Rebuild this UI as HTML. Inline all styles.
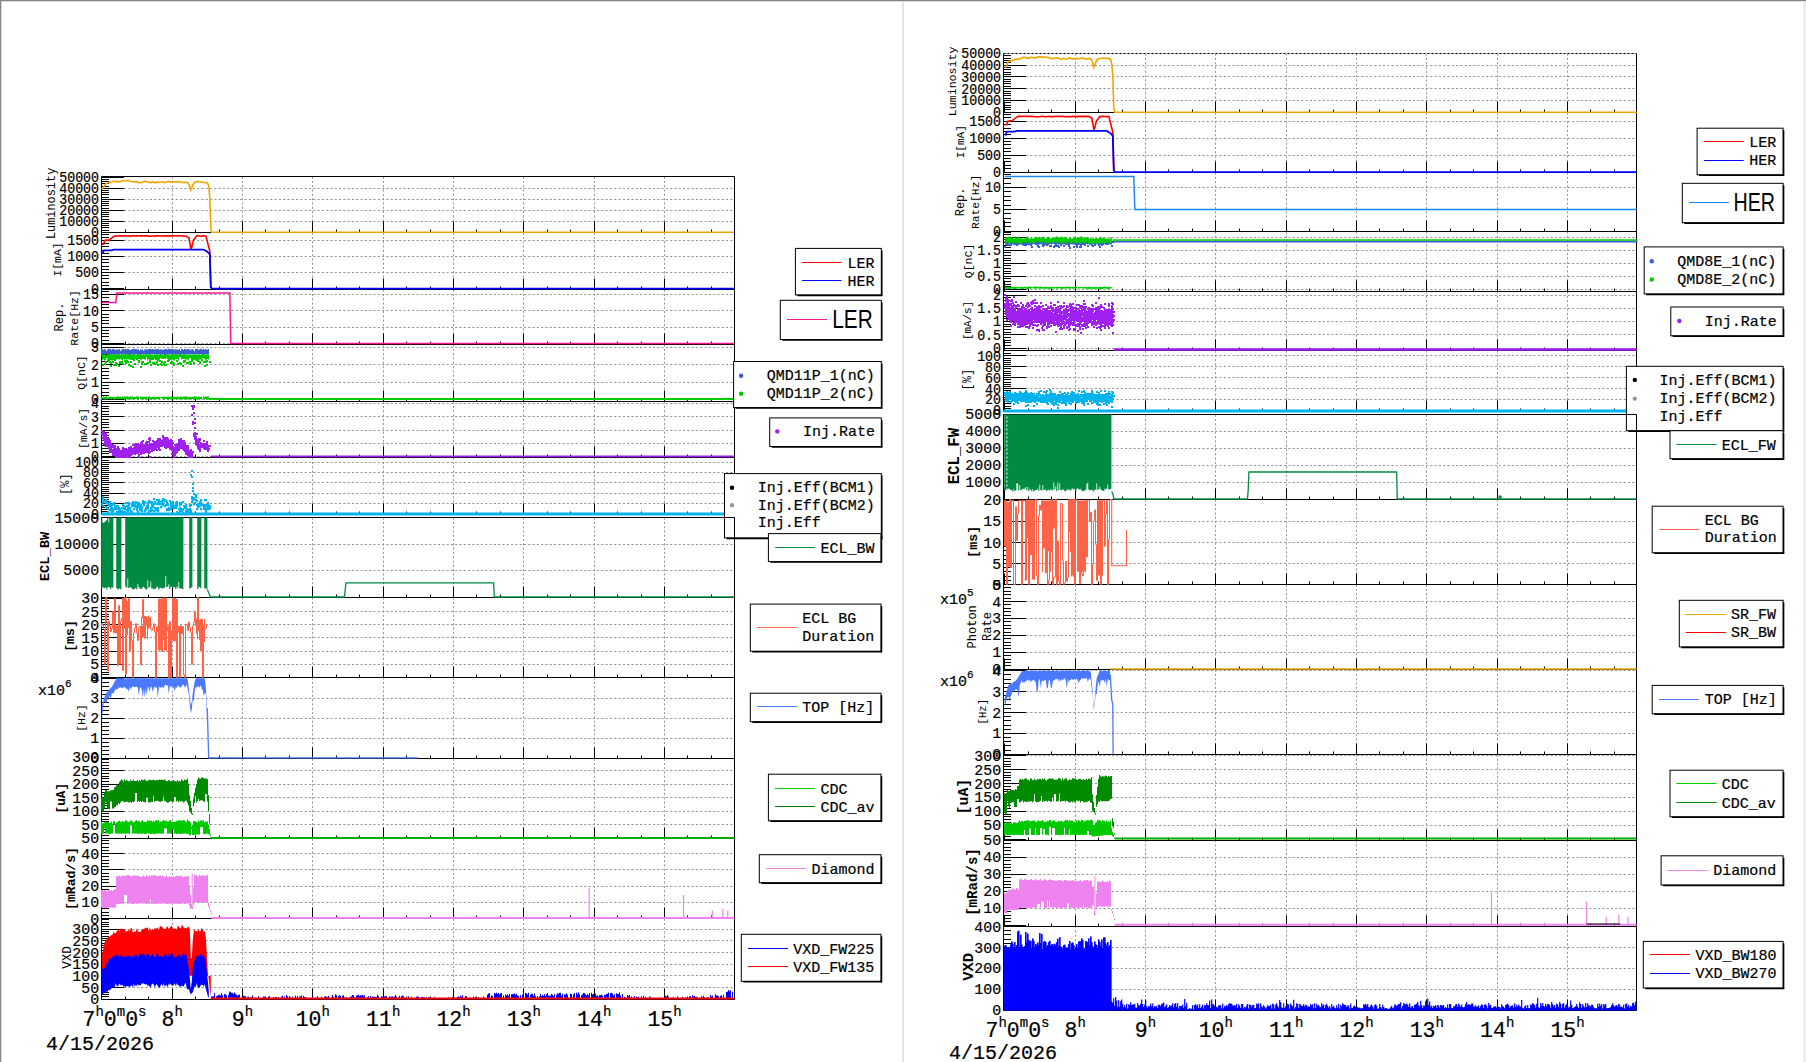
<!DOCTYPE html><html><head><meta charset="utf-8"><style>html,body{margin:0;padding:0;background:#fff;overflow:hidden}svg{display:block}</style></head><body><svg width="1806" height="1062" viewBox="0 0 1806 1062">
<rect x="0" y="0" width="1806" height="1062" fill="#fff" stroke="none" stroke-width="1"/>
<line x1="0" y1="0.5" x2="1806" y2="0.5" stroke="#848484" stroke-width="1.5"/>
<line x1="0.5" y1="0" x2="0.5" y2="1062" stroke="#848484" stroke-width="1.5"/>
<line x1="903" y1="2" x2="903" y2="1062" stroke="#e4e4e4" stroke-width="2"/>
<line x1="1804.5" y1="2" x2="1804.5" y2="1062" stroke="#e8e8e8" stroke-width="2"/>
<path d="M172.5 176.5V232.5M242.5 176.5V232.5M312.5 176.5V232.5M383.5 176.5V232.5M453.5 176.5V232.5M523.5 176.5V232.5M594.5 176.5V232.5M664.5 176.5V232.5M124 221.5H734.5M124 210.5H734.5M124 199.5H734.5M124 188.5H734.5" stroke="#999" stroke-width="1" stroke-dasharray="2.2,2.1" fill="none"/>
<path d="M172.5 232.5V289.5M242.5 232.5V289.5M312.5 232.5V289.5M383.5 232.5V289.5M453.5 232.5V289.5M523.5 232.5V289.5M594.5 232.5V289.5M664.5 232.5V289.5M124 272.5H734.5M124 256.5H734.5M124 240.5H734.5" stroke="#999" stroke-width="1" stroke-dasharray="2.2,2.1" fill="none"/>
<path d="M172.5 289.5V344.5M242.5 289.5V344.5M312.5 289.5V344.5M383.5 289.5V344.5M453.5 289.5V344.5M523.5 289.5V344.5M594.5 289.5V344.5M664.5 289.5V344.5M124 343.5H734.5M124 327.5H734.5M124 310.5H734.5M124 294.5H734.5" stroke="#999" stroke-width="1" stroke-dasharray="2.2,2.1" fill="none"/>
<path d="M172.5 344.5V401.5M242.5 344.5V401.5M312.5 344.5V401.5M383.5 344.5V401.5M453.5 344.5V401.5M523.5 344.5V401.5M594.5 344.5V401.5M664.5 344.5V401.5M124 399.5H734.5M124 382.5H734.5M124 364.5H734.5M124 347.5H734.5" stroke="#999" stroke-width="1" stroke-dasharray="2.2,2.1" fill="none"/>
<path d="M172.5 401.5V457.5M242.5 401.5V457.5M312.5 401.5V457.5M383.5 401.5V457.5M453.5 401.5V457.5M523.5 401.5V457.5M594.5 401.5V457.5M664.5 401.5V457.5M124 456.5H734.5M124 443.5H734.5M124 430.5H734.5M124 416.5H734.5M124 403.5H734.5" stroke="#999" stroke-width="1" stroke-dasharray="2.2,2.1" fill="none"/>
<path d="M172.5 457.5V514M242.5 457.5V514M312.5 457.5V514M383.5 457.5V514M453.5 457.5V514M523.5 457.5V514M594.5 457.5V514M664.5 457.5V514M124 503.5H734.5M124 493.5H734.5M124 482.5H734.5M124 472.5H734.5M124 462.5H734.5" stroke="#999" stroke-width="1" stroke-dasharray="2.2,2.1" fill="none"/>
<path d="M172.5 517.5V597.5M242.5 517.5V597.5M312.5 517.5V597.5M383.5 517.5V597.5M453.5 517.5V597.5M523.5 517.5V597.5M594.5 517.5V597.5M664.5 517.5V597.5M124 570.5H734.5M124 544.5H734.5" stroke="#999" stroke-width="1" stroke-dasharray="2.2,2.1" fill="none"/>
<path d="M172.5 597.5V677.5M242.5 597.5V677.5M312.5 597.5V677.5M383.5 597.5V677.5M453.5 597.5V677.5M523.5 597.5V677.5M594.5 597.5V677.5M664.5 597.5V677.5M124 664.5H734.5M124 651.5H734.5M124 637.5H734.5M124 624.5H734.5M124 611.5H734.5" stroke="#999" stroke-width="1" stroke-dasharray="2.2,2.1" fill="none"/>
<path d="M172.5 677.5V758.5M242.5 677.5V758.5M312.5 677.5V758.5M383.5 677.5V758.5M453.5 677.5V758.5M523.5 677.5V758.5M594.5 677.5V758.5M664.5 677.5V758.5M124 738.5H734.5M124 718.5H734.5M124 698.5H734.5" stroke="#999" stroke-width="1" stroke-dasharray="2.2,2.1" fill="none"/>
<path d="M172.5 758.5V838.5M242.5 758.5V838.5M312.5 758.5V838.5M383.5 758.5V838.5M453.5 758.5V838.5M523.5 758.5V838.5M594.5 758.5V838.5M664.5 758.5V838.5M124 824.5H734.5M124 811.5H734.5M124 797.5H734.5M124 784.5H734.5M124 770.5H734.5" stroke="#999" stroke-width="1" stroke-dasharray="2.2,2.1" fill="none"/>
<path d="M172.5 838.5V918.5M242.5 838.5V918.5M312.5 838.5V918.5M383.5 838.5V918.5M453.5 838.5V918.5M523.5 838.5V918.5M594.5 838.5V918.5M664.5 838.5V918.5M124 902.5H734.5M124 886.5H734.5M124 869.5H734.5M124 853.5H734.5" stroke="#999" stroke-width="1" stroke-dasharray="2.2,2.1" fill="none"/>
<path d="M172.5 918.5V999.5M242.5 918.5V999.5M312.5 918.5V999.5M383.5 918.5V999.5M453.5 918.5V999.5M523.5 918.5V999.5M594.5 918.5V999.5M664.5 918.5V999.5M124 987.5H734.5M124 975.5H734.5M124 964.5H734.5M124 952.5H734.5M124 940.5H734.5M124 929.5H734.5" stroke="#999" stroke-width="1" stroke-dasharray="2.2,2.1" fill="none"/>
<line x1="101.5" y1="176.5" x2="101.5" y2="232.5" stroke="#000" stroke-width="1"/>
<path d="M101.5 232.5h7.5M101.5 230.5h7.5M101.5 227.5h7.5M101.5 225.5h7.5M101.5 223.5h7.5M101.5 221.5h7.5M101.5 219.5h7.5M101.5 216.5h7.5M101.5 214.5h7.5M101.5 212.5h7.5M101.5 210.5h7.5M101.5 208.5h7.5M101.5 205.5h7.5M101.5 203.5h7.5M101.5 201.5h7.5M101.5 199.5h7.5M101.5 197.5h7.5M101.5 194.5h7.5M101.5 192.5h7.5M101.5 190.5h7.5M101.5 188.5h7.5M101.5 186.5h7.5M101.5 183.5h7.5M101.5 181.5h7.5M101.5 179.5h7.5M101.5 177.5h7.5M101.5 232.5h22.5M101.5 221.5h22.5M101.5 210.5h22.5M101.5 199.5h22.5M101.5 188.5h22.5M101.5 177.5h22.5" stroke="#000" stroke-width="1" fill="none"/>
<line x1="734.5" y1="176.5" x2="734.5" y2="232.5" stroke="#000" stroke-width="1"/>
<line x1="101.5" y1="176.5" x2="734.5" y2="176.5" stroke="#000" stroke-width="1"/>
<line x1="101.5" y1="232.5" x2="734.5" y2="232.5" stroke="#ccc" stroke-width="1"/>
<line x1="101.5" y1="232.5" x2="734.5" y2="232.5" stroke="#000" stroke-width="1" stroke-dasharray="2,2"/>
<line x1="125.5" y1="232.5" x2="125.5" y2="229.5" stroke="#000" stroke-width="1"/>
<line x1="148.5" y1="232.5" x2="148.5" y2="229.5" stroke="#000" stroke-width="1"/>
<line x1="172.5" y1="232.5" x2="172.5" y2="221.5" stroke="#000" stroke-width="1"/>
<line x1="195.5" y1="232.5" x2="195.5" y2="229.5" stroke="#000" stroke-width="1"/>
<line x1="219.5" y1="232.5" x2="219.5" y2="229.5" stroke="#000" stroke-width="1"/>
<line x1="242.5" y1="232.5" x2="242.5" y2="221.5" stroke="#000" stroke-width="1"/>
<line x1="265.5" y1="232.5" x2="265.5" y2="229.5" stroke="#000" stroke-width="1"/>
<line x1="289.5" y1="232.5" x2="289.5" y2="229.5" stroke="#000" stroke-width="1"/>
<line x1="312.5" y1="232.5" x2="312.5" y2="221.5" stroke="#000" stroke-width="1"/>
<line x1="336.5" y1="232.5" x2="336.5" y2="229.5" stroke="#000" stroke-width="1"/>
<line x1="359.5" y1="232.5" x2="359.5" y2="229.5" stroke="#000" stroke-width="1"/>
<line x1="383.5" y1="232.5" x2="383.5" y2="221.5" stroke="#000" stroke-width="1"/>
<line x1="406.5" y1="232.5" x2="406.5" y2="229.5" stroke="#000" stroke-width="1"/>
<line x1="430.5" y1="232.5" x2="430.5" y2="229.5" stroke="#000" stroke-width="1"/>
<line x1="453.5" y1="232.5" x2="453.5" y2="221.5" stroke="#000" stroke-width="1"/>
<line x1="476.5" y1="232.5" x2="476.5" y2="229.5" stroke="#000" stroke-width="1"/>
<line x1="500.5" y1="232.5" x2="500.5" y2="229.5" stroke="#000" stroke-width="1"/>
<line x1="523.5" y1="232.5" x2="523.5" y2="221.5" stroke="#000" stroke-width="1"/>
<line x1="547.5" y1="232.5" x2="547.5" y2="229.5" stroke="#000" stroke-width="1"/>
<line x1="570.5" y1="232.5" x2="570.5" y2="229.5" stroke="#000" stroke-width="1"/>
<line x1="594.5" y1="232.5" x2="594.5" y2="221.5" stroke="#000" stroke-width="1"/>
<line x1="617.5" y1="232.5" x2="617.5" y2="229.5" stroke="#000" stroke-width="1"/>
<line x1="641.5" y1="232.5" x2="641.5" y2="229.5" stroke="#000" stroke-width="1"/>
<line x1="664.5" y1="232.5" x2="664.5" y2="221.5" stroke="#000" stroke-width="1"/>
<line x1="687.5" y1="232.5" x2="687.5" y2="229.5" stroke="#000" stroke-width="1"/>
<line x1="711.5" y1="232.5" x2="711.5" y2="229.5" stroke="#000" stroke-width="1"/>
<line x1="734.5" y1="232.5" x2="734.5" y2="221.5" stroke="#000" stroke-width="1"/>
<text x="99.1" y="237.2" font-family="Liberation Mono" font-size="13.3" text-anchor="end" font-weight="normal" fill="#000" stroke="#000" stroke-width="0.2" transform="translate(0 -21.3) scale(1 1.09)">0</text>
<text x="99.1" y="226.2" font-family="Liberation Mono" font-size="13.3" text-anchor="end" font-weight="normal" fill="#000" stroke="#000" stroke-width="0.2" transform="translate(0 -20.4) scale(1 1.09)">10000</text>
<text x="99.1" y="215.2" font-family="Liberation Mono" font-size="13.3" text-anchor="end" font-weight="normal" fill="#000" stroke="#000" stroke-width="0.2" transform="translate(0 -19.4) scale(1 1.09)">20000</text>
<text x="99.1" y="204.2" font-family="Liberation Mono" font-size="13.3" text-anchor="end" font-weight="normal" fill="#000" stroke="#000" stroke-width="0.2" transform="translate(0 -18.4) scale(1 1.09)">30000</text>
<text x="99.1" y="193.2" font-family="Liberation Mono" font-size="13.3" text-anchor="end" font-weight="normal" fill="#000" stroke="#000" stroke-width="0.2" transform="translate(0 -17.4) scale(1 1.09)">40000</text>
<text x="99.1" y="182.2" font-family="Liberation Mono" font-size="13.3" text-anchor="end" font-weight="normal" fill="#000" stroke="#000" stroke-width="0.2" transform="translate(0 -16.4) scale(1 1.09)">50000</text>
<line x1="101.5" y1="232.5" x2="101.5" y2="289.5" stroke="#000" stroke-width="1"/>
<path d="M101.5 288.5h7.5M101.5 285.5h7.5M101.5 282.5h7.5M101.5 278.5h7.5M101.5 275.5h7.5M101.5 272.5h7.5M101.5 269.5h7.5M101.5 266.5h7.5M101.5 262.5h7.5M101.5 259.5h7.5M101.5 256.5h7.5M101.5 253.5h7.5M101.5 250.5h7.5M101.5 246.5h7.5M101.5 243.5h7.5M101.5 240.5h7.5M101.5 237.5h7.5M101.5 234.5h7.5M101.5 288.5h22.5M101.5 272.5h22.5M101.5 256.5h22.5M101.5 240.5h22.5" stroke="#000" stroke-width="1" fill="none"/>
<line x1="734.5" y1="232.5" x2="734.5" y2="289.5" stroke="#000" stroke-width="1"/>
<line x1="101.5" y1="232.5" x2="734.5" y2="232.5" stroke="#000" stroke-width="1"/>
<line x1="101.5" y1="289.5" x2="734.5" y2="289.5" stroke="#ccc" stroke-width="1"/>
<line x1="101.5" y1="289.5" x2="734.5" y2="289.5" stroke="#000" stroke-width="1" stroke-dasharray="2,2"/>
<line x1="125.5" y1="289.5" x2="125.5" y2="286.5" stroke="#000" stroke-width="1"/>
<line x1="148.5" y1="289.5" x2="148.5" y2="286.5" stroke="#000" stroke-width="1"/>
<line x1="172.5" y1="289.5" x2="172.5" y2="278.5" stroke="#000" stroke-width="1"/>
<line x1="195.5" y1="289.5" x2="195.5" y2="286.5" stroke="#000" stroke-width="1"/>
<line x1="219.5" y1="289.5" x2="219.5" y2="286.5" stroke="#000" stroke-width="1"/>
<line x1="242.5" y1="289.5" x2="242.5" y2="278.5" stroke="#000" stroke-width="1"/>
<line x1="265.5" y1="289.5" x2="265.5" y2="286.5" stroke="#000" stroke-width="1"/>
<line x1="289.5" y1="289.5" x2="289.5" y2="286.5" stroke="#000" stroke-width="1"/>
<line x1="312.5" y1="289.5" x2="312.5" y2="278.5" stroke="#000" stroke-width="1"/>
<line x1="336.5" y1="289.5" x2="336.5" y2="286.5" stroke="#000" stroke-width="1"/>
<line x1="359.5" y1="289.5" x2="359.5" y2="286.5" stroke="#000" stroke-width="1"/>
<line x1="383.5" y1="289.5" x2="383.5" y2="278.5" stroke="#000" stroke-width="1"/>
<line x1="406.5" y1="289.5" x2="406.5" y2="286.5" stroke="#000" stroke-width="1"/>
<line x1="430.5" y1="289.5" x2="430.5" y2="286.5" stroke="#000" stroke-width="1"/>
<line x1="453.5" y1="289.5" x2="453.5" y2="278.5" stroke="#000" stroke-width="1"/>
<line x1="476.5" y1="289.5" x2="476.5" y2="286.5" stroke="#000" stroke-width="1"/>
<line x1="500.5" y1="289.5" x2="500.5" y2="286.5" stroke="#000" stroke-width="1"/>
<line x1="523.5" y1="289.5" x2="523.5" y2="278.5" stroke="#000" stroke-width="1"/>
<line x1="547.5" y1="289.5" x2="547.5" y2="286.5" stroke="#000" stroke-width="1"/>
<line x1="570.5" y1="289.5" x2="570.5" y2="286.5" stroke="#000" stroke-width="1"/>
<line x1="594.5" y1="289.5" x2="594.5" y2="278.5" stroke="#000" stroke-width="1"/>
<line x1="617.5" y1="289.5" x2="617.5" y2="286.5" stroke="#000" stroke-width="1"/>
<line x1="641.5" y1="289.5" x2="641.5" y2="286.5" stroke="#000" stroke-width="1"/>
<line x1="664.5" y1="289.5" x2="664.5" y2="278.5" stroke="#000" stroke-width="1"/>
<line x1="687.5" y1="289.5" x2="687.5" y2="286.5" stroke="#000" stroke-width="1"/>
<line x1="711.5" y1="289.5" x2="711.5" y2="286.5" stroke="#000" stroke-width="1"/>
<line x1="734.5" y1="289.5" x2="734.5" y2="278.5" stroke="#000" stroke-width="1"/>
<text x="99.1" y="293.5" font-family="Liberation Mono" font-size="13.3" text-anchor="end" font-weight="normal" fill="#000" stroke="#000" stroke-width="0.2" transform="translate(0 -26.4) scale(1 1.09)">0</text>
<text x="99.1" y="277.4" font-family="Liberation Mono" font-size="13.3" text-anchor="end" font-weight="normal" fill="#000" stroke="#000" stroke-width="0.2" transform="translate(0 -25) scale(1 1.09)">500</text>
<text x="99.1" y="261.4" font-family="Liberation Mono" font-size="13.3" text-anchor="end" font-weight="normal" fill="#000" stroke="#000" stroke-width="0.2" transform="translate(0 -23.5) scale(1 1.09)">1000</text>
<text x="99.1" y="245.3" font-family="Liberation Mono" font-size="13.3" text-anchor="end" font-weight="normal" fill="#000" stroke="#000" stroke-width="0.2" transform="translate(0 -22.1) scale(1 1.09)">1500</text>
<line x1="101.5" y1="289.5" x2="101.5" y2="344.5" stroke="#000" stroke-width="1"/>
<path d="M101.5 343.5h7.5M101.5 340.5h7.5M101.5 336.5h7.5M101.5 333.5h7.5M101.5 330.5h7.5M101.5 327.5h7.5M101.5 323.5h7.5M101.5 320.5h7.5M101.5 317.5h7.5M101.5 314.5h7.5M101.5 310.5h7.5M101.5 307.5h7.5M101.5 304.5h7.5M101.5 301.5h7.5M101.5 297.5h7.5M101.5 294.5h7.5M101.5 291.5h7.5M101.5 343.5h22.5M101.5 327.5h22.5M101.5 310.5h22.5M101.5 294.5h22.5" stroke="#000" stroke-width="1" fill="none"/>
<line x1="734.5" y1="289.5" x2="734.5" y2="344.5" stroke="#000" stroke-width="1"/>
<line x1="101.5" y1="289.5" x2="734.5" y2="289.5" stroke="#000" stroke-width="1"/>
<line x1="101.5" y1="344.5" x2="734.5" y2="344.5" stroke="#ccc" stroke-width="1"/>
<line x1="101.5" y1="344.5" x2="734.5" y2="344.5" stroke="#000" stroke-width="1" stroke-dasharray="2,2"/>
<line x1="125.5" y1="344.5" x2="125.5" y2="341.5" stroke="#000" stroke-width="1"/>
<line x1="148.5" y1="344.5" x2="148.5" y2="341.5" stroke="#000" stroke-width="1"/>
<line x1="172.5" y1="344.5" x2="172.5" y2="333.5" stroke="#000" stroke-width="1"/>
<line x1="195.5" y1="344.5" x2="195.5" y2="341.5" stroke="#000" stroke-width="1"/>
<line x1="219.5" y1="344.5" x2="219.5" y2="341.5" stroke="#000" stroke-width="1"/>
<line x1="242.5" y1="344.5" x2="242.5" y2="333.5" stroke="#000" stroke-width="1"/>
<line x1="265.5" y1="344.5" x2="265.5" y2="341.5" stroke="#000" stroke-width="1"/>
<line x1="289.5" y1="344.5" x2="289.5" y2="341.5" stroke="#000" stroke-width="1"/>
<line x1="312.5" y1="344.5" x2="312.5" y2="333.5" stroke="#000" stroke-width="1"/>
<line x1="336.5" y1="344.5" x2="336.5" y2="341.5" stroke="#000" stroke-width="1"/>
<line x1="359.5" y1="344.5" x2="359.5" y2="341.5" stroke="#000" stroke-width="1"/>
<line x1="383.5" y1="344.5" x2="383.5" y2="333.5" stroke="#000" stroke-width="1"/>
<line x1="406.5" y1="344.5" x2="406.5" y2="341.5" stroke="#000" stroke-width="1"/>
<line x1="430.5" y1="344.5" x2="430.5" y2="341.5" stroke="#000" stroke-width="1"/>
<line x1="453.5" y1="344.5" x2="453.5" y2="333.5" stroke="#000" stroke-width="1"/>
<line x1="476.5" y1="344.5" x2="476.5" y2="341.5" stroke="#000" stroke-width="1"/>
<line x1="500.5" y1="344.5" x2="500.5" y2="341.5" stroke="#000" stroke-width="1"/>
<line x1="523.5" y1="344.5" x2="523.5" y2="333.5" stroke="#000" stroke-width="1"/>
<line x1="547.5" y1="344.5" x2="547.5" y2="341.5" stroke="#000" stroke-width="1"/>
<line x1="570.5" y1="344.5" x2="570.5" y2="341.5" stroke="#000" stroke-width="1"/>
<line x1="594.5" y1="344.5" x2="594.5" y2="333.5" stroke="#000" stroke-width="1"/>
<line x1="617.5" y1="344.5" x2="617.5" y2="341.5" stroke="#000" stroke-width="1"/>
<line x1="641.5" y1="344.5" x2="641.5" y2="341.5" stroke="#000" stroke-width="1"/>
<line x1="664.5" y1="344.5" x2="664.5" y2="333.5" stroke="#000" stroke-width="1"/>
<line x1="687.5" y1="344.5" x2="687.5" y2="341.5" stroke="#000" stroke-width="1"/>
<line x1="711.5" y1="344.5" x2="711.5" y2="341.5" stroke="#000" stroke-width="1"/>
<line x1="734.5" y1="344.5" x2="734.5" y2="333.5" stroke="#000" stroke-width="1"/>
<text x="99.1" y="348.3" font-family="Liberation Mono" font-size="13.3" text-anchor="end" font-weight="normal" fill="#000" stroke="#000" stroke-width="0.2" transform="translate(0 -31.3) scale(1 1.09)">0</text>
<text x="99.1" y="332" font-family="Liberation Mono" font-size="13.3" text-anchor="end" font-weight="normal" fill="#000" stroke="#000" stroke-width="0.2" transform="translate(0 -29.9) scale(1 1.09)">5</text>
<text x="99.1" y="315.7" font-family="Liberation Mono" font-size="13.3" text-anchor="end" font-weight="normal" fill="#000" stroke="#000" stroke-width="0.2" transform="translate(0 -28.4) scale(1 1.09)">10</text>
<text x="99.1" y="299.4" font-family="Liberation Mono" font-size="13.3" text-anchor="end" font-weight="normal" fill="#000" stroke="#000" stroke-width="0.2" transform="translate(0 -26.9) scale(1 1.09)">15</text>
<line x1="101.5" y1="344.5" x2="101.5" y2="401.5" stroke="#000" stroke-width="1"/>
<path d="M101.5 399.5h7.5M101.5 395.5h7.5M101.5 392.5h7.5M101.5 388.5h7.5M101.5 385.5h7.5M101.5 382.5h7.5M101.5 378.5h7.5M101.5 375.5h7.5M101.5 371.5h7.5M101.5 368.5h7.5M101.5 364.5h7.5M101.5 361.5h7.5M101.5 357.5h7.5M101.5 354.5h7.5M101.5 351.5h7.5M101.5 347.5h7.5M101.5 399.5h22.5M101.5 382.5h22.5M101.5 364.5h22.5M101.5 347.5h22.5" stroke="#000" stroke-width="1" fill="none"/>
<line x1="734.5" y1="344.5" x2="734.5" y2="401.5" stroke="#000" stroke-width="1"/>
<line x1="101.5" y1="344.5" x2="734.5" y2="344.5" stroke="#000" stroke-width="1"/>
<line x1="101.5" y1="401.5" x2="734.5" y2="401.5" stroke="#000" stroke-width="1"/>
<line x1="125.5" y1="401.5" x2="125.5" y2="398.5" stroke="#000" stroke-width="1"/>
<line x1="148.5" y1="401.5" x2="148.5" y2="398.5" stroke="#000" stroke-width="1"/>
<line x1="172.5" y1="401.5" x2="172.5" y2="390.5" stroke="#000" stroke-width="1"/>
<line x1="195.5" y1="401.5" x2="195.5" y2="398.5" stroke="#000" stroke-width="1"/>
<line x1="219.5" y1="401.5" x2="219.5" y2="398.5" stroke="#000" stroke-width="1"/>
<line x1="242.5" y1="401.5" x2="242.5" y2="390.5" stroke="#000" stroke-width="1"/>
<line x1="265.5" y1="401.5" x2="265.5" y2="398.5" stroke="#000" stroke-width="1"/>
<line x1="289.5" y1="401.5" x2="289.5" y2="398.5" stroke="#000" stroke-width="1"/>
<line x1="312.5" y1="401.5" x2="312.5" y2="390.5" stroke="#000" stroke-width="1"/>
<line x1="336.5" y1="401.5" x2="336.5" y2="398.5" stroke="#000" stroke-width="1"/>
<line x1="359.5" y1="401.5" x2="359.5" y2="398.5" stroke="#000" stroke-width="1"/>
<line x1="383.5" y1="401.5" x2="383.5" y2="390.5" stroke="#000" stroke-width="1"/>
<line x1="406.5" y1="401.5" x2="406.5" y2="398.5" stroke="#000" stroke-width="1"/>
<line x1="430.5" y1="401.5" x2="430.5" y2="398.5" stroke="#000" stroke-width="1"/>
<line x1="453.5" y1="401.5" x2="453.5" y2="390.5" stroke="#000" stroke-width="1"/>
<line x1="476.5" y1="401.5" x2="476.5" y2="398.5" stroke="#000" stroke-width="1"/>
<line x1="500.5" y1="401.5" x2="500.5" y2="398.5" stroke="#000" stroke-width="1"/>
<line x1="523.5" y1="401.5" x2="523.5" y2="390.5" stroke="#000" stroke-width="1"/>
<line x1="547.5" y1="401.5" x2="547.5" y2="398.5" stroke="#000" stroke-width="1"/>
<line x1="570.5" y1="401.5" x2="570.5" y2="398.5" stroke="#000" stroke-width="1"/>
<line x1="594.5" y1="401.5" x2="594.5" y2="390.5" stroke="#000" stroke-width="1"/>
<line x1="617.5" y1="401.5" x2="617.5" y2="398.5" stroke="#000" stroke-width="1"/>
<line x1="641.5" y1="401.5" x2="641.5" y2="398.5" stroke="#000" stroke-width="1"/>
<line x1="664.5" y1="401.5" x2="664.5" y2="390.5" stroke="#000" stroke-width="1"/>
<line x1="687.5" y1="401.5" x2="687.5" y2="398.5" stroke="#000" stroke-width="1"/>
<line x1="711.5" y1="401.5" x2="711.5" y2="398.5" stroke="#000" stroke-width="1"/>
<line x1="734.5" y1="401.5" x2="734.5" y2="390.5" stroke="#000" stroke-width="1"/>
<text x="99.1" y="404.2" font-family="Liberation Mono" font-size="13.3" text-anchor="end" font-weight="normal" fill="#000" stroke="#000" stroke-width="0.2" transform="translate(0 -36.4) scale(1 1.09)">0</text>
<text x="99.1" y="386.9" font-family="Liberation Mono" font-size="13.3" text-anchor="end" font-weight="normal" fill="#000" stroke="#000" stroke-width="0.2" transform="translate(0 -34.8) scale(1 1.09)">1</text>
<text x="99.1" y="369.7" font-family="Liberation Mono" font-size="13.3" text-anchor="end" font-weight="normal" fill="#000" stroke="#000" stroke-width="0.2" transform="translate(0 -33.3) scale(1 1.09)">2</text>
<text x="99.1" y="352.4" font-family="Liberation Mono" font-size="13.3" text-anchor="end" font-weight="normal" fill="#000" stroke="#000" stroke-width="0.2" transform="translate(0 -31.7) scale(1 1.09)">3</text>
<line x1="101.5" y1="401.5" x2="101.5" y2="457.5" stroke="#000" stroke-width="1"/>
<path d="M101.5 456.5h7.5M101.5 453.5h7.5M101.5 451.5h7.5M101.5 448.5h7.5M101.5 445.5h7.5M101.5 443.5h7.5M101.5 440.5h7.5M101.5 437.5h7.5M101.5 435.5h7.5M101.5 432.5h7.5M101.5 430.5h7.5M101.5 427.5h7.5M101.5 424.5h7.5M101.5 422.5h7.5M101.5 419.5h7.5M101.5 416.5h7.5M101.5 414.5h7.5M101.5 411.5h7.5M101.5 408.5h7.5M101.5 406.5h7.5M101.5 403.5h7.5M101.5 456.5h22.5M101.5 443.5h22.5M101.5 430.5h22.5M101.5 416.5h22.5M101.5 403.5h22.5" stroke="#000" stroke-width="1" fill="none"/>
<line x1="734.5" y1="401.5" x2="734.5" y2="457.5" stroke="#000" stroke-width="1"/>
<line x1="101.5" y1="401.5" x2="734.5" y2="401.5" stroke="#000" stroke-width="1"/>
<line x1="101.5" y1="457.5" x2="734.5" y2="457.5" stroke="#000" stroke-width="1"/>
<line x1="125.5" y1="457.5" x2="125.5" y2="454.5" stroke="#000" stroke-width="1"/>
<line x1="148.5" y1="457.5" x2="148.5" y2="454.5" stroke="#000" stroke-width="1"/>
<line x1="172.5" y1="457.5" x2="172.5" y2="446.5" stroke="#000" stroke-width="1"/>
<line x1="195.5" y1="457.5" x2="195.5" y2="454.5" stroke="#000" stroke-width="1"/>
<line x1="219.5" y1="457.5" x2="219.5" y2="454.5" stroke="#000" stroke-width="1"/>
<line x1="242.5" y1="457.5" x2="242.5" y2="446.5" stroke="#000" stroke-width="1"/>
<line x1="265.5" y1="457.5" x2="265.5" y2="454.5" stroke="#000" stroke-width="1"/>
<line x1="289.5" y1="457.5" x2="289.5" y2="454.5" stroke="#000" stroke-width="1"/>
<line x1="312.5" y1="457.5" x2="312.5" y2="446.5" stroke="#000" stroke-width="1"/>
<line x1="336.5" y1="457.5" x2="336.5" y2="454.5" stroke="#000" stroke-width="1"/>
<line x1="359.5" y1="457.5" x2="359.5" y2="454.5" stroke="#000" stroke-width="1"/>
<line x1="383.5" y1="457.5" x2="383.5" y2="446.5" stroke="#000" stroke-width="1"/>
<line x1="406.5" y1="457.5" x2="406.5" y2="454.5" stroke="#000" stroke-width="1"/>
<line x1="430.5" y1="457.5" x2="430.5" y2="454.5" stroke="#000" stroke-width="1"/>
<line x1="453.5" y1="457.5" x2="453.5" y2="446.5" stroke="#000" stroke-width="1"/>
<line x1="476.5" y1="457.5" x2="476.5" y2="454.5" stroke="#000" stroke-width="1"/>
<line x1="500.5" y1="457.5" x2="500.5" y2="454.5" stroke="#000" stroke-width="1"/>
<line x1="523.5" y1="457.5" x2="523.5" y2="446.5" stroke="#000" stroke-width="1"/>
<line x1="547.5" y1="457.5" x2="547.5" y2="454.5" stroke="#000" stroke-width="1"/>
<line x1="570.5" y1="457.5" x2="570.5" y2="454.5" stroke="#000" stroke-width="1"/>
<line x1="594.5" y1="457.5" x2="594.5" y2="446.5" stroke="#000" stroke-width="1"/>
<line x1="617.5" y1="457.5" x2="617.5" y2="454.5" stroke="#000" stroke-width="1"/>
<line x1="641.5" y1="457.5" x2="641.5" y2="454.5" stroke="#000" stroke-width="1"/>
<line x1="664.5" y1="457.5" x2="664.5" y2="446.5" stroke="#000" stroke-width="1"/>
<line x1="687.5" y1="457.5" x2="687.5" y2="454.5" stroke="#000" stroke-width="1"/>
<line x1="711.5" y1="457.5" x2="711.5" y2="454.5" stroke="#000" stroke-width="1"/>
<line x1="734.5" y1="457.5" x2="734.5" y2="446.5" stroke="#000" stroke-width="1"/>
<text x="99.1" y="461.3" font-family="Liberation Mono" font-size="13.3" text-anchor="end" font-weight="normal" fill="#000" stroke="#000" stroke-width="0.2" transform="translate(0 -41.5) scale(1 1.09)">0</text>
<text x="99.1" y="448.1" font-family="Liberation Mono" font-size="13.3" text-anchor="end" font-weight="normal" fill="#000" stroke="#000" stroke-width="0.2" transform="translate(0 -40.3) scale(1 1.09)">1</text>
<text x="99.1" y="434.9" font-family="Liberation Mono" font-size="13.3" text-anchor="end" font-weight="normal" fill="#000" stroke="#000" stroke-width="0.2" transform="translate(0 -39.1) scale(1 1.09)">2</text>
<text x="99.1" y="421.7" font-family="Liberation Mono" font-size="13.3" text-anchor="end" font-weight="normal" fill="#000" stroke="#000" stroke-width="0.2" transform="translate(0 -37.9) scale(1 1.09)">3</text>
<text x="99.1" y="408.5" font-family="Liberation Mono" font-size="13.3" text-anchor="end" font-weight="normal" fill="#000" stroke="#000" stroke-width="0.2" transform="translate(0 -36.8) scale(1 1.09)">4</text>
<line x1="101.5" y1="457.5" x2="101.5" y2="514" stroke="#000" stroke-width="1"/>
<path d="M101.5 513.5h7.5M101.5 511.5h7.5M101.5 509.5h7.5M101.5 507.5h7.5M101.5 505.5h7.5M101.5 503.5h7.5M101.5 501.5h7.5M101.5 499.5h7.5M101.5 497.5h7.5M101.5 495.5h7.5M101.5 493.5h7.5M101.5 491.5h7.5M101.5 489.5h7.5M101.5 487.5h7.5M101.5 484.5h7.5M101.5 482.5h7.5M101.5 480.5h7.5M101.5 478.5h7.5M101.5 476.5h7.5M101.5 474.5h7.5M101.5 472.5h7.5M101.5 470.5h7.5M101.5 468.5h7.5M101.5 466.5h7.5M101.5 464.5h7.5M101.5 462.5h7.5M101.5 460.5h7.5M101.5 513.5h22.5M101.5 503.5h22.5M101.5 493.5h22.5M101.5 482.5h22.5M101.5 472.5h22.5M101.5 462.5h22.5" stroke="#000" stroke-width="1" fill="none"/>
<line x1="734.5" y1="457.5" x2="734.5" y2="514" stroke="#000" stroke-width="1"/>
<line x1="101.5" y1="457.5" x2="734.5" y2="457.5" stroke="#000" stroke-width="1"/>
<line x1="101.5" y1="514.5" x2="734.5" y2="514.5" stroke="#000" stroke-width="1"/>
<line x1="125.5" y1="514.5" x2="125.5" y2="511.5" stroke="#000" stroke-width="1"/>
<line x1="148.5" y1="514.5" x2="148.5" y2="511.5" stroke="#000" stroke-width="1"/>
<line x1="172.5" y1="514.5" x2="172.5" y2="503.5" stroke="#000" stroke-width="1"/>
<line x1="195.5" y1="514.5" x2="195.5" y2="511.5" stroke="#000" stroke-width="1"/>
<line x1="219.5" y1="514.5" x2="219.5" y2="511.5" stroke="#000" stroke-width="1"/>
<line x1="242.5" y1="514.5" x2="242.5" y2="503.5" stroke="#000" stroke-width="1"/>
<line x1="265.5" y1="514.5" x2="265.5" y2="511.5" stroke="#000" stroke-width="1"/>
<line x1="289.5" y1="514.5" x2="289.5" y2="511.5" stroke="#000" stroke-width="1"/>
<line x1="312.5" y1="514.5" x2="312.5" y2="503.5" stroke="#000" stroke-width="1"/>
<line x1="336.5" y1="514.5" x2="336.5" y2="511.5" stroke="#000" stroke-width="1"/>
<line x1="359.5" y1="514.5" x2="359.5" y2="511.5" stroke="#000" stroke-width="1"/>
<line x1="383.5" y1="514.5" x2="383.5" y2="503.5" stroke="#000" stroke-width="1"/>
<line x1="406.5" y1="514.5" x2="406.5" y2="511.5" stroke="#000" stroke-width="1"/>
<line x1="430.5" y1="514.5" x2="430.5" y2="511.5" stroke="#000" stroke-width="1"/>
<line x1="453.5" y1="514.5" x2="453.5" y2="503.5" stroke="#000" stroke-width="1"/>
<line x1="476.5" y1="514.5" x2="476.5" y2="511.5" stroke="#000" stroke-width="1"/>
<line x1="500.5" y1="514.5" x2="500.5" y2="511.5" stroke="#000" stroke-width="1"/>
<line x1="523.5" y1="514.5" x2="523.5" y2="503.5" stroke="#000" stroke-width="1"/>
<line x1="547.5" y1="514.5" x2="547.5" y2="511.5" stroke="#000" stroke-width="1"/>
<line x1="570.5" y1="514.5" x2="570.5" y2="511.5" stroke="#000" stroke-width="1"/>
<line x1="594.5" y1="514.5" x2="594.5" y2="503.5" stroke="#000" stroke-width="1"/>
<line x1="617.5" y1="514.5" x2="617.5" y2="511.5" stroke="#000" stroke-width="1"/>
<line x1="641.5" y1="514.5" x2="641.5" y2="511.5" stroke="#000" stroke-width="1"/>
<line x1="664.5" y1="514.5" x2="664.5" y2="503.5" stroke="#000" stroke-width="1"/>
<line x1="687.5" y1="514.5" x2="687.5" y2="511.5" stroke="#000" stroke-width="1"/>
<line x1="711.5" y1="514.5" x2="711.5" y2="511.5" stroke="#000" stroke-width="1"/>
<line x1="734.5" y1="514.5" x2="734.5" y2="503.5" stroke="#000" stroke-width="1"/>
<text x="99.1" y="518.7" font-family="Liberation Mono" font-size="13.3" text-anchor="end" font-weight="normal" fill="#000" stroke="#000" stroke-width="0.2" transform="translate(0 -46.7) scale(1 1.09)">0</text>
<text x="99.1" y="508.4" font-family="Liberation Mono" font-size="13.3" text-anchor="end" font-weight="normal" fill="#000" stroke="#000" stroke-width="0.2" transform="translate(0 -45.8) scale(1 1.09)">20</text>
<text x="99.1" y="498.1" font-family="Liberation Mono" font-size="13.3" text-anchor="end" font-weight="normal" fill="#000" stroke="#000" stroke-width="0.2" transform="translate(0 -44.8) scale(1 1.09)">40</text>
<text x="99.1" y="487.8" font-family="Liberation Mono" font-size="13.3" text-anchor="end" font-weight="normal" fill="#000" stroke="#000" stroke-width="0.2" transform="translate(0 -43.9) scale(1 1.09)">60</text>
<text x="99.1" y="477.5" font-family="Liberation Mono" font-size="13.3" text-anchor="end" font-weight="normal" fill="#000" stroke="#000" stroke-width="0.2" transform="translate(0 -43) scale(1 1.09)">80</text>
<text x="99.1" y="467.2" font-family="Liberation Mono" font-size="13.3" text-anchor="end" font-weight="normal" fill="#000" stroke="#000" stroke-width="0.2" transform="translate(0 -42) scale(1 1.09)">100</text>
<line x1="101.5" y1="517.5" x2="101.5" y2="597.5" stroke="#000" stroke-width="1"/>
<path d="M101.5 570.5h22.5M101.5 544.5h22.5M101.5 517.5h22.5" stroke="#000" stroke-width="1" fill="none"/>
<line x1="734.5" y1="517.5" x2="734.5" y2="597.5" stroke="#000" stroke-width="1"/>
<line x1="101.5" y1="517.5" x2="734.5" y2="517.5" stroke="#000" stroke-width="1"/>
<line x1="101.5" y1="597.5" x2="734.5" y2="597.5" stroke="#000" stroke-width="1"/>
<line x1="125.5" y1="597.5" x2="125.5" y2="594.5" stroke="#000" stroke-width="1"/>
<line x1="148.5" y1="597.5" x2="148.5" y2="594.5" stroke="#000" stroke-width="1"/>
<line x1="172.5" y1="597.5" x2="172.5" y2="586.5" stroke="#000" stroke-width="1"/>
<line x1="195.5" y1="597.5" x2="195.5" y2="594.5" stroke="#000" stroke-width="1"/>
<line x1="219.5" y1="597.5" x2="219.5" y2="594.5" stroke="#000" stroke-width="1"/>
<line x1="242.5" y1="597.5" x2="242.5" y2="586.5" stroke="#000" stroke-width="1"/>
<line x1="265.5" y1="597.5" x2="265.5" y2="594.5" stroke="#000" stroke-width="1"/>
<line x1="289.5" y1="597.5" x2="289.5" y2="594.5" stroke="#000" stroke-width="1"/>
<line x1="312.5" y1="597.5" x2="312.5" y2="586.5" stroke="#000" stroke-width="1"/>
<line x1="336.5" y1="597.5" x2="336.5" y2="594.5" stroke="#000" stroke-width="1"/>
<line x1="359.5" y1="597.5" x2="359.5" y2="594.5" stroke="#000" stroke-width="1"/>
<line x1="383.5" y1="597.5" x2="383.5" y2="586.5" stroke="#000" stroke-width="1"/>
<line x1="406.5" y1="597.5" x2="406.5" y2="594.5" stroke="#000" stroke-width="1"/>
<line x1="430.5" y1="597.5" x2="430.5" y2="594.5" stroke="#000" stroke-width="1"/>
<line x1="453.5" y1="597.5" x2="453.5" y2="586.5" stroke="#000" stroke-width="1"/>
<line x1="476.5" y1="597.5" x2="476.5" y2="594.5" stroke="#000" stroke-width="1"/>
<line x1="500.5" y1="597.5" x2="500.5" y2="594.5" stroke="#000" stroke-width="1"/>
<line x1="523.5" y1="597.5" x2="523.5" y2="586.5" stroke="#000" stroke-width="1"/>
<line x1="547.5" y1="597.5" x2="547.5" y2="594.5" stroke="#000" stroke-width="1"/>
<line x1="570.5" y1="597.5" x2="570.5" y2="594.5" stroke="#000" stroke-width="1"/>
<line x1="594.5" y1="597.5" x2="594.5" y2="586.5" stroke="#000" stroke-width="1"/>
<line x1="617.5" y1="597.5" x2="617.5" y2="594.5" stroke="#000" stroke-width="1"/>
<line x1="641.5" y1="597.5" x2="641.5" y2="594.5" stroke="#000" stroke-width="1"/>
<line x1="664.5" y1="597.5" x2="664.5" y2="586.5" stroke="#000" stroke-width="1"/>
<line x1="687.5" y1="597.5" x2="687.5" y2="594.5" stroke="#000" stroke-width="1"/>
<line x1="711.5" y1="597.5" x2="711.5" y2="594.5" stroke="#000" stroke-width="1"/>
<line x1="734.5" y1="597.5" x2="734.5" y2="586.5" stroke="#000" stroke-width="1"/>
<text x="99.1" y="575.3" font-family="Liberation Mono" font-size="14.9" text-anchor="end" font-weight="normal" fill="#000" stroke="#000" stroke-width="0.2">5000</text>
<text x="99.1" y="549.1" font-family="Liberation Mono" font-size="14.9" text-anchor="end" font-weight="normal" fill="#000" stroke="#000" stroke-width="0.2">10000</text>
<text x="99.1" y="522.9" font-family="Liberation Mono" font-size="14.9" text-anchor="end" font-weight="normal" fill="#000" stroke="#000" stroke-width="0.2">15000</text>
<line x1="101.5" y1="597.5" x2="101.5" y2="677.5" stroke="#000" stroke-width="1"/>
<path d="M101.5 677.5h7.5M101.5 674.5h7.5M101.5 672.5h7.5M101.5 669.5h7.5M101.5 666.5h7.5M101.5 664.5h7.5M101.5 661.5h7.5M101.5 659.5h7.5M101.5 656.5h7.5M101.5 653.5h7.5M101.5 651.5h7.5M101.5 648.5h7.5M101.5 645.5h7.5M101.5 643.5h7.5M101.5 640.5h7.5M101.5 637.5h7.5M101.5 635.5h7.5M101.5 632.5h7.5M101.5 629.5h7.5M101.5 627.5h7.5M101.5 624.5h7.5M101.5 622.5h7.5M101.5 619.5h7.5M101.5 616.5h7.5M101.5 614.5h7.5M101.5 611.5h7.5M101.5 608.5h7.5M101.5 606.5h7.5M101.5 603.5h7.5M101.5 600.5h7.5M101.5 598.5h7.5M101.5 677.5h22.5M101.5 664.5h22.5M101.5 651.5h22.5M101.5 637.5h22.5M101.5 624.5h22.5M101.5 611.5h22.5M101.5 598.5h22.5" stroke="#000" stroke-width="1" fill="none"/>
<line x1="734.5" y1="597.5" x2="734.5" y2="677.5" stroke="#000" stroke-width="1"/>
<line x1="101.5" y1="597.5" x2="734.5" y2="597.5" stroke="#000" stroke-width="1"/>
<line x1="101.5" y1="677.5" x2="734.5" y2="677.5" stroke="#000" stroke-width="1"/>
<line x1="125.5" y1="677.5" x2="125.5" y2="674.5" stroke="#000" stroke-width="1"/>
<line x1="148.5" y1="677.5" x2="148.5" y2="674.5" stroke="#000" stroke-width="1"/>
<line x1="172.5" y1="677.5" x2="172.5" y2="666.5" stroke="#000" stroke-width="1"/>
<line x1="195.5" y1="677.5" x2="195.5" y2="674.5" stroke="#000" stroke-width="1"/>
<line x1="219.5" y1="677.5" x2="219.5" y2="674.5" stroke="#000" stroke-width="1"/>
<line x1="242.5" y1="677.5" x2="242.5" y2="666.5" stroke="#000" stroke-width="1"/>
<line x1="265.5" y1="677.5" x2="265.5" y2="674.5" stroke="#000" stroke-width="1"/>
<line x1="289.5" y1="677.5" x2="289.5" y2="674.5" stroke="#000" stroke-width="1"/>
<line x1="312.5" y1="677.5" x2="312.5" y2="666.5" stroke="#000" stroke-width="1"/>
<line x1="336.5" y1="677.5" x2="336.5" y2="674.5" stroke="#000" stroke-width="1"/>
<line x1="359.5" y1="677.5" x2="359.5" y2="674.5" stroke="#000" stroke-width="1"/>
<line x1="383.5" y1="677.5" x2="383.5" y2="666.5" stroke="#000" stroke-width="1"/>
<line x1="406.5" y1="677.5" x2="406.5" y2="674.5" stroke="#000" stroke-width="1"/>
<line x1="430.5" y1="677.5" x2="430.5" y2="674.5" stroke="#000" stroke-width="1"/>
<line x1="453.5" y1="677.5" x2="453.5" y2="666.5" stroke="#000" stroke-width="1"/>
<line x1="476.5" y1="677.5" x2="476.5" y2="674.5" stroke="#000" stroke-width="1"/>
<line x1="500.5" y1="677.5" x2="500.5" y2="674.5" stroke="#000" stroke-width="1"/>
<line x1="523.5" y1="677.5" x2="523.5" y2="666.5" stroke="#000" stroke-width="1"/>
<line x1="547.5" y1="677.5" x2="547.5" y2="674.5" stroke="#000" stroke-width="1"/>
<line x1="570.5" y1="677.5" x2="570.5" y2="674.5" stroke="#000" stroke-width="1"/>
<line x1="594.5" y1="677.5" x2="594.5" y2="666.5" stroke="#000" stroke-width="1"/>
<line x1="617.5" y1="677.5" x2="617.5" y2="674.5" stroke="#000" stroke-width="1"/>
<line x1="641.5" y1="677.5" x2="641.5" y2="674.5" stroke="#000" stroke-width="1"/>
<line x1="664.5" y1="677.5" x2="664.5" y2="666.5" stroke="#000" stroke-width="1"/>
<line x1="687.5" y1="677.5" x2="687.5" y2="674.5" stroke="#000" stroke-width="1"/>
<line x1="711.5" y1="677.5" x2="711.5" y2="674.5" stroke="#000" stroke-width="1"/>
<line x1="734.5" y1="677.5" x2="734.5" y2="666.5" stroke="#000" stroke-width="1"/>
<text x="99.1" y="682.5" font-family="Liberation Mono" font-size="14.9" text-anchor="end" font-weight="normal" fill="#000" stroke="#000" stroke-width="0.2">0</text>
<text x="99.1" y="669.3" font-family="Liberation Mono" font-size="14.9" text-anchor="end" font-weight="normal" fill="#000" stroke="#000" stroke-width="0.2">5</text>
<text x="99.1" y="656.1" font-family="Liberation Mono" font-size="14.9" text-anchor="end" font-weight="normal" fill="#000" stroke="#000" stroke-width="0.2">10</text>
<text x="99.1" y="642.9" font-family="Liberation Mono" font-size="14.9" text-anchor="end" font-weight="normal" fill="#000" stroke="#000" stroke-width="0.2">15</text>
<text x="99.1" y="629.7" font-family="Liberation Mono" font-size="14.9" text-anchor="end" font-weight="normal" fill="#000" stroke="#000" stroke-width="0.2">20</text>
<text x="99.1" y="616.5" font-family="Liberation Mono" font-size="14.9" text-anchor="end" font-weight="normal" fill="#000" stroke="#000" stroke-width="0.2">25</text>
<text x="99.1" y="603.3" font-family="Liberation Mono" font-size="14.9" text-anchor="end" font-weight="normal" fill="#000" stroke="#000" stroke-width="0.2">30</text>
<line x1="101.5" y1="677.5" x2="101.5" y2="758.5" stroke="#000" stroke-width="1"/>
<path d="M101.5 758.5h7.5M101.5 754.5h7.5M101.5 750.5h7.5M101.5 746.5h7.5M101.5 742.5h7.5M101.5 738.5h7.5M101.5 734.5h7.5M101.5 730.5h7.5M101.5 726.5h7.5M101.5 722.5h7.5M101.5 718.5h7.5M101.5 714.5h7.5M101.5 710.5h7.5M101.5 706.5h7.5M101.5 702.5h7.5M101.5 698.5h7.5M101.5 694.5h7.5M101.5 690.5h7.5M101.5 686.5h7.5M101.5 682.5h7.5M101.5 678.5h7.5M101.5 758.5h22.5M101.5 738.5h22.5M101.5 718.5h22.5M101.5 698.5h22.5M101.5 678.5h22.5" stroke="#000" stroke-width="1" fill="none"/>
<line x1="734.5" y1="677.5" x2="734.5" y2="758.5" stroke="#000" stroke-width="1"/>
<line x1="101.5" y1="677.5" x2="734.5" y2="677.5" stroke="#000" stroke-width="1"/>
<line x1="101.5" y1="758.5" x2="734.5" y2="758.5" stroke="#000" stroke-width="1"/>
<line x1="125.5" y1="758.5" x2="125.5" y2="755.5" stroke="#000" stroke-width="1"/>
<line x1="148.5" y1="758.5" x2="148.5" y2="755.5" stroke="#000" stroke-width="1"/>
<line x1="172.5" y1="758.5" x2="172.5" y2="747.5" stroke="#000" stroke-width="1"/>
<line x1="195.5" y1="758.5" x2="195.5" y2="755.5" stroke="#000" stroke-width="1"/>
<line x1="219.5" y1="758.5" x2="219.5" y2="755.5" stroke="#000" stroke-width="1"/>
<line x1="242.5" y1="758.5" x2="242.5" y2="747.5" stroke="#000" stroke-width="1"/>
<line x1="265.5" y1="758.5" x2="265.5" y2="755.5" stroke="#000" stroke-width="1"/>
<line x1="289.5" y1="758.5" x2="289.5" y2="755.5" stroke="#000" stroke-width="1"/>
<line x1="312.5" y1="758.5" x2="312.5" y2="747.5" stroke="#000" stroke-width="1"/>
<line x1="336.5" y1="758.5" x2="336.5" y2="755.5" stroke="#000" stroke-width="1"/>
<line x1="359.5" y1="758.5" x2="359.5" y2="755.5" stroke="#000" stroke-width="1"/>
<line x1="383.5" y1="758.5" x2="383.5" y2="747.5" stroke="#000" stroke-width="1"/>
<line x1="406.5" y1="758.5" x2="406.5" y2="755.5" stroke="#000" stroke-width="1"/>
<line x1="430.5" y1="758.5" x2="430.5" y2="755.5" stroke="#000" stroke-width="1"/>
<line x1="453.5" y1="758.5" x2="453.5" y2="747.5" stroke="#000" stroke-width="1"/>
<line x1="476.5" y1="758.5" x2="476.5" y2="755.5" stroke="#000" stroke-width="1"/>
<line x1="500.5" y1="758.5" x2="500.5" y2="755.5" stroke="#000" stroke-width="1"/>
<line x1="523.5" y1="758.5" x2="523.5" y2="747.5" stroke="#000" stroke-width="1"/>
<line x1="547.5" y1="758.5" x2="547.5" y2="755.5" stroke="#000" stroke-width="1"/>
<line x1="570.5" y1="758.5" x2="570.5" y2="755.5" stroke="#000" stroke-width="1"/>
<line x1="594.5" y1="758.5" x2="594.5" y2="747.5" stroke="#000" stroke-width="1"/>
<line x1="617.5" y1="758.5" x2="617.5" y2="755.5" stroke="#000" stroke-width="1"/>
<line x1="641.5" y1="758.5" x2="641.5" y2="755.5" stroke="#000" stroke-width="1"/>
<line x1="664.5" y1="758.5" x2="664.5" y2="747.5" stroke="#000" stroke-width="1"/>
<line x1="687.5" y1="758.5" x2="687.5" y2="755.5" stroke="#000" stroke-width="1"/>
<line x1="711.5" y1="758.5" x2="711.5" y2="755.5" stroke="#000" stroke-width="1"/>
<line x1="734.5" y1="758.5" x2="734.5" y2="747.5" stroke="#000" stroke-width="1"/>
<text x="99.1" y="763.4" font-family="Liberation Mono" font-size="14.9" text-anchor="end" font-weight="normal" fill="#000" stroke="#000" stroke-width="0.2">0</text>
<text x="99.1" y="743.3" font-family="Liberation Mono" font-size="14.9" text-anchor="end" font-weight="normal" fill="#000" stroke="#000" stroke-width="0.2">1</text>
<text x="99.1" y="723.3" font-family="Liberation Mono" font-size="14.9" text-anchor="end" font-weight="normal" fill="#000" stroke="#000" stroke-width="0.2">2</text>
<text x="99.1" y="703.2" font-family="Liberation Mono" font-size="14.9" text-anchor="end" font-weight="normal" fill="#000" stroke="#000" stroke-width="0.2">3</text>
<text x="99.1" y="683.2" font-family="Liberation Mono" font-size="14.9" text-anchor="end" font-weight="normal" fill="#000" stroke="#000" stroke-width="0.2">4</text>
<line x1="101.5" y1="758.5" x2="101.5" y2="838.5" stroke="#000" stroke-width="1"/>
<path d="M101.5 838.5h7.5M101.5 835.5h7.5M101.5 832.5h7.5M101.5 829.5h7.5M101.5 827.5h7.5M101.5 824.5h7.5M101.5 821.5h7.5M101.5 819.5h7.5M101.5 816.5h7.5M101.5 813.5h7.5M101.5 811.5h7.5M101.5 808.5h7.5M101.5 805.5h7.5M101.5 803.5h7.5M101.5 800.5h7.5M101.5 797.5h7.5M101.5 794.5h7.5M101.5 792.5h7.5M101.5 789.5h7.5M101.5 786.5h7.5M101.5 784.5h7.5M101.5 781.5h7.5M101.5 778.5h7.5M101.5 776.5h7.5M101.5 773.5h7.5M101.5 770.5h7.5M101.5 768.5h7.5M101.5 765.5h7.5M101.5 762.5h7.5M101.5 759.5h7.5M101.5 838.5h22.5M101.5 824.5h22.5M101.5 811.5h22.5M101.5 797.5h22.5M101.5 784.5h22.5M101.5 770.5h22.5" stroke="#000" stroke-width="1" fill="none"/>
<line x1="734.5" y1="758.5" x2="734.5" y2="838.5" stroke="#000" stroke-width="1"/>
<line x1="101.5" y1="758.5" x2="734.5" y2="758.5" stroke="#000" stroke-width="1"/>
<line x1="101.5" y1="838.5" x2="734.5" y2="838.5" stroke="#000" stroke-width="1"/>
<line x1="125.5" y1="838.5" x2="125.5" y2="835.5" stroke="#000" stroke-width="1"/>
<line x1="148.5" y1="838.5" x2="148.5" y2="835.5" stroke="#000" stroke-width="1"/>
<line x1="172.5" y1="838.5" x2="172.5" y2="827.5" stroke="#000" stroke-width="1"/>
<line x1="195.5" y1="838.5" x2="195.5" y2="835.5" stroke="#000" stroke-width="1"/>
<line x1="219.5" y1="838.5" x2="219.5" y2="835.5" stroke="#000" stroke-width="1"/>
<line x1="242.5" y1="838.5" x2="242.5" y2="827.5" stroke="#000" stroke-width="1"/>
<line x1="265.5" y1="838.5" x2="265.5" y2="835.5" stroke="#000" stroke-width="1"/>
<line x1="289.5" y1="838.5" x2="289.5" y2="835.5" stroke="#000" stroke-width="1"/>
<line x1="312.5" y1="838.5" x2="312.5" y2="827.5" stroke="#000" stroke-width="1"/>
<line x1="336.5" y1="838.5" x2="336.5" y2="835.5" stroke="#000" stroke-width="1"/>
<line x1="359.5" y1="838.5" x2="359.5" y2="835.5" stroke="#000" stroke-width="1"/>
<line x1="383.5" y1="838.5" x2="383.5" y2="827.5" stroke="#000" stroke-width="1"/>
<line x1="406.5" y1="838.5" x2="406.5" y2="835.5" stroke="#000" stroke-width="1"/>
<line x1="430.5" y1="838.5" x2="430.5" y2="835.5" stroke="#000" stroke-width="1"/>
<line x1="453.5" y1="838.5" x2="453.5" y2="827.5" stroke="#000" stroke-width="1"/>
<line x1="476.5" y1="838.5" x2="476.5" y2="835.5" stroke="#000" stroke-width="1"/>
<line x1="500.5" y1="838.5" x2="500.5" y2="835.5" stroke="#000" stroke-width="1"/>
<line x1="523.5" y1="838.5" x2="523.5" y2="827.5" stroke="#000" stroke-width="1"/>
<line x1="547.5" y1="838.5" x2="547.5" y2="835.5" stroke="#000" stroke-width="1"/>
<line x1="570.5" y1="838.5" x2="570.5" y2="835.5" stroke="#000" stroke-width="1"/>
<line x1="594.5" y1="838.5" x2="594.5" y2="827.5" stroke="#000" stroke-width="1"/>
<line x1="617.5" y1="838.5" x2="617.5" y2="835.5" stroke="#000" stroke-width="1"/>
<line x1="641.5" y1="838.5" x2="641.5" y2="835.5" stroke="#000" stroke-width="1"/>
<line x1="664.5" y1="838.5" x2="664.5" y2="827.5" stroke="#000" stroke-width="1"/>
<line x1="687.5" y1="838.5" x2="687.5" y2="835.5" stroke="#000" stroke-width="1"/>
<line x1="711.5" y1="838.5" x2="711.5" y2="835.5" stroke="#000" stroke-width="1"/>
<line x1="734.5" y1="838.5" x2="734.5" y2="827.5" stroke="#000" stroke-width="1"/>
<text x="99.1" y="829.5" font-family="Liberation Mono" font-size="14.9" text-anchor="end" font-weight="normal" fill="#000" stroke="#000" stroke-width="0.2">50</text>
<text x="99.1" y="816.1" font-family="Liberation Mono" font-size="14.9" text-anchor="end" font-weight="normal" fill="#000" stroke="#000" stroke-width="0.2">100</text>
<text x="99.1" y="802.6" font-family="Liberation Mono" font-size="14.9" text-anchor="end" font-weight="normal" fill="#000" stroke="#000" stroke-width="0.2">150</text>
<text x="99.1" y="789.2" font-family="Liberation Mono" font-size="14.9" text-anchor="end" font-weight="normal" fill="#000" stroke="#000" stroke-width="0.2">200</text>
<text x="99.1" y="775.7" font-family="Liberation Mono" font-size="14.9" text-anchor="end" font-weight="normal" fill="#000" stroke="#000" stroke-width="0.2">250</text>
<text x="99.1" y="762.3" font-family="Liberation Mono" font-size="14.9" text-anchor="end" font-weight="normal" fill="#000" stroke="#000" stroke-width="0.2">300</text>
<line x1="101.5" y1="838.5" x2="101.5" y2="918.5" stroke="#000" stroke-width="1"/>
<path d="M101.5 918.5h7.5M101.5 915.5h7.5M101.5 912.5h7.5M101.5 908.5h7.5M101.5 905.5h7.5M101.5 902.5h7.5M101.5 899.5h7.5M101.5 895.5h7.5M101.5 892.5h7.5M101.5 889.5h7.5M101.5 886.5h7.5M101.5 882.5h7.5M101.5 879.5h7.5M101.5 876.5h7.5M101.5 873.5h7.5M101.5 869.5h7.5M101.5 866.5h7.5M101.5 863.5h7.5M101.5 860.5h7.5M101.5 856.5h7.5M101.5 853.5h7.5M101.5 850.5h7.5M101.5 847.5h7.5M101.5 843.5h7.5M101.5 840.5h7.5M101.5 918.5h22.5M101.5 902.5h22.5M101.5 886.5h22.5M101.5 869.5h22.5M101.5 853.5h22.5" stroke="#000" stroke-width="1" fill="none"/>
<line x1="734.5" y1="838.5" x2="734.5" y2="918.5" stroke="#000" stroke-width="1"/>
<line x1="101.5" y1="838.5" x2="734.5" y2="838.5" stroke="#000" stroke-width="1"/>
<line x1="101.5" y1="918.5" x2="734.5" y2="918.5" stroke="#000" stroke-width="1"/>
<line x1="125.5" y1="918.5" x2="125.5" y2="915.5" stroke="#000" stroke-width="1"/>
<line x1="148.5" y1="918.5" x2="148.5" y2="915.5" stroke="#000" stroke-width="1"/>
<line x1="172.5" y1="918.5" x2="172.5" y2="907.5" stroke="#000" stroke-width="1"/>
<line x1="195.5" y1="918.5" x2="195.5" y2="915.5" stroke="#000" stroke-width="1"/>
<line x1="219.5" y1="918.5" x2="219.5" y2="915.5" stroke="#000" stroke-width="1"/>
<line x1="242.5" y1="918.5" x2="242.5" y2="907.5" stroke="#000" stroke-width="1"/>
<line x1="265.5" y1="918.5" x2="265.5" y2="915.5" stroke="#000" stroke-width="1"/>
<line x1="289.5" y1="918.5" x2="289.5" y2="915.5" stroke="#000" stroke-width="1"/>
<line x1="312.5" y1="918.5" x2="312.5" y2="907.5" stroke="#000" stroke-width="1"/>
<line x1="336.5" y1="918.5" x2="336.5" y2="915.5" stroke="#000" stroke-width="1"/>
<line x1="359.5" y1="918.5" x2="359.5" y2="915.5" stroke="#000" stroke-width="1"/>
<line x1="383.5" y1="918.5" x2="383.5" y2="907.5" stroke="#000" stroke-width="1"/>
<line x1="406.5" y1="918.5" x2="406.5" y2="915.5" stroke="#000" stroke-width="1"/>
<line x1="430.5" y1="918.5" x2="430.5" y2="915.5" stroke="#000" stroke-width="1"/>
<line x1="453.5" y1="918.5" x2="453.5" y2="907.5" stroke="#000" stroke-width="1"/>
<line x1="476.5" y1="918.5" x2="476.5" y2="915.5" stroke="#000" stroke-width="1"/>
<line x1="500.5" y1="918.5" x2="500.5" y2="915.5" stroke="#000" stroke-width="1"/>
<line x1="523.5" y1="918.5" x2="523.5" y2="907.5" stroke="#000" stroke-width="1"/>
<line x1="547.5" y1="918.5" x2="547.5" y2="915.5" stroke="#000" stroke-width="1"/>
<line x1="570.5" y1="918.5" x2="570.5" y2="915.5" stroke="#000" stroke-width="1"/>
<line x1="594.5" y1="918.5" x2="594.5" y2="907.5" stroke="#000" stroke-width="1"/>
<line x1="617.5" y1="918.5" x2="617.5" y2="915.5" stroke="#000" stroke-width="1"/>
<line x1="641.5" y1="918.5" x2="641.5" y2="915.5" stroke="#000" stroke-width="1"/>
<line x1="664.5" y1="918.5" x2="664.5" y2="907.5" stroke="#000" stroke-width="1"/>
<line x1="687.5" y1="918.5" x2="687.5" y2="915.5" stroke="#000" stroke-width="1"/>
<line x1="711.5" y1="918.5" x2="711.5" y2="915.5" stroke="#000" stroke-width="1"/>
<line x1="734.5" y1="918.5" x2="734.5" y2="907.5" stroke="#000" stroke-width="1"/>
<text x="99.1" y="923.5" font-family="Liberation Mono" font-size="14.9" text-anchor="end" font-weight="normal" fill="#000" stroke="#000" stroke-width="0.2">0</text>
<text x="99.1" y="907.3" font-family="Liberation Mono" font-size="14.9" text-anchor="end" font-weight="normal" fill="#000" stroke="#000" stroke-width="0.2">10</text>
<text x="99.1" y="891.1" font-family="Liberation Mono" font-size="14.9" text-anchor="end" font-weight="normal" fill="#000" stroke="#000" stroke-width="0.2">20</text>
<text x="99.1" y="874.9" font-family="Liberation Mono" font-size="14.9" text-anchor="end" font-weight="normal" fill="#000" stroke="#000" stroke-width="0.2">30</text>
<text x="99.1" y="858.7" font-family="Liberation Mono" font-size="14.9" text-anchor="end" font-weight="normal" fill="#000" stroke="#000" stroke-width="0.2">40</text>
<text x="99.1" y="842.5" font-family="Liberation Mono" font-size="14.9" text-anchor="end" font-weight="normal" fill="#000" stroke="#000" stroke-width="0.2">50</text>
<line x1="101.5" y1="918.5" x2="101.5" y2="999.5" stroke="#000" stroke-width="1"/>
<path d="M101.5 999.5h7.5M101.5 996.5h7.5M101.5 994.5h7.5M101.5 992.5h7.5M101.5 989.5h7.5M101.5 987.5h7.5M101.5 985.5h7.5M101.5 982.5h7.5M101.5 980.5h7.5M101.5 978.5h7.5M101.5 975.5h7.5M101.5 973.5h7.5M101.5 971.5h7.5M101.5 968.5h7.5M101.5 966.5h7.5M101.5 964.5h7.5M101.5 961.5h7.5M101.5 959.5h7.5M101.5 957.5h7.5M101.5 954.5h7.5M101.5 952.5h7.5M101.5 950.5h7.5M101.5 947.5h7.5M101.5 945.5h7.5M101.5 943.5h7.5M101.5 940.5h7.5M101.5 938.5h7.5M101.5 936.5h7.5M101.5 933.5h7.5M101.5 931.5h7.5M101.5 929.5h7.5M101.5 926.5h7.5M101.5 924.5h7.5M101.5 922.5h7.5M101.5 919.5h7.5M101.5 999.5h22.5M101.5 987.5h22.5M101.5 975.5h22.5M101.5 964.5h22.5M101.5 952.5h22.5M101.5 940.5h22.5M101.5 929.5h22.5" stroke="#000" stroke-width="1" fill="none"/>
<line x1="734.5" y1="918.5" x2="734.5" y2="999.5" stroke="#000" stroke-width="1"/>
<line x1="101.5" y1="918.5" x2="734.5" y2="918.5" stroke="#000" stroke-width="1"/>
<line x1="101.5" y1="999.5" x2="734.5" y2="999.5" stroke="#000" stroke-width="1"/>
<line x1="125.5" y1="999.5" x2="125.5" y2="996.5" stroke="#000" stroke-width="1"/>
<line x1="148.5" y1="999.5" x2="148.5" y2="996.5" stroke="#000" stroke-width="1"/>
<line x1="172.5" y1="999.5" x2="172.5" y2="988.5" stroke="#000" stroke-width="1"/>
<line x1="195.5" y1="999.5" x2="195.5" y2="996.5" stroke="#000" stroke-width="1"/>
<line x1="219.5" y1="999.5" x2="219.5" y2="996.5" stroke="#000" stroke-width="1"/>
<line x1="242.5" y1="999.5" x2="242.5" y2="988.5" stroke="#000" stroke-width="1"/>
<line x1="265.5" y1="999.5" x2="265.5" y2="996.5" stroke="#000" stroke-width="1"/>
<line x1="289.5" y1="999.5" x2="289.5" y2="996.5" stroke="#000" stroke-width="1"/>
<line x1="312.5" y1="999.5" x2="312.5" y2="988.5" stroke="#000" stroke-width="1"/>
<line x1="336.5" y1="999.5" x2="336.5" y2="996.5" stroke="#000" stroke-width="1"/>
<line x1="359.5" y1="999.5" x2="359.5" y2="996.5" stroke="#000" stroke-width="1"/>
<line x1="383.5" y1="999.5" x2="383.5" y2="988.5" stroke="#000" stroke-width="1"/>
<line x1="406.5" y1="999.5" x2="406.5" y2="996.5" stroke="#000" stroke-width="1"/>
<line x1="430.5" y1="999.5" x2="430.5" y2="996.5" stroke="#000" stroke-width="1"/>
<line x1="453.5" y1="999.5" x2="453.5" y2="988.5" stroke="#000" stroke-width="1"/>
<line x1="476.5" y1="999.5" x2="476.5" y2="996.5" stroke="#000" stroke-width="1"/>
<line x1="500.5" y1="999.5" x2="500.5" y2="996.5" stroke="#000" stroke-width="1"/>
<line x1="523.5" y1="999.5" x2="523.5" y2="988.5" stroke="#000" stroke-width="1"/>
<line x1="547.5" y1="999.5" x2="547.5" y2="996.5" stroke="#000" stroke-width="1"/>
<line x1="570.5" y1="999.5" x2="570.5" y2="996.5" stroke="#000" stroke-width="1"/>
<line x1="594.5" y1="999.5" x2="594.5" y2="988.5" stroke="#000" stroke-width="1"/>
<line x1="617.5" y1="999.5" x2="617.5" y2="996.5" stroke="#000" stroke-width="1"/>
<line x1="641.5" y1="999.5" x2="641.5" y2="996.5" stroke="#000" stroke-width="1"/>
<line x1="664.5" y1="999.5" x2="664.5" y2="988.5" stroke="#000" stroke-width="1"/>
<line x1="687.5" y1="999.5" x2="687.5" y2="996.5" stroke="#000" stroke-width="1"/>
<line x1="711.5" y1="999.5" x2="711.5" y2="996.5" stroke="#000" stroke-width="1"/>
<line x1="734.5" y1="999.5" x2="734.5" y2="988.5" stroke="#000" stroke-width="1"/>
<text x="99.1" y="1004.3" font-family="Liberation Mono" font-size="14.9" text-anchor="end" font-weight="normal" fill="#000" stroke="#000" stroke-width="0.2">0</text>
<text x="99.1" y="992.6" font-family="Liberation Mono" font-size="14.9" text-anchor="end" font-weight="normal" fill="#000" stroke="#000" stroke-width="0.2">50</text>
<text x="99.1" y="980.9" font-family="Liberation Mono" font-size="14.9" text-anchor="end" font-weight="normal" fill="#000" stroke="#000" stroke-width="0.2">100</text>
<text x="99.1" y="969.2" font-family="Liberation Mono" font-size="14.9" text-anchor="end" font-weight="normal" fill="#000" stroke="#000" stroke-width="0.2">150</text>
<text x="99.1" y="957.5" font-family="Liberation Mono" font-size="14.9" text-anchor="end" font-weight="normal" fill="#000" stroke="#000" stroke-width="0.2">200</text>
<text x="99.1" y="945.8" font-family="Liberation Mono" font-size="14.9" text-anchor="end" font-weight="normal" fill="#000" stroke="#000" stroke-width="0.2">250</text>
<text x="99.1" y="934.1" font-family="Liberation Mono" font-size="14.9" text-anchor="end" font-weight="normal" fill="#000" stroke="#000" stroke-width="0.2">300</text>
<polyline points="101.8,189.3 102.8,187.9 103.8,186.8 104.8,185.2 105.8,183.8 106.8,183.4 107.8,182.6 108.8,182.5 109.8,182.4 110.8,182.6 111.8,181.8 112.8,181.6 113.8,181.1 114.8,181.6 115.8,181.8 116.8,181 117.8,181.7 118.8,182 119.8,181.8 120.8,181.7 121.8,181.1 122.8,180.6 123.8,180.9 124.8,180.6 125.8,180.5 126.8,180.6 127.8,180.4 128.8,180.8 129.8,181 130.8,181.6 131.8,181.6 132.8,181.8 133.8,181.7 134.8,181.9 135.8,181.8 136.8,181.5 137.8,182.2 138.8,182.6 139.8,182.7 140.8,182.6 141.8,182.1 142.8,181.7 143.8,181.5 144.8,181.2 145.8,181.8 146.8,181.8 147.8,182.3 148.8,182.1 149.8,182.6 150.8,182.8 151.8,181.9 152.8,181.7 153.8,182.4 154.8,182.3 155.8,182.8 156.8,182.5 157.8,181.9 158.8,182.2 159.8,182.5 160.8,182.2 161.8,181.7 162.8,181.7 163.8,182.5 164.8,182.7 165.8,182.1 166.8,181.8 167.8,181.5 168.8,181.3 169.8,182 170.8,181.7 171.8,182 172.8,182 173.8,181.8 174.8,182.2 175.8,181.8 176.8,182.1 177.8,181.7 178.8,181.8 179.8,181.7 180.8,181.6 181.8,182.4 182.8,182.7 183.8,182.3 184.8,182.7 185.8,182.2 186.8,182.1 187.8,182.9 188.8,184.5 189.8,186.1 190.8,189.9 191.8,188.3 192.8,184.9 193.8,183.6 194.8,182.5 195.8,181.9 196.8,181.5 197.8,181.3 198.8,181.8 199.8,181.7 200.8,182 202.8,182 203.8,182.7 204.8,182.5 205.8,182.5 206.8,182.8 207.8,183.6 208.8,186.6 209.8,197.4 210.8,229 211.8,232.3 733.8,232.3" fill="none" stroke="#f0a800" stroke-width="1.6" stroke-linejoin="miter"/>
<polyline points="101.8,244.3 102.8,244.1 103.8,243.8 104.8,240.4 105.8,240.1 106.8,240.1 107.8,240 108.8,240.1 109.8,239.4 110.8,238.6 111.8,237.8 112.8,237.2 113.8,236.6 114.8,236.3 115.8,235.8 116.8,236 117.8,235.8 118.8,236 119.8,235.8 120.8,235.9 122.8,235.9 123.8,236 124.8,235.8 125.8,235.7 126.8,236 127.8,236 128.8,235.8 129.8,236.1 130.8,236.2 131.8,235.9 132.8,235.9 133.8,235.8 134.8,235.8 135.8,235.9 136.8,235.8 137.8,235.9 138.8,235.8 139.8,235.7 140.8,235.9 142.8,235.9 143.8,236 144.8,235.9 145.8,235.9 146.8,235.7 147.8,235.9 148.8,236.1 149.8,236.2 150.8,236.2 151.8,236 153.8,236 154.8,236.1 155.8,235.9 156.8,235.8 157.8,235.8 158.8,235.9 159.8,236 160.8,236 161.8,235.8 162.8,236 163.8,235.9 164.8,236 165.8,235.8 166.8,235.9 167.8,235.9 168.8,236 169.8,235.8 170.8,235.9 171.8,235.8 172.8,235.9 173.8,235.8 174.8,235.7 175.8,235.8 176.8,235.9 177.8,235.7 178.8,235.8 179.8,235.8 180.8,235.7 181.8,235.8 182.8,236.1 183.8,236 184.8,236.2 185.8,236 186.8,236.5 187.8,237.1 188.8,237.6 189.8,242.6 190.8,248.7 191.8,247.1 192.8,242.3 193.8,239.7 194.8,238.4 195.8,237 196.8,235.7 197.8,235.6 198.8,235.8 199.8,236.1 200.8,236.2 201.8,236.1 202.8,235.9 203.8,235.8 204.8,236 205.8,236.1 206.8,239.6 207.8,243.3 208.8,247.2 209.8,250.9 210.8,287" fill="none" stroke="#ff0000" stroke-width="1.6" stroke-linejoin="miter"/>
<polyline points="101.8,253.3 102.8,253.1 103.8,250.4 105.8,250.4 106.8,250.3 111.8,250.3 112.8,249.8 113.8,249.6 203.8,249.6 204.8,250.2 205.8,250.8 206.8,251.4 207.8,252.2 208.8,253.2 209.8,254.2 210.8,287.1 211.8,288.6 733.8,288.6" fill="none" stroke="#0000ff" stroke-width="1.8" stroke-linejoin="miter"/>
<polyline points="101.8,302.6 115.8,302.6 116.8,292.9 229.8,292.9 230.8,343.4 733.8,343.4" fill="none" stroke="#ff1493" stroke-width="1.5" stroke-linejoin="miter"/>
<polygon points="101,348.9 102,348.9 102,349.3 103,349.3 103,349.6 104,349.6 104,349 105,349 105,349.4 106,349.4 106,351 107,351 107,349.5 108,349.5 108,348.8 109,348.8 109,348.9 111,348.9 111,349.7 112,349.7 112,349.1 113,349.1 113,348.8 114,348.8 114,349.6 115,349.6 115,349.7 116,349.7 116,349.4 117,349.4 117,349.3 118,349.3 118,349.7 119,349.7 119,349.1 120,349.1 120,350.9 121,350.9 121,349.5 122,349.5 122,349.3 123,349.3 123,349 124,349 124,349.4 125,349.4 125,349.1 126,349.1 126,349.4 127,349.4 127,348.8 128,348.8 128,349.1 129,349.1 129,349.7 130,349.7 130,349.8 131,349.8 131,349.7 132,349.7 132,349 133,349 133,348.8 134,348.8 134,349.3 135,349.3 135,349 136,349 136,348.9 137,348.9 137,349.7 138,349.7 138,349.3 139,349.3 139,350.5 140,350.5 140,349.6 141,349.6 141,349.4 142,349.4 142,349.6 143,349.6 143,350.7 144,350.7 144,349.7 145,349.7 145,349.4 146,349.4 146,349 147,349 147,349.7 148,349.7 148,348.9 151,348.9 151,349.3 152,349.3 152,349 153,349 153,349.3 154,349.3 154,349.6 155,349.6 155,348.8 156,348.8 156,349.5 157,349.5 157,349 158,349 158,348.8 159,348.8 159,349.7 160,349.7 160,349.3 161,349.3 161,349.4 162,349.4 162,349.7 163,349.7 163,349.3 164,349.3 164,349.6 165,349.6 165,349.1 166,349.1 166,348.9 167,348.9 167,349.5 168,349.5 168,348.8 169,348.8 169,349.3 170,349.3 170,349 172,349 172,349.5 173,349.5 173,349.2 174,349.2 174,349.7 175,349.7 175,349.3 176,349.3 176,349.6 177,349.6 177,349.4 178,349.4 178,349.5 179,349.5 179,349.2 180,349.2 180,351.1 181,351.1 181,349.1 182,349.1 182,349.3 183,349.3 183,349.7 184,349.7 184,348.9 185,348.9 185,349 186,349 186,349.5 187,349.5 187,349.1 188,349.1 188,348.9 189,348.9 189,349.4 190,349.4 190,349.7 191,349.7 191,349.4 192,349.4 192,349.2 193,349.2 193,349.7 194,349.7 194,351.2 195,351.2 195,348.8 196,348.8 196,349 197,349 197,348.9 198,348.9 198,349.7 199,349.7 199,349.6 200,349.6 200,348.8 201,348.8 201,349.3 202,349.3 202,349.6 203,349.6 203,348.8 204,348.8 204,349.7 205,349.7 205,349 206,349 206,349.4 207,349.4 207,349.6 208,349.6 208,349.1 209,349.1 209,354.2 208,354.2 208,354.3 207,354.3 207,354.6 206,354.6 206,354 205,354 205,354.7 204,354.7 204,354.5 203,354.5 203,354.9 202,354.9 202,354.2 201,354.2 201,354.1 200,354.1 200,354.8 199,354.8 199,354.3 197,354.3 197,354 196,354 196,354.6 195,354.6 195,354.7 194,354.7 194,354 193,354 193,354.2 191,354.2 191,354.4 190,354.4 190,354.2 189,354.2 189,354.6 188,354.6 188,354.2 186,354.2 186,354.3 185,354.3 185,354.9 184,354.9 184,354.7 183,354.7 183,354 182,354 182,354.3 181,354.3 181,354.9 180,354.9 180,354.6 179,354.6 179,354.2 178,354.2 178,354.8 177,354.8 177,354.6 176,354.6 176,354.7 175,354.7 175,354 174,354 174,354.4 172,354.4 172,354.7 171,354.7 171,354 170,354 170,354.3 169,354.3 169,354.6 168,354.6 168,354.4 167,354.4 167,354 166,354 166,354.9 164,354.9 164,354.5 163,354.5 163,354.3 162,354.3 162,354.5 161,354.5 161,354.9 160,354.9 160,354.2 159,354.2 159,354.3 158,354.3 158,354.6 157,354.6 157,354.1 156,354.1 156,354.4 155,354.4 155,354.7 154,354.7 154,354 153,354 153,354.3 152,354.3 152,354.2 151,354.2 151,354.5 150,354.5 150,354.8 149,354.8 149,354 148,354 148,354.1 147,354.1 147,354.4 146,354.4 146,354.8 145,354.8 145,354 144,354 144,354.7 143,354.7 143,354.3 142,354.3 142,354.4 141,354.4 141,354.7 139,354.7 139,354.2 138,354.2 138,354.9 137,354.9 137,354 136,354 136,354.2 135,354.2 135,354.8 132,354.8 132,354.4 131,354.4 131,354.9 129,354.9 129,354.6 128,354.6 128,354.8 127,354.8 127,354.3 126,354.3 126,354.9 125,354.9 125,354.1 124,354.1 124,354.6 123,354.6 123,354.5 122,354.5 122,354.9 121,354.9 121,354.3 120,354.3 120,354.4 119,354.4 119,354.8 117,354.8 117,354.7 115,354.7 115,354.2 114,354.2 114,354.8 113,354.8 113,354.4 111,354.4 111,354.8 110,354.8 110,354.9 109,354.9 109,354.3 108,354.3 108,354.8 107,354.8 107,354.2 106,354.2 106,354 104,354 104,354.5 103,354.5 103,354.2 102,354.2 102,354.6 101,354.6" fill="#3a5fd0" stroke="none"/>
<polygon points="101,354.7 102,354.7 102,354.6 104,354.6 104,354.2 105,354.2 105,354.5 106,354.5 106,354.7 108,354.7 108,354.3 109,354.3 109,354.7 110,354.7 110,354.5 111,354.5 111,354.3 112,354.3 112,354.6 113,354.6 113,354.2 114,354.2 114,354.3 115,354.3 115,354.2 116,354.2 116,354.5 117,354.5 117,354.7 118,354.7 118,354.5 121,354.5 121,354.4 122,354.4 122,354.7 123,354.7 123,354.4 124,354.4 124,354.3 126,354.3 126,354.2 127,354.2 127,354.5 128,354.5 128,354.2 129,354.2 129,354.7 130,354.7 130,354.4 131,354.4 131,354.7 132,354.7 132,354.6 134,354.6 134,354.7 135,354.7 135,354.5 136,354.5 136,354.6 137,354.6 137,354.2 139,354.2 139,354.7 140,354.7 140,354.2 141,354.2 141,354.4 142,354.4 142,354.7 144,354.7 144,354.4 145,354.4 145,354.6 146,354.6 146,354.3 148,354.3 148,354.2 149,354.2 149,354.7 150,354.7 150,354.6 151,354.6 151,354.4 153,354.4 153,354.7 154,354.7 154,354.5 155,354.5 155,354.7 156,354.7 156,354.3 158,354.3 158,354.6 159,354.6 159,354.2 160,354.2 160,354.4 161,354.4 161,354.6 162,354.6 162,354.4 163,354.4 163,354.7 165,354.7 165,354.6 166,354.6 166,354.2 167,354.2 167,354.3 168,354.3 168,354.7 169,354.7 169,354.5 170,354.5 170,354.6 171,354.6 171,354.5 172,354.5 172,354.2 173,354.2 173,354.3 174,354.3 174,354.2 175,354.2 175,354.7 176,354.7 176,354.4 177,354.4 177,354.3 178,354.3 178,354.7 179,354.7 179,354.3 181,354.3 181,354.5 182,354.5 182,354.3 184,354.3 184,354.6 186,354.6 186,354.5 187,354.5 187,354.7 188,354.7 188,354.6 189,354.6 189,354.7 191,354.7 191,354.5 193,354.5 193,354.6 194,354.6 194,354.4 196,354.4 196,354.6 199,354.6 199,354.3 200,354.3 200,354.6 201,354.6 201,354.5 202,354.5 202,354.2 204,354.2 204,354.5 206,354.5 206,354.2 208,354.2 208,354.4 209,354.4 209,359.6 208,359.6 208,359 207,359 207,359.6 206,359.6 206,360.5 205,360.5 205,358.8 204,358.8 204,357.9 202,357.9 202,359.1 201,359.1 201,359.4 200,359.4 200,359.7 199,359.7 199,359.8 198,359.8 198,359.1 196,359.1 196,360.5 195,360.5 195,359.7 194,359.7 194,360.5 193,360.5 193,359.2 192,359.2 192,358.7 191,358.7 191,358 189,358 189,360.5 188,360.5 188,359.5 187,359.5 187,359.4 186,359.4 186,360.4 185,360.4 185,359 183,359 183,358.9 182,358.9 182,359.5 181,359.5 181,357.1 179,357.1 179,360.4 178,360.4 178,359.1 177,359.1 177,358.9 175,358.9 175,360.4 173,360.4 173,359.1 172,359.1 172,360.5 171,360.5 171,358.7 170,358.7 170,359.3 169,359.3 169,359.8 168,359.8 168,359.2 167,359.2 167,357.7 166,357.7 166,358.9 165,358.9 165,358.6 164,358.6 164,359 163,359 163,358.7 162,358.7 162,358.8 161,358.8 161,358 160,358 160,359.7 159,359.7 159,359.6 158,359.6 158,359.7 157,359.7 157,360.3 156,360.3 156,359.9 155,359.9 155,358.8 154,358.8 154,360 153,360 153,359.3 152,359.3 152,359.9 151,359.9 151,359.1 150,359.1 150,360 149,360 149,358.9 148,358.9 148,360.5 147,360.5 147,356.8 146,356.8 146,359.6 145,359.6 145,359.4 144,359.4 144,358.7 142,358.7 142,360.1 141,360.1 141,359.6 140,359.6 140,359 139,359 139,359.1 138,359.1 138,360.6 137,360.6 137,359.5 136,359.5 136,359.3 135,359.3 135,358.7 134,358.7 134,360.3 133,360.3 133,359.9 132,359.9 132,360.1 131,360.1 131,359.7 130,359.7 130,359.5 129,359.5 129,359.4 128,359.4 128,359 127,359 127,359.7 126,359.7 126,359.3 125,359.3 125,359.7 124,359.7 124,358.8 123,358.8 123,360.5 122,360.5 122,359.5 121,359.5 121,358.8 120,358.8 120,359.5 119,359.5 119,359.2 117,359.2 117,359.4 116,359.4 116,360.5 115,360.5 115,358.7 114,358.7 114,360.3 113,360.3 113,360.5 111,360.5 111,360 110,360 110,360.2 109,360.2 109,360.3 108,360.3 108,358.3 106,358.3 106,360.1 105,360.1 105,360.6 104,360.6 104,358.8 103,358.8 103,360.1 102,360.1 102,355.9 101,355.9" fill="#00cc00" stroke="none"/>
<path d="M103 357h2v2h-2zM102 364h2v2h-2zM104 363h2v2h-2zM105 361h2v2h-2zM107 359h2v2h-2zM108 360h2v2h-2zM109 361h2v2h-2zM110 365h2v2h-2zM110 362h2v2h-2zM112 361h2v2h-2zM113 364h2v2h-2zM114 359h2v2h-2zM115 362h2v2h-2zM115 364h2v2h-2zM116 363h2v2h-2zM118 365h2v2h-2zM119 361h2v2h-2zM119 362h2v2h-2zM120 362h2v2h-2zM121 361h2v2h-2zM122 363h2v2h-2zM124 360h2v2h-2zM125 361h2v2h-2zM125 362h2v2h-2zM126 360h2v2h-2zM127 361h2v2h-2zM128 364h2v2h-2zM130 361h2v2h-2zM130 365h2v2h-2zM132 366h2v2h-2zM134 363h2v2h-2zM133 359h2v2h-2zM135 356h2v2h-2zM136 358h2v2h-2zM138 361h2v2h-2zM138 360h2v2h-2zM140 366h2v2h-2zM141 361h2v2h-2zM141 363h2v2h-2zM142 361h2v2h-2zM143 357h2v2h-2zM144 363h2v2h-2zM146 363h2v2h-2zM147 362h2v2h-2zM149 361h2v2h-2zM149 359h2v2h-2zM150 364h2v2h-2zM152 358h2v2h-2zM152 362h2v2h-2zM153 363h2v2h-2zM153 362h2v2h-2zM155 363h2v2h-2zM156 361h2v2h-2zM157 364h2v2h-2zM157 359h2v2h-2zM159 360h2v2h-2zM161 361h2v2h-2zM160 363h2v2h-2zM161 364h2v2h-2zM163 362h2v2h-2zM164 364h2v2h-2zM164 361h2v2h-2zM165 364h2v2h-2zM168 359h2v2h-2zM167 360h2v2h-2zM169 358h2v2h-2zM170 362h2v2h-2zM171 361h2v2h-2zM172 362h2v2h-2zM173 364h2v2h-2zM173 363h2v2h-2zM176 357h2v2h-2zM176 360h2v2h-2zM177 363h2v2h-2zM179 362h2v2h-2zM180 363h2v2h-2zM181 356h2v2h-2zM182 365h2v2h-2zM183 360h2v2h-2zM183 361h2v2h-2zM184 360h2v2h-2zM186 362h2v2h-2zM186 357h2v2h-2zM188 362h2v2h-2zM189 361h2v2h-2zM191 360h2v2h-2zM190 363h2v2h-2zM191 358h2v2h-2zM193 362h2v2h-2zM196 359h2v2h-2zM196 358h2v2h-2zM197 360h2v2h-2zM199 362h2v2h-2zM199 361h2v2h-2zM201 359h2v2h-2zM200 356h2v2h-2zM203 361h2v2h-2zM204 365h2v2h-2zM205 361h2v2h-2zM206 360h2v2h-2zM206 364h2v2h-2zM209 361h2v2h-2z" fill="#00cc00" stroke="none"/>
<polygon points="101,396.9 102,396.9 102,397.2 103,397.2 103,396.3 104,396.3 104,396.9 105,396.9 105,396.7 106,396.7 106,396.3 107,396.3 107,397 108,397 108,397.2 109,397.2 109,397.1 110,397.1 110,396.5 111,396.5 111,397.1 113,397.1 113,396.9 114,396.9 114,397.2 115,397.2 115,397 116,397 116,396.7 118,396.7 118,396.3 119,396.3 119,397 120,397 120,396.8 121,396.8 121,396.9 122,396.9 122,396.6 123,396.6 123,396.5 124,396.5 124,396.6 126,396.6 126,396.5 127,396.5 127,396.2 128,396.2 128,397 129,397 129,396.6 130,396.6 130,396.5 131,396.5 131,397.1 132,397.1 132,396.2 133,396.2 133,396.9 134,396.9 134,397.1 135,397.1 135,397 136,397 136,396.6 137,396.6 137,396.3 138,396.3 138,396.7 140,396.7 140,396.4 141,396.4 141,396.7 142,396.7 142,396.5 143,396.5 143,397 144,397 144,396.7 145,396.7 145,396.9 146,396.9 146,396.6 147,396.6 147,397 148,397 148,396.7 149,396.7 149,396.6 150,396.6 150,396.9 151,396.9 151,397.2 152,397.2 152,397.1 153,397.1 153,396.4 154,396.4 154,397 155,397 155,396.7 156,396.7 156,397.1 157,397.1 157,397 158,397 158,396.7 159,396.7 159,397.1 160,397.1 160,396.7 162,396.7 162,397.1 163,397.1 163,397 164,397 164,396.5 165,396.5 165,397.1 166,397.1 166,396.8 167,396.8 167,396.7 168,396.7 168,396.5 169,396.5 169,396.8 170,396.8 170,396.9 171,396.9 171,396.4 172,396.4 172,397.1 173,397.1 173,396.9 174,396.9 174,396.7 175,396.7 175,397.1 177,397.1 177,396.2 178,396.2 178,397.2 179,397.2 179,396.9 180,396.9 180,396.3 181,396.3 181,396.8 182,396.8 182,397 183,397 183,396.4 184,396.4 184,396.5 185,396.5 185,396.3 186,396.3 186,396.7 187,396.7 187,396.5 188,396.5 188,397 189,397 189,396.9 190,396.9 190,396.7 191,396.7 191,397 192,397 192,396.8 193,396.8 193,397.1 194,397.1 194,396.3 195,396.3 195,396.6 196,396.6 196,396.4 197,396.4 197,397.2 198,397.2 198,396.4 199,396.4 199,396.7 200,396.7 200,396.9 202,396.9 202,397 203,397 203,396.6 204,396.6 204,397 205,397 205,396.3 206,396.3 206,396.8 207,396.8 207,396.4 209,396.4 209,399.5 208,399.5 208,399.2 207,399.2 207,399.4 206,399.4 206,399.3 205,399.3 205,399.6 204,399.6 204,399.5 203,399.5 203,397.2 202,397.2 202,399.1 201,399.1 201,399.3 200,399.3 200,399.4 199,399.4 199,399.5 197,399.5 197,399.6 196,399.6 196,399.1 194,399.1 194,399.5 193,399.5 193,399.1 192,399.1 192,399.5 191,399.5 191,399.4 190,399.4 190,399.3 189,399.3 189,399 188,399 188,399.4 186,399.4 186,399.3 183,399.3 183,399.6 182,399.6 182,399.1 181,399.1 181,399.4 180,399.4 180,399.5 179,399.5 179,399.3 177,399.3 177,399 176,399 176,399.1 175,399.1 175,399.5 174,399.5 174,399.1 173,399.1 173,399.3 172,399.3 172,399.1 171,399.1 171,399.4 170,399.4 170,399.2 169,399.2 169,399.5 168,399.5 168,399.6 167,399.6 167,399.1 166,399.1 166,399.2 165,399.2 165,399.1 164,399.1 164,399.6 163,399.6 163,399.2 162,399.2 162,397.8 160,397.8 160,399.2 159,399.2 159,399.4 158,399.4 158,399 157,399 157,399.1 156,399.1 156,399.5 155,399.5 155,399.4 154,399.4 154,399.2 153,399.2 153,399.6 152,399.6 152,399.4 151,399.4 151,399.1 150,399.1 150,399.6 149,399.6 149,399.1 147,399.1 147,399.6 145,399.6 145,399.3 144,399.3 144,399.5 142,399.5 142,399.1 141,399.1 141,399 140,399 140,397.3 139,397.3 139,399.5 137,399.5 137,399 136,399 136,399.2 134,399.2 134,399.3 133,399.3 133,399.2 132,399.2 132,399.5 131,399.5 131,399.2 129,399.2 129,399.3 128,399.3 128,399.6 127,399.6 127,399.3 126,399.3 126,399 125,399 125,399.5 124,399.5 124,399.1 123,399.1 123,399.3 122,399.3 122,399.2 120,399.2 120,399.3 118,399.3 118,399.4 117,399.4 117,399.1 116,399.1 116,399.6 115,399.6 115,399.5 113,399.5 113,399 112,399 112,399.6 111,399.6 111,399.3 110,399.3 110,399.1 108,399.1 108,399.3 106,399.3 106,399.5 105,399.5 105,399.4 104,399.4 104,399.5 103,399.5 103,399.1 102,399.1 102,399.5 101,399.5" fill="#00cc00" stroke="none"/>
<line x1="208.7" y1="399" x2="734.5" y2="399" stroke="#00cc00" stroke-width="2"/>
<path d="M102 433h2v2h-2zM102 434h2v2h-2zM101 433h2v2h-2zM102 431h2v2h-2zM101 430h2v2h-2zM102 437h2v2h-2zM103 435h2v2h-2zM103 434h2v2h-2zM103 436h2v2h-2zM104 434h2v2h-2zM103 431h2v2h-2zM102 432h2v2h-2zM103 443h2v2h-2zM104 440h2v2h-2zM104 438h2v2h-2zM103 439h2v2h-2zM104 437h2v2h-2zM105 440h2v2h-2zM105 441h2v2h-2zM103 433h2v2h-2zM104 439h2v2h-2zM104 441h2v2h-2zM105 437h2v2h-2zM105 433h2v2h-2zM106 437h2v2h-2zM105 439h2v2h-2zM106 445h2v2h-2zM105 434h2v2h-2zM105 436h2v2h-2zM107 442h2v2h-2zM105 445h2v2h-2zM106 440h2v2h-2zM105 443h2v2h-2zM106 444h2v2h-2zM107 439h2v2h-2zM108 438h2v2h-2zM107 441h2v2h-2zM108 444h2v2h-2zM106 441h2v2h-2zM108 441h2v2h-2zM107 440h2v2h-2zM108 445h2v2h-2zM109 444h2v2h-2zM108 446h2v2h-2zM108 447h2v2h-2zM107 444h2v2h-2zM109 445h2v2h-2zM109 451h2v2h-2zM108 442h2v2h-2zM109 440h2v2h-2zM108 443h2v2h-2zM109 442h2v2h-2zM109 448h2v2h-2zM109 446h2v2h-2zM110 451h2v2h-2zM110 447h2v2h-2zM110 444h2v2h-2zM110 445h2v2h-2zM109 449h2v2h-2zM110 443h2v2h-2zM111 449h2v2h-2zM112 449h2v2h-2zM111 445h2v2h-2zM110 448h2v2h-2zM110 450h2v2h-2zM112 444h2v2h-2zM112 450h2v2h-2zM112 452h2v2h-2zM111 451h2v2h-2zM112 446h2v2h-2zM112 454h2v2h-2zM113 451h2v2h-2zM113 450h2v2h-2zM114 445h2v2h-2zM114 450h2v2h-2zM113 447h2v2h-2zM114 448h2v2h-2zM114 453h2v2h-2zM113 448h2v2h-2zM114 446h2v2h-2zM115 454h2v2h-2zM114 454h2v2h-2zM115 451h2v2h-2zM116 452h2v2h-2zM115 453h2v2h-2zM116 449h2v2h-2zM115 456h2v2h-2zM117 448h2v2h-2zM116 454h2v2h-2zM116 456h2v2h-2zM117 456h2v2h-2zM115 455h2v2h-2zM116 453h2v2h-2zM117 451h2v2h-2zM117 446h2v2h-2zM116 448h2v2h-2zM117 449h2v2h-2zM117 452h2v2h-2zM118 455h2v2h-2zM118 453h2v2h-2zM118 450h2v2h-2zM117 455h2v2h-2zM119 453h2v2h-2zM119 456h2v2h-2zM118 456h2v2h-2zM119 454h2v2h-2zM118 448h2v2h-2zM120 453h2v2h-2zM120 456h2v2h-2zM120 454h2v2h-2zM119 452h2v2h-2zM120 451h2v2h-2zM121 454h2v2h-2zM120 455h2v2h-2zM121 452h2v2h-2zM119 451h2v2h-2zM121 456h2v2h-2zM120 450h2v2h-2zM122 456h2v2h-2zM121 451h2v2h-2zM122 448h2v2h-2zM121 453h2v2h-2zM123 448h2v2h-2zM122 447h2v2h-2zM123 454h2v2h-2zM123 456h2v2h-2zM122 454h2v2h-2zM124 450h2v2h-2zM123 453h2v2h-2zM123 451h2v2h-2zM122 450h2v2h-2zM123 450h2v2h-2zM123 455h2v2h-2zM124 451h2v2h-2zM125 455h2v2h-2zM125 456h2v2h-2zM124 456h2v2h-2zM124 452h2v2h-2zM125 448h2v2h-2zM125 449h2v2h-2zM125 451h2v2h-2zM125 452h2v2h-2zM126 452h2v2h-2zM126 451h2v2h-2zM124 453h2v2h-2zM126 454h2v2h-2zM126 456h2v2h-2zM125 454h2v2h-2zM127 453h2v2h-2zM125 453h2v2h-2zM127 456h2v2h-2zM127 450h2v2h-2zM127 449h2v2h-2zM127 452h2v2h-2zM128 452h2v2h-2zM128 454h2v2h-2zM126 453h2v2h-2zM127 451h2v2h-2zM128 448h2v2h-2zM129 451h2v2h-2zM127 454h2v2h-2zM128 451h2v2h-2zM129 453h2v2h-2zM128 447h2v2h-2zM128 456h2v2h-2zM129 456h2v2h-2zM130 447h2v2h-2zM129 450h2v2h-2zM130 446h2v2h-2zM131 450h2v2h-2zM130 449h2v2h-2zM130 454h2v2h-2zM130 453h2v2h-2zM130 451h2v2h-2zM131 453h2v2h-2zM131 448h2v2h-2zM131 452h2v2h-2zM131 451h2v2h-2zM130 448h2v2h-2zM132 444h2v2h-2zM133 452h2v2h-2zM132 451h2v2h-2zM132 449h2v2h-2zM133 448h2v2h-2zM132 448h2v2h-2zM134 452h2v2h-2zM133 447h2v2h-2zM134 445h2v2h-2zM133 450h2v2h-2zM133 449h2v2h-2zM133 444h2v2h-2zM135 446h2v2h-2zM134 453h2v2h-2zM134 444h2v2h-2zM134 448h2v2h-2zM134 449h2v2h-2zM134 446h2v2h-2zM135 452h2v2h-2zM134 451h2v2h-2zM135 448h2v2h-2zM136 447h2v2h-2zM134 450h2v2h-2zM136 448h2v2h-2zM136 450h2v2h-2zM135 449h2v2h-2zM135 445h2v2h-2zM135 443h2v2h-2zM135 450h2v2h-2zM136 444h2v2h-2zM137 447h2v2h-2zM137 452h2v2h-2zM138 446h2v2h-2zM136 449h2v2h-2zM137 444h2v2h-2zM137 446h2v2h-2zM137 449h2v2h-2zM138 451h2v2h-2zM137 443h2v2h-2zM138 449h2v2h-2zM138 454h2v2h-2zM139 447h2v2h-2zM138 444h2v2h-2zM140 453h2v2h-2zM138 445h2v2h-2zM139 450h2v2h-2zM138 456h2v2h-2zM138 447h2v2h-2zM140 451h2v2h-2zM141 448h2v2h-2zM140 442h2v2h-2zM139 446h2v2h-2zM140 450h2v2h-2zM139 445h2v2h-2zM140 448h2v2h-2zM139 449h2v2h-2zM141 451h2v2h-2zM140 443h2v2h-2zM140 452h2v2h-2zM141 444h2v2h-2zM140 445h2v2h-2zM141 443h2v2h-2zM141 441h2v2h-2zM141 446h2v2h-2zM142 440h2v2h-2zM141 447h2v2h-2zM142 451h2v2h-2zM142 452h2v2h-2zM143 444h2v2h-2zM143 446h2v2h-2zM143 450h2v2h-2zM144 449h2v2h-2zM143 448h2v2h-2zM143 447h2v2h-2zM144 451h2v2h-2zM143 452h2v2h-2zM142 449h2v2h-2zM142 445h2v2h-2zM144 444h2v2h-2zM145 447h2v2h-2zM144 447h2v2h-2zM144 448h2v2h-2zM145 442h2v2h-2zM144 446h2v2h-2zM146 445h2v2h-2zM145 450h2v2h-2zM145 444h2v2h-2zM146 450h2v2h-2zM145 451h2v2h-2zM146 441h2v2h-2zM145 445h2v2h-2zM146 442h2v2h-2zM145 449h2v2h-2zM146 447h2v2h-2zM146 451h2v2h-2zM147 444h2v2h-2zM147 447h2v2h-2zM146 449h2v2h-2zM148 449h2v2h-2zM147 449h2v2h-2zM146 444h2v2h-2zM149 456h2v2h-2zM147 450h2v2h-2zM148 445h2v2h-2zM148 452h2v2h-2zM148 438h2v2h-2zM149 439h2v2h-2zM148 447h2v2h-2zM148 441h2v2h-2zM149 448h2v2h-2zM149 447h2v2h-2zM149 444h2v2h-2zM149 446h2v2h-2zM149 437h2v2h-2zM149 443h2v2h-2zM150 447h2v2h-2zM150 448h2v2h-2zM151 447h2v2h-2zM151 443h2v2h-2zM149 451h2v2h-2zM149 445h2v2h-2zM151 444h2v2h-2zM150 444h2v2h-2zM152 443h2v2h-2zM151 449h2v2h-2zM152 447h2v2h-2zM150 445h2v2h-2zM151 445h2v2h-2zM152 446h2v2h-2zM153 445h2v2h-2zM152 445h2v2h-2zM151 450h2v2h-2zM153 443h2v2h-2zM152 444h2v2h-2zM153 447h2v2h-2zM153 448h2v2h-2zM152 440h2v2h-2zM153 449h2v2h-2zM154 448h2v2h-2zM153 441h2v2h-2zM154 444h2v2h-2zM155 445h2v2h-2zM154 441h2v2h-2zM153 442h2v2h-2zM154 447h2v2h-2zM155 441h2v2h-2zM155 446h2v2h-2zM155 443h2v2h-2zM154 443h2v2h-2zM155 447h2v2h-2zM155 442h2v2h-2zM156 442h2v2h-2zM156 440h2v2h-2zM157 438h2v2h-2zM156 441h2v2h-2zM157 446h2v2h-2zM156 445h2v2h-2zM158 448h2v2h-2zM156 449h2v2h-2zM158 442h2v2h-2zM158 440h2v2h-2zM158 444h2v2h-2zM158 445h2v2h-2zM158 447h2v2h-2zM157 445h2v2h-2zM157 443h2v2h-2zM158 441h2v2h-2zM159 439h2v2h-2zM158 439h2v2h-2zM159 440h2v2h-2zM160 445h2v2h-2zM159 449h2v2h-2zM160 441h2v2h-2zM161 445h2v2h-2zM161 441h2v2h-2zM161 444h2v2h-2zM160 443h2v2h-2zM160 444h2v2h-2zM159 443h2v2h-2zM159 438h2v2h-2zM161 442h2v2h-2zM161 440h2v2h-2zM162 435h2v2h-2zM160 442h2v2h-2zM162 444h2v2h-2zM162 436h2v2h-2zM162 442h2v2h-2zM162 440h2v2h-2zM163 437h2v2h-2zM163 439h2v2h-2zM163 440h2v2h-2zM163 441h2v2h-2zM162 439h2v2h-2zM164 437h2v2h-2zM162 441h2v2h-2zM164 438h2v2h-2zM163 438h2v2h-2zM163 442h2v2h-2zM165 440h2v2h-2zM164 440h2v2h-2zM164 444h2v2h-2zM164 446h2v2h-2zM164 442h2v2h-2zM165 438h2v2h-2zM165 439h2v2h-2zM166 441h2v2h-2zM165 445h2v2h-2zM166 443h2v2h-2zM166 442h2v2h-2zM166 437h2v2h-2zM165 447h2v2h-2zM166 444h2v2h-2zM167 441h2v2h-2zM167 438h2v2h-2zM168 444h2v2h-2zM167 444h2v2h-2zM167 440h2v2h-2zM167 443h2v2h-2zM166 446h2v2h-2zM169 444h2v2h-2zM168 440h2v2h-2zM168 446h2v2h-2zM168 442h2v2h-2zM167 445h2v2h-2zM167 439h2v2h-2zM168 443h2v2h-2zM170 445h2v2h-2zM169 440h2v2h-2zM169 443h2v2h-2zM168 441h2v2h-2zM169 448h2v2h-2zM170 446h2v2h-2zM171 440h2v2h-2zM170 439h2v2h-2zM170 443h2v2h-2zM169 447h2v2h-2zM171 445h2v2h-2zM170 442h2v2h-2zM171 449h2v2h-2zM172 442h2v2h-2zM171 446h2v2h-2zM171 444h2v2h-2zM171 448h2v2h-2zM170 447h2v2h-2zM173 450h2v2h-2zM172 446h2v2h-2zM171 453h2v2h-2zM172 450h2v2h-2zM173 454h2v2h-2zM173 453h2v2h-2zM173 456h2v2h-2zM172 453h2v2h-2zM174 452h2v2h-2zM174 454h2v2h-2zM173 451h2v2h-2zM172 449h2v2h-2zM175 450h2v2h-2zM175 447h2v2h-2zM173 447h2v2h-2zM175 452h2v2h-2zM174 448h2v2h-2zM175 448h2v2h-2zM174 444h2v2h-2zM174 451h2v2h-2zM175 451h2v2h-2zM175 449h2v2h-2zM175 444h2v2h-2zM175 446h2v2h-2zM176 449h2v2h-2zM176 444h2v2h-2zM175 445h2v2h-2zM177 445h2v2h-2zM177 447h2v2h-2zM177 449h2v2h-2zM176 451h2v2h-2zM178 446h2v2h-2zM177 444h2v2h-2zM178 445h2v2h-2zM176 445h2v2h-2zM178 449h2v2h-2zM176 447h2v2h-2zM177 443h2v2h-2zM178 441h2v2h-2zM178 442h2v2h-2zM177 448h2v2h-2zM178 439h2v2h-2zM178 443h2v2h-2zM179 446h2v2h-2zM180 447h2v2h-2zM179 440h2v2h-2zM180 444h2v2h-2zM178 447h2v2h-2zM180 445h2v2h-2zM178 448h2v2h-2zM179 444h2v2h-2zM179 441h2v2h-2zM180 443h2v2h-2zM181 441h2v2h-2zM180 446h2v2h-2zM181 447h2v2h-2zM180 440h2v2h-2zM181 440h2v2h-2zM181 443h2v2h-2zM180 438h2v2h-2zM182 443h2v2h-2zM183 442h2v2h-2zM182 446h2v2h-2zM181 444h2v2h-2zM183 441h2v2h-2zM182 444h2v2h-2zM181 445h2v2h-2zM182 447h2v2h-2zM183 448h2v2h-2zM183 445h2v2h-2zM183 444h2v2h-2zM183 447h2v2h-2zM183 443h2v2h-2zM182 448h2v2h-2zM183 446h2v2h-2zM184 442h2v2h-2zM184 447h2v2h-2zM185 447h2v2h-2zM183 440h2v2h-2zM183 449h2v2h-2zM184 446h2v2h-2zM184 444h2v2h-2zM184 450h2v2h-2zM185 448h2v2h-2zM184 448h2v2h-2zM184 443h2v2h-2zM186 446h2v2h-2zM185 453h2v2h-2zM185 450h2v2h-2zM185 445h2v2h-2zM187 449h2v2h-2zM186 448h2v2h-2zM187 453h2v2h-2zM185 451h2v2h-2zM187 445h2v2h-2zM187 446h2v2h-2zM186 452h2v2h-2zM186 447h2v2h-2zM186 445h2v2h-2zM187 454h2v2h-2zM188 450h2v2h-2zM188 451h2v2h-2zM187 451h2v2h-2zM188 454h2v2h-2zM189 451h2v2h-2zM187 447h2v2h-2zM188 456h2v2h-2zM188 452h2v2h-2zM190 456h2v2h-2zM189 455h2v2h-2zM189 452h2v2h-2zM189 453h2v2h-2zM188 455h2v2h-2zM190 455h2v2h-2zM191 456h2v2h-2zM190 453h2v2h-2zM189 454h2v2h-2zM191 453h2v2h-2zM190 454h2v2h-2zM190 452h2v2h-2zM190 449h2v2h-2zM191 452h2v2h-2zM191 451h2v2h-2zM191 455h2v2h-2zM192 451h2v2h-2z" fill="#a020f0" stroke="none"/>
<path d="M191 405h2v2h-2zM193 406h2v2h-2zM191 414h2v2h-2zM192 407h2v2h-2zM193 405h2v2h-2zM193 412h2v2h-2zM192 408h2v2h-2zM192 422h2v2h-2zM194 418h2v2h-2zM194 422h2v2h-2zM192 421h2v2h-2zM192 423h2v2h-2zM194 432h2v2h-2zM193 433h2v2h-2zM193 435h2v2h-2zM194 427h2v2h-2zM194 433h2v2h-2zM194 436h2v2h-2zM194 434h2v2h-2zM194 438h2v2h-2zM195 443h2v2h-2zM195 442h2v2h-2zM195 436h2v2h-2zM195 440h2v2h-2zM195 437h2v2h-2zM196 433h2v2h-2zM197 439h2v2h-2zM197 445h2v2h-2zM196 439h2v2h-2zM197 442h2v2h-2zM198 441h2v2h-2zM197 443h2v2h-2zM196 444h2v2h-2zM196 441h2v2h-2zM198 448h2v2h-2zM197 447h2v2h-2zM198 438h2v2h-2zM197 444h2v2h-2zM198 444h2v2h-2zM199 450h2v2h-2zM200 446h2v2h-2zM199 445h2v2h-2zM200 444h2v2h-2zM198 445h2v2h-2zM199 439h2v2h-2zM199 444h2v2h-2zM199 447h2v2h-2zM199 438h2v2h-2zM199 449h2v2h-2zM201 443h2v2h-2zM200 442h2v2h-2zM202 443h2v2h-2zM202 446h2v2h-2zM201 445h2v2h-2zM202 445h2v2h-2zM200 445h2v2h-2zM203 446h2v2h-2zM202 444h2v2h-2zM204 444h2v2h-2zM203 447h2v2h-2zM203 443h2v2h-2zM204 448h2v2h-2zM203 440h2v2h-2zM204 443h2v2h-2zM203 445h2v2h-2zM206 441h2v2h-2zM205 446h2v2h-2zM204 446h2v2h-2zM204 445h2v2h-2zM206 448h2v2h-2zM205 445h2v2h-2zM206 444h2v2h-2zM206 446h2v2h-2zM207 446h2v2h-2zM207 449h2v2h-2zM206 443h2v2h-2zM205 444h2v2h-2zM207 447h2v2h-2zM207 448h2v2h-2zM208 445h2v2h-2zM208 448h2v2h-2zM207 450h2v2h-2zM209 445h2v2h-2z" fill="#a020f0" stroke="none"/>
<polyline points="210.8,456.4 733.8,456.4" fill="none" stroke="#a020f0" stroke-width="1.8" stroke-linejoin="miter"/>
<path d="M101 503h2.2v2.2h-2.2zM102 496h2.2v2.2h-2.2zM102 501h2.2v2.2h-2.2zM103 500h2.2v2.2h-2.2zM102 498h2.2v2.2h-2.2zM102 505h2.2v2.2h-2.2zM105 501h2.2v2.2h-2.2zM104 500h2.2v2.2h-2.2zM105 502h2.2v2.2h-2.2zM105 506h2.2v2.2h-2.2zM105 499h2.2v2.2h-2.2zM106 507h2.2v2.2h-2.2zM107 503h2.2v2.2h-2.2zM107 511h2.2v2.2h-2.2zM107 502h2.2v2.2h-2.2zM108 504h2.2v2.2h-2.2zM107 508h2.2v2.2h-2.2zM109 509h2.2v2.2h-2.2zM109 505h2.2v2.2h-2.2zM109 503h2.2v2.2h-2.2zM109 501h2.2v2.2h-2.2zM110 506h2.2v2.2h-2.2zM111 508h2.2v2.2h-2.2zM111 510h2.2v2.2h-2.2zM110 508h2.2v2.2h-2.2zM112 503h2.2v2.2h-2.2zM111 504h2.2v2.2h-2.2zM111 512h2.2v2.2h-2.2zM111 507h2.2v2.2h-2.2zM112 508h2.2v2.2h-2.2zM112 510h2.2v2.2h-2.2zM113 502h2.2v2.2h-2.2zM115 507h2.2v2.2h-2.2zM113 503h2.2v2.2h-2.2zM114 506h2.2v2.2h-2.2zM114 508h2.2v2.2h-2.2zM114 505h2.2v2.2h-2.2zM115 508h2.2v2.2h-2.2zM117 505h2.2v2.2h-2.2zM117 512h2.2v2.2h-2.2zM117 506h2.2v2.2h-2.2zM116 511h2.2v2.2h-2.2zM116 505h2.2v2.2h-2.2zM116 508h2.2v2.2h-2.2zM118 507h2.2v2.2h-2.2zM118 512h2.2v2.2h-2.2zM119 508h2.2v2.2h-2.2zM118 510h2.2v2.2h-2.2zM120 511h2.2v2.2h-2.2zM120 510h2.2v2.2h-2.2zM119 512h2.2v2.2h-2.2zM121 512h2.2v2.2h-2.2zM121 510h2.2v2.2h-2.2zM121 507h2.2v2.2h-2.2zM122 511h2.2v2.2h-2.2zM122 504h2.2v2.2h-2.2zM123 507h2.2v2.2h-2.2zM124 511h2.2v2.2h-2.2zM123 505h2.2v2.2h-2.2zM124 506h2.2v2.2h-2.2zM123 508h2.2v2.2h-2.2zM125 512h2.2v2.2h-2.2zM124 508h2.2v2.2h-2.2zM126 505h2.2v2.2h-2.2zM125 502h2.2v2.2h-2.2zM127 502h2.2v2.2h-2.2zM126 509h2.2v2.2h-2.2zM127 510h2.2v2.2h-2.2zM128 508h2.2v2.2h-2.2zM127 508h2.2v2.2h-2.2zM128 504h2.2v2.2h-2.2zM127 505h2.2v2.2h-2.2zM127 506h2.2v2.2h-2.2zM128 502h2.2v2.2h-2.2zM129 508h2.2v2.2h-2.2zM129 512h2.2v2.2h-2.2zM131 503h2.2v2.2h-2.2zM129 507h2.2v2.2h-2.2zM131 511h2.2v2.2h-2.2zM130 510h2.2v2.2h-2.2zM132 505h2.2v2.2h-2.2zM132 504h2.2v2.2h-2.2zM131 505h2.2v2.2h-2.2zM132 501h2.2v2.2h-2.2zM134 504h2.2v2.2h-2.2zM133 502h2.2v2.2h-2.2zM133 508h2.2v2.2h-2.2zM133 505h2.2v2.2h-2.2zM135 501h2.2v2.2h-2.2zM135 506h2.2v2.2h-2.2zM136 506h2.2v2.2h-2.2zM135 502h2.2v2.2h-2.2zM135 505h2.2v2.2h-2.2zM136 508h2.2v2.2h-2.2zM136 509h2.2v2.2h-2.2zM137 504h2.2v2.2h-2.2zM136 502h2.2v2.2h-2.2zM138 502h2.2v2.2h-2.2zM137 511h2.2v2.2h-2.2zM138 504h2.2v2.2h-2.2zM140 506h2.2v2.2h-2.2zM138 506h2.2v2.2h-2.2zM139 507h2.2v2.2h-2.2zM140 509h2.2v2.2h-2.2zM139 509h2.2v2.2h-2.2zM141 506h2.2v2.2h-2.2zM140 504h2.2v2.2h-2.2zM141 507h2.2v2.2h-2.2zM142 500h2.2v2.2h-2.2zM142 502h2.2v2.2h-2.2zM141 510h2.2v2.2h-2.2zM144 509h2.2v2.2h-2.2zM143 504h2.2v2.2h-2.2zM143 502h2.2v2.2h-2.2zM144 501h2.2v2.2h-2.2zM145 507h2.2v2.2h-2.2zM144 510h2.2v2.2h-2.2zM146 505h2.2v2.2h-2.2zM146 506h2.2v2.2h-2.2zM146 508h2.2v2.2h-2.2zM147 502h2.2v2.2h-2.2zM148 510h2.2v2.2h-2.2zM147 507h2.2v2.2h-2.2zM147 505h2.2v2.2h-2.2zM148 500h2.2v2.2h-2.2zM147 504h2.2v2.2h-2.2zM149 510h2.2v2.2h-2.2zM149 501h2.2v2.2h-2.2zM150 507h2.2v2.2h-2.2zM150 509h2.2v2.2h-2.2zM150 510h2.2v2.2h-2.2zM151 501h2.2v2.2h-2.2zM151 509h2.2v2.2h-2.2zM151 502h2.2v2.2h-2.2zM151 505h2.2v2.2h-2.2zM152 504h2.2v2.2h-2.2zM151 503h2.2v2.2h-2.2zM154 501h2.2v2.2h-2.2zM153 503h2.2v2.2h-2.2zM152 506h2.2v2.2h-2.2zM153 510h2.2v2.2h-2.2zM153 498h2.2v2.2h-2.2zM155 507h2.2v2.2h-2.2zM154 507h2.2v2.2h-2.2zM155 509h2.2v2.2h-2.2zM156 499h2.2v2.2h-2.2zM157 508h2.2v2.2h-2.2zM156 503h2.2v2.2h-2.2zM157 502h2.2v2.2h-2.2zM157 499h2.2v2.2h-2.2zM157 507h2.2v2.2h-2.2zM158 499h2.2v2.2h-2.2zM157 510h2.2v2.2h-2.2zM158 503h2.2v2.2h-2.2zM159 503h2.2v2.2h-2.2zM159 502h2.2v2.2h-2.2zM158 500h2.2v2.2h-2.2zM159 501h2.2v2.2h-2.2zM161 500h2.2v2.2h-2.2zM160 506h2.2v2.2h-2.2zM162 502h2.2v2.2h-2.2zM160 503h2.2v2.2h-2.2zM162 504h2.2v2.2h-2.2zM162 499h2.2v2.2h-2.2zM162 498h2.2v2.2h-2.2zM164 500h2.2v2.2h-2.2zM164 499h2.2v2.2h-2.2zM164 505h2.2v2.2h-2.2zM165 500h2.2v2.2h-2.2zM165 504h2.2v2.2h-2.2zM166 501h2.2v2.2h-2.2zM166 502h2.2v2.2h-2.2zM166 509h2.2v2.2h-2.2zM167 504h2.2v2.2h-2.2zM166 508h2.2v2.2h-2.2zM168 509h2.2v2.2h-2.2zM169 500h2.2v2.2h-2.2zM168 507h2.2v2.2h-2.2zM167 508h2.2v2.2h-2.2zM168 508h2.2v2.2h-2.2zM170 502h2.2v2.2h-2.2zM170 505h2.2v2.2h-2.2zM172 501h2.2v2.2h-2.2zM170 504h2.2v2.2h-2.2zM170 508h2.2v2.2h-2.2zM171 505h2.2v2.2h-2.2zM171 506h2.2v2.2h-2.2zM172 502h2.2v2.2h-2.2zM173 506h2.2v2.2h-2.2zM173 507h2.2v2.2h-2.2zM172 504h2.2v2.2h-2.2zM174 506h2.2v2.2h-2.2zM174 507h2.2v2.2h-2.2zM175 502h2.2v2.2h-2.2zM174 505h2.2v2.2h-2.2zM175 503h2.2v2.2h-2.2zM176 505h2.2v2.2h-2.2zM176 501h2.2v2.2h-2.2zM175 507h2.2v2.2h-2.2zM176 503h2.2v2.2h-2.2zM176 511h2.2v2.2h-2.2zM178 508h2.2v2.2h-2.2zM179 507h2.2v2.2h-2.2zM178 512h2.2v2.2h-2.2zM179 510h2.2v2.2h-2.2zM179 504h2.2v2.2h-2.2zM179 502h2.2v2.2h-2.2zM180 508h2.2v2.2h-2.2zM180 502h2.2v2.2h-2.2zM182 512h2.2v2.2h-2.2zM180 503h2.2v2.2h-2.2zM181 510h2.2v2.2h-2.2zM182 509h2.2v2.2h-2.2zM182 501h2.2v2.2h-2.2zM182 508h2.2v2.2h-2.2zM184 505h2.2v2.2h-2.2zM184 507h2.2v2.2h-2.2zM185 511h2.2v2.2h-2.2zM183 505h2.2v2.2h-2.2zM185 506h2.2v2.2h-2.2zM185 510h2.2v2.2h-2.2zM185 504h2.2v2.2h-2.2zM186 508h2.2v2.2h-2.2zM188 509h2.2v2.2h-2.2zM187 511h2.2v2.2h-2.2zM187 510h2.2v2.2h-2.2zM188 511h2.2v2.2h-2.2zM189 505h2.2v2.2h-2.2zM187 512h2.2v2.2h-2.2zM189 509h2.2v2.2h-2.2zM190 512h2.2v2.2h-2.2zM189 508h2.2v2.2h-2.2zM190 504h2.2v2.2h-2.2zM190 510h2.2v2.2h-2.2zM189 504h2.2v2.2h-2.2zM191 496h2.2v2.2h-2.2zM191 498h2.2v2.2h-2.2zM191 501h2.2v2.2h-2.2zM192 490h2.2v2.2h-2.2zM192 499h2.2v2.2h-2.2zM193 497h2.2v2.2h-2.2zM193 498h2.2v2.2h-2.2zM193 493h2.2v2.2h-2.2zM193 503h2.2v2.2h-2.2zM195 495h2.2v2.2h-2.2zM195 499h2.2v2.2h-2.2zM195 494h2.2v2.2h-2.2zM194 502h2.2v2.2h-2.2zM196 504h2.2v2.2h-2.2zM196 500h2.2v2.2h-2.2zM195 496h2.2v2.2h-2.2zM196 508h2.2v2.2h-2.2zM197 503h2.2v2.2h-2.2zM198 503h2.2v2.2h-2.2zM197 505h2.2v2.2h-2.2zM197 506h2.2v2.2h-2.2zM199 505h2.2v2.2h-2.2zM199 501h2.2v2.2h-2.2zM200 508h2.2v2.2h-2.2zM200 503h2.2v2.2h-2.2zM200 502h2.2v2.2h-2.2zM200 499h2.2v2.2h-2.2zM201 504h2.2v2.2h-2.2zM203 507h2.2v2.2h-2.2zM203 508h2.2v2.2h-2.2zM202 504h2.2v2.2h-2.2zM204 507h2.2v2.2h-2.2zM204 504h2.2v2.2h-2.2zM205 508h2.2v2.2h-2.2zM204 499h2.2v2.2h-2.2zM203 506h2.2v2.2h-2.2zM205 509h2.2v2.2h-2.2zM205 511h2.2v2.2h-2.2zM205 504h2.2v2.2h-2.2zM206 508h2.2v2.2h-2.2zM205 499h2.2v2.2h-2.2zM205 505h2.2v2.2h-2.2zM207 502h2.2v2.2h-2.2zM207 508h2.2v2.2h-2.2zM207 503h2.2v2.2h-2.2zM207 504h2.2v2.2h-2.2zM209 505h2.2v2.2h-2.2zM207 506h2.2v2.2h-2.2zM209 507h2.2v2.2h-2.2zM208 506h2.2v2.2h-2.2zM208 508h2.2v2.2h-2.2z" fill="#00b2ee" stroke="none"/>
<path d="M190 474h2v2h-2zM191 476h2v2h-2zM191 470h2v2h-2zM192 487h2v2h-2zM192 483h2v2h-2z" fill="#00b2ee" stroke="none"/>
<line x1="101.5" y1="514" x2="734.5" y2="514" stroke="#00b2ee" stroke-width="3"/>
<path d="M101.8 588V519M102.8 587.2V522.4M103.8 587.7V523.1M104.8 588.1V521.9M105.8 587.6V521M106.8 589.5V519.9M107.8 587.3V517.7M108.8 587V522.4M109.8 587.6V517.5M110.8 589.3V517.5M111.8 587.1V517.5M112.8 587.8V517.5M116.8 587.9V517.5M117.8 589.5V517.5M118.8 589V517.5M119.8 588.3V517.5M120.8 589.5V517.5M125.8 586.5V517.5M126.8 587.7V517.5M127.8 578.5V517.5M128.8 588.1V517.5M129.8 587.6V517.5M130.8 586.9V517.5M131.8 588.5V517.5M132.8 589V517.5M133.8 589.5V517.5M134.8 588.4V517.5M135.8 588.1V517.5M136.8 589.3V517.5M137.8 584V517.5M138.8 586.8V517.5M139.8 588.2V517.5M140.8 589.1V517.5M141.8 588.7V517.5M142.8 587.1V517.5M143.8 586.7V517.5M144.8 588.1V517.5M145.8 589.4V517.5M146.8 589.2V517.5M147.8 580.3V517.5M148.8 587.8V517.5M149.8 586.8V517.5M150.8 581.5V517.5M151.8 588.5V517.5M152.8 588.2V517.5M153.8 589.4V517.5M154.8 588.6V517.5M155.8 588.7V517.5M156.8 586.6V517.5M157.8 587.3V517.5M158.8 589.5V517.5M159.8 587.7V517.5M160.8 587.7V517.5M161.8 588.2V517.5M162.8 588.6V517.5M163.8 587.7V517.5M164.8 587.5V517.5M165.8 576.1V517.5M166.8 587.1V517.5M167.8 586.7V517.5M168.8 584.2V517.5M169.8 589.3V517.5M170.8 586.5V517.5M171.8 586.7V517.5M172.8 588.1V517.5M173.8 586.9V517.5M174.8 587.3V517.5M175.8 589.3V517.5M176.8 586.5V517.5M177.8 587.8V517.5M178.8 582V517.5M179.8 588.4V517.5M180.8 588.3V517.5M181.8 588.8V517.5M182.8 589.1V517.5M189.8 588.4V517.5M190.8 588.1V517.5M191.8 587.1V517.5M197.8 589V517.5M198.8 586.7V517.5M199.8 586.9V517.5M200.8 588.2V517.5M204.8 588.5V517.5M205.8 588V517.5M206.8 589V517.5" fill="none" stroke="#008a42" stroke-width="1.2"/>
<polyline points="207.3,589.5 209.4,594.5 210.8,597.5" fill="none" stroke="#008a42" stroke-width="1.2" stroke-linejoin="miter"/>
<polyline points="210.8,597 344.5,597 345.9,582.9 493.6,582.9 494.3,597 734.5,597" fill="none" stroke="#008a42" stroke-width="1.3" stroke-linejoin="miter"/>
<polygon points="122,597.9 123,597.9 123,598.9 124,598.9 124,598.4 126,598.4 126,598.9 127,598.9 127,601.3 128,601.3 128,635 127,635 127,627.2 126,627.2 126,628.4 124,628.4 124,635.1 123,635.1 123,634.5 122,634.5" fill="#ff6347" stroke="none"/>
<polygon points="141,616.8 142,616.8 142,625.7 143,625.7 143,617.1 144,617.1 144,615.9 145,615.9 145,615.8 146,615.8 146,616.4 147,616.4 147,616.6 148,616.6 148,615.8 149,615.8 149,617.3 151,617.3 151,627.5 149,627.5 149,627 148,627 148,639.2 147,639.2 147,625.6 146,625.6 146,638.4 145,638.4 145,638.7 144,638.7 144,637 143,637 143,637.6 142,637.6 142,637.7 141,637.7" fill="#ff6347" stroke="none"/>
<polygon points="158,598.9 159,598.9 159,598.4 160,598.4 160,599 161,599 161,598.3 163,598.3 163,597.6 164,597.6 164,597.5 165,597.5 165,598.4 166,598.4 166,597.6 167,597.6 167,651.8 166,651.8 166,650.5 164,650.5 164,639.9 163,639.9 163,652.1 162,652.1 162,651.7 161,651.7 161,650.1 160,650.1 160,650.8 159,650.8 159,649.9 158,649.9" fill="#ff6347" stroke="none"/>
<polygon points="172,597.8 173,597.8 173,599.3 174,599.3 174,599.1 175,599.1 175,598.1 176,598.1 176,599.1 178,599.1 178,634.4 176,634.4 176,641.1 175,641.1 175,641.6 174,641.6 174,641.2 173,641.2 173,640.1 172,640.1" fill="#ff6347" stroke="none"/>
<polygon points="196,618.6 197,618.6 197,619.2 198,619.2 198,626.9 199,626.9 199,619.9 200,619.9 200,619 201,619 201,618.6 202,618.6 202,619.3 203,619.3 203,625.6 204,625.6 204,619.1 205,619.1 205,641.9 204,641.9 204,639.7 203,639.7 203,639.5 202,639.5 202,639.9 201,639.9 201,641.8 200,641.8 200,639.9 199,639.9 199,626.9 198,626.9 198,639.3 197,639.3 197,633.9 196,633.9" fill="#ff6347" stroke="none"/>
<path d="M101.5 627.3 101.5 623.3 102.5 623.3 102.5 624.8 103.5 624.8 103.5 628.6 104.5 628.6 104.5 664.3 105.5 664.3 105.5 597.5 106.5 597.5 106.5 621.9 107.5 621.9 107.5 671 108.5 671 108.5 621 109.5 621 109.5 625.8 110.5 625.8 110.5 631.6 111.5 631.6 111.5 628.6 112.5 628.6 112.5 611.5 113.5 611.5 113.5 632.8 114.5 632.8 114.5 598.3 115.5 598.3 115.5 633.1 116.5 633.1 116.5 625.8 117.5 625.8 117.5 665.5 118.5 665.5 118.5 605.5 119.5 605.5 119.5 664.3 120.5 664.3 120.5 621.1 121.5 621.1 121.5 618.2 122.5 618.2 122.5 670.4 123.5 670.4 123.5 598.5 124.5 598.5 124.5 597.5 125.5 597.5 125.5 674.2 126.5 674.2 126.5 625.3 127.5 625.3 127.5 627.9 128.5 627.9 128.5 598.3 129.5 598.3 129.5 651.1 130.5 651.1 130.5 621.3 131.5 621.3 131.5 640.5 132.5 640.5 132.5 677.5 133.5 677.5 133.5 632.9 134.5 632.9 134.5 627.8 135.5 627.8 135.5 623.6 136.5 623.6 136.5 633 137.5 633 137.5 640.5 138.5 640.5 138.5 627.5 139.5 627.5 139.5 626.3 140.5 626.3 140.5 665.1 141.5 665.1 141.5 617.9 142.5 617.9 142.5 599.5 143.5 599.5 143.5 636.4 144.5 636.4 144.5 625.4 145.5 625.4 145.5 625.6 146.5 625.6 146.5 621.7 147.5 621.7 147.5 628.4 148.5 628.4 148.5 623.6 149.5 623.6 149.5 623.8 150.5 623.8 150.5 629.2 151.5 629.2 151.5 630.2 152.5 630.2 152.5 627.9 153.5 627.9 153.5 623.8 154.5 623.8 154.5 631.9 155.5 631.9 155.5 677.5 156.5 677.5 156.5 626.8 157.5 626.8 157.5 631.7 158.5 631.7 158.5 625.9 159.5 625.9 159.5 623.6 160.5 623.6 160.5 640.5 161.5 640.5 161.5 630.3 162.5 630.3 162.5 626.5 163.5 626.5 163.5 631.9 164.5 631.9 164.5 631.1 165.5 631.1 165.5 626.2 166.5 626.2 166.5 631.1 167.5 631.1 167.5 625.7 168.5 625.7 168.5 677.5 169.5 677.5 169.5 621.8 170.5 621.8 170.5 677.5 171.5 677.5 171.5 631.1 172.5 631.1 172.5 622 173.5 622 173.5 598.3 174.5 598.3 174.5 627.7 175.5 627.7 175.5 626.5 176.5 626.5 176.5 677.5 177.5 677.5 177.5 632.3 178.5 632.3 178.5 626 179.5 626 179.5 677.5 180.5 677.5 180.5 625.8 181.5 625.8 181.5 633.9 182.5 633.9 182.5 626.3 183.5 626.3 183.5 674.8 184.5 674.8 184.5 677.5 185.5 677.5 185.5 625.3 186.5 625.3 186.5 624.2 187.5 624.2 187.5 630.6 188.5 630.6 188.5 622.2 189.5 622.2 189.5 627.6 190.5 627.6 190.5 632.6 191.5 632.6 191.5 664.3 192.5 664.3 192.5 626 193.5 626 193.5 622.2 194.5 622.2 194.5 611.5 195.5 611.5 195.5 625.6 196.5 625.6 196.5 623.2 197.5 623.2 197.5 597.5 198.5 597.5 198.5 630.8 199.5 630.8 199.5 623.4 200.5 623.4 200.5 651.1 201.5 651.1 201.5 630.3 202.5 630.3 202.5 677.5 203.5 677.5 203.5 628.6 204.5 628.6 204.5 629.1 205.5 629.1 205.5 628.3 206.5 628.3 206.5 624.1 207.5 624.1" fill="none" stroke="#ff6347" stroke-width="1"/>
<polygon points="101.8,706.1 102.8,703.2 103.8,699.1 104.8,696.2 105.8,693.9 106.8,692.1 107.8,691.8 108.8,690.7 109.8,688.8 110.8,688 111.8,686.7 112.8,685.2 113.8,683.5 114.8,681.2 115.8,679.7 116.8,677.8 117.8,678.3 118.8,677.7 119.8,678.4 120.8,678 121.8,678.7 122.8,677.8 123.8,678.3 124.8,678.6 125.8,678 126.8,678.2 127.8,678.2 128.8,678.4 129.8,677.8 130.8,678.4 131.8,678.3 132.8,678 133.8,678.3 134.8,678.2 135.8,677.7 136.8,678.4 137.8,677.8 138.8,678.4 139.8,678.5 140.8,678.1 141.8,677.8 142.8,678.6 143.8,677.9 144.8,678.2 145.8,678.3 146.8,678.2 147.8,677.8 148.8,678.4 149.8,678 150.8,678.7 151.8,678.3 152.8,678.1 153.8,678.5 154.8,678.4 155.8,678.3 156.8,678 157.8,678.4 158.8,678.2 159.8,678.1 160.8,678.6 161.8,678.3 162.8,678.2 163.8,678.5 164.8,678.3 165.8,678.3 166.8,678.2 167.8,678.5 168.8,678.4 169.8,677.9 170.8,678.1 171.8,678.3 172.8,678.5 173.8,678 174.8,678.3 175.8,678.5 176.8,677.9 177.8,678.6 178.8,678.1 179.8,678.3 180.8,677.9 181.8,678.4 182.8,678.3 183.8,678.6 184.8,678 185.8,678.6 186.8,677.9 187.8,679.9 188.8,688.4 189.8,697.4 190.8,705.5 191.8,701.3 192.8,692.9 193.8,686.6 194.8,681 195.8,677.9 196.8,678.7 197.8,677.9 198.8,677.8 199.8,678.6 200.8,678.5 201.8,677.8 202.8,678.4 203.8,678.1 204.8,678.5 205.8,687.2 206.8,703.8 207.8,731.6 207.8,734.7 206.8,713.5 205.8,693.6 204.8,693.1 203.8,696 202.8,689.9 201.8,688.9 200.8,685 199.8,687.7 198.8,686.8 197.8,685.9 196.8,687.7 195.8,686.8 194.8,690 193.8,702.1 192.8,698.8 191.8,709.3 190.8,713.3 189.8,704.9 188.8,694.7 187.8,689.4 186.8,684.4 185.8,686 184.8,687.7 183.8,684.5 182.8,685 181.8,685.9 180.8,687.7 179.8,687.2 178.8,686.2 177.8,685.2 176.8,688 175.8,686.9 174.8,690.9 173.8,688.3 172.8,686.2 171.8,686.2 170.8,687.8 169.8,685 168.8,694.4 167.8,685.1 166.8,685.8 165.8,684.8 164.8,685.1 163.8,688.5 162.8,687.1 161.8,687.1 160.8,688.2 159.8,686.3 158.8,688.3 157.8,697.7 156.8,686.4 155.8,688.4 154.8,686.3 153.8,688.1 152.8,692 151.8,687.8 150.8,686 149.8,692 148.8,688.3 147.8,686.4 146.8,695.8 145.8,688.1 144.8,697.4 143.8,689 142.8,697.9 141.8,689.8 140.8,687.3 139.8,687.9 138.8,695.5 137.8,687.4 136.8,686.7 135.8,686.8 134.8,686.9 133.8,687 132.8,686.2 131.8,687.2 130.8,689.5 129.8,686.8 128.8,692.1 127.8,688.5 126.8,689.8 125.8,687.9 124.8,687.2 123.8,687.1 122.8,688.5 121.8,688.1 120.8,687.1 119.8,688.2 118.8,686.9 117.8,689 116.8,689.2 115.8,689.2 114.8,690 113.8,693.6 112.8,693.3 111.8,693 110.8,699 109.8,695.4 108.8,697.9 107.8,697.9 106.8,701.4 105.8,703.4 104.8,701.2 103.8,703.1 102.8,709.4 101.8,722.6" fill="#4a78ff" stroke="none"/>
<polyline points="207.3,708.3 208.7,758.5" fill="none" stroke="#4a78ff" stroke-width="1.3" stroke-linejoin="miter"/>
<polyline points="208.7,757.9 417.6,757.9" fill="none" stroke="#4a78ff" stroke-width="1.3" stroke-linejoin="miter"/>
<polygon points="101,797.7 102,797.7 102,797.4 103,797.4 103,797.5 104,797.5 104,792.4 105,792.4 105,789.9 107,789.9 107,791.3 108,791.3 108,791.2 109,791.2 109,791.3 110,791.3 110,790.3 112,790.3 112,790 113,790 113,789.9 114,789.9 114,787.4 115,787.4 115,786.7 116,786.7 116,785.5 117,785.5 117,784.2 118,784.2 118,784.9 119,784.9 119,781.7 120,781.7 120,780.8 121,780.8 121,779.3 122,779.3 122,780.2 123,780.2 123,781.5 124,781.5 124,779.3 125,779.3 125,781 126,781 126,779.9 127,779.9 127,780.4 128,780.4 128,781.2 129,781.2 129,781.5 130,781.5 130,779.8 131,779.8 131,780.7 132,780.7 132,780.9 133,780.9 133,779.4 134,779.4 134,780.9 137,780.9 137,780 138,780 138,781.6 139,781.6 139,780.1 140,780.1 140,781 141,781 141,779.5 142,779.5 142,779.7 143,779.7 143,780.3 144,780.3 144,779.3 145,779.3 145,780.3 146,780.3 146,780.9 148,780.9 148,780.3 149,780.3 149,779.6 150,779.6 150,780.3 151,780.3 151,780 152,780 152,780.1 153,780.1 153,779.8 154,779.8 154,780.3 155,780.3 155,780.4 156,780.4 156,780.1 157,780.1 157,780.2 158,780.2 158,780 159,780 159,779.4 160,779.4 160,779.9 161,779.9 161,779.5 162,779.5 162,780.1 163,780.1 163,779.9 164,779.9 164,779.2 165,779.2 165,780.5 166,780.5 166,781 167,781 167,781.3 168,781.3 168,780.2 170,780.2 170,781.3 171,781.3 171,781.1 172,781.1 172,781.4 173,781.4 173,779.9 174,779.9 174,781.2 176,781.2 176,781.6 177,781.6 177,780 178,780 178,781.6 179,781.6 179,780.7 180,780.7 180,781.4 181,781.4 181,779.3 182,779.3 182,780.3 183,780.3 183,781.1 184,781.1 184,779.4 185,779.4 185,780 186,780 186,779.9 187,779.9 187,778.4 188,778.4 188,783.7 189,783.7 189,795.2 190,795.2 190,800.8 191,800.8 191,808.1 192,808.1 192,813.4 193,813.4 193,798.4 194,798.4 194,792.8 195,792.8 195,788 196,788 196,784 197,784 197,779.8 198,779.8 198,777.5 199,777.5 199,778.5 200,778.5 200,778.8 201,778.8 201,777.4 203,777.4 203,778 204,778 204,778.6 205,778.6 205,778.4 207,778.4 207,779.2 208,779.2 208,795 209,795 209,814 210,814 210,823.9 210,823.9 210,823.3 209,823.3 209,811.5 208,811.5 208,801.4 207,801.4 207,794.3 205,794.3 205,801.7 204,801.7 204,801.5 203,801.5 203,800.5 202,800.5 202,800.3 201,800.3 201,800.4 200,800.4 200,800.9 199,800.9 199,798.8 198,798.8 198,800.9 197,800.9 197,802.6 196,802.6 196,796.3 195,796.3 195,803.1 194,803.1 194,806.2 193,806.2 193,814.9 192,814.9 192,813.9 191,813.9 191,812.5 190,812.5 190,811 189,811 189,805.6 188,805.6 188,803 187,803 187,800.7 186,800.7 186,800.8 185,800.8 185,801.8 184,801.8 184,802.4 183,802.4 183,801.2 182,801.2 182,801.3 181,801.3 181,801.8 180,801.8 180,800.8 179,800.8 179,802.2 178,802.2 178,800.8 177,800.8 177,801.5 176,801.5 176,797 174,797 174,801.7 173,801.7 173,802.2 172,802.2 172,801.5 171,801.5 171,800.9 170,800.9 170,802.1 169,802.1 169,802.4 168,802.4 168,802.7 167,802.7 167,802 166,802 166,801.3 165,801.3 165,800.7 164,800.7 164,796.4 163,796.4 163,801 162,801 162,800.9 161,800.9 161,802 160,802 160,801.7 159,801.7 159,801 158,801 158,800.8 157,800.8 157,801 156,801 156,800.9 155,800.9 155,801.8 154,801.8 154,796.2 153,796.2 153,802 152,802 152,801.8 151,801.8 151,802.2 150,802.2 150,802.5 148,802.5 148,797.5 146,797.5 146,802.6 145,802.6 145,801.9 143,801.9 143,801.2 142,801.2 142,802 141,802 141,801.3 140,801.3 140,801.7 139,801.7 139,801.1 138,801.1 138,802.1 137,802.1 137,793.1 135,793.1 135,801.3 134,801.3 134,802.3 133,802.3 133,801.7 132,801.7 132,802.7 131,802.7 131,802.1 130,802.1 130,802.3 129,802.3 129,802.6 128,802.6 128,801.7 127,801.7 127,801.8 126,801.8 126,802.1 125,802.1 125,802.2 124,802.2 124,801.5 123,801.5 123,800.9 122,800.9 122,801.1 121,801.1 121,802.5 120,802.5 120,803.9 119,803.9 119,803.1 118,803.1 118,805.3 117,805.3 117,804.9 116,804.9 116,807.1 115,807.1 115,807.2 114,807.2 114,808.6 113,808.6 113,808.4 112,808.4 112,801.5 110,801.5 110,809.2 109,809.2 109,809.1 108,809.1 108,808.8 107,808.8 107,802.4 105,802.4 105,808.6 104,808.6 104,811.6 103,811.6 103,811.8 102,811.8 102,811 101,811" fill="#008a00" stroke="none"/>
<polygon points="101,821.5 102,821.5 102,823.5 103,823.5 103,822.8 104,822.8 104,822.2 105,822.2 105,821.5 106,821.5 106,822 107,822 107,821.6 108,821.6 108,821.9 109,821.9 109,822.9 110,822.9 110,822.7 111,822.7 111,821.3 112,821.3 112,823.5 113,823.5 113,821.2 115,821.2 115,823.6 116,823.6 116,822.2 117,822.2 117,822.4 118,822.4 118,821.1 119,821.1 119,820.8 120,820.8 120,821.8 121,821.8 121,822 122,822 122,821.1 123,821.1 123,821.7 124,821.7 124,822.3 125,822.3 125,820.2 126,820.2 126,820.5 127,820.5 127,821.6 128,821.6 128,821.7 129,821.7 129,821.9 130,821.9 130,820.4 132,820.4 132,821.6 133,821.6 133,822.2 134,822.2 134,822 135,822 135,820.7 136,820.7 136,820.2 137,820.2 137,820.9 138,820.9 138,821.6 139,821.6 139,820.7 140,820.7 140,822.2 141,822.2 141,820.9 142,820.9 142,820.1 143,820.1 143,822.1 144,822.1 144,821.7 145,821.7 145,822.1 146,822.1 146,822.2 147,822.2 147,820.1 148,820.1 148,820.9 149,820.9 149,820.8 150,820.8 150,820.4 151,820.4 151,821.1 152,821.1 152,821.7 153,821.7 153,820.6 154,820.6 154,821.9 155,821.9 155,820.7 156,820.7 156,820 157,820 157,820.8 158,820.8 158,820.1 159,820.1 159,822.1 160,822.1 160,821.5 161,821.5 161,821.8 162,821.8 162,821 163,821 163,819.8 164,819.8 164,820.7 167,820.7 167,821.7 168,821.7 168,821.4 169,821.4 169,820.2 171,820.2 171,821.6 172,821.6 172,821.9 174,821.9 174,821.7 175,821.7 175,822 176,822 176,820.7 177,820.7 177,821.3 178,821.3 178,820.3 179,820.3 179,820.4 180,820.4 180,820.2 181,820.2 181,820.4 182,820.4 182,820.9 183,820.9 183,820.1 184,820.1 184,820.3 185,820.3 185,821.5 186,821.5 186,821.8 187,821.8 187,819.3 188,819.3 188,821 189,821 189,820.8 190,820.8 190,822.5 191,822.5 191,827.1 192,827.1 192,824.7 193,824.7 193,821.2 194,821.2 194,820.8 195,820.8 195,821.6 196,821.6 196,822.1 197,822.1 197,822.3 198,822.3 198,820.6 199,820.6 199,821.8 200,821.8 200,820.5 203,820.5 203,820.3 204,820.3 204,822.4 205,822.4 205,821.4 207,821.4 207,821.6 208,821.6 208,824.6 209,824.6 209,829.1 210,829.1 210,834.6 211,834.6 211,836.5 210,836.5 210,834.8 209,834.8 209,834.3 208,834.3 208,833.5 207,833.5 207,833.8 206,833.8 206,834.1 205,834.1 205,834.3 204,834.3 204,833.9 203,833.9 203,827.3 200,827.3 200,834.5 199,834.5 199,834.4 197,834.4 197,834.6 196,834.6 196,835.1 195,835.1 195,834.8 194,834.8 194,834.9 193,834.9 193,835 192,835 192,829.3 191,829.3 191,835.3 189,835.3 189,833.9 188,833.9 188,833.8 187,833.8 187,834 186,834 186,833.4 185,833.4 185,833.5 184,833.5 184,833.8 183,833.8 183,833.4 182,833.4 182,834 181,834 181,833.8 180,833.8 180,833.9 179,833.9 179,833.5 178,833.5 178,833.8 177,833.8 177,833.9 176,833.9 176,833.6 175,833.6 175,833.8 174,833.8 174,829.5 172,829.5 172,834 171,834 171,833.6 170,833.6 170,833.4 169,833.4 169,833.7 167,833.7 167,828.6 164,828.6 164,833.5 163,833.5 163,833.4 162,833.4 162,833.9 161,833.9 161,833.6 160,833.6 160,833.5 159,833.5 159,833.4 158,833.4 158,833.8 157,833.8 157,833.5 156,833.5 156,834 154,834 154,833.9 153,833.9 153,833.5 152,833.5 152,834 151,834 151,833.9 150,833.9 150,833.4 149,833.4 149,833.7 148,833.7 148,833.5 147,833.5 147,833.7 146,833.7 146,834 145,834 145,833.9 144,833.9 144,833.5 142,833.5 142,833.9 141,833.9 141,833.7 140,833.7 140,833.6 139,833.6 139,833.9 138,833.9 138,833.7 137,833.7 137,833.5 135,833.5 135,833.6 134,833.6 134,833.5 133,833.5 133,833.6 132,833.6 132,825.5 130,825.5 130,833.9 129,833.9 129,833.5 128,833.5 128,833.6 127,833.6 127,833.8 126,833.8 126,833.7 125,833.7 125,833.5 124,833.5 124,833.7 123,833.7 123,833.4 122,833.4 122,833.9 121,833.9 121,833.4 120,833.4 120,833.7 119,833.7 119,833.9 118,833.9 118,833.5 117,833.5 117,833.4 116,833.4 116,833.6 115,833.6 115,824.6 113,824.6 113,833.6 111,833.6 111,833.9 110,833.9 110,833.7 108,833.7 108,833.4 107,833.4 107,833.7 106,833.7 106,833.4 105,833.4 105,828.2 104,828.2 104,833.5 103,833.5 103,833.9 102,833.9 102,833.7 101,833.7" fill="#00c800" stroke="none"/>
<polyline points="210.8,838 734.5,838" fill="none" stroke="#00aa00" stroke-width="2" stroke-linejoin="miter"/>
<polygon points="101,889.8 102,889.8 102,890 103,890 103,891.1 104,891.1 104,890 105,890 105,890.5 106,890.5 106,891 107,891 107,891.4 108,891.4 108,890 109,890 109,890.1 110,890.1 110,891.1 111,891.1 111,890 112,890 112,891 113,891 113,889.8 114,889.8 114,889.3 115,889.3 115,889.6 116,889.6 116,876 117,876 117,876.4 118,876.4 118,875.9 119,875.9 119,875.4 120,875.4 120,876.7 121,876.7 121,875.5 122,875.5 122,876.2 123,876.2 123,875.2 124,875.2 124,876 127,876 127,875.1 128,875.1 128,874.9 129,874.9 129,875.6 130,875.6 130,876.2 131,876.2 131,875.7 132,875.7 132,876.2 133,876.2 133,875.4 134,875.4 134,875.2 135,875.2 135,875.7 137,875.7 137,875.9 138,875.9 138,875.4 139,875.4 139,876.2 140,876.2 140,876.9 142,876.9 142,876.6 143,876.6 143,875.5 144,875.5 144,876.5 146,876.5 146,875.3 147,875.3 147,876.3 148,876.3 148,875.7 149,875.7 149,875.6 150,875.6 150,877 151,877 151,875.1 152,875.1 152,875.5 153,875.5 153,875.4 154,875.4 154,875.1 155,875.1 155,875.8 157,875.8 157,875.9 158,875.9 158,876.2 159,876.2 159,875.7 160,875.7 160,875.6 161,875.6 161,876.2 162,876.2 162,875.4 163,875.4 163,876.7 164,876.7 164,876.4 165,876.4 165,877 166,877 166,875.3 167,875.3 167,876.9 168,876.9 168,877 169,877 169,876.2 170,876.2 170,876.7 171,876.7 171,876.3 172,876.3 172,877 173,877 173,876.6 174,876.6 174,876.4 176,876.4 176,876.1 177,876.1 177,875.4 178,875.4 178,876 179,876 179,876.3 180,876.3 180,875.9 181,875.9 181,875.5 182,875.5 182,877.2 183,877.2 183,877.1 184,877.1 184,876.2 185,876.2 185,876.4 187,876.4 187,876.5 188,876.5 188,875.5 189,875.5 189,885.6 190,885.6 190,894.5 191,894.5 191,903.9 192,903.9 192,906.1 193,906.1 193,887.7 194,887.7 194,875.1 195,875.1 195,875.5 196,875.5 196,874.8 197,874.8 197,876.1 198,876.1 198,876.4 199,876.4 199,874.8 200,874.8 200,875.9 201,875.9 201,875.6 202,875.6 202,875.4 203,875.4 203,874.9 204,874.9 204,876.1 206,876.1 206,875.3 207,875.3 207,874.8 208,874.8 208,902.5 209,902.5 209,905.8 210,905.8 210,909.7 211,909.7 211,912.8 212,912.8 212,914.4 211,914.4 211,911.6 210,911.6 210,908.7 209,908.7 209,906.5 208,906.5 208,902.6 207,902.6 207,902.2 206,902.2 206,902.4 205,902.4 205,902.6 204,902.6 204,902.2 203,902.2 203,901.9 202,901.9 202,902.4 200,902.4 200,902.7 199,902.7 199,902.2 198,902.2 198,902 197,902 197,902.2 196,902.2 196,902 194,902 194,904.7 193,904.7 193,909 192,909 192,908.5 191,908.5 191,908.8 190,908.8 190,905.9 189,905.9 189,903.2 188,903.2 188,903.8 187,903.8 187,903.3 186,903.3 186,903.7 185,903.7 185,904 184,904 184,903.8 183,903.8 183,903.3 182,903.3 182,903.6 181,903.6 181,903.9 179,903.9 179,903.7 178,903.7 178,904 177,904 177,903.4 176,903.4 176,903.7 175,903.7 175,903.4 174,903.4 174,903.6 173,903.6 173,903.3 172,903.3 172,903.6 171,903.6 171,903.4 170,903.4 170,903.9 169,903.9 169,903.8 168,903.8 168,903.9 166,903.9 166,903.5 165,903.5 165,903.2 164,903.2 164,903.6 163,903.6 163,903.7 162,903.7 162,903.3 161,903.3 161,904 160,904 160,903.3 159,903.3 159,903.8 158,903.8 158,903.3 157,903.3 157,904 156,904 156,903.6 155,903.6 155,903.9 154,903.9 154,903.5 153,903.5 153,903.9 151,903.9 151,899.6 150,899.6 150,903.7 149,903.7 149,903.4 148,903.4 148,903.7 147,903.7 147,903.9 146,903.9 146,903.8 145,903.8 145,903.3 144,903.3 144,903.4 143,903.4 143,903.6 141,903.6 141,903.3 140,903.3 140,903.2 139,903.2 139,903.4 138,903.4 138,903.6 137,903.6 137,903.9 136,903.9 136,903.3 135,903.3 135,903.7 134,903.7 134,903.9 133,903.9 133,903.8 132,903.8 132,904 131,904 131,903.4 130,903.4 130,903.3 129,903.3 129,903.7 128,903.7 128,903.9 127,903.9 127,895 124,895 124,903.7 123,903.7 123,903.8 122,903.8 122,903.7 120,903.7 120,903.9 118,903.9 118,903.8 117,903.8 117,903.9 116,903.9 116,908 115,908 115,907.6 114,907.6 114,907.3 113,907.3 113,907.9 112,907.9 112,907.6 111,907.6 111,907.8 109,907.8 109,907.7 108,907.7 108,907.6 107,907.6 107,907.9 106,907.9 106,908 105,908 105,907.7 104,907.7 104,907.6 103,907.6 103,908 102,908 102,907.4 101,907.4" fill="#ee82ee" stroke="none"/>
<line x1="192.2" y1="873.5" x2="192.2" y2="905.5" stroke="#ee82ee" stroke-width="1"/>
<polyline points="211.5,918 734.5,918" fill="none" stroke="#ee82ee" stroke-width="2" stroke-linejoin="miter"/>
<line x1="589.2" y1="917.8" x2="589.2" y2="887.7" stroke="#ee82ee" stroke-width="1.2"/>
<line x1="683.5" y1="917.8" x2="683.5" y2="895" stroke="#ee82ee" stroke-width="1.2"/>
<line x1="712.3" y1="917.8" x2="712.3" y2="910.4" stroke="#ee82ee" stroke-width="1.2"/>
<line x1="722.9" y1="917.8" x2="722.9" y2="908.8" stroke="#ee82ee" stroke-width="1.2"/>
<line x1="727.8" y1="917.8" x2="727.8" y2="910.4" stroke="#ee82ee" stroke-width="1.2"/>
<polygon points="101.8,952.9 102.8,951.8 103.8,946.3 104.8,942.1 105.8,940.4 106.8,939.1 107.8,937.3 108.8,936.4 109.8,936.8 110.8,935.6 111.8,935 112.8,934.2 113.8,931.6 114.8,933.4 115.8,933.4 116.8,930.8 117.8,930.8 118.8,928.8 119.8,931.4 120.8,928.7 121.8,928.6 122.8,929.2 123.8,929.3 124.8,929.1 125.8,931.9 126.8,931.5 127.8,930.6 128.8,929.6 129.8,931.5 130.8,928 131.8,928 132.8,932.5 133.8,931.9 134.8,931.2 135.8,931.7 136.8,928.2 137.8,931.4 138.8,931.9 139.8,931.8 140.8,932.1 141.8,928.9 142.8,929.9 143.8,928.8 144.8,928.4 145.8,927.4 146.8,928.1 147.8,927.4 148.8,931.3 149.8,927.2 150.8,931.1 151.8,929.7 152.8,928.8 153.8,930.4 154.8,927.7 155.8,929 156.8,927.9 157.8,927.6 158.8,930.6 159.8,926.3 160.8,926.3 161.8,926.5 162.8,927.7 163.8,929.1 164.8,929.1 165.8,928.9 166.8,926.2 167.8,927.1 168.8,929.1 169.8,927.5 170.8,926.8 171.8,925.5 172.8,928.9 173.8,928.4 174.8,928.6 175.8,928.8 176.8,929.8 177.8,925.1 178.8,927 179.8,927.8 180.8,928.4 181.8,924.9 182.8,925.8 183.8,927.9 184.8,928.3 185.8,927.9 186.8,928.2 187.8,926.7 188.8,927.1 189.8,929.4 190.8,958.2 191.8,958 192.8,939.9 193.8,931.1 194.8,929.6 195.8,932 196.8,930.8 197.8,931 198.8,929.5 199.8,932.2 200.8,929.9 201.8,927.8 202.8,930.1 203.8,931.8 204.8,931.6 205.8,937.4 206.8,954.8 207.8,972.2 208.8,979.5 209.8,990 210.8,996.3 210.8,976.3 209.8,976 208.8,976.1 207.8,975.7 206.8,975.9 205.8,975.5 204.8,975.8 203.8,976 202.8,976.1 201.8,975.4 200.8,975.5 199.8,976 198.8,976.3 197.8,976.3 196.8,975.6 195.8,976.3 194.8,975.9 193.8,975.4 192.8,976.3 191.8,976 190.8,975.6 189.8,975.6 188.8,976.2 187.8,975.6 186.8,975.8 185.8,975.5 184.8,975.7 183.8,976.4 182.8,976 181.8,976.1 180.8,976.3 179.8,975.5 178.8,975.7 177.8,975.8 176.8,976.3 175.8,975.9 174.8,976.4 173.8,975.7 172.8,975.8 171.8,976.4 170.8,975.4 169.8,975.9 168.8,975.6 167.8,976.1 166.8,975.9 165.8,975.9 164.8,975.8 163.8,976.1 162.8,975.8 161.8,975.7 160.8,975.5 159.8,975.6 158.8,975.8 157.8,976.1 156.8,976.3 155.8,975.9 154.8,976.1 153.8,975.6 152.8,976 151.8,976.3 150.8,975.4 149.8,976.1 148.8,975.7 147.8,976.4 146.8,975.6 145.8,976.3 144.8,976.2 143.8,975.5 142.8,976.1 141.8,975.5 140.8,976.3 139.8,975.5 138.8,975.8 137.8,976.1 136.8,975.6 135.8,976.2 134.8,976.2 133.8,975.5 132.8,976.3 131.8,975.7 130.8,975.5 129.8,976.1 128.8,976.3 127.8,976.3 126.8,975.9 125.8,975.8 124.8,976.1 123.8,975.5 122.8,975.4 121.8,976 120.8,976.1 119.8,975.7 118.8,975.9 117.8,976.1 116.8,975.8 115.8,975.8 114.8,976.1 113.8,976.2 112.8,975.7 111.8,975.6 110.8,976 109.8,975.9 108.8,976.2 107.8,975.6 106.8,976.4 105.8,976.1 104.8,975.6 103.8,976.1 102.8,976.3 101.8,975.6" fill="#ff0000" stroke="none"/>
<polygon points="101.8,969.5 102.8,968.2 103.8,969.1 104.8,967.8 105.8,963.3 106.8,964.2 107.8,963.5 108.8,959 109.8,957.2 110.8,959.5 111.8,957.7 112.8,956.2 113.8,955.3 114.8,957.2 115.8,954.8 116.8,955.2 117.8,956 118.8,955.6 119.8,958 120.8,954.5 121.8,956.6 122.8,956.2 123.8,956.7 124.8,957.5 125.8,955.7 126.8,955.6 127.8,957.7 128.8,955.2 129.8,956.3 130.8,956.4 131.8,958.1 132.8,955.2 133.8,957.9 134.8,953.6 135.8,957.6 136.8,954.4 137.8,957.8 138.8,955.4 139.8,954.2 140.8,953.8 141.8,954.2 142.8,955 143.8,953.6 144.8,955.1 145.8,956.7 146.8,954.2 147.8,954.5 148.8,954 149.8,957 150.8,955.2 151.8,956.1 152.8,953.4 153.8,956.8 154.8,957 155.8,957.4 156.8,952.9 157.8,953.9 158.8,956.3 159.8,956.3 160.8,956 161.8,956.9 162.8,956.6 163.8,957 164.8,953.6 165.8,953.4 166.8,955.7 167.8,957 168.8,954.3 169.8,957.2 170.8,953.8 171.8,952.6 172.8,954 173.8,957.2 174.8,957.3 175.8,956.3 176.8,957.3 177.8,955 178.8,955.5 179.8,953.8 180.8,956.8 181.8,957.2 182.8,952.8 183.8,952.9 184.8,955.6 185.8,953.1 186.8,956.7 187.8,962.8 188.8,968.2 189.8,978.1 190.8,989.4 191.8,981.6 192.8,967.5 193.8,961.9 194.8,961 195.8,955.1 196.8,957.3 197.8,954.7 198.8,956.8 199.8,955.4 200.8,953.2 201.8,957.3 202.8,955.4 203.8,955.2 204.8,958.3 205.8,960.7 206.8,972 207.8,980.8 208.8,990.8 208.8,997.9 207.8,996 206.8,992.2 205.8,988.8 204.8,983.9 203.8,986.8 202.8,985 201.8,984.7 200.8,985.1 199.8,987.6 198.8,987.7 197.8,987.7 196.8,982.9 195.8,987.5 194.8,985.8 193.8,989.1 192.8,992.3 191.8,993.2 190.8,994.6 189.8,991.9 188.8,988.8 187.8,989.8 186.8,988.6 185.8,983.1 184.8,983.8 183.8,986.5 182.8,986.2 181.8,985.5 180.8,986.3 179.8,987.3 178.8,985.1 177.8,985.5 176.8,982.9 175.8,986.5 174.8,983.1 173.8,985.2 172.8,985.5 171.8,985.7 170.8,983.5 169.8,985 168.8,983.4 167.8,987.5 166.8,985.2 165.8,985 164.8,987.5 163.8,983.1 162.8,986.4 161.8,984.1 160.8,985.1 159.8,987.6 158.8,987.4 157.8,986 156.8,984.1 155.8,985.1 154.8,987.6 153.8,984.7 152.8,983.6 151.8,983.9 150.8,987 149.8,986.9 148.8,985.1 147.8,986.5 146.8,983.7 145.8,984.8 144.8,984.3 143.8,983.5 142.8,983.5 141.8,983.2 140.8,985.2 139.8,984.8 138.8,986.1 137.8,983.8 136.8,986.2 135.8,984.7 134.8,987.1 133.8,983.6 132.8,987.4 131.8,985.4 130.8,985.4 129.8,987.3 128.8,986.5 127.8,986.2 126.8,985.9 125.8,987.5 124.8,986 123.8,987.2 122.8,985 121.8,984.9 120.8,985.7 119.8,983.6 118.8,984.8 117.8,986.5 116.8,986.2 115.8,983.3 114.8,986.8 113.8,987.2 112.8,987.5 111.8,988 110.8,989.2 109.8,990.8 108.8,988.6 107.8,991.8 106.8,991.4 105.8,992.1 104.8,993 103.8,992.7 102.8,995 101.8,995.2" fill="#0000ff" stroke="none"/>
<path d="M211.5 999.3V996.4M212.5 999.3V996.4M213.5 999.3V996.2M214.5 999.3V993.2M216.5 999.3V996.3M217.5 999.3V995.7M218.5 999.3V994.9M219.5 999.3V994.6M220.5 999.3V995.5M221.5 999.3V993.2M222.5 999.3V995.2M224.5 999.3V994M225.5 999.3V994.5M226.5 999.3V995.3M228.5 999.3V994.8M229.5 999.3V991.5M230.5 999.3V992.2M231.5 999.3V992.7M232.5 999.3V992.9M233.5 999.3V993.9M234.5 999.3V992.5M235.5 999.3V993.8M236.5 999.3V994.6M237.5 999.3V995.5M238.5 999.3V995.1M239.5 999.3V994.6M243.5 999.3V995.7M244.5 999.3V996.2M245.5 999.3V996.2M247.5 999.3V996.8M248.5 999.3V996.6M250.5 999.3V997.4M251.5 999.3V997.3M252.5 999.3V995.4M254.5 999.3V997.4M258.5 999.3V996.1M263.5 999.3V996.5M264.5 999.3V996.7M265.5 999.3V997M268.5 999.3V996.7M269.5 999.3V996M273.5 999.3V997.1M275.5 999.3V997M276.5 999.3V996.8M278.5 999.3V997.1M281.5 999.3V996.6M282.5 999.3V995.7M284.5 999.3V996.5M286.5 999.3V995M287.5 999.3V996.2M289.5 999.3V995.9M290.5 999.3V997.4M292.5 999.3V996.6M295.5 999.3V995.7M297.5 999.3V996.2M299.5 999.3V996.6M300.5 999.3V996.3M301.5 999.3V995.3M303.5 999.3V995.8M304.5 999.3V997.2M305.5 999.3V996.8M312.5 999.3V995.8M315.5 999.3V997.4M317.5 999.3V996.3M321.5 999.3V996.7M324.5 999.3V996.7M325.5 999.3V996.1M326.5 999.3V996.8M327.5 999.3V997M328.5 999.3V996M331.5 999.3V997.2M332.5 999.3V994.7M333.5 999.3V996.7M335.5 999.3V994.3M336.5 999.3V995.2M338.5 999.3V996.1M339.5 999.3V995.2M340.5 999.3V995.8M342.5 999.3V995.9M343.5 999.3V995.2M344.5 999.3V997.3M346.5 999.3V997M349.5 999.3V997.4M350.5 999.3V996.8M351.5 999.3V996.2M352.5 999.3V995M353.5 999.3V995.2M354.5 999.3V997M356.5 999.3V995.6M357.5 999.3V995.2M358.5 999.3V994.7M359.5 999.3V996.1M360.5 999.3V995.2M361.5 999.3V995.6M362.5 999.3V994.7M363.5 999.3V995.8M364.5 999.3V995.3M367.5 999.3V997.1M368.5 999.3V996.2M370.5 999.3V995.9M371.5 999.3V997.3M372.5 999.3V996.7M373.5 999.3V996.8M374.5 999.3V996.6M375.5 999.3V997.2M376.5 999.3V996.9M377.5 999.3V994.9M378.5 999.3V996.2M381.5 999.3V996.3M382.5 999.3V996.5M383.5 999.3V996.9M384.5 999.3V996.4M385.5 999.3V996.2M386.5 999.3V996M389.5 999.3V996.3M390.5 999.3V997.1M391.5 999.3V996.5M392.5 999.3V996.4M393.5 999.3V997.2M394.5 999.3V996.5M395.5 999.3V995M396.5 999.3V996.4M399.5 999.3V995.8M401.5 999.3V996.2M402.5 999.3V995.6M403.5 999.3V996.2M408.5 999.3V996.3M411.5 999.3V996.8M416.5 999.3V996.6M417.5 999.3V996.6M418.5 999.3V996.6M421.5 999.3V997.1M422.5 999.3V997M423.5 999.3V997.2M424.5 999.3V997.3M426.5 999.3V997.4M428.5 999.3V997.3M429.5 999.3V997.4M434.5 999.3V996.8M448.5 999.3V997.3M452.5 999.3V996.7M454.5 999.3V997.4M457.5 999.3V996.9M458.5 999.3V996.5M459.5 999.3V997.3M460.5 999.3V995.7M461.5 999.3V996.7M462.5 999.3V995.3M465.5 999.3V996M466.5 999.3V996.2M469.5 999.3V997.5M473.5 999.3V996.7M475.5 999.3V996.9M478.5 999.3V997.1M483.5 999.3V996.5M487.5 999.3V994.6M488.5 999.3V993.6M489.5 999.3V993M491.5 999.3V995.1M492.5 999.3V996M494.5 999.3V992.9M495.5 999.3V993.7M496.5 999.3V992.7M497.5 999.3V994M498.5 999.3V992.9M499.5 999.3V994.5M500.5 999.3V993.4M501.5 999.3V993M503.5 999.3V995.4M505.5 999.3V994.6M506.5 999.3V995.3M507.5 999.3V994.3M508.5 999.3V995.9M509.5 999.3V994M511.5 999.3V994.3M512.5 999.3V994M513.5 999.3V994.3M514.5 999.3V993.4M515.5 999.3V994.5M516.5 999.3V993.9M517.5 999.3V995.5M518.5 999.3V995.7M520.5 999.3V995.2M522.5 999.3V994.5M523.5 999.3V993.3M525.5 999.3V992.9M526.5 999.3V993.3M527.5 999.3V994.5M528.5 999.3V992.8M530.5 999.3V994.8M531.5 999.3V993.8M532.5 999.3V993.9M533.5 999.3V995.8M534.5 999.3V993.4M535.5 999.3V996.2M537.5 999.3V995.9M539.5 999.3V996.3M540.5 999.3V994M541.5 999.3V996.2M542.5 999.3V994.8M543.5 999.3V995.9M544.5 999.3V994.2M545.5 999.3V996M546.5 999.3V994.2M547.5 999.3V993M548.5 999.3V995.5M549.5 999.3V995.7M550.5 999.3V995.8M551.5 999.3V994M552.5 999.3V994.7M553.5 999.3V996.2M554.5 999.3V994.1M556.5 999.3V994.9M557.5 999.3V993.3M558.5 999.3V993.7M559.5 999.3V992.8M560.5 999.3V992.8M561.5 999.3V995.7M562.5 999.3V993.8M564.5 999.3V994.3M565.5 999.3V994.6M566.5 999.3V993.4M567.5 999.3V994.6M570.5 999.3V993.8M571.5 999.3V994M573.5 999.3V994.4M574.5 999.3V993M576.5 999.3V992.6M577.5 999.3V994.2M578.5 999.3V992.3M579.5 999.3V994.4M581.5 999.3V995.2M582.5 999.3V994.5M583.5 999.3V993M584.5 999.3V993.1M585.5 999.3V994.6M586.5 999.3V995.1M587.5 999.3V993.9M588.5 999.3V995.2M589.5 999.3V993.1M591.5 999.3V992.7M592.5 999.3V994.4M593.5 999.3V993.8M595.5 999.3V993.6M596.5 999.3V995.8M597.5 999.3V995.4M598.5 999.3V996.7M599.5 999.3V995.1M600.5 999.3V995.1M601.5 999.3V994.7M602.5 999.3V995.5M604.5 999.3V994.9M605.5 999.3V995M606.5 999.3V993.9M607.5 999.3V993.8M608.5 999.3V992.7M610.5 999.3V993.3M611.5 999.3V992.7M612.5 999.3V993.6M613.5 999.3V995.8M614.5 999.3V994.2M616.5 999.3V993.4M617.5 999.3V994M618.5 999.3V994.2M619.5 999.3V992.4M620.5 999.3V995.5M622.5 999.3V994M624.5 999.3V996.9M625.5 999.3V997.4M627.5 999.3V995.1M628.5 999.3V996.1M629.5 999.3V995M631.5 999.3V996.4M634.5 999.3V996M636.5 999.3V996.8M637.5 999.3V997.4M638.5 999.3V996.6M641.5 999.3V997.4M643.5 999.3V995.7M645.5 999.3V996.8M649.5 999.3V996.6M650.5 999.3V996.9M660.5 999.3V997.4M665.5 999.3V995.9M666.5 999.3V996.4M667.5 999.3V995M668.5 999.3V996.7M673.5 999.3V997.3M677.5 999.3V996.4M682.5 999.3V996.8M685.5 999.3V997.3M687.5 999.3V997.4M689.5 999.3V996.3M690.5 999.3V996.2M692.5 999.3V995.3M693.5 999.3V996.4M694.5 999.3V995.8M695.5 999.3V997M696.5 999.3V996.9M697.5 999.3V997M701.5 999.3V996.3M702.5 999.3V997.4M703.5 999.3V995.8M704.5 999.3V997.3M707.5 999.3V997.1M708.5 999.3V997.4M710.5 999.3V995M712.5 999.3V995.6M715.5 999.3V994.3M716.5 999.3V995.5M717.5 999.3V995.5M718.5 999.3V996.2M720.5 999.3V995.8M721.5 999.3V995.4M723.5 999.3V994.8M726.5 999.3V992.1M727.5 999.3V991.7M728.5 999.3V990.1M729.5 999.3V991.3M730.5 999.3V990.3M732.5 999.3V991.8" fill="none" stroke="#0000ff" stroke-width="1"/>
<polyline points="210.8,998.5 734.5,998.5" fill="none" stroke="#ff0000" stroke-width="2" stroke-linejoin="miter"/>
<text x="54.7" y="203.4" font-family="Liberation Mono" font-size="11.9" text-anchor="middle" font-weight="normal" fill="#000" transform="rotate(-90 54.7 203.4)">Luminosity</text>
<text x="61.4" y="259.5" font-family="Liberation Mono" font-size="11.5" text-anchor="middle" font-weight="normal" fill="#000" transform="rotate(-90 61.4 259.5)">I[mA]</text>
<text x="62.8" y="317" font-family="Liberation Mono" font-size="12" text-anchor="middle" font-weight="normal" fill="#000" transform="rotate(-90 62.8 317)">Rep.</text>
<text x="78" y="317.8" font-family="Liberation Mono" font-size="11.6" text-anchor="middle" font-weight="normal" fill="#000" transform="rotate(-90 78 317.8)">Rate[Hz]</text>
<text x="85" y="372.5" font-family="Liberation Mono" font-size="11.5" text-anchor="middle" font-weight="normal" fill="#000" transform="rotate(-90 85 372.5)">Q[nC]</text>
<text x="86.6" y="428.4" font-family="Liberation Mono" font-size="11.4" text-anchor="middle" font-weight="normal" fill="#000" transform="rotate(-90 86.6 428.4)">[mA/s]</text>
<text x="69.1" y="484.2" font-family="Liberation Mono" font-size="12" text-anchor="middle" font-weight="normal" fill="#000" transform="rotate(-90 69.1 484.2)">[%]</text>
<text x="48.5" y="556.5" font-family="Liberation Mono" font-size="13.7" text-anchor="middle" font-weight="bold" fill="#000" transform="rotate(-90 48.5 556.5)">ECL_BW</text>
<text x="74.1" y="636" font-family="Liberation Mono" font-size="13.2" text-anchor="middle" font-weight="bold" fill="#000" transform="rotate(-90 74.1 636)">[ms]</text>
<text x="38" y="695" font-family="Liberation Mono" font-size="15" text-anchor="start" font-weight="normal" fill="#000" stroke="#000" stroke-width="0.2">x10<tspan dy="-8" font-size="11">6</tspan></text>
<text x="84.9" y="718" font-family="Liberation Mono" font-size="11.5" text-anchor="middle" font-weight="normal" fill="#000" transform="rotate(-90 84.9 718)">[Hz]</text>
<text x="65.1" y="798.2" font-family="Liberation Mono" font-size="12.7" text-anchor="middle" font-weight="bold" fill="#000" transform="rotate(-90 65.1 798.2)">[uA]</text>
<text x="74.8" y="878.5" font-family="Liberation Mono" font-size="13.1" text-anchor="middle" font-weight="bold" fill="#000" transform="rotate(-90 74.8 878.5)">[mRad/s]</text>
<text x="70.8" y="957.5" font-family="Liberation Mono" font-size="12.6" text-anchor="middle" font-weight="normal" fill="#000" transform="rotate(-90 70.8 957.5)">VXD</text>
<text x="82.5" y="1025.7" font-family="Liberation Mono" font-size="21.5" text-anchor="start" font-weight="normal" fill="#000" stroke="#000" stroke-width="0.2">7<tspan dy="-10" font-size="14">h</tspan><tspan dy="10">0</tspan><tspan dy="-10" font-size="14">m</tspan><tspan dy="10">0</tspan><tspan dy="-10" font-size="14">s</tspan></text>
<text x="172.2" y="1025.7" font-family="Liberation Mono" font-size="21.5" text-anchor="middle" font-weight="normal" fill="#000" stroke="#000" stroke-width="0.2">8<tspan dy="-10" font-size="14">h</tspan></text>
<text x="242.5" y="1025.7" font-family="Liberation Mono" font-size="21.5" text-anchor="middle" font-weight="normal" fill="#000" stroke="#000" stroke-width="0.2">9<tspan dy="-10" font-size="14">h</tspan></text>
<text x="312.8" y="1025.7" font-family="Liberation Mono" font-size="21.5" text-anchor="middle" font-weight="normal" fill="#000" stroke="#000" stroke-width="0.2">10<tspan dy="-10" font-size="14">h</tspan></text>
<text x="383.2" y="1025.7" font-family="Liberation Mono" font-size="21.5" text-anchor="middle" font-weight="normal" fill="#000" stroke="#000" stroke-width="0.2">11<tspan dy="-10" font-size="14">h</tspan></text>
<text x="453.5" y="1025.7" font-family="Liberation Mono" font-size="21.5" text-anchor="middle" font-weight="normal" fill="#000" stroke="#000" stroke-width="0.2">12<tspan dy="-10" font-size="14">h</tspan></text>
<text x="523.8" y="1025.7" font-family="Liberation Mono" font-size="21.5" text-anchor="middle" font-weight="normal" fill="#000" stroke="#000" stroke-width="0.2">13<tspan dy="-10" font-size="14">h</tspan></text>
<text x="594.2" y="1025.7" font-family="Liberation Mono" font-size="21.5" text-anchor="middle" font-weight="normal" fill="#000" stroke="#000" stroke-width="0.2">14<tspan dy="-10" font-size="14">h</tspan></text>
<text x="664.5" y="1025.7" font-family="Liberation Mono" font-size="21.5" text-anchor="middle" font-weight="normal" fill="#000" stroke="#000" stroke-width="0.2">15<tspan dy="-10" font-size="14">h</tspan></text>
<text x="46" y="1049.5" font-family="Liberation Mono" font-size="20" text-anchor="start" font-weight="normal" fill="#000" stroke="#000" stroke-width="0.2">4/15/2026</text>
<rect x="795.4" y="248.4" width="85.9" height="46.5" fill="#fff" stroke="#000" stroke-width="1"/>
<line x1="797.4" y1="295.4" x2="882.3" y2="295.4" stroke="#000" stroke-width="1.5"/>
<line x1="881.8" y1="250.4" x2="881.8" y2="295.9" stroke="#000" stroke-width="1.5"/>
<line x1="802" y1="262.5" x2="841.5" y2="262.5" stroke="#ff0000" stroke-width="1"/>
<text x="847.5" y="267.6" font-family="Liberation Mono" font-size="15" text-anchor="start" font-weight="normal" fill="#000" stroke="#000" stroke-width="0.2">LER</text>
<line x1="802" y1="280.5" x2="841.5" y2="280.5" stroke="#0000ff" stroke-width="1"/>
<text x="847.5" y="285.7" font-family="Liberation Mono" font-size="15" text-anchor="start" font-weight="normal" fill="#000" stroke="#000" stroke-width="0.2">HER</text>
<rect x="780.3" y="300.3" width="101" height="39.2" fill="#fff" stroke="#000" stroke-width="1"/>
<line x1="782.3" y1="340" x2="882.3" y2="340" stroke="#000" stroke-width="1.5"/>
<line x1="881.8" y1="302.3" x2="881.8" y2="340.5" stroke="#000" stroke-width="1.5"/>
<line x1="787" y1="319.5" x2="827" y2="319.5" stroke="#ff1493" stroke-width="1"/>
<text x="832.3" y="328" font-family="Liberation Sans" font-size="26.5" text-anchor="start" textLength="40.5" lengthAdjust="spacingAndGlyphs">LER</text>
<rect x="733.6" y="361.5" width="147.7" height="46.1" fill="#fff" stroke="#000" stroke-width="1"/>
<line x1="735.6" y1="408.1" x2="882.3" y2="408.1" stroke="#000" stroke-width="1.5"/>
<line x1="881.8" y1="363.5" x2="881.8" y2="408.6" stroke="#000" stroke-width="1.5"/>
<circle cx="741.1" cy="375.7" r="2.2" fill="#3a5fd0"/>
<text x="766.7" y="380.2" font-family="Liberation Mono" font-size="15" text-anchor="start" font-weight="normal" fill="#000" stroke="#000" stroke-width="0.2">QMD11P_1(nC)</text>
<circle cx="741.1" cy="393.8" r="2.2" fill="#00cc00"/>
<text x="766.7" y="398.3" font-family="Liberation Mono" font-size="15" text-anchor="start" font-weight="normal" fill="#000" stroke="#000" stroke-width="0.2">QMD11P_2(nC)</text>
<rect x="769.7" y="417.9" width="111.6" height="28.6" fill="#fff" stroke="#000" stroke-width="1"/>
<line x1="771.7" y1="447" x2="882.3" y2="447" stroke="#000" stroke-width="1.5"/>
<line x1="881.8" y1="419.9" x2="881.8" y2="447.5" stroke="#000" stroke-width="1.5"/>
<circle cx="777.3" cy="431.4" r="2.2" fill="#a020f0"/>
<text x="802.9" y="436" font-family="Liberation Mono" font-size="15" text-anchor="start" font-weight="normal" fill="#000" stroke="#000" stroke-width="0.2">Inj.Rate</text>
<rect x="724.5" y="473.6" width="156.8" height="64.3" fill="#fff" stroke="#000" stroke-width="1"/>
<line x1="726.5" y1="538.4" x2="882.3" y2="538.4" stroke="#000" stroke-width="1.5"/>
<line x1="881.8" y1="475.6" x2="881.8" y2="538.9" stroke="#000" stroke-width="1.5"/>
<circle cx="732" cy="487.8" r="2.2" fill="#000"/>
<text x="757.7" y="492.3" font-family="Liberation Mono" font-size="15" text-anchor="start" font-weight="normal" fill="#000" stroke="#000" stroke-width="0.2">Inj.Eff(BCM1)</text>
<circle cx="732" cy="505.3" r="2.2" fill="#999"/>
<text x="757.7" y="509.8" font-family="Liberation Mono" font-size="15" text-anchor="start" font-weight="normal" fill="#000" stroke="#000" stroke-width="0.2">Inj.Eff(BCM2)</text>
<text x="757.7" y="527.3" font-family="Liberation Mono" font-size="15" text-anchor="start" font-weight="normal" fill="#000" stroke="#000" stroke-width="0.2">Inj.Eff</text>
<line x1="724.5" y1="517.5" x2="734.5" y2="517.5" stroke="#000" stroke-width="1"/>
<line x1="734.5" y1="517.5" x2="734.5" y2="537.9" stroke="#000" stroke-width="1"/>
<rect x="768.4" y="533.6" width="112.6" height="28" fill="#fff" stroke="#000" stroke-width="1"/>
<line x1="770.4" y1="562.1" x2="882" y2="562.1" stroke="#000" stroke-width="1.5"/>
<line x1="881.5" y1="535.6" x2="881.5" y2="562.6" stroke="#000" stroke-width="1.5"/>
<line x1="775.2" y1="547.5" x2="815" y2="547.5" stroke="#008a42" stroke-width="1"/>
<text x="820.4" y="552.6" font-family="Liberation Mono" font-size="15" text-anchor="start" font-weight="normal" fill="#000" stroke="#000" stroke-width="0.2">ECL_BW</text>
<rect x="750.3" y="604.1" width="130.7" height="47.1" fill="#fff" stroke="#000" stroke-width="1"/>
<line x1="752.3" y1="651.7" x2="882" y2="651.7" stroke="#000" stroke-width="1.5"/>
<line x1="881.5" y1="606.1" x2="881.5" y2="652.2" stroke="#000" stroke-width="1.5"/>
<line x1="757" y1="627.5" x2="797" y2="627.5" stroke="#ff6347" stroke-width="1"/>
<text x="802.3" y="622.7" font-family="Liberation Mono" font-size="15" text-anchor="start" font-weight="normal" fill="#000" stroke="#000" stroke-width="0.2">ECL BG</text>
<text x="802.3" y="640.8" font-family="Liberation Mono" font-size="15" text-anchor="start" font-weight="normal" fill="#000" stroke="#000" stroke-width="0.2">Duration</text>
<rect x="750.3" y="693.2" width="130.7" height="28.5" fill="#fff" stroke="#000" stroke-width="1"/>
<line x1="752.3" y1="722.2" x2="882" y2="722.2" stroke="#000" stroke-width="1.5"/>
<line x1="881.5" y1="695.2" x2="881.5" y2="722.7" stroke="#000" stroke-width="1.5"/>
<line x1="757" y1="706.5" x2="797" y2="706.5" stroke="#4a78ff" stroke-width="1"/>
<text x="802.3" y="712.2" font-family="Liberation Mono" font-size="15" text-anchor="start" font-weight="normal" fill="#000" stroke="#000" stroke-width="0.2">TOP [Hz]</text>
<rect x="768.4" y="774.2" width="112.6" height="46.6" fill="#fff" stroke="#000" stroke-width="1"/>
<line x1="770.4" y1="821.3" x2="882" y2="821.3" stroke="#000" stroke-width="1.5"/>
<line x1="881.5" y1="776.2" x2="881.5" y2="821.8" stroke="#000" stroke-width="1.5"/>
<line x1="775" y1="788.5" x2="815" y2="788.5" stroke="#00cc00" stroke-width="1"/>
<text x="820.4" y="793.6" font-family="Liberation Mono" font-size="15" text-anchor="start" font-weight="normal" fill="#000" stroke="#000" stroke-width="0.2">CDC</text>
<line x1="775" y1="806.5" x2="815" y2="806.5" stroke="#008000" stroke-width="1"/>
<text x="820.4" y="811.7" font-family="Liberation Mono" font-size="15" text-anchor="start" font-weight="normal" fill="#000" stroke="#000" stroke-width="0.2">CDC_av</text>
<rect x="759.3" y="854.7" width="121.7" height="28" fill="#fff" stroke="#000" stroke-width="1"/>
<line x1="761.3" y1="883.2" x2="882" y2="883.2" stroke="#000" stroke-width="1.5"/>
<line x1="881.5" y1="856.7" x2="881.5" y2="883.7" stroke="#000" stroke-width="1.5"/>
<line x1="766" y1="868.5" x2="806" y2="868.5" stroke="#ee82ee" stroke-width="1"/>
<text x="811.4" y="873.7" font-family="Liberation Mono" font-size="15" text-anchor="start" font-weight="normal" fill="#000" stroke="#000" stroke-width="0.2">Diamond</text>
<rect x="741.3" y="934.3" width="139.7" height="47" fill="#fff" stroke="#000" stroke-width="1"/>
<line x1="743.3" y1="981.8" x2="882" y2="981.8" stroke="#000" stroke-width="1.5"/>
<line x1="881.5" y1="936.3" x2="881.5" y2="982.3" stroke="#000" stroke-width="1.5"/>
<line x1="748" y1="948.5" x2="788" y2="948.5" stroke="#0000ff" stroke-width="1"/>
<text x="793.3" y="953.7" font-family="Liberation Mono" font-size="15" text-anchor="start" font-weight="normal" fill="#000" stroke="#000" stroke-width="0.2">VXD_FW225</text>
<line x1="748" y1="966.5" x2="788" y2="966.5" stroke="#ff0000" stroke-width="1"/>
<text x="793.3" y="971.8" font-family="Liberation Mono" font-size="15" text-anchor="start" font-weight="normal" fill="#000" stroke="#000" stroke-width="0.2">VXD_FW135</text>
<path d="M1075.5 53.5V112.5M1145.5 53.5V112.5M1215.5 53.5V112.5M1286.5 53.5V112.5M1356.5 53.5V112.5M1426.5 53.5V112.5M1497.5 53.5V112.5M1567.5 53.5V112.5M1026 100.5H1636.5M1026 88.5H1636.5M1026 76.5H1636.5M1026 65.5H1636.5" stroke="#999" stroke-width="1" stroke-dasharray="2.2,2.1" fill="none"/>
<path d="M1075.5 112.5V172.5M1145.5 112.5V172.5M1215.5 112.5V172.5M1286.5 112.5V172.5M1356.5 112.5V172.5M1426.5 112.5V172.5M1497.5 112.5V172.5M1567.5 112.5V172.5M1026 155.5H1636.5M1026 138.5H1636.5M1026 121.5H1636.5" stroke="#999" stroke-width="1" stroke-dasharray="2.2,2.1" fill="none"/>
<path d="M1075.5 172.5V231.5M1145.5 172.5V231.5M1215.5 172.5V231.5M1286.5 172.5V231.5M1356.5 172.5V231.5M1426.5 172.5V231.5M1497.5 172.5V231.5M1567.5 172.5V231.5M1026 209.5H1636.5M1026 187.5H1636.5" stroke="#999" stroke-width="1" stroke-dasharray="2.2,2.1" fill="none"/>
<path d="M1075.5 231.5V291.5M1145.5 231.5V291.5M1215.5 231.5V291.5M1286.5 231.5V291.5M1356.5 231.5V291.5M1426.5 231.5V291.5M1497.5 231.5V291.5M1567.5 231.5V291.5M1026 289.5H1636.5M1026 276.5H1636.5M1026 263.5H1636.5M1026 250.5H1636.5M1026 237.5H1636.5" stroke="#999" stroke-width="1" stroke-dasharray="2.2,2.1" fill="none"/>
<path d="M1075.5 291.5V350.5M1145.5 291.5V350.5M1215.5 291.5V350.5M1286.5 291.5V350.5M1356.5 291.5V350.5M1426.5 291.5V350.5M1497.5 291.5V350.5M1567.5 291.5V350.5M1026 348.5H1636.5M1026 334.5H1636.5M1026 321.5H1636.5M1026 308.5H1636.5M1026 295.5H1636.5" stroke="#999" stroke-width="1" stroke-dasharray="2.2,2.1" fill="none"/>
<path d="M1075.5 350.5V411M1145.5 350.5V411M1215.5 350.5V411M1286.5 350.5V411M1356.5 350.5V411M1426.5 350.5V411M1497.5 350.5V411M1567.5 350.5V411M1026 399.5H1636.5M1026 388.5H1636.5M1026 377.5H1636.5M1026 366.5H1636.5M1026 355.5H1636.5" stroke="#999" stroke-width="1" stroke-dasharray="2.2,2.1" fill="none"/>
<path d="M1075.5 414.5V499.5M1145.5 414.5V499.5M1215.5 414.5V499.5M1286.5 414.5V499.5M1356.5 414.5V499.5M1426.5 414.5V499.5M1497.5 414.5V499.5M1567.5 414.5V499.5M1026 482.5H1636.5M1026 465.5H1636.5M1026 448.5H1636.5M1026 431.5H1636.5" stroke="#999" stroke-width="1" stroke-dasharray="2.2,2.1" fill="none"/>
<path d="M1075.5 499.5V584.5M1145.5 499.5V584.5M1215.5 499.5V584.5M1286.5 499.5V584.5M1356.5 499.5V584.5M1426.5 499.5V584.5M1497.5 499.5V584.5M1567.5 499.5V584.5M1026 563.5H1636.5M1026 542.5H1636.5M1026 521.5H1636.5" stroke="#999" stroke-width="1" stroke-dasharray="2.2,2.1" fill="none"/>
<path d="M1075.5 584.5V669.5M1145.5 584.5V669.5M1215.5 584.5V669.5M1286.5 584.5V669.5M1356.5 584.5V669.5M1426.5 584.5V669.5M1497.5 584.5V669.5M1567.5 584.5V669.5M1026 652.5H1636.5M1026 635.5H1636.5M1026 618.5H1636.5M1026 601.5H1636.5" stroke="#999" stroke-width="1" stroke-dasharray="2.2,2.1" fill="none"/>
<path d="M1075.5 669.5V754.5M1145.5 669.5V754.5M1215.5 669.5V754.5M1286.5 669.5V754.5M1356.5 669.5V754.5M1426.5 669.5V754.5M1497.5 669.5V754.5M1567.5 669.5V754.5M1026 733.5H1636.5M1026 712.5H1636.5M1026 691.5H1636.5M1026 670.5H1636.5" stroke="#999" stroke-width="1" stroke-dasharray="2.2,2.1" fill="none"/>
<path d="M1075.5 754.5V840M1145.5 754.5V840M1215.5 754.5V840M1286.5 754.5V840M1356.5 754.5V840M1426.5 754.5V840M1497.5 754.5V840M1567.5 754.5V840M1026 825.5H1636.5M1026 811.5H1636.5M1026 797.5H1636.5M1026 783.5H1636.5M1026 769.5H1636.5M1026 755.5H1636.5" stroke="#999" stroke-width="1" stroke-dasharray="2.2,2.1" fill="none"/>
<path d="M1075.5 840V926M1145.5 840V926M1215.5 840V926M1286.5 840V926M1356.5 840V926M1426.5 840V926M1497.5 840V926M1567.5 840V926M1026 908.5H1636.5M1026 891.5H1636.5M1026 874.5H1636.5M1026 857.5H1636.5" stroke="#999" stroke-width="1" stroke-dasharray="2.2,2.1" fill="none"/>
<path d="M1075.5 926V1010.5M1145.5 926V1010.5M1215.5 926V1010.5M1286.5 926V1010.5M1356.5 926V1010.5M1426.5 926V1010.5M1497.5 926V1010.5M1567.5 926V1010.5M1026 989.5H1636.5M1026 968.5H1636.5M1026 947.5H1636.5" stroke="#999" stroke-width="1" stroke-dasharray="2.2,2.1" fill="none"/>
<line x1="1003.5" y1="53.5" x2="1003.5" y2="112.5" stroke="#000" stroke-width="1"/>
<path d="M1003.5 112.5h7.5M1003.5 109.5h7.5M1003.5 107.5h7.5M1003.5 105.5h7.5M1003.5 102.5h7.5M1003.5 100.5h7.5M1003.5 98.5h7.5M1003.5 95.5h7.5M1003.5 93.5h7.5M1003.5 91.5h7.5M1003.5 88.5h7.5M1003.5 86.5h7.5M1003.5 83.5h7.5M1003.5 81.5h7.5M1003.5 79.5h7.5M1003.5 76.5h7.5M1003.5 74.5h7.5M1003.5 72.5h7.5M1003.5 69.5h7.5M1003.5 67.5h7.5M1003.5 65.5h7.5M1003.5 62.5h7.5M1003.5 60.5h7.5M1003.5 58.5h7.5M1003.5 55.5h7.5M1003.5 53.5h7.5M1003.5 112.5h22.5M1003.5 100.5h22.5M1003.5 88.5h22.5M1003.5 76.5h22.5M1003.5 65.5h22.5M1003.5 53.5h22.5" stroke="#000" stroke-width="1" fill="none"/>
<line x1="1636.5" y1="53.5" x2="1636.5" y2="112.5" stroke="#000" stroke-width="1"/>
<line x1="1003.5" y1="53.5" x2="1636.5" y2="53.5" stroke="#ccc" stroke-width="1"/>
<line x1="1003.5" y1="53.5" x2="1636.5" y2="53.5" stroke="#000" stroke-width="1" stroke-dasharray="2,2"/>
<line x1="1003.5" y1="112.5" x2="1636.5" y2="112.5" stroke="#ccc" stroke-width="1"/>
<line x1="1003.5" y1="112.5" x2="1636.5" y2="112.5" stroke="#000" stroke-width="1" stroke-dasharray="2,2"/>
<line x1="1004.5" y1="112.5" x2="1004.5" y2="101.5" stroke="#000" stroke-width="1"/>
<line x1="1028.5" y1="112.5" x2="1028.5" y2="109.5" stroke="#000" stroke-width="1"/>
<line x1="1051.5" y1="112.5" x2="1051.5" y2="109.5" stroke="#000" stroke-width="1"/>
<line x1="1075.5" y1="112.5" x2="1075.5" y2="101.5" stroke="#000" stroke-width="1"/>
<line x1="1098.5" y1="112.5" x2="1098.5" y2="109.5" stroke="#000" stroke-width="1"/>
<line x1="1122.5" y1="112.5" x2="1122.5" y2="109.5" stroke="#000" stroke-width="1"/>
<line x1="1145.5" y1="112.5" x2="1145.5" y2="101.5" stroke="#000" stroke-width="1"/>
<line x1="1168.5" y1="112.5" x2="1168.5" y2="109.5" stroke="#000" stroke-width="1"/>
<line x1="1192.5" y1="112.5" x2="1192.5" y2="109.5" stroke="#000" stroke-width="1"/>
<line x1="1215.5" y1="112.5" x2="1215.5" y2="101.5" stroke="#000" stroke-width="1"/>
<line x1="1239.5" y1="112.5" x2="1239.5" y2="109.5" stroke="#000" stroke-width="1"/>
<line x1="1262.5" y1="112.5" x2="1262.5" y2="109.5" stroke="#000" stroke-width="1"/>
<line x1="1286.5" y1="112.5" x2="1286.5" y2="101.5" stroke="#000" stroke-width="1"/>
<line x1="1309.5" y1="112.5" x2="1309.5" y2="109.5" stroke="#000" stroke-width="1"/>
<line x1="1333.5" y1="112.5" x2="1333.5" y2="109.5" stroke="#000" stroke-width="1"/>
<line x1="1356.5" y1="112.5" x2="1356.5" y2="101.5" stroke="#000" stroke-width="1"/>
<line x1="1379.5" y1="112.5" x2="1379.5" y2="109.5" stroke="#000" stroke-width="1"/>
<line x1="1403.5" y1="112.5" x2="1403.5" y2="109.5" stroke="#000" stroke-width="1"/>
<line x1="1426.5" y1="112.5" x2="1426.5" y2="101.5" stroke="#000" stroke-width="1"/>
<line x1="1450.5" y1="112.5" x2="1450.5" y2="109.5" stroke="#000" stroke-width="1"/>
<line x1="1473.5" y1="112.5" x2="1473.5" y2="109.5" stroke="#000" stroke-width="1"/>
<line x1="1497.5" y1="112.5" x2="1497.5" y2="101.5" stroke="#000" stroke-width="1"/>
<line x1="1520.5" y1="112.5" x2="1520.5" y2="109.5" stroke="#000" stroke-width="1"/>
<line x1="1544.5" y1="112.5" x2="1544.5" y2="109.5" stroke="#000" stroke-width="1"/>
<line x1="1567.5" y1="112.5" x2="1567.5" y2="101.5" stroke="#000" stroke-width="1"/>
<line x1="1590.5" y1="112.5" x2="1590.5" y2="109.5" stroke="#000" stroke-width="1"/>
<line x1="1614.5" y1="112.5" x2="1614.5" y2="109.5" stroke="#000" stroke-width="1"/>
<text x="1001.1" y="117.2" font-family="Liberation Mono" font-size="13.3" text-anchor="end" font-weight="normal" fill="#000" stroke="#000" stroke-width="0.2" transform="translate(0 -10.5) scale(1 1.09)">0</text>
<text x="1001.1" y="105.4" font-family="Liberation Mono" font-size="13.3" text-anchor="end" font-weight="normal" fill="#000" stroke="#000" stroke-width="0.2" transform="translate(0 -9.5) scale(1 1.09)">10000</text>
<text x="1001.1" y="93.6" font-family="Liberation Mono" font-size="13.3" text-anchor="end" font-weight="normal" fill="#000" stroke="#000" stroke-width="0.2" transform="translate(0 -8.4) scale(1 1.09)">20000</text>
<text x="1001.1" y="81.8" font-family="Liberation Mono" font-size="13.3" text-anchor="end" font-weight="normal" fill="#000" stroke="#000" stroke-width="0.2" transform="translate(0 -7.4) scale(1 1.09)">30000</text>
<text x="1001.1" y="70" font-family="Liberation Mono" font-size="13.3" text-anchor="end" font-weight="normal" fill="#000" stroke="#000" stroke-width="0.2" transform="translate(0 -6.3) scale(1 1.09)">40000</text>
<text x="1001.1" y="58.2" font-family="Liberation Mono" font-size="13.3" text-anchor="end" font-weight="normal" fill="#000" stroke="#000" stroke-width="0.2" transform="translate(0 -5.2) scale(1 1.09)">50000</text>
<line x1="1003.5" y1="112.5" x2="1003.5" y2="172.5" stroke="#000" stroke-width="1"/>
<path d="M1003.5 172.5h7.5M1003.5 168.5h7.5M1003.5 165.5h7.5M1003.5 161.5h7.5M1003.5 158.5h7.5M1003.5 155.5h7.5M1003.5 151.5h7.5M1003.5 148.5h7.5M1003.5 144.5h7.5M1003.5 141.5h7.5M1003.5 138.5h7.5M1003.5 134.5h7.5M1003.5 131.5h7.5M1003.5 128.5h7.5M1003.5 124.5h7.5M1003.5 121.5h7.5M1003.5 117.5h7.5M1003.5 114.5h7.5M1003.5 172.5h22.5M1003.5 155.5h22.5M1003.5 138.5h22.5M1003.5 121.5h22.5" stroke="#000" stroke-width="1" fill="none"/>
<line x1="1636.5" y1="112.5" x2="1636.5" y2="172.5" stroke="#000" stroke-width="1"/>
<line x1="1003.5" y1="112.5" x2="1636.5" y2="112.5" stroke="#000" stroke-width="1"/>
<line x1="1003.5" y1="172.5" x2="1636.5" y2="172.5" stroke="#ccc" stroke-width="1"/>
<line x1="1003.5" y1="172.5" x2="1636.5" y2="172.5" stroke="#000" stroke-width="1" stroke-dasharray="2,2"/>
<line x1="1004.5" y1="172.5" x2="1004.5" y2="161.5" stroke="#000" stroke-width="1"/>
<line x1="1028.5" y1="172.5" x2="1028.5" y2="169.5" stroke="#000" stroke-width="1"/>
<line x1="1051.5" y1="172.5" x2="1051.5" y2="169.5" stroke="#000" stroke-width="1"/>
<line x1="1075.5" y1="172.5" x2="1075.5" y2="161.5" stroke="#000" stroke-width="1"/>
<line x1="1098.5" y1="172.5" x2="1098.5" y2="169.5" stroke="#000" stroke-width="1"/>
<line x1="1122.5" y1="172.5" x2="1122.5" y2="169.5" stroke="#000" stroke-width="1"/>
<line x1="1145.5" y1="172.5" x2="1145.5" y2="161.5" stroke="#000" stroke-width="1"/>
<line x1="1168.5" y1="172.5" x2="1168.5" y2="169.5" stroke="#000" stroke-width="1"/>
<line x1="1192.5" y1="172.5" x2="1192.5" y2="169.5" stroke="#000" stroke-width="1"/>
<line x1="1215.5" y1="172.5" x2="1215.5" y2="161.5" stroke="#000" stroke-width="1"/>
<line x1="1239.5" y1="172.5" x2="1239.5" y2="169.5" stroke="#000" stroke-width="1"/>
<line x1="1262.5" y1="172.5" x2="1262.5" y2="169.5" stroke="#000" stroke-width="1"/>
<line x1="1286.5" y1="172.5" x2="1286.5" y2="161.5" stroke="#000" stroke-width="1"/>
<line x1="1309.5" y1="172.5" x2="1309.5" y2="169.5" stroke="#000" stroke-width="1"/>
<line x1="1333.5" y1="172.5" x2="1333.5" y2="169.5" stroke="#000" stroke-width="1"/>
<line x1="1356.5" y1="172.5" x2="1356.5" y2="161.5" stroke="#000" stroke-width="1"/>
<line x1="1379.5" y1="172.5" x2="1379.5" y2="169.5" stroke="#000" stroke-width="1"/>
<line x1="1403.5" y1="172.5" x2="1403.5" y2="169.5" stroke="#000" stroke-width="1"/>
<line x1="1426.5" y1="172.5" x2="1426.5" y2="161.5" stroke="#000" stroke-width="1"/>
<line x1="1450.5" y1="172.5" x2="1450.5" y2="169.5" stroke="#000" stroke-width="1"/>
<line x1="1473.5" y1="172.5" x2="1473.5" y2="169.5" stroke="#000" stroke-width="1"/>
<line x1="1497.5" y1="172.5" x2="1497.5" y2="161.5" stroke="#000" stroke-width="1"/>
<line x1="1520.5" y1="172.5" x2="1520.5" y2="169.5" stroke="#000" stroke-width="1"/>
<line x1="1544.5" y1="172.5" x2="1544.5" y2="169.5" stroke="#000" stroke-width="1"/>
<line x1="1567.5" y1="172.5" x2="1567.5" y2="161.5" stroke="#000" stroke-width="1"/>
<line x1="1590.5" y1="172.5" x2="1590.5" y2="169.5" stroke="#000" stroke-width="1"/>
<line x1="1614.5" y1="172.5" x2="1614.5" y2="169.5" stroke="#000" stroke-width="1"/>
<text x="1001.1" y="177" font-family="Liberation Mono" font-size="13.3" text-anchor="end" font-weight="normal" fill="#000" stroke="#000" stroke-width="0.2" transform="translate(0 -15.9) scale(1 1.09)">0</text>
<text x="1001.1" y="160" font-family="Liberation Mono" font-size="13.3" text-anchor="end" font-weight="normal" fill="#000" stroke="#000" stroke-width="0.2" transform="translate(0 -14.4) scale(1 1.09)">500</text>
<text x="1001.1" y="143.1" font-family="Liberation Mono" font-size="13.3" text-anchor="end" font-weight="normal" fill="#000" stroke="#000" stroke-width="0.2" transform="translate(0 -12.9) scale(1 1.09)">1000</text>
<text x="1001.1" y="126.1" font-family="Liberation Mono" font-size="13.3" text-anchor="end" font-weight="normal" fill="#000" stroke="#000" stroke-width="0.2" transform="translate(0 -11.3) scale(1 1.09)">1500</text>
<line x1="1003.5" y1="172.5" x2="1003.5" y2="231.5" stroke="#000" stroke-width="1"/>
<path d="M1003.5 231.5h7.5M1003.5 226.5h7.5M1003.5 222.5h7.5M1003.5 218.5h7.5M1003.5 213.5h7.5M1003.5 209.5h7.5M1003.5 205.5h7.5M1003.5 200.5h7.5M1003.5 196.5h7.5M1003.5 191.5h7.5M1003.5 187.5h7.5M1003.5 183.5h7.5M1003.5 178.5h7.5M1003.5 174.5h7.5M1003.5 231.5h22.5M1003.5 209.5h22.5M1003.5 187.5h22.5" stroke="#000" stroke-width="1" fill="none"/>
<line x1="1636.5" y1="172.5" x2="1636.5" y2="231.5" stroke="#000" stroke-width="1"/>
<line x1="1003.5" y1="172.5" x2="1636.5" y2="172.5" stroke="#000" stroke-width="1"/>
<line x1="1003.5" y1="231.5" x2="1636.5" y2="231.5" stroke="#ccc" stroke-width="1"/>
<line x1="1003.5" y1="231.5" x2="1636.5" y2="231.5" stroke="#000" stroke-width="1" stroke-dasharray="2,2"/>
<line x1="1004.5" y1="231.5" x2="1004.5" y2="220.5" stroke="#000" stroke-width="1"/>
<line x1="1028.5" y1="231.5" x2="1028.5" y2="228.5" stroke="#000" stroke-width="1"/>
<line x1="1051.5" y1="231.5" x2="1051.5" y2="228.5" stroke="#000" stroke-width="1"/>
<line x1="1075.5" y1="231.5" x2="1075.5" y2="220.5" stroke="#000" stroke-width="1"/>
<line x1="1098.5" y1="231.5" x2="1098.5" y2="228.5" stroke="#000" stroke-width="1"/>
<line x1="1122.5" y1="231.5" x2="1122.5" y2="228.5" stroke="#000" stroke-width="1"/>
<line x1="1145.5" y1="231.5" x2="1145.5" y2="220.5" stroke="#000" stroke-width="1"/>
<line x1="1168.5" y1="231.5" x2="1168.5" y2="228.5" stroke="#000" stroke-width="1"/>
<line x1="1192.5" y1="231.5" x2="1192.5" y2="228.5" stroke="#000" stroke-width="1"/>
<line x1="1215.5" y1="231.5" x2="1215.5" y2="220.5" stroke="#000" stroke-width="1"/>
<line x1="1239.5" y1="231.5" x2="1239.5" y2="228.5" stroke="#000" stroke-width="1"/>
<line x1="1262.5" y1="231.5" x2="1262.5" y2="228.5" stroke="#000" stroke-width="1"/>
<line x1="1286.5" y1="231.5" x2="1286.5" y2="220.5" stroke="#000" stroke-width="1"/>
<line x1="1309.5" y1="231.5" x2="1309.5" y2="228.5" stroke="#000" stroke-width="1"/>
<line x1="1333.5" y1="231.5" x2="1333.5" y2="228.5" stroke="#000" stroke-width="1"/>
<line x1="1356.5" y1="231.5" x2="1356.5" y2="220.5" stroke="#000" stroke-width="1"/>
<line x1="1379.5" y1="231.5" x2="1379.5" y2="228.5" stroke="#000" stroke-width="1"/>
<line x1="1403.5" y1="231.5" x2="1403.5" y2="228.5" stroke="#000" stroke-width="1"/>
<line x1="1426.5" y1="231.5" x2="1426.5" y2="220.5" stroke="#000" stroke-width="1"/>
<line x1="1450.5" y1="231.5" x2="1450.5" y2="228.5" stroke="#000" stroke-width="1"/>
<line x1="1473.5" y1="231.5" x2="1473.5" y2="228.5" stroke="#000" stroke-width="1"/>
<line x1="1497.5" y1="231.5" x2="1497.5" y2="220.5" stroke="#000" stroke-width="1"/>
<line x1="1520.5" y1="231.5" x2="1520.5" y2="228.5" stroke="#000" stroke-width="1"/>
<line x1="1544.5" y1="231.5" x2="1544.5" y2="228.5" stroke="#000" stroke-width="1"/>
<line x1="1567.5" y1="231.5" x2="1567.5" y2="220.5" stroke="#000" stroke-width="1"/>
<line x1="1590.5" y1="231.5" x2="1590.5" y2="228.5" stroke="#000" stroke-width="1"/>
<line x1="1614.5" y1="231.5" x2="1614.5" y2="228.5" stroke="#000" stroke-width="1"/>
<text x="1001.1" y="236.2" font-family="Liberation Mono" font-size="13.3" text-anchor="end" font-weight="normal" fill="#000" stroke="#000" stroke-width="0.2" transform="translate(0 -21.3) scale(1 1.09)">0</text>
<text x="1001.1" y="214.3" font-family="Liberation Mono" font-size="13.3" text-anchor="end" font-weight="normal" fill="#000" stroke="#000" stroke-width="0.2" transform="translate(0 -19.3) scale(1 1.09)">5</text>
<text x="1001.1" y="192.4" font-family="Liberation Mono" font-size="13.3" text-anchor="end" font-weight="normal" fill="#000" stroke="#000" stroke-width="0.2" transform="translate(0 -17.3) scale(1 1.09)">10</text>
<line x1="1003.5" y1="231.5" x2="1003.5" y2="291.5" stroke="#000" stroke-width="1"/>
<path d="M1003.5 289.5h7.5M1003.5 286.5h7.5M1003.5 284.5h7.5M1003.5 281.5h7.5M1003.5 278.5h7.5M1003.5 276.5h7.5M1003.5 273.5h7.5M1003.5 271.5h7.5M1003.5 268.5h7.5M1003.5 265.5h7.5M1003.5 263.5h7.5M1003.5 260.5h7.5M1003.5 258.5h7.5M1003.5 255.5h7.5M1003.5 252.5h7.5M1003.5 250.5h7.5M1003.5 247.5h7.5M1003.5 245.5h7.5M1003.5 242.5h7.5M1003.5 239.5h7.5M1003.5 237.5h7.5M1003.5 234.5h7.5M1003.5 232.5h7.5M1003.5 289.5h22.5M1003.5 276.5h22.5M1003.5 263.5h22.5M1003.5 250.5h22.5M1003.5 237.5h22.5" stroke="#000" stroke-width="1" fill="none"/>
<line x1="1636.5" y1="231.5" x2="1636.5" y2="291.5" stroke="#000" stroke-width="1"/>
<line x1="1003.5" y1="231.5" x2="1636.5" y2="231.5" stroke="#000" stroke-width="1"/>
<line x1="1003.5" y1="291.5" x2="1636.5" y2="291.5" stroke="#000" stroke-width="1"/>
<line x1="1004.5" y1="291.5" x2="1004.5" y2="280.5" stroke="#000" stroke-width="1"/>
<line x1="1028.5" y1="291.5" x2="1028.5" y2="288.5" stroke="#000" stroke-width="1"/>
<line x1="1051.5" y1="291.5" x2="1051.5" y2="288.5" stroke="#000" stroke-width="1"/>
<line x1="1075.5" y1="291.5" x2="1075.5" y2="280.5" stroke="#000" stroke-width="1"/>
<line x1="1098.5" y1="291.5" x2="1098.5" y2="288.5" stroke="#000" stroke-width="1"/>
<line x1="1122.5" y1="291.5" x2="1122.5" y2="288.5" stroke="#000" stroke-width="1"/>
<line x1="1145.5" y1="291.5" x2="1145.5" y2="280.5" stroke="#000" stroke-width="1"/>
<line x1="1168.5" y1="291.5" x2="1168.5" y2="288.5" stroke="#000" stroke-width="1"/>
<line x1="1192.5" y1="291.5" x2="1192.5" y2="288.5" stroke="#000" stroke-width="1"/>
<line x1="1215.5" y1="291.5" x2="1215.5" y2="280.5" stroke="#000" stroke-width="1"/>
<line x1="1239.5" y1="291.5" x2="1239.5" y2="288.5" stroke="#000" stroke-width="1"/>
<line x1="1262.5" y1="291.5" x2="1262.5" y2="288.5" stroke="#000" stroke-width="1"/>
<line x1="1286.5" y1="291.5" x2="1286.5" y2="280.5" stroke="#000" stroke-width="1"/>
<line x1="1309.5" y1="291.5" x2="1309.5" y2="288.5" stroke="#000" stroke-width="1"/>
<line x1="1333.5" y1="291.5" x2="1333.5" y2="288.5" stroke="#000" stroke-width="1"/>
<line x1="1356.5" y1="291.5" x2="1356.5" y2="280.5" stroke="#000" stroke-width="1"/>
<line x1="1379.5" y1="291.5" x2="1379.5" y2="288.5" stroke="#000" stroke-width="1"/>
<line x1="1403.5" y1="291.5" x2="1403.5" y2="288.5" stroke="#000" stroke-width="1"/>
<line x1="1426.5" y1="291.5" x2="1426.5" y2="280.5" stroke="#000" stroke-width="1"/>
<line x1="1450.5" y1="291.5" x2="1450.5" y2="288.5" stroke="#000" stroke-width="1"/>
<line x1="1473.5" y1="291.5" x2="1473.5" y2="288.5" stroke="#000" stroke-width="1"/>
<line x1="1497.5" y1="291.5" x2="1497.5" y2="280.5" stroke="#000" stroke-width="1"/>
<line x1="1520.5" y1="291.5" x2="1520.5" y2="288.5" stroke="#000" stroke-width="1"/>
<line x1="1544.5" y1="291.5" x2="1544.5" y2="288.5" stroke="#000" stroke-width="1"/>
<line x1="1567.5" y1="291.5" x2="1567.5" y2="280.5" stroke="#000" stroke-width="1"/>
<line x1="1590.5" y1="291.5" x2="1590.5" y2="288.5" stroke="#000" stroke-width="1"/>
<line x1="1614.5" y1="291.5" x2="1614.5" y2="288.5" stroke="#000" stroke-width="1"/>
<text x="1001.1" y="294.1" font-family="Liberation Mono" font-size="13.3" text-anchor="end" font-weight="normal" fill="#000" stroke="#000" stroke-width="0.2" transform="translate(0 -26.5) scale(1 1.09)">0</text>
<text x="1001.1" y="281.1" font-family="Liberation Mono" font-size="13.3" text-anchor="end" font-weight="normal" fill="#000" stroke="#000" stroke-width="0.2" transform="translate(0 -25.3) scale(1 1.09)">0.5</text>
<text x="1001.1" y="268.1" font-family="Liberation Mono" font-size="13.3" text-anchor="end" font-weight="normal" fill="#000" stroke="#000" stroke-width="0.2" transform="translate(0 -24.1) scale(1 1.09)">1</text>
<text x="1001.1" y="255.1" font-family="Liberation Mono" font-size="13.3" text-anchor="end" font-weight="normal" fill="#000" stroke="#000" stroke-width="0.2" transform="translate(0 -23) scale(1 1.09)">1.5</text>
<text x="1001.1" y="242.1" font-family="Liberation Mono" font-size="13.3" text-anchor="end" font-weight="normal" fill="#000" stroke="#000" stroke-width="0.2" transform="translate(0 -21.8) scale(1 1.09)">2</text>
<line x1="1003.5" y1="291.5" x2="1003.5" y2="350.5" stroke="#000" stroke-width="1"/>
<path d="M1003.5 348.5h7.5M1003.5 345.5h7.5M1003.5 342.5h7.5M1003.5 340.5h7.5M1003.5 337.5h7.5M1003.5 334.5h7.5M1003.5 332.5h7.5M1003.5 329.5h7.5M1003.5 326.5h7.5M1003.5 324.5h7.5M1003.5 321.5h7.5M1003.5 318.5h7.5M1003.5 316.5h7.5M1003.5 313.5h7.5M1003.5 311.5h7.5M1003.5 308.5h7.5M1003.5 305.5h7.5M1003.5 303.5h7.5M1003.5 300.5h7.5M1003.5 297.5h7.5M1003.5 295.5h7.5M1003.5 348.5h22.5M1003.5 334.5h22.5M1003.5 321.5h22.5M1003.5 308.5h22.5M1003.5 295.5h22.5" stroke="#000" stroke-width="1" fill="none"/>
<line x1="1636.5" y1="291.5" x2="1636.5" y2="350.5" stroke="#000" stroke-width="1"/>
<line x1="1003.5" y1="291.5" x2="1636.5" y2="291.5" stroke="#000" stroke-width="1"/>
<line x1="1003.5" y1="350.5" x2="1636.5" y2="350.5" stroke="#000" stroke-width="1"/>
<line x1="1004.5" y1="350.5" x2="1004.5" y2="339.5" stroke="#000" stroke-width="1"/>
<line x1="1028.5" y1="350.5" x2="1028.5" y2="347.5" stroke="#000" stroke-width="1"/>
<line x1="1051.5" y1="350.5" x2="1051.5" y2="347.5" stroke="#000" stroke-width="1"/>
<line x1="1075.5" y1="350.5" x2="1075.5" y2="339.5" stroke="#000" stroke-width="1"/>
<line x1="1098.5" y1="350.5" x2="1098.5" y2="347.5" stroke="#000" stroke-width="1"/>
<line x1="1122.5" y1="350.5" x2="1122.5" y2="347.5" stroke="#000" stroke-width="1"/>
<line x1="1145.5" y1="350.5" x2="1145.5" y2="339.5" stroke="#000" stroke-width="1"/>
<line x1="1168.5" y1="350.5" x2="1168.5" y2="347.5" stroke="#000" stroke-width="1"/>
<line x1="1192.5" y1="350.5" x2="1192.5" y2="347.5" stroke="#000" stroke-width="1"/>
<line x1="1215.5" y1="350.5" x2="1215.5" y2="339.5" stroke="#000" stroke-width="1"/>
<line x1="1239.5" y1="350.5" x2="1239.5" y2="347.5" stroke="#000" stroke-width="1"/>
<line x1="1262.5" y1="350.5" x2="1262.5" y2="347.5" stroke="#000" stroke-width="1"/>
<line x1="1286.5" y1="350.5" x2="1286.5" y2="339.5" stroke="#000" stroke-width="1"/>
<line x1="1309.5" y1="350.5" x2="1309.5" y2="347.5" stroke="#000" stroke-width="1"/>
<line x1="1333.5" y1="350.5" x2="1333.5" y2="347.5" stroke="#000" stroke-width="1"/>
<line x1="1356.5" y1="350.5" x2="1356.5" y2="339.5" stroke="#000" stroke-width="1"/>
<line x1="1379.5" y1="350.5" x2="1379.5" y2="347.5" stroke="#000" stroke-width="1"/>
<line x1="1403.5" y1="350.5" x2="1403.5" y2="347.5" stroke="#000" stroke-width="1"/>
<line x1="1426.5" y1="350.5" x2="1426.5" y2="339.5" stroke="#000" stroke-width="1"/>
<line x1="1450.5" y1="350.5" x2="1450.5" y2="347.5" stroke="#000" stroke-width="1"/>
<line x1="1473.5" y1="350.5" x2="1473.5" y2="347.5" stroke="#000" stroke-width="1"/>
<line x1="1497.5" y1="350.5" x2="1497.5" y2="339.5" stroke="#000" stroke-width="1"/>
<line x1="1520.5" y1="350.5" x2="1520.5" y2="347.5" stroke="#000" stroke-width="1"/>
<line x1="1544.5" y1="350.5" x2="1544.5" y2="347.5" stroke="#000" stroke-width="1"/>
<line x1="1567.5" y1="350.5" x2="1567.5" y2="339.5" stroke="#000" stroke-width="1"/>
<line x1="1590.5" y1="350.5" x2="1590.5" y2="347.5" stroke="#000" stroke-width="1"/>
<line x1="1614.5" y1="350.5" x2="1614.5" y2="347.5" stroke="#000" stroke-width="1"/>
<text x="1001.1" y="352.9" font-family="Liberation Mono" font-size="13.3" text-anchor="end" font-weight="normal" fill="#000" stroke="#000" stroke-width="0.2" transform="translate(0 -31.8) scale(1 1.09)">0</text>
<text x="1001.1" y="339.7" font-family="Liberation Mono" font-size="13.3" text-anchor="end" font-weight="normal" fill="#000" stroke="#000" stroke-width="0.2" transform="translate(0 -30.6) scale(1 1.09)">0.5</text>
<text x="1001.1" y="326.5" font-family="Liberation Mono" font-size="13.3" text-anchor="end" font-weight="normal" fill="#000" stroke="#000" stroke-width="0.2" transform="translate(0 -29.4) scale(1 1.09)">1</text>
<text x="1001.1" y="313.3" font-family="Liberation Mono" font-size="13.3" text-anchor="end" font-weight="normal" fill="#000" stroke="#000" stroke-width="0.2" transform="translate(0 -28.2) scale(1 1.09)">1.5</text>
<text x="1001.1" y="300.1" font-family="Liberation Mono" font-size="13.3" text-anchor="end" font-weight="normal" fill="#000" stroke="#000" stroke-width="0.2" transform="translate(0 -27) scale(1 1.09)">2</text>
<line x1="1003.5" y1="350.5" x2="1003.5" y2="411" stroke="#000" stroke-width="1"/>
<path d="M1003.5 410.5h7.5M1003.5 408.5h7.5M1003.5 406.5h7.5M1003.5 403.5h7.5M1003.5 401.5h7.5M1003.5 399.5h7.5M1003.5 397.5h7.5M1003.5 395.5h7.5M1003.5 392.5h7.5M1003.5 390.5h7.5M1003.5 388.5h7.5M1003.5 386.5h7.5M1003.5 384.5h7.5M1003.5 382.5h7.5M1003.5 379.5h7.5M1003.5 377.5h7.5M1003.5 375.5h7.5M1003.5 373.5h7.5M1003.5 371.5h7.5M1003.5 368.5h7.5M1003.5 366.5h7.5M1003.5 364.5h7.5M1003.5 362.5h7.5M1003.5 360.5h7.5M1003.5 358.5h7.5M1003.5 355.5h7.5M1003.5 353.5h7.5M1003.5 410.5h22.5M1003.5 399.5h22.5M1003.5 388.5h22.5M1003.5 377.5h22.5M1003.5 366.5h22.5M1003.5 355.5h22.5" stroke="#000" stroke-width="1" fill="none"/>
<line x1="1636.5" y1="350.5" x2="1636.5" y2="411" stroke="#000" stroke-width="1"/>
<line x1="1003.5" y1="350.5" x2="1636.5" y2="350.5" stroke="#000" stroke-width="1"/>
<line x1="1003.5" y1="411.5" x2="1636.5" y2="411.5" stroke="#000" stroke-width="1"/>
<line x1="1004.5" y1="411.5" x2="1004.5" y2="400.5" stroke="#000" stroke-width="1"/>
<line x1="1028.5" y1="411.5" x2="1028.5" y2="408.5" stroke="#000" stroke-width="1"/>
<line x1="1051.5" y1="411.5" x2="1051.5" y2="408.5" stroke="#000" stroke-width="1"/>
<line x1="1075.5" y1="411.5" x2="1075.5" y2="400.5" stroke="#000" stroke-width="1"/>
<line x1="1098.5" y1="411.5" x2="1098.5" y2="408.5" stroke="#000" stroke-width="1"/>
<line x1="1122.5" y1="411.5" x2="1122.5" y2="408.5" stroke="#000" stroke-width="1"/>
<line x1="1145.5" y1="411.5" x2="1145.5" y2="400.5" stroke="#000" stroke-width="1"/>
<line x1="1168.5" y1="411.5" x2="1168.5" y2="408.5" stroke="#000" stroke-width="1"/>
<line x1="1192.5" y1="411.5" x2="1192.5" y2="408.5" stroke="#000" stroke-width="1"/>
<line x1="1215.5" y1="411.5" x2="1215.5" y2="400.5" stroke="#000" stroke-width="1"/>
<line x1="1239.5" y1="411.5" x2="1239.5" y2="408.5" stroke="#000" stroke-width="1"/>
<line x1="1262.5" y1="411.5" x2="1262.5" y2="408.5" stroke="#000" stroke-width="1"/>
<line x1="1286.5" y1="411.5" x2="1286.5" y2="400.5" stroke="#000" stroke-width="1"/>
<line x1="1309.5" y1="411.5" x2="1309.5" y2="408.5" stroke="#000" stroke-width="1"/>
<line x1="1333.5" y1="411.5" x2="1333.5" y2="408.5" stroke="#000" stroke-width="1"/>
<line x1="1356.5" y1="411.5" x2="1356.5" y2="400.5" stroke="#000" stroke-width="1"/>
<line x1="1379.5" y1="411.5" x2="1379.5" y2="408.5" stroke="#000" stroke-width="1"/>
<line x1="1403.5" y1="411.5" x2="1403.5" y2="408.5" stroke="#000" stroke-width="1"/>
<line x1="1426.5" y1="411.5" x2="1426.5" y2="400.5" stroke="#000" stroke-width="1"/>
<line x1="1450.5" y1="411.5" x2="1450.5" y2="408.5" stroke="#000" stroke-width="1"/>
<line x1="1473.5" y1="411.5" x2="1473.5" y2="408.5" stroke="#000" stroke-width="1"/>
<line x1="1497.5" y1="411.5" x2="1497.5" y2="400.5" stroke="#000" stroke-width="1"/>
<line x1="1520.5" y1="411.5" x2="1520.5" y2="408.5" stroke="#000" stroke-width="1"/>
<line x1="1544.5" y1="411.5" x2="1544.5" y2="408.5" stroke="#000" stroke-width="1"/>
<line x1="1567.5" y1="411.5" x2="1567.5" y2="400.5" stroke="#000" stroke-width="1"/>
<line x1="1590.5" y1="411.5" x2="1590.5" y2="408.5" stroke="#000" stroke-width="1"/>
<line x1="1614.5" y1="411.5" x2="1614.5" y2="408.5" stroke="#000" stroke-width="1"/>
<text x="1001.1" y="415.3" font-family="Liberation Mono" font-size="13.3" text-anchor="end" font-weight="normal" fill="#000" stroke="#000" stroke-width="0.2" transform="translate(0 -37.4) scale(1 1.09)">0</text>
<text x="1001.1" y="404.4" font-family="Liberation Mono" font-size="13.3" text-anchor="end" font-weight="normal" fill="#000" stroke="#000" stroke-width="0.2" transform="translate(0 -36.4) scale(1 1.09)">20</text>
<text x="1001.1" y="393.5" font-family="Liberation Mono" font-size="13.3" text-anchor="end" font-weight="normal" fill="#000" stroke="#000" stroke-width="0.2" transform="translate(0 -35.4) scale(1 1.09)">40</text>
<text x="1001.1" y="382.6" font-family="Liberation Mono" font-size="13.3" text-anchor="end" font-weight="normal" fill="#000" stroke="#000" stroke-width="0.2" transform="translate(0 -34.4) scale(1 1.09)">60</text>
<text x="1001.1" y="371.7" font-family="Liberation Mono" font-size="13.3" text-anchor="end" font-weight="normal" fill="#000" stroke="#000" stroke-width="0.2" transform="translate(0 -33.4) scale(1 1.09)">80</text>
<text x="1001.1" y="360.8" font-family="Liberation Mono" font-size="13.3" text-anchor="end" font-weight="normal" fill="#000" stroke="#000" stroke-width="0.2" transform="translate(0 -32.5) scale(1 1.09)">100</text>
<line x1="1003.5" y1="414.5" x2="1003.5" y2="499.5" stroke="#000" stroke-width="1"/>
<path d="M1003.5 499.5h22.5M1003.5 482.5h22.5M1003.5 465.5h22.5M1003.5 448.5h22.5M1003.5 431.5h22.5M1003.5 414.5h22.5" stroke="#000" stroke-width="1" fill="none"/>
<line x1="1636.5" y1="414.5" x2="1636.5" y2="499.5" stroke="#000" stroke-width="1"/>
<line x1="1003.5" y1="414.5" x2="1636.5" y2="414.5" stroke="#000" stroke-width="1"/>
<line x1="1003.5" y1="499.5" x2="1636.5" y2="499.5" stroke="#000" stroke-width="1"/>
<line x1="1004.5" y1="499.5" x2="1004.5" y2="488.5" stroke="#000" stroke-width="1"/>
<line x1="1028.5" y1="499.5" x2="1028.5" y2="496.5" stroke="#000" stroke-width="1"/>
<line x1="1051.5" y1="499.5" x2="1051.5" y2="496.5" stroke="#000" stroke-width="1"/>
<line x1="1075.5" y1="499.5" x2="1075.5" y2="488.5" stroke="#000" stroke-width="1"/>
<line x1="1098.5" y1="499.5" x2="1098.5" y2="496.5" stroke="#000" stroke-width="1"/>
<line x1="1122.5" y1="499.5" x2="1122.5" y2="496.5" stroke="#000" stroke-width="1"/>
<line x1="1145.5" y1="499.5" x2="1145.5" y2="488.5" stroke="#000" stroke-width="1"/>
<line x1="1168.5" y1="499.5" x2="1168.5" y2="496.5" stroke="#000" stroke-width="1"/>
<line x1="1192.5" y1="499.5" x2="1192.5" y2="496.5" stroke="#000" stroke-width="1"/>
<line x1="1215.5" y1="499.5" x2="1215.5" y2="488.5" stroke="#000" stroke-width="1"/>
<line x1="1239.5" y1="499.5" x2="1239.5" y2="496.5" stroke="#000" stroke-width="1"/>
<line x1="1262.5" y1="499.5" x2="1262.5" y2="496.5" stroke="#000" stroke-width="1"/>
<line x1="1286.5" y1="499.5" x2="1286.5" y2="488.5" stroke="#000" stroke-width="1"/>
<line x1="1309.5" y1="499.5" x2="1309.5" y2="496.5" stroke="#000" stroke-width="1"/>
<line x1="1333.5" y1="499.5" x2="1333.5" y2="496.5" stroke="#000" stroke-width="1"/>
<line x1="1356.5" y1="499.5" x2="1356.5" y2="488.5" stroke="#000" stroke-width="1"/>
<line x1="1379.5" y1="499.5" x2="1379.5" y2="496.5" stroke="#000" stroke-width="1"/>
<line x1="1403.5" y1="499.5" x2="1403.5" y2="496.5" stroke="#000" stroke-width="1"/>
<line x1="1426.5" y1="499.5" x2="1426.5" y2="488.5" stroke="#000" stroke-width="1"/>
<line x1="1450.5" y1="499.5" x2="1450.5" y2="496.5" stroke="#000" stroke-width="1"/>
<line x1="1473.5" y1="499.5" x2="1473.5" y2="496.5" stroke="#000" stroke-width="1"/>
<line x1="1497.5" y1="499.5" x2="1497.5" y2="488.5" stroke="#000" stroke-width="1"/>
<line x1="1520.5" y1="499.5" x2="1520.5" y2="496.5" stroke="#000" stroke-width="1"/>
<line x1="1544.5" y1="499.5" x2="1544.5" y2="496.5" stroke="#000" stroke-width="1"/>
<line x1="1567.5" y1="499.5" x2="1567.5" y2="488.5" stroke="#000" stroke-width="1"/>
<line x1="1590.5" y1="499.5" x2="1590.5" y2="496.5" stroke="#000" stroke-width="1"/>
<line x1="1614.5" y1="499.5" x2="1614.5" y2="496.5" stroke="#000" stroke-width="1"/>
<text x="1001.1" y="487.1" font-family="Liberation Mono" font-size="14.9" text-anchor="end" font-weight="normal" fill="#000" stroke="#000" stroke-width="0.2">1000</text>
<text x="1001.1" y="470.2" font-family="Liberation Mono" font-size="14.9" text-anchor="end" font-weight="normal" fill="#000" stroke="#000" stroke-width="0.2">2000</text>
<text x="1001.1" y="453.2" font-family="Liberation Mono" font-size="14.9" text-anchor="end" font-weight="normal" fill="#000" stroke="#000" stroke-width="0.2">3000</text>
<text x="1001.1" y="436.3" font-family="Liberation Mono" font-size="14.9" text-anchor="end" font-weight="normal" fill="#000" stroke="#000" stroke-width="0.2">4000</text>
<text x="1001.1" y="419.3" font-family="Liberation Mono" font-size="14.9" text-anchor="end" font-weight="normal" fill="#000" stroke="#000" stroke-width="0.2">5000</text>
<line x1="1003.5" y1="499.5" x2="1003.5" y2="584.5" stroke="#000" stroke-width="1"/>
<path d="M1003.5 584.5h7.5M1003.5 580.5h7.5M1003.5 576.5h7.5M1003.5 571.5h7.5M1003.5 567.5h7.5M1003.5 563.5h7.5M1003.5 559.5h7.5M1003.5 555.5h7.5M1003.5 550.5h7.5M1003.5 546.5h7.5M1003.5 542.5h7.5M1003.5 538.5h7.5M1003.5 534.5h7.5M1003.5 529.5h7.5M1003.5 525.5h7.5M1003.5 521.5h7.5M1003.5 517.5h7.5M1003.5 513.5h7.5M1003.5 508.5h7.5M1003.5 504.5h7.5M1003.5 500.5h7.5M1003.5 584.5h22.5M1003.5 563.5h22.5M1003.5 542.5h22.5M1003.5 521.5h22.5M1003.5 500.5h22.5" stroke="#000" stroke-width="1" fill="none"/>
<line x1="1636.5" y1="499.5" x2="1636.5" y2="584.5" stroke="#000" stroke-width="1"/>
<line x1="1003.5" y1="499.5" x2="1636.5" y2="499.5" stroke="#000" stroke-width="1"/>
<line x1="1003.5" y1="584.5" x2="1636.5" y2="584.5" stroke="#000" stroke-width="1"/>
<line x1="1004.5" y1="584.5" x2="1004.5" y2="573.5" stroke="#000" stroke-width="1"/>
<line x1="1028.5" y1="584.5" x2="1028.5" y2="581.5" stroke="#000" stroke-width="1"/>
<line x1="1051.5" y1="584.5" x2="1051.5" y2="581.5" stroke="#000" stroke-width="1"/>
<line x1="1075.5" y1="584.5" x2="1075.5" y2="573.5" stroke="#000" stroke-width="1"/>
<line x1="1098.5" y1="584.5" x2="1098.5" y2="581.5" stroke="#000" stroke-width="1"/>
<line x1="1122.5" y1="584.5" x2="1122.5" y2="581.5" stroke="#000" stroke-width="1"/>
<line x1="1145.5" y1="584.5" x2="1145.5" y2="573.5" stroke="#000" stroke-width="1"/>
<line x1="1168.5" y1="584.5" x2="1168.5" y2="581.5" stroke="#000" stroke-width="1"/>
<line x1="1192.5" y1="584.5" x2="1192.5" y2="581.5" stroke="#000" stroke-width="1"/>
<line x1="1215.5" y1="584.5" x2="1215.5" y2="573.5" stroke="#000" stroke-width="1"/>
<line x1="1239.5" y1="584.5" x2="1239.5" y2="581.5" stroke="#000" stroke-width="1"/>
<line x1="1262.5" y1="584.5" x2="1262.5" y2="581.5" stroke="#000" stroke-width="1"/>
<line x1="1286.5" y1="584.5" x2="1286.5" y2="573.5" stroke="#000" stroke-width="1"/>
<line x1="1309.5" y1="584.5" x2="1309.5" y2="581.5" stroke="#000" stroke-width="1"/>
<line x1="1333.5" y1="584.5" x2="1333.5" y2="581.5" stroke="#000" stroke-width="1"/>
<line x1="1356.5" y1="584.5" x2="1356.5" y2="573.5" stroke="#000" stroke-width="1"/>
<line x1="1379.5" y1="584.5" x2="1379.5" y2="581.5" stroke="#000" stroke-width="1"/>
<line x1="1403.5" y1="584.5" x2="1403.5" y2="581.5" stroke="#000" stroke-width="1"/>
<line x1="1426.5" y1="584.5" x2="1426.5" y2="573.5" stroke="#000" stroke-width="1"/>
<line x1="1450.5" y1="584.5" x2="1450.5" y2="581.5" stroke="#000" stroke-width="1"/>
<line x1="1473.5" y1="584.5" x2="1473.5" y2="581.5" stroke="#000" stroke-width="1"/>
<line x1="1497.5" y1="584.5" x2="1497.5" y2="573.5" stroke="#000" stroke-width="1"/>
<line x1="1520.5" y1="584.5" x2="1520.5" y2="581.5" stroke="#000" stroke-width="1"/>
<line x1="1544.5" y1="584.5" x2="1544.5" y2="581.5" stroke="#000" stroke-width="1"/>
<line x1="1567.5" y1="584.5" x2="1567.5" y2="573.5" stroke="#000" stroke-width="1"/>
<line x1="1590.5" y1="584.5" x2="1590.5" y2="581.5" stroke="#000" stroke-width="1"/>
<line x1="1614.5" y1="584.5" x2="1614.5" y2="581.5" stroke="#000" stroke-width="1"/>
<text x="1001.1" y="589.6" font-family="Liberation Mono" font-size="14.9" text-anchor="end" font-weight="normal" fill="#000" stroke="#000" stroke-width="0.2">0</text>
<text x="1001.1" y="568.5" font-family="Liberation Mono" font-size="14.9" text-anchor="end" font-weight="normal" fill="#000" stroke="#000" stroke-width="0.2">5</text>
<text x="1001.1" y="547.5" font-family="Liberation Mono" font-size="14.9" text-anchor="end" font-weight="normal" fill="#000" stroke="#000" stroke-width="0.2">10</text>
<text x="1001.1" y="526.4" font-family="Liberation Mono" font-size="14.9" text-anchor="end" font-weight="normal" fill="#000" stroke="#000" stroke-width="0.2">15</text>
<text x="1001.1" y="505.4" font-family="Liberation Mono" font-size="14.9" text-anchor="end" font-weight="normal" fill="#000" stroke="#000" stroke-width="0.2">20</text>
<line x1="1003.5" y1="584.5" x2="1003.5" y2="669.5" stroke="#000" stroke-width="1"/>
<path d="M1003.5 669.5h7.5M1003.5 665.5h7.5M1003.5 662.5h7.5M1003.5 659.5h7.5M1003.5 655.5h7.5M1003.5 652.5h7.5M1003.5 648.5h7.5M1003.5 645.5h7.5M1003.5 642.5h7.5M1003.5 638.5h7.5M1003.5 635.5h7.5M1003.5 632.5h7.5M1003.5 628.5h7.5M1003.5 625.5h7.5M1003.5 621.5h7.5M1003.5 618.5h7.5M1003.5 615.5h7.5M1003.5 611.5h7.5M1003.5 608.5h7.5M1003.5 604.5h7.5M1003.5 601.5h7.5M1003.5 598.5h7.5M1003.5 594.5h7.5M1003.5 591.5h7.5M1003.5 587.5h7.5M1003.5 584.5h7.5M1003.5 669.5h22.5M1003.5 652.5h22.5M1003.5 635.5h22.5M1003.5 618.5h22.5M1003.5 601.5h22.5M1003.5 584.5h22.5" stroke="#000" stroke-width="1" fill="none"/>
<line x1="1636.5" y1="584.5" x2="1636.5" y2="669.5" stroke="#000" stroke-width="1"/>
<line x1="1003.5" y1="584.5" x2="1636.5" y2="584.5" stroke="#000" stroke-width="1"/>
<line x1="1003.5" y1="669.5" x2="1636.5" y2="669.5" stroke="#000" stroke-width="1"/>
<line x1="1004.5" y1="669.5" x2="1004.5" y2="658.5" stroke="#000" stroke-width="1"/>
<line x1="1028.5" y1="669.5" x2="1028.5" y2="666.5" stroke="#000" stroke-width="1"/>
<line x1="1051.5" y1="669.5" x2="1051.5" y2="666.5" stroke="#000" stroke-width="1"/>
<line x1="1075.5" y1="669.5" x2="1075.5" y2="658.5" stroke="#000" stroke-width="1"/>
<line x1="1098.5" y1="669.5" x2="1098.5" y2="666.5" stroke="#000" stroke-width="1"/>
<line x1="1122.5" y1="669.5" x2="1122.5" y2="666.5" stroke="#000" stroke-width="1"/>
<line x1="1145.5" y1="669.5" x2="1145.5" y2="658.5" stroke="#000" stroke-width="1"/>
<line x1="1168.5" y1="669.5" x2="1168.5" y2="666.5" stroke="#000" stroke-width="1"/>
<line x1="1192.5" y1="669.5" x2="1192.5" y2="666.5" stroke="#000" stroke-width="1"/>
<line x1="1215.5" y1="669.5" x2="1215.5" y2="658.5" stroke="#000" stroke-width="1"/>
<line x1="1239.5" y1="669.5" x2="1239.5" y2="666.5" stroke="#000" stroke-width="1"/>
<line x1="1262.5" y1="669.5" x2="1262.5" y2="666.5" stroke="#000" stroke-width="1"/>
<line x1="1286.5" y1="669.5" x2="1286.5" y2="658.5" stroke="#000" stroke-width="1"/>
<line x1="1309.5" y1="669.5" x2="1309.5" y2="666.5" stroke="#000" stroke-width="1"/>
<line x1="1333.5" y1="669.5" x2="1333.5" y2="666.5" stroke="#000" stroke-width="1"/>
<line x1="1356.5" y1="669.5" x2="1356.5" y2="658.5" stroke="#000" stroke-width="1"/>
<line x1="1379.5" y1="669.5" x2="1379.5" y2="666.5" stroke="#000" stroke-width="1"/>
<line x1="1403.5" y1="669.5" x2="1403.5" y2="666.5" stroke="#000" stroke-width="1"/>
<line x1="1426.5" y1="669.5" x2="1426.5" y2="658.5" stroke="#000" stroke-width="1"/>
<line x1="1450.5" y1="669.5" x2="1450.5" y2="666.5" stroke="#000" stroke-width="1"/>
<line x1="1473.5" y1="669.5" x2="1473.5" y2="666.5" stroke="#000" stroke-width="1"/>
<line x1="1497.5" y1="669.5" x2="1497.5" y2="658.5" stroke="#000" stroke-width="1"/>
<line x1="1520.5" y1="669.5" x2="1520.5" y2="666.5" stroke="#000" stroke-width="1"/>
<line x1="1544.5" y1="669.5" x2="1544.5" y2="666.5" stroke="#000" stroke-width="1"/>
<line x1="1567.5" y1="669.5" x2="1567.5" y2="658.5" stroke="#000" stroke-width="1"/>
<line x1="1590.5" y1="669.5" x2="1590.5" y2="666.5" stroke="#000" stroke-width="1"/>
<line x1="1614.5" y1="669.5" x2="1614.5" y2="666.5" stroke="#000" stroke-width="1"/>
<text x="1001.1" y="674.3" font-family="Liberation Mono" font-size="14.9" text-anchor="end" font-weight="normal" fill="#000" stroke="#000" stroke-width="0.2">0</text>
<text x="1001.1" y="657.3" font-family="Liberation Mono" font-size="14.9" text-anchor="end" font-weight="normal" fill="#000" stroke="#000" stroke-width="0.2">1</text>
<text x="1001.1" y="640.4" font-family="Liberation Mono" font-size="14.9" text-anchor="end" font-weight="normal" fill="#000" stroke="#000" stroke-width="0.2">2</text>
<text x="1001.1" y="623.4" font-family="Liberation Mono" font-size="14.9" text-anchor="end" font-weight="normal" fill="#000" stroke="#000" stroke-width="0.2">3</text>
<text x="1001.1" y="606.5" font-family="Liberation Mono" font-size="14.9" text-anchor="end" font-weight="normal" fill="#000" stroke="#000" stroke-width="0.2">4</text>
<text x="1001.1" y="589.5" font-family="Liberation Mono" font-size="14.9" text-anchor="end" font-weight="normal" fill="#000" stroke="#000" stroke-width="0.2">5</text>
<line x1="1003.5" y1="669.5" x2="1003.5" y2="754.5" stroke="#000" stroke-width="1"/>
<path d="M1003.5 754.5h7.5M1003.5 750.5h7.5M1003.5 745.5h7.5M1003.5 741.5h7.5M1003.5 737.5h7.5M1003.5 733.5h7.5M1003.5 729.5h7.5M1003.5 725.5h7.5M1003.5 720.5h7.5M1003.5 716.5h7.5M1003.5 712.5h7.5M1003.5 708.5h7.5M1003.5 704.5h7.5M1003.5 699.5h7.5M1003.5 695.5h7.5M1003.5 691.5h7.5M1003.5 687.5h7.5M1003.5 683.5h7.5M1003.5 679.5h7.5M1003.5 674.5h7.5M1003.5 670.5h7.5M1003.5 754.5h22.5M1003.5 733.5h22.5M1003.5 712.5h22.5M1003.5 691.5h22.5M1003.5 670.5h22.5" stroke="#000" stroke-width="1" fill="none"/>
<line x1="1636.5" y1="669.5" x2="1636.5" y2="754.5" stroke="#000" stroke-width="1"/>
<line x1="1003.5" y1="669.5" x2="1636.5" y2="669.5" stroke="#000" stroke-width="1"/>
<line x1="1003.5" y1="754.5" x2="1636.5" y2="754.5" stroke="#000" stroke-width="1"/>
<line x1="1004.5" y1="754.5" x2="1004.5" y2="743.5" stroke="#000" stroke-width="1"/>
<line x1="1028.5" y1="754.5" x2="1028.5" y2="751.5" stroke="#000" stroke-width="1"/>
<line x1="1051.5" y1="754.5" x2="1051.5" y2="751.5" stroke="#000" stroke-width="1"/>
<line x1="1075.5" y1="754.5" x2="1075.5" y2="743.5" stroke="#000" stroke-width="1"/>
<line x1="1098.5" y1="754.5" x2="1098.5" y2="751.5" stroke="#000" stroke-width="1"/>
<line x1="1122.5" y1="754.5" x2="1122.5" y2="751.5" stroke="#000" stroke-width="1"/>
<line x1="1145.5" y1="754.5" x2="1145.5" y2="743.5" stroke="#000" stroke-width="1"/>
<line x1="1168.5" y1="754.5" x2="1168.5" y2="751.5" stroke="#000" stroke-width="1"/>
<line x1="1192.5" y1="754.5" x2="1192.5" y2="751.5" stroke="#000" stroke-width="1"/>
<line x1="1215.5" y1="754.5" x2="1215.5" y2="743.5" stroke="#000" stroke-width="1"/>
<line x1="1239.5" y1="754.5" x2="1239.5" y2="751.5" stroke="#000" stroke-width="1"/>
<line x1="1262.5" y1="754.5" x2="1262.5" y2="751.5" stroke="#000" stroke-width="1"/>
<line x1="1286.5" y1="754.5" x2="1286.5" y2="743.5" stroke="#000" stroke-width="1"/>
<line x1="1309.5" y1="754.5" x2="1309.5" y2="751.5" stroke="#000" stroke-width="1"/>
<line x1="1333.5" y1="754.5" x2="1333.5" y2="751.5" stroke="#000" stroke-width="1"/>
<line x1="1356.5" y1="754.5" x2="1356.5" y2="743.5" stroke="#000" stroke-width="1"/>
<line x1="1379.5" y1="754.5" x2="1379.5" y2="751.5" stroke="#000" stroke-width="1"/>
<line x1="1403.5" y1="754.5" x2="1403.5" y2="751.5" stroke="#000" stroke-width="1"/>
<line x1="1426.5" y1="754.5" x2="1426.5" y2="743.5" stroke="#000" stroke-width="1"/>
<line x1="1450.5" y1="754.5" x2="1450.5" y2="751.5" stroke="#000" stroke-width="1"/>
<line x1="1473.5" y1="754.5" x2="1473.5" y2="751.5" stroke="#000" stroke-width="1"/>
<line x1="1497.5" y1="754.5" x2="1497.5" y2="743.5" stroke="#000" stroke-width="1"/>
<line x1="1520.5" y1="754.5" x2="1520.5" y2="751.5" stroke="#000" stroke-width="1"/>
<line x1="1544.5" y1="754.5" x2="1544.5" y2="751.5" stroke="#000" stroke-width="1"/>
<line x1="1567.5" y1="754.5" x2="1567.5" y2="743.5" stroke="#000" stroke-width="1"/>
<line x1="1590.5" y1="754.5" x2="1590.5" y2="751.5" stroke="#000" stroke-width="1"/>
<line x1="1614.5" y1="754.5" x2="1614.5" y2="751.5" stroke="#000" stroke-width="1"/>
<text x="1001.1" y="759.2" font-family="Liberation Mono" font-size="14.9" text-anchor="end" font-weight="normal" fill="#000" stroke="#000" stroke-width="0.2">0</text>
<text x="1001.1" y="738.3" font-family="Liberation Mono" font-size="14.9" text-anchor="end" font-weight="normal" fill="#000" stroke="#000" stroke-width="0.2">1</text>
<text x="1001.1" y="717.5" font-family="Liberation Mono" font-size="14.9" text-anchor="end" font-weight="normal" fill="#000" stroke="#000" stroke-width="0.2">2</text>
<text x="1001.1" y="696.6" font-family="Liberation Mono" font-size="14.9" text-anchor="end" font-weight="normal" fill="#000" stroke="#000" stroke-width="0.2">3</text>
<text x="1001.1" y="675.8" font-family="Liberation Mono" font-size="14.9" text-anchor="end" font-weight="normal" fill="#000" stroke="#000" stroke-width="0.2">4</text>
<line x1="1003.5" y1="754.5" x2="1003.5" y2="840" stroke="#000" stroke-width="1"/>
<path d="M1003.5 839.5h7.5M1003.5 836.5h7.5M1003.5 833.5h7.5M1003.5 830.5h7.5M1003.5 827.5h7.5M1003.5 825.5h7.5M1003.5 822.5h7.5M1003.5 819.5h7.5M1003.5 816.5h7.5M1003.5 814.5h7.5M1003.5 811.5h7.5M1003.5 808.5h7.5M1003.5 805.5h7.5M1003.5 802.5h7.5M1003.5 800.5h7.5M1003.5 797.5h7.5M1003.5 794.5h7.5M1003.5 791.5h7.5M1003.5 789.5h7.5M1003.5 786.5h7.5M1003.5 783.5h7.5M1003.5 780.5h7.5M1003.5 777.5h7.5M1003.5 775.5h7.5M1003.5 772.5h7.5M1003.5 769.5h7.5M1003.5 766.5h7.5M1003.5 764.5h7.5M1003.5 761.5h7.5M1003.5 758.5h7.5M1003.5 755.5h7.5M1003.5 839.5h22.5M1003.5 825.5h22.5M1003.5 811.5h22.5M1003.5 797.5h22.5M1003.5 783.5h22.5M1003.5 769.5h22.5M1003.5 755.5h22.5" stroke="#000" stroke-width="1" fill="none"/>
<line x1="1636.5" y1="754.5" x2="1636.5" y2="840" stroke="#000" stroke-width="1"/>
<line x1="1003.5" y1="754.5" x2="1636.5" y2="754.5" stroke="#000" stroke-width="1"/>
<line x1="1003.5" y1="840.5" x2="1636.5" y2="840.5" stroke="#000" stroke-width="1"/>
<line x1="1004.5" y1="840.5" x2="1004.5" y2="829.5" stroke="#000" stroke-width="1"/>
<line x1="1028.5" y1="840.5" x2="1028.5" y2="837.5" stroke="#000" stroke-width="1"/>
<line x1="1051.5" y1="840.5" x2="1051.5" y2="837.5" stroke="#000" stroke-width="1"/>
<line x1="1075.5" y1="840.5" x2="1075.5" y2="829.5" stroke="#000" stroke-width="1"/>
<line x1="1098.5" y1="840.5" x2="1098.5" y2="837.5" stroke="#000" stroke-width="1"/>
<line x1="1122.5" y1="840.5" x2="1122.5" y2="837.5" stroke="#000" stroke-width="1"/>
<line x1="1145.5" y1="840.5" x2="1145.5" y2="829.5" stroke="#000" stroke-width="1"/>
<line x1="1168.5" y1="840.5" x2="1168.5" y2="837.5" stroke="#000" stroke-width="1"/>
<line x1="1192.5" y1="840.5" x2="1192.5" y2="837.5" stroke="#000" stroke-width="1"/>
<line x1="1215.5" y1="840.5" x2="1215.5" y2="829.5" stroke="#000" stroke-width="1"/>
<line x1="1239.5" y1="840.5" x2="1239.5" y2="837.5" stroke="#000" stroke-width="1"/>
<line x1="1262.5" y1="840.5" x2="1262.5" y2="837.5" stroke="#000" stroke-width="1"/>
<line x1="1286.5" y1="840.5" x2="1286.5" y2="829.5" stroke="#000" stroke-width="1"/>
<line x1="1309.5" y1="840.5" x2="1309.5" y2="837.5" stroke="#000" stroke-width="1"/>
<line x1="1333.5" y1="840.5" x2="1333.5" y2="837.5" stroke="#000" stroke-width="1"/>
<line x1="1356.5" y1="840.5" x2="1356.5" y2="829.5" stroke="#000" stroke-width="1"/>
<line x1="1379.5" y1="840.5" x2="1379.5" y2="837.5" stroke="#000" stroke-width="1"/>
<line x1="1403.5" y1="840.5" x2="1403.5" y2="837.5" stroke="#000" stroke-width="1"/>
<line x1="1426.5" y1="840.5" x2="1426.5" y2="829.5" stroke="#000" stroke-width="1"/>
<line x1="1450.5" y1="840.5" x2="1450.5" y2="837.5" stroke="#000" stroke-width="1"/>
<line x1="1473.5" y1="840.5" x2="1473.5" y2="837.5" stroke="#000" stroke-width="1"/>
<line x1="1497.5" y1="840.5" x2="1497.5" y2="829.5" stroke="#000" stroke-width="1"/>
<line x1="1520.5" y1="840.5" x2="1520.5" y2="837.5" stroke="#000" stroke-width="1"/>
<line x1="1544.5" y1="840.5" x2="1544.5" y2="837.5" stroke="#000" stroke-width="1"/>
<line x1="1567.5" y1="840.5" x2="1567.5" y2="829.5" stroke="#000" stroke-width="1"/>
<line x1="1590.5" y1="840.5" x2="1590.5" y2="837.5" stroke="#000" stroke-width="1"/>
<line x1="1614.5" y1="840.5" x2="1614.5" y2="837.5" stroke="#000" stroke-width="1"/>
<text x="1001.1" y="830.2" font-family="Liberation Mono" font-size="14.9" text-anchor="end" font-weight="normal" fill="#000" stroke="#000" stroke-width="0.2">50</text>
<text x="1001.1" y="816.3" font-family="Liberation Mono" font-size="14.9" text-anchor="end" font-weight="normal" fill="#000" stroke="#000" stroke-width="0.2">100</text>
<text x="1001.1" y="802.4" font-family="Liberation Mono" font-size="14.9" text-anchor="end" font-weight="normal" fill="#000" stroke="#000" stroke-width="0.2">150</text>
<text x="1001.1" y="788.5" font-family="Liberation Mono" font-size="14.9" text-anchor="end" font-weight="normal" fill="#000" stroke="#000" stroke-width="0.2">200</text>
<text x="1001.1" y="774.6" font-family="Liberation Mono" font-size="14.9" text-anchor="end" font-weight="normal" fill="#000" stroke="#000" stroke-width="0.2">250</text>
<text x="1001.1" y="760.7" font-family="Liberation Mono" font-size="14.9" text-anchor="end" font-weight="normal" fill="#000" stroke="#000" stroke-width="0.2">300</text>
<line x1="1003.5" y1="840" x2="1003.5" y2="926" stroke="#000" stroke-width="1"/>
<path d="M1003.5 925.5h7.5M1003.5 921.5h7.5M1003.5 918.5h7.5M1003.5 915.5h7.5M1003.5 911.5h7.5M1003.5 908.5h7.5M1003.5 904.5h7.5M1003.5 901.5h7.5M1003.5 898.5h7.5M1003.5 894.5h7.5M1003.5 891.5h7.5M1003.5 887.5h7.5M1003.5 884.5h7.5M1003.5 881.5h7.5M1003.5 877.5h7.5M1003.5 874.5h7.5M1003.5 870.5h7.5M1003.5 867.5h7.5M1003.5 864.5h7.5M1003.5 860.5h7.5M1003.5 857.5h7.5M1003.5 854.5h7.5M1003.5 850.5h7.5M1003.5 847.5h7.5M1003.5 843.5h7.5M1003.5 840.5h7.5M1003.5 925.5h22.5M1003.5 908.5h22.5M1003.5 891.5h22.5M1003.5 874.5h22.5M1003.5 857.5h22.5M1003.5 840.5h22.5" stroke="#000" stroke-width="1" fill="none"/>
<line x1="1636.5" y1="840" x2="1636.5" y2="926" stroke="#000" stroke-width="1"/>
<line x1="1003.5" y1="840.5" x2="1636.5" y2="840.5" stroke="#000" stroke-width="1"/>
<line x1="1003.5" y1="926.5" x2="1636.5" y2="926.5" stroke="#000" stroke-width="1"/>
<line x1="1004.5" y1="926.5" x2="1004.5" y2="915.5" stroke="#000" stroke-width="1"/>
<line x1="1028.5" y1="926.5" x2="1028.5" y2="923.5" stroke="#000" stroke-width="1"/>
<line x1="1051.5" y1="926.5" x2="1051.5" y2="923.5" stroke="#000" stroke-width="1"/>
<line x1="1075.5" y1="926.5" x2="1075.5" y2="915.5" stroke="#000" stroke-width="1"/>
<line x1="1098.5" y1="926.5" x2="1098.5" y2="923.5" stroke="#000" stroke-width="1"/>
<line x1="1122.5" y1="926.5" x2="1122.5" y2="923.5" stroke="#000" stroke-width="1"/>
<line x1="1145.5" y1="926.5" x2="1145.5" y2="915.5" stroke="#000" stroke-width="1"/>
<line x1="1168.5" y1="926.5" x2="1168.5" y2="923.5" stroke="#000" stroke-width="1"/>
<line x1="1192.5" y1="926.5" x2="1192.5" y2="923.5" stroke="#000" stroke-width="1"/>
<line x1="1215.5" y1="926.5" x2="1215.5" y2="915.5" stroke="#000" stroke-width="1"/>
<line x1="1239.5" y1="926.5" x2="1239.5" y2="923.5" stroke="#000" stroke-width="1"/>
<line x1="1262.5" y1="926.5" x2="1262.5" y2="923.5" stroke="#000" stroke-width="1"/>
<line x1="1286.5" y1="926.5" x2="1286.5" y2="915.5" stroke="#000" stroke-width="1"/>
<line x1="1309.5" y1="926.5" x2="1309.5" y2="923.5" stroke="#000" stroke-width="1"/>
<line x1="1333.5" y1="926.5" x2="1333.5" y2="923.5" stroke="#000" stroke-width="1"/>
<line x1="1356.5" y1="926.5" x2="1356.5" y2="915.5" stroke="#000" stroke-width="1"/>
<line x1="1379.5" y1="926.5" x2="1379.5" y2="923.5" stroke="#000" stroke-width="1"/>
<line x1="1403.5" y1="926.5" x2="1403.5" y2="923.5" stroke="#000" stroke-width="1"/>
<line x1="1426.5" y1="926.5" x2="1426.5" y2="915.5" stroke="#000" stroke-width="1"/>
<line x1="1450.5" y1="926.5" x2="1450.5" y2="923.5" stroke="#000" stroke-width="1"/>
<line x1="1473.5" y1="926.5" x2="1473.5" y2="923.5" stroke="#000" stroke-width="1"/>
<line x1="1497.5" y1="926.5" x2="1497.5" y2="915.5" stroke="#000" stroke-width="1"/>
<line x1="1520.5" y1="926.5" x2="1520.5" y2="923.5" stroke="#000" stroke-width="1"/>
<line x1="1544.5" y1="926.5" x2="1544.5" y2="923.5" stroke="#000" stroke-width="1"/>
<line x1="1567.5" y1="926.5" x2="1567.5" y2="915.5" stroke="#000" stroke-width="1"/>
<line x1="1590.5" y1="926.5" x2="1590.5" y2="923.5" stroke="#000" stroke-width="1"/>
<line x1="1614.5" y1="926.5" x2="1614.5" y2="923.5" stroke="#000" stroke-width="1"/>
<text x="1001.1" y="913.2" font-family="Liberation Mono" font-size="14.9" text-anchor="end" font-weight="normal" fill="#000" stroke="#000" stroke-width="0.2">10</text>
<text x="1001.1" y="896.3" font-family="Liberation Mono" font-size="14.9" text-anchor="end" font-weight="normal" fill="#000" stroke="#000" stroke-width="0.2">20</text>
<text x="1001.1" y="879.3" font-family="Liberation Mono" font-size="14.9" text-anchor="end" font-weight="normal" fill="#000" stroke="#000" stroke-width="0.2">30</text>
<text x="1001.1" y="862.4" font-family="Liberation Mono" font-size="14.9" text-anchor="end" font-weight="normal" fill="#000" stroke="#000" stroke-width="0.2">40</text>
<text x="1001.1" y="845.4" font-family="Liberation Mono" font-size="14.9" text-anchor="end" font-weight="normal" fill="#000" stroke="#000" stroke-width="0.2">50</text>
<line x1="1003.5" y1="926" x2="1003.5" y2="1010.5" stroke="#000" stroke-width="1"/>
<path d="M1003.5 947.5h7.5M1003.5 943.5h7.5M1003.5 939.5h7.5M1003.5 934.5h7.5M1003.5 930.5h7.5M1003.5 926.5h7.5M1003.5 1010.5h22.5M1003.5 989.5h22.5M1003.5 968.5h22.5M1003.5 947.5h22.5M1003.5 926.5h22.5" stroke="#000" stroke-width="1" fill="none"/>
<line x1="1636.5" y1="926" x2="1636.5" y2="1010.5" stroke="#000" stroke-width="1"/>
<line x1="1003.5" y1="926.5" x2="1636.5" y2="926.5" stroke="#000" stroke-width="1"/>
<line x1="1003.5" y1="1010.5" x2="1636.5" y2="1010.5" stroke="#000" stroke-width="1"/>
<line x1="1004.5" y1="1010.5" x2="1004.5" y2="999.5" stroke="#000" stroke-width="1"/>
<line x1="1028.5" y1="1010.5" x2="1028.5" y2="1007.5" stroke="#000" stroke-width="1"/>
<line x1="1051.5" y1="1010.5" x2="1051.5" y2="1007.5" stroke="#000" stroke-width="1"/>
<line x1="1075.5" y1="1010.5" x2="1075.5" y2="999.5" stroke="#000" stroke-width="1"/>
<line x1="1098.5" y1="1010.5" x2="1098.5" y2="1007.5" stroke="#000" stroke-width="1"/>
<line x1="1122.5" y1="1010.5" x2="1122.5" y2="1007.5" stroke="#000" stroke-width="1"/>
<line x1="1145.5" y1="1010.5" x2="1145.5" y2="999.5" stroke="#000" stroke-width="1"/>
<line x1="1168.5" y1="1010.5" x2="1168.5" y2="1007.5" stroke="#000" stroke-width="1"/>
<line x1="1192.5" y1="1010.5" x2="1192.5" y2="1007.5" stroke="#000" stroke-width="1"/>
<line x1="1215.5" y1="1010.5" x2="1215.5" y2="999.5" stroke="#000" stroke-width="1"/>
<line x1="1239.5" y1="1010.5" x2="1239.5" y2="1007.5" stroke="#000" stroke-width="1"/>
<line x1="1262.5" y1="1010.5" x2="1262.5" y2="1007.5" stroke="#000" stroke-width="1"/>
<line x1="1286.5" y1="1010.5" x2="1286.5" y2="999.5" stroke="#000" stroke-width="1"/>
<line x1="1309.5" y1="1010.5" x2="1309.5" y2="1007.5" stroke="#000" stroke-width="1"/>
<line x1="1333.5" y1="1010.5" x2="1333.5" y2="1007.5" stroke="#000" stroke-width="1"/>
<line x1="1356.5" y1="1010.5" x2="1356.5" y2="999.5" stroke="#000" stroke-width="1"/>
<line x1="1379.5" y1="1010.5" x2="1379.5" y2="1007.5" stroke="#000" stroke-width="1"/>
<line x1="1403.5" y1="1010.5" x2="1403.5" y2="1007.5" stroke="#000" stroke-width="1"/>
<line x1="1426.5" y1="1010.5" x2="1426.5" y2="999.5" stroke="#000" stroke-width="1"/>
<line x1="1450.5" y1="1010.5" x2="1450.5" y2="1007.5" stroke="#000" stroke-width="1"/>
<line x1="1473.5" y1="1010.5" x2="1473.5" y2="1007.5" stroke="#000" stroke-width="1"/>
<line x1="1497.5" y1="1010.5" x2="1497.5" y2="999.5" stroke="#000" stroke-width="1"/>
<line x1="1520.5" y1="1010.5" x2="1520.5" y2="1007.5" stroke="#000" stroke-width="1"/>
<line x1="1544.5" y1="1010.5" x2="1544.5" y2="1007.5" stroke="#000" stroke-width="1"/>
<line x1="1567.5" y1="1010.5" x2="1567.5" y2="999.5" stroke="#000" stroke-width="1"/>
<line x1="1590.5" y1="1010.5" x2="1590.5" y2="1007.5" stroke="#000" stroke-width="1"/>
<line x1="1614.5" y1="1010.5" x2="1614.5" y2="1007.5" stroke="#000" stroke-width="1"/>
<text x="1001.1" y="1015.2" font-family="Liberation Mono" font-size="14.9" text-anchor="end" font-weight="normal" fill="#000" stroke="#000" stroke-width="0.2">0</text>
<text x="1001.1" y="994.3" font-family="Liberation Mono" font-size="14.9" text-anchor="end" font-weight="normal" fill="#000" stroke="#000" stroke-width="0.2">100</text>
<text x="1001.1" y="973.4" font-family="Liberation Mono" font-size="14.9" text-anchor="end" font-weight="normal" fill="#000" stroke="#000" stroke-width="0.2">200</text>
<text x="1001.1" y="952.5" font-family="Liberation Mono" font-size="14.9" text-anchor="end" font-weight="normal" fill="#000" stroke="#000" stroke-width="0.2">300</text>
<text x="1001.1" y="931.6" font-family="Liberation Mono" font-size="14.9" text-anchor="end" font-weight="normal" fill="#000" stroke="#000" stroke-width="0.2">400</text>
<polyline points="1004.8,67.5 1005.8,66.7 1006.8,64.8 1007.8,62.7 1008.8,61.2 1009.8,61 1010.8,61 1011.8,60.3 1012.8,60.4 1013.8,60.1 1014.8,59.2 1015.8,59.3 1016.8,59.1 1018.8,59.1 1019.8,58.7 1020.8,58.3 1021.8,58.4 1022.8,57.5 1023.8,57.1 1024.8,57.4 1025.8,57.6 1026.8,58.1 1027.8,58.1 1028.8,57.9 1029.8,58.2 1030.8,57.4 1031.8,57.1 1032.8,57.8 1033.8,57.9 1034.8,57.9 1035.8,57.7 1036.8,57.1 1037.8,57.1 1038.8,56.9 1039.8,56.8 1040.8,57.1 1041.8,56.8 1042.8,57.5 1043.8,57.2 1044.8,56.8 1045.8,57.2 1047.8,57.2 1048.8,57.8 1049.8,58.1 1050.8,58.5 1051.8,58.9 1052.8,58.4 1053.8,58.4 1054.8,58.2 1055.8,58 1056.8,57.9 1057.8,58 1058.8,58.2 1059.8,58.6 1060.8,59.2 1061.8,59.4 1062.8,58.6 1063.8,58.3 1064.8,58.9 1065.8,59.3 1066.8,59.1 1067.8,58.6 1068.8,58.1 1069.8,57.7 1070.8,58.6 1071.8,58.9 1073.8,58.9 1074.8,58.6 1075.8,58.6 1076.8,58.3 1077.8,58.7 1078.8,58.8 1079.8,58.8 1080.8,58.3 1081.8,57.9 1082.8,57.6 1083.8,58.3 1084.8,58.9 1085.8,59 1086.8,59.1 1087.8,58.8 1088.8,58.7 1089.8,58.3 1090.8,59.2 1091.8,60.2 1092.8,63.3 1093.8,67.4 1094.8,65.5 1095.8,62.1 1096.8,59.9 1097.8,59.5 1098.8,58.5 1100.8,58.5 1101.8,58.3 1102.8,58.2 1103.8,58 1104.8,58.2 1105.8,58.4 1106.8,58.5 1107.8,57.9 1108.8,58.6 1109.8,58.6 1110.8,59.9 1111.8,64.3 1112.8,75.5 1113.8,108.3 1114.8,112.3 1636.8,112.3" fill="none" stroke="#f0a800" stroke-width="1.6" stroke-linejoin="miter"/>
<polyline points="1004.8,124.6 1005.8,124.8 1006.8,124.8 1007.8,121.2 1008.8,121.1 1009.8,120.9 1010.8,120.7 1011.8,120.9 1012.8,120.2 1013.8,119.3 1014.8,118.5 1015.8,117.6 1016.8,117.1 1017.8,116.7 1018.8,116.2 1019.8,116.4 1020.8,116.3 1021.8,116.4 1022.8,116.3 1023.8,116.2 1024.8,116.3 1025.8,116.4 1026.8,116.3 1027.8,116.4 1028.8,116.5 1029.8,116.4 1030.8,116.4 1031.8,116.3 1032.8,116.4 1033.8,116.6 1034.8,116.7 1035.8,116.8 1036.8,116.7 1037.8,116.8 1038.8,116.8 1039.8,116.7 1040.8,116.5 1041.8,116.3 1042.8,116.3 1043.8,116.5 1044.8,116.7 1045.8,116.7 1046.8,116.6 1047.8,116.5 1048.8,116.4 1049.8,116.6 1050.8,116.5 1051.8,116.6 1053.8,116.6 1054.8,116.5 1055.8,116.4 1056.8,116.3 1057.8,116.5 1058.8,116.3 1059.8,116.4 1060.8,116.5 1061.8,116.4 1062.8,116.3 1063.8,116.6 1064.8,116.5 1065.8,116.7 1066.8,116.6 1067.8,116.7 1068.8,116.6 1069.8,116.6 1070.8,116.5 1071.8,116.6 1072.8,116.4 1073.8,116.4 1074.8,116.5 1075.8,116.7 1076.8,116.4 1077.8,116.6 1078.8,116.4 1080.8,116.4 1081.8,116.3 1082.8,116.5 1083.8,116.4 1085.8,116.4 1086.8,116.6 1087.8,116.4 1088.8,116.4 1089.8,117.1 1090.8,117.5 1091.8,118.3 1092.8,123.5 1093.8,129.4 1094.8,128 1095.8,123.3 1096.8,120.5 1097.8,119.2 1098.8,117.7 1099.8,116.6 1100.8,116.6 1101.8,116.4 1102.8,116.4 1103.8,116.3 1104.8,116.5 1105.8,116.6 1107.8,116.6 1108.8,116.4 1109.8,120.1 1110.8,124.1 1111.8,128.3 1112.8,132.3 1113.8,170.5" fill="none" stroke="#ff0000" stroke-width="1.6" stroke-linejoin="miter"/>
<polyline points="1004.8,134.8 1005.8,134.6 1006.8,131.8 1007.8,131.7 1011.8,131.7 1012.8,131.6 1014.8,131.6 1015.8,131.2 1016.8,130.9 1106.8,130.9 1107.8,131.5 1108.8,132.2 1109.8,132.8 1110.8,133.7 1111.8,134.7 1112.8,135.8 1113.8,170.5 1114.8,172.1 1636.8,172.1" fill="none" stroke="#0000ff" stroke-width="1.8" stroke-linejoin="miter"/>
<polyline points="1004.8,176.6 1133.8,176.6 1134.8,209.4 1636.8,209.4" fill="none" stroke="#1e88ee" stroke-width="1.5" stroke-linejoin="miter"/>
<polygon points="1004.8,240.6 1005.8,240.7 1006.8,240.6 1007.8,240.8 1008.8,241.5 1009.8,241.8 1010.8,240.6 1011.8,241.1 1012.8,241.9 1013.8,240.8 1014.8,240.6 1015.8,241.3 1016.8,241.4 1017.8,242.1 1018.8,241.8 1019.8,241.9 1020.8,240.3 1021.8,240.6 1022.8,240.5 1023.8,241.9 1024.8,241.3 1025.8,240.5 1026.8,241.6 1027.8,240.2 1028.8,240.2 1029.8,241.6 1030.8,242 1031.8,241.4 1032.8,240.2 1033.8,241.6 1034.8,241.9 1035.8,240.2 1036.8,240.1 1037.8,240.9 1038.8,240.1 1039.8,240.5 1040.8,241 1041.8,241.4 1042.8,240.8 1043.8,241.1 1044.8,240.3 1045.8,242 1046.8,240.5 1047.8,240.8 1048.8,241 1049.8,241.2 1050.8,241.9 1051.8,241.6 1052.8,241 1053.8,242.1 1054.8,241.3 1055.8,241.6 1056.8,241.7 1057.8,240.4 1058.8,240.8 1059.8,241.4 1060.8,240.2 1061.8,240.6 1062.8,241.7 1063.8,241.9 1064.8,241.6 1065.8,240.7 1066.8,240.6 1067.8,241 1068.8,241.6 1069.8,240.2 1070.8,241.4 1071.8,241.6 1072.8,242 1073.8,240.7 1074.8,240.6 1075.8,241.6 1076.8,241.5 1077.8,241.6 1078.8,240.5 1079.8,240.7 1080.8,240.3 1081.8,241.1 1082.8,241.5 1083.8,241.3 1084.8,240.6 1085.8,241.6 1086.8,241.3 1087.8,240.5 1088.8,241.7 1089.8,240.8 1090.8,240.8 1091.8,240.5 1092.8,240.8 1093.8,241.5 1094.8,241.8 1095.8,240.2 1096.8,240.9 1097.8,240.3 1098.8,240.3 1099.8,240.9 1100.8,240.3 1101.8,240.5 1102.8,241.9 1103.8,241.6 1104.8,241.2 1105.8,241.9 1106.8,240.2 1107.8,240.6 1108.8,241.4 1109.8,240.9 1110.8,241.7 1111.8,240.3 1111.8,243.7 1110.8,245 1109.8,244 1107.8,244 1106.8,244.5 1105.8,244.6 1104.8,244.1 1103.8,243.7 1102.8,245.1 1101.8,243.6 1100.8,244.6 1099.8,244.4 1098.8,245.1 1097.8,245 1096.8,243.5 1095.8,243.9 1094.8,244 1093.8,244.1 1092.8,243.8 1091.8,243.7 1090.8,244.5 1089.8,245.4 1088.8,243.8 1087.8,244.2 1086.8,243.9 1085.8,243.9 1084.8,244.2 1083.8,243.9 1082.8,243.5 1081.8,244.2 1080.8,243.8 1079.8,244.3 1078.8,245.3 1077.8,244.6 1076.8,244.9 1075.8,245.3 1074.8,244.4 1073.8,244.7 1072.8,244.4 1071.8,244 1070.8,244.3 1069.8,244.8 1068.8,245.4 1067.8,244.9 1066.8,244.8 1065.8,245.4 1064.8,244.2 1063.8,244.8 1062.8,244 1061.8,245.1 1060.8,244.7 1059.8,244.2 1058.8,244.8 1057.8,243.9 1056.8,244.6 1055.8,244.7 1054.8,244.7 1053.8,243.8 1052.8,243.6 1051.8,244.7 1050.8,244 1049.8,243.6 1048.8,245.1 1047.8,244.9 1046.8,245.3 1045.8,245.5 1044.8,244.3 1043.8,244.8 1042.8,245.4 1041.8,244.6 1040.8,244 1039.8,244.2 1038.8,244.7 1037.8,243.9 1036.8,245.4 1035.8,243.8 1034.8,244.5 1033.8,243.8 1032.8,244.8 1031.8,244.2 1030.8,243.9 1029.8,243.6 1028.8,245.4 1027.8,244.5 1026.8,245.1 1025.8,244.5 1024.8,244.2 1023.8,245.1 1022.8,243.6 1021.8,245.4 1020.8,244.1 1019.8,244.5 1018.8,244.9 1017.8,245.1 1016.8,243.7 1015.8,244.9 1014.8,245 1013.8,245.4 1012.8,243.7 1011.8,245.1 1010.8,243.8 1009.8,244.7 1008.8,243.6 1007.8,244.4 1006.8,245 1005.8,245.1 1004.8,243.7" fill="#3a5fd0" stroke="none"/>
<path d="M1004 246h2v2h-2zM1006 243h2v2h-2zM1006 240h2v2h-2zM1007 244h2v2h-2zM1009 241h2v2h-2zM1010 244h2v2h-2zM1011 241h2v2h-2zM1012 241h2v2h-2zM1013 240h2v2h-2zM1016 244h2v2h-2zM1016 243h2v2h-2zM1017 240h2v2h-2zM1018 242h2v2h-2zM1019 241h2v2h-2zM1019 242h2v2h-2zM1022 243h2v2h-2zM1023 244h2v2h-2zM1022 240h2v2h-2zM1023 241h2v2h-2zM1025 244h2v2h-2zM1025 242h2v2h-2zM1027 243h2v2h-2zM1028 241h2v2h-2zM1029 241h2v2h-2zM1029 243h2v2h-2zM1030 244h2v2h-2zM1031 246h2v2h-2zM1034 241h2v2h-2zM1035 243h2v2h-2zM1037 245h2v2h-2zM1036 243h2v2h-2zM1038 239h2v2h-2zM1038 246h2v2h-2zM1040 242h2v2h-2zM1042 245h2v2h-2zM1043 242h2v2h-2zM1043 244h2v2h-2zM1045 240h2v2h-2zM1046 243h2v2h-2zM1046 244h2v2h-2zM1049 242h2v2h-2zM1049 245h2v2h-2zM1050 245h2v2h-2zM1051 242h2v2h-2zM1053 241h2v2h-2zM1053 246h2v2h-2zM1054 245h2v2h-2zM1055 245h2v2h-2zM1055 243h2v2h-2zM1057 245h2v2h-2zM1058 246h2v2h-2zM1060 241h2v2h-2zM1059 240h2v2h-2zM1060 244h2v2h-2zM1063 245h2v2h-2zM1063 242h2v2h-2zM1065 243h2v2h-2zM1066 242h2v2h-2zM1067 242h2v2h-2zM1068 245h2v2h-2zM1068 244h2v2h-2zM1069 247h2v2h-2zM1071 241h2v2h-2zM1073 246h2v2h-2zM1073 240h2v2h-2zM1074 242h2v2h-2zM1075 242h2v2h-2zM1076 246h2v2h-2zM1076 244h2v2h-2zM1078 243h2v2h-2zM1079 246h2v2h-2zM1080 246h2v2h-2zM1080 244h2v2h-2zM1082 241h2v2h-2zM1082 243h2v2h-2zM1084 244h2v2h-2zM1084 243h2v2h-2zM1086 242h2v2h-2zM1087 245h2v2h-2zM1088 242h2v2h-2zM1088 241h2v2h-2zM1090 241h2v2h-2zM1091 241h2v2h-2zM1091 244h2v2h-2zM1092 245h2v2h-2zM1094 244h2v2h-2zM1094 240h2v2h-2zM1097 241h2v2h-2zM1097 242h2v2h-2zM1098 244h2v2h-2zM1099 243h2v2h-2zM1099 246h2v2h-2zM1101 244h2v2h-2zM1102 243h2v2h-2zM1102 242h2v2h-2zM1103 241h2v2h-2zM1105 243h2v2h-2zM1107 243h2v2h-2zM1107 241h2v2h-2zM1108 239h2v2h-2zM1110 242h2v2h-2zM1111 245h2v2h-2zM1112 241h2v2h-2z" fill="#3a5fd0" stroke="none"/>
<polygon points="1004.8,238.6 1005.8,237.1 1006.8,236.9 1007.8,237.5 1008.8,236.3 1009.8,236.4 1010.8,237.8 1011.8,237 1012.8,237.5 1013.8,238.9 1014.8,236.4 1015.8,236.3 1016.8,238.2 1017.8,236.5 1018.8,236.8 1019.8,238.7 1020.8,237.8 1021.8,238.1 1022.8,238.9 1023.8,238.9 1024.8,237.9 1025.8,237.8 1026.8,236.8 1027.8,236.3 1028.8,238.3 1029.8,238.5 1030.8,238.8 1031.8,236.4 1032.8,238.9 1033.8,238.7 1034.8,236.7 1035.8,237.8 1036.8,236.5 1037.8,238.1 1038.8,236.9 1039.8,236.8 1040.8,238.7 1041.8,237 1042.8,236.5 1043.8,237 1044.8,238.4 1045.8,238.8 1046.8,237.4 1047.8,236.7 1048.8,236.8 1049.8,238.2 1050.8,238.4 1051.8,238.2 1052.8,237.2 1053.8,237.9 1054.8,237.4 1055.8,236.9 1056.8,236.2 1057.8,236.5 1058.8,237.9 1059.8,236.7 1060.8,237.8 1061.8,236.3 1062.8,237 1063.8,238.2 1064.8,236.5 1065.8,238.3 1066.8,236.3 1067.8,239.2 1068.8,238.5 1069.8,237.7 1070.8,238 1071.8,238.8 1072.8,238.6 1073.8,237.5 1074.8,236.4 1075.8,237.9 1076.8,238.1 1077.8,237.3 1078.8,237.3 1079.8,238.1 1080.8,236.3 1081.8,236.3 1082.8,238.8 1083.8,238.1 1084.8,236.8 1085.8,238 1086.8,236.9 1087.8,237.4 1088.8,237.5 1089.8,239 1090.8,238.1 1091.8,238.8 1092.8,238.5 1093.8,237.5 1094.8,239.2 1095.8,238 1096.8,237.8 1097.8,239 1098.8,238.2 1099.8,237.1 1100.8,237.9 1101.8,236.9 1102.8,238.7 1103.8,236.9 1104.8,238.7 1105.8,237.7 1106.8,239.2 1107.8,237.7 1108.8,239.1 1109.8,238.9 1110.8,237.2 1111.8,236.8 1111.8,241.5 1110.8,244.2 1109.8,241.9 1108.8,243.3 1107.8,243.6 1106.8,241.6 1105.8,242.1 1104.8,243.8 1103.8,243.2 1102.8,242.8 1101.8,243 1100.8,244 1099.8,243 1098.8,243.8 1097.8,242.4 1096.8,244.4 1095.8,244.2 1094.8,242.9 1093.8,243 1092.8,243.7 1091.8,244.2 1090.8,243.7 1089.8,243.3 1088.8,244.1 1087.8,242.4 1086.8,242.4 1085.8,242.6 1084.8,243.5 1083.8,243.5 1082.8,241.8 1081.8,244 1080.8,242.5 1079.8,244 1078.8,243.6 1077.8,242.1 1076.8,242.8 1075.8,244.2 1074.8,243.1 1073.8,243.5 1072.8,242.3 1071.8,242.6 1070.8,244.2 1069.8,242.2 1068.8,242.5 1067.8,241.9 1066.8,242.7 1065.8,244.3 1064.8,241.7 1063.8,243.5 1062.8,242.9 1061.8,243.3 1060.8,244.3 1059.8,243.4 1058.8,241.6 1057.8,242.8 1056.8,243.2 1055.8,243 1054.8,241.5 1053.8,243 1052.8,243.1 1051.8,243.1 1050.8,242.8 1049.8,241.7 1048.8,242.9 1047.8,242.9 1046.8,243.7 1045.8,242.9 1044.8,241.5 1043.8,243.7 1042.8,241.5 1041.8,244 1040.8,242.9 1039.8,242 1038.8,242.1 1037.8,241.5 1036.8,241.8 1035.8,242.5 1034.8,242.7 1033.8,242.6 1032.8,244.1 1031.8,242.3 1030.8,242.6 1029.8,242.6 1028.8,244 1027.8,241.5 1026.8,242.5 1025.8,241.7 1024.8,243.3 1023.8,242.5 1022.8,243.3 1021.8,242 1020.8,244.1 1019.8,243.3 1018.8,243.7 1017.8,242.4 1016.8,242.9 1015.8,243 1014.8,242.2 1013.8,244.1 1012.8,242.7 1011.8,242.4 1010.8,242.5 1009.8,242.9 1008.8,244.2 1007.8,241.6 1006.8,243.6 1005.8,241.5 1004.8,242.1" fill="#00cc00" stroke="none"/>
<polygon points="1112.4,240.8 1637.4,240.8 1637.4,242.4 1112.4,242.4" fill="#3a5fd0" stroke="none"/>
<polygon points="1112.4,239.3 1637.4,239.3 1637.4,240.8 1112.4,240.8" fill="#00cc00" stroke="none"/>
<polygon points="1004.8,286.7 1005.8,286.8 1006.8,286.9 1007.8,287.1 1008.8,287 1010.8,287 1011.8,286.5 1012.8,286.7 1013.8,286.4 1014.8,287.1 1015.8,286.8 1016.8,287.2 1017.8,286.6 1018.8,287.2 1019.8,287.2 1020.8,286.4 1021.8,286.9 1022.8,286.7 1023.8,287.2 1024.8,286.5 1025.8,287.1 1026.8,286.9 1027.8,286.8 1028.8,286.4 1029.8,286.6 1030.8,286.5 1031.8,287.3 1032.8,287.3 1033.8,286.5 1034.8,286.6 1035.8,286.5 1036.8,286.6 1037.8,286.9 1038.8,286.5 1039.8,287 1040.8,286.4 1041.8,286.5 1042.8,287.2 1043.8,287.1 1044.8,286.5 1045.8,287 1046.8,286.9 1047.8,286.8 1048.8,286.9 1049.8,287.3 1050.8,286.5 1051.8,287 1052.8,286.9 1053.8,287.1 1054.8,287.3 1055.8,287.1 1056.8,286.9 1057.8,286.5 1058.8,287.1 1059.8,286.7 1060.8,287.1 1061.8,286.8 1062.8,287 1063.8,287.1 1064.8,287.1 1065.8,286.4 1066.8,286.7 1068.8,286.7 1069.8,286.4 1070.8,287.1 1071.8,287.3 1072.8,286.7 1073.8,287 1074.8,287 1075.8,286.9 1076.8,286.8 1077.8,287.4 1078.8,287 1081.8,287 1082.8,287.3 1083.8,286.9 1084.8,287.2 1085.8,286.4 1086.8,286.9 1087.8,287.3 1088.8,286.5 1089.8,287 1090.8,286.9 1091.8,286.8 1092.8,287.2 1093.8,287.3 1094.8,286.4 1095.8,287.3 1096.8,286.8 1097.8,287.3 1098.8,287.3 1099.8,286.6 1100.8,287.1 1101.8,286.9 1102.8,287.1 1103.8,286.5 1104.8,286.6 1105.8,286.4 1106.8,287 1107.8,287.3 1108.8,286.4 1109.8,287.1 1110.8,287.3 1111.8,286.6 1111.8,288.8 1110.8,288.3 1109.8,289 1108.8,289.1 1107.8,288.8 1106.8,289.1 1105.8,288.5 1104.8,288.6 1103.8,288.4 1102.8,289 1101.8,289 1100.8,289.1 1099.8,288.8 1098.8,288.9 1097.8,288.8 1096.8,288.7 1095.8,288.6 1094.8,289.1 1093.8,288.9 1092.8,288.8 1091.8,288.6 1090.8,288.7 1089.8,288.9 1088.8,289.1 1087.8,288.6 1086.8,289.1 1085.8,288.7 1084.8,288.6 1083.8,288.7 1082.8,288.4 1081.8,288.3 1080.8,288.3 1079.8,288.6 1078.8,288.5 1077.8,288.3 1076.8,288.6 1075.8,288.8 1074.8,288.3 1073.8,288.7 1072.8,288.7 1071.8,288.4 1070.8,288.3 1069.8,289 1068.8,288.5 1067.8,288.4 1066.8,288.3 1065.8,289 1064.8,288.2 1063.8,288.9 1062.8,288.6 1061.8,289 1060.8,288.7 1059.8,288.3 1058.8,288.2 1057.8,288.5 1056.8,289 1055.8,288.3 1054.8,288.4 1053.8,288.6 1052.8,288.6 1051.8,289.1 1050.8,288.9 1049.8,288.8 1048.8,289.1 1047.8,288.3 1046.8,288.9 1045.8,289 1044.8,288.2 1043.8,288.7 1042.8,288.7 1041.8,288.8 1040.8,288.4 1039.8,288.6 1038.8,289 1037.8,288.3 1036.8,288.2 1035.8,288.9 1034.8,288.6 1033.8,288.5 1032.8,288.2 1031.8,288.6 1030.8,288.8 1029.8,288.3 1028.8,288.8 1027.8,289.1 1026.8,289 1025.8,288.7 1024.8,288.5 1023.8,288.7 1022.8,288.9 1021.8,289 1020.8,288.5 1019.8,288.7 1018.8,288.3 1017.8,288.4 1016.8,288.7 1015.8,289 1014.8,289.2 1013.8,288.9 1012.8,288.6 1011.8,288.5 1010.8,289.1 1009.8,289.1 1008.8,289 1007.8,288.7 1006.8,288.9 1005.8,288.7 1004.8,288.6" fill="#00cc00" stroke="none"/>
<path d="M1005 298h2v2h-2zM1006 316h2v2h-2zM1006 297h2v2h-2zM1004 306h2v2h-2zM1004 305h2v2h-2zM1005 313h2v2h-2zM1005 312h2v2h-2zM1004 294h2v2h-2zM1004 307h2v2h-2zM1006 308h2v2h-2zM1004 303h2v2h-2zM1005 309h2v2h-2zM1006 296h2v2h-2zM1005 305h2v2h-2zM1006 300h2v2h-2zM1004 304h2v2h-2zM1006 310h2v2h-2zM1006 314h2v2h-2zM1005 310h2v2h-2zM1005 304h2v2h-2zM1007 305h2v2h-2zM1006 313h2v2h-2zM1005 300h2v2h-2zM1006 307h2v2h-2zM1006 298h2v2h-2zM1006 302h2v2h-2zM1007 308h2v2h-2zM1005 303h2v2h-2zM1006 306h2v2h-2zM1006 304h2v2h-2zM1007 306h2v2h-2zM1007 310h2v2h-2zM1007 313h2v2h-2zM1008 307h2v2h-2zM1008 308h2v2h-2zM1006 299h2v2h-2zM1007 301h2v2h-2zM1007 309h2v2h-2zM1007 299h2v2h-2zM1008 315h2v2h-2zM1006 312h2v2h-2zM1006 319h2v2h-2zM1008 305h2v2h-2zM1008 309h2v2h-2zM1008 311h2v2h-2zM1008 318h2v2h-2zM1008 316h2v2h-2zM1009 310h2v2h-2zM1009 313h2v2h-2zM1008 313h2v2h-2zM1009 318h2v2h-2zM1009 314h2v2h-2zM1010 311h2v2h-2zM1010 318h2v2h-2zM1008 303h2v2h-2zM1009 309h2v2h-2zM1009 319h2v2h-2zM1010 312h2v2h-2zM1009 316h2v2h-2zM1009 307h2v2h-2zM1010 314h2v2h-2zM1009 312h2v2h-2zM1010 304h2v2h-2zM1009 315h2v2h-2zM1010 313h2v2h-2zM1010 309h2v2h-2zM1010 315h2v2h-2zM1010 310h2v2h-2zM1010 325h2v2h-2zM1010 303h2v2h-2zM1010 317h2v2h-2zM1010 300h2v2h-2zM1010 320h2v2h-2zM1010 308h2v2h-2zM1011 309h2v2h-2zM1011 300h2v2h-2zM1011 305h2v2h-2zM1012 308h2v2h-2zM1011 318h2v2h-2zM1011 308h2v2h-2zM1010 321h2v2h-2zM1012 312h2v2h-2zM1011 319h2v2h-2zM1013 310h2v2h-2zM1012 319h2v2h-2zM1012 316h2v2h-2zM1012 302h2v2h-2zM1012 310h2v2h-2zM1012 306h2v2h-2zM1012 307h2v2h-2zM1012 317h2v2h-2zM1011 306h2v2h-2zM1011 299h2v2h-2zM1013 304h2v2h-2zM1011 314h2v2h-2zM1013 316h2v2h-2zM1012 314h2v2h-2zM1012 315h2v2h-2zM1013 308h2v2h-2zM1013 311h2v2h-2zM1014 308h2v2h-2zM1013 322h2v2h-2zM1012 323h2v2h-2zM1012 318h2v2h-2zM1013 317h2v2h-2zM1014 313h2v2h-2zM1014 305h2v2h-2zM1014 316h2v2h-2zM1014 322h2v2h-2zM1015 314h2v2h-2zM1014 317h2v2h-2zM1014 319h2v2h-2zM1015 312h2v2h-2zM1013 313h2v2h-2zM1015 315h2v2h-2zM1015 317h2v2h-2zM1013 296h2v2h-2zM1013 315h2v2h-2zM1016 317h2v2h-2zM1015 311h2v2h-2zM1014 321h2v2h-2zM1015 301h2v2h-2zM1014 312h2v2h-2zM1016 318h2v2h-2zM1016 315h2v2h-2zM1016 314h2v2h-2zM1014 324h2v2h-2zM1014 310h2v2h-2zM1015 313h2v2h-2zM1015 305h2v2h-2zM1015 320h2v2h-2zM1015 319h2v2h-2zM1017 312h2v2h-2zM1016 321h2v2h-2zM1017 315h2v2h-2zM1016 311h2v2h-2zM1016 312h2v2h-2zM1015 306h2v2h-2zM1016 305h2v2h-2zM1017 309h2v2h-2zM1017 326h2v2h-2zM1017 317h2v2h-2zM1017 319h2v2h-2zM1018 322h2v2h-2zM1018 308h2v2h-2zM1018 309h2v2h-2zM1017 310h2v2h-2zM1018 313h2v2h-2zM1017 304h2v2h-2zM1017 323h2v2h-2zM1018 314h2v2h-2zM1018 305h2v2h-2zM1019 315h2v2h-2zM1018 312h2v2h-2zM1019 326h2v2h-2zM1017 313h2v2h-2zM1019 308h2v2h-2zM1017 316h2v2h-2zM1019 321h2v2h-2zM1018 321h2v2h-2zM1019 309h2v2h-2zM1019 313h2v2h-2zM1018 310h2v2h-2zM1019 319h2v2h-2zM1019 311h2v2h-2zM1020 317h2v2h-2zM1019 324h2v2h-2zM1019 314h2v2h-2zM1018 311h2v2h-2zM1018 316h2v2h-2zM1019 317h2v2h-2zM1020 308h2v2h-2zM1021 307h2v2h-2zM1020 315h2v2h-2zM1020 325h2v2h-2zM1020 316h2v2h-2zM1021 306h2v2h-2zM1020 302h2v2h-2zM1021 317h2v2h-2zM1020 323h2v2h-2zM1020 319h2v2h-2zM1020 312h2v2h-2zM1021 309h2v2h-2zM1020 311h2v2h-2zM1021 318h2v2h-2zM1021 321h2v2h-2zM1021 320h2v2h-2zM1020 313h2v2h-2zM1020 309h2v2h-2zM1022 313h2v2h-2zM1022 316h2v2h-2zM1020 314h2v2h-2zM1021 319h2v2h-2zM1021 308h2v2h-2zM1020 321h2v2h-2zM1022 315h2v2h-2zM1022 306h2v2h-2zM1021 313h2v2h-2zM1021 312h2v2h-2zM1022 319h2v2h-2zM1022 323h2v2h-2zM1022 311h2v2h-2zM1023 315h2v2h-2zM1022 317h2v2h-2zM1022 310h2v2h-2zM1024 314h2v2h-2zM1024 324h2v2h-2zM1022 325h2v2h-2zM1022 304h2v2h-2zM1023 319h2v2h-2zM1023 311h2v2h-2zM1022 324h2v2h-2zM1022 314h2v2h-2zM1023 313h2v2h-2zM1023 310h2v2h-2zM1023 317h2v2h-2zM1024 308h2v2h-2zM1023 307h2v2h-2zM1023 324h2v2h-2zM1024 316h2v2h-2zM1024 313h2v2h-2zM1023 322h2v2h-2zM1023 316h2v2h-2zM1024 320h2v2h-2zM1024 309h2v2h-2zM1025 314h2v2h-2zM1023 320h2v2h-2zM1024 322h2v2h-2zM1025 326h2v2h-2zM1024 312h2v2h-2zM1024 311h2v2h-2zM1025 305h2v2h-2zM1026 313h2v2h-2zM1025 319h2v2h-2zM1025 312h2v2h-2zM1025 323h2v2h-2zM1024 315h2v2h-2zM1025 308h2v2h-2zM1025 316h2v2h-2zM1025 310h2v2h-2zM1025 313h2v2h-2zM1024 319h2v2h-2zM1025 318h2v2h-2zM1026 316h2v2h-2zM1025 311h2v2h-2zM1027 302h2v2h-2zM1027 322h2v2h-2zM1026 311h2v2h-2zM1026 303h2v2h-2zM1027 314h2v2h-2zM1026 323h2v2h-2zM1026 314h2v2h-2zM1027 311h2v2h-2zM1028 322h2v2h-2zM1027 306h2v2h-2zM1027 326h2v2h-2zM1027 316h2v2h-2zM1027 317h2v2h-2zM1026 322h2v2h-2zM1026 320h2v2h-2zM1027 318h2v2h-2zM1027 303h2v2h-2zM1028 311h2v2h-2zM1026 318h2v2h-2zM1029 305h2v2h-2zM1028 304h2v2h-2zM1028 314h2v2h-2zM1028 317h2v2h-2zM1027 310h2v2h-2zM1027 313h2v2h-2zM1028 319h2v2h-2zM1028 315h2v2h-2zM1029 318h2v2h-2zM1029 314h2v2h-2zM1027 321h2v2h-2zM1029 317h2v2h-2zM1029 325h2v2h-2zM1028 309h2v2h-2zM1030 323h2v2h-2zM1029 320h2v2h-2zM1028 316h2v2h-2zM1029 312h2v2h-2zM1028 327h2v2h-2zM1030 313h2v2h-2zM1029 323h2v2h-2zM1029 322h2v2h-2zM1030 312h2v2h-2zM1030 302h2v2h-2zM1030 317h2v2h-2zM1030 318h2v2h-2zM1031 320h2v2h-2zM1030 319h2v2h-2zM1029 311h2v2h-2zM1030 316h2v2h-2zM1030 322h2v2h-2zM1030 308h2v2h-2zM1031 318h2v2h-2zM1030 315h2v2h-2zM1031 309h2v2h-2zM1032 300h2v2h-2zM1032 313h2v2h-2zM1031 316h2v2h-2zM1031 321h2v2h-2zM1031 315h2v2h-2zM1031 307h2v2h-2zM1032 310h2v2h-2zM1031 303h2v2h-2zM1032 327h2v2h-2zM1032 315h2v2h-2zM1031 319h2v2h-2zM1031 323h2v2h-2zM1031 311h2v2h-2zM1031 314h2v2h-2zM1032 318h2v2h-2zM1031 313h2v2h-2zM1033 302h2v2h-2zM1032 317h2v2h-2zM1031 301h2v2h-2zM1032 314h2v2h-2zM1033 310h2v2h-2zM1033 309h2v2h-2zM1034 318h2v2h-2zM1033 317h2v2h-2zM1032 321h2v2h-2zM1034 324h2v2h-2zM1034 317h2v2h-2zM1033 314h2v2h-2zM1034 310h2v2h-2zM1032 324h2v2h-2zM1033 311h2v2h-2zM1033 315h2v2h-2zM1035 320h2v2h-2zM1035 315h2v2h-2zM1033 313h2v2h-2zM1034 311h2v2h-2zM1034 305h2v2h-2zM1034 321h2v2h-2zM1033 318h2v2h-2zM1035 318h2v2h-2zM1033 316h2v2h-2zM1034 302h2v2h-2zM1034 316h2v2h-2zM1034 299h2v2h-2zM1034 315h2v2h-2zM1034 308h2v2h-2zM1035 312h2v2h-2zM1035 321h2v2h-2zM1036 312h2v2h-2zM1036 313h2v2h-2zM1036 311h2v2h-2zM1034 319h2v2h-2zM1035 319h2v2h-2zM1034 314h2v2h-2zM1034 312h2v2h-2zM1034 313h2v2h-2zM1036 318h2v2h-2zM1036 319h2v2h-2zM1036 309h2v2h-2zM1036 314h2v2h-2zM1035 316h2v2h-2zM1036 310h2v2h-2zM1036 308h2v2h-2zM1037 317h2v2h-2zM1035 311h2v2h-2zM1036 306h2v2h-2zM1036 307h2v2h-2zM1037 307h2v2h-2zM1038 321h2v2h-2zM1037 321h2v2h-2zM1037 314h2v2h-2zM1036 329h2v2h-2zM1038 316h2v2h-2zM1036 302h2v2h-2zM1037 310h2v2h-2zM1037 311h2v2h-2zM1038 311h2v2h-2zM1036 320h2v2h-2zM1037 309h2v2h-2zM1036 325h2v2h-2zM1038 330h2v2h-2zM1038 308h2v2h-2zM1038 306h2v2h-2zM1037 308h2v2h-2zM1039 309h2v2h-2zM1039 312h2v2h-2zM1037 324h2v2h-2zM1038 329h2v2h-2zM1038 317h2v2h-2zM1038 312h2v2h-2zM1037 320h2v2h-2zM1038 320h2v2h-2zM1037 316h2v2h-2zM1038 305h2v2h-2zM1039 316h2v2h-2zM1039 320h2v2h-2zM1039 317h2v2h-2zM1040 315h2v2h-2zM1040 302h2v2h-2zM1039 310h2v2h-2zM1038 313h2v2h-2zM1040 317h2v2h-2zM1038 319h2v2h-2zM1038 315h2v2h-2zM1040 316h2v2h-2zM1041 312h2v2h-2zM1039 315h2v2h-2zM1041 317h2v2h-2zM1040 321h2v2h-2zM1040 310h2v2h-2zM1039 311h2v2h-2zM1040 306h2v2h-2zM1040 322h2v2h-2zM1039 319h2v2h-2zM1041 320h2v2h-2zM1040 320h2v2h-2zM1041 318h2v2h-2zM1041 313h2v2h-2zM1040 314h2v2h-2zM1041 327h2v2h-2zM1041 311h2v2h-2zM1040 313h2v2h-2zM1041 315h2v2h-2zM1040 323h2v2h-2zM1041 310h2v2h-2zM1042 317h2v2h-2zM1041 316h2v2h-2zM1041 319h2v2h-2zM1042 318h2v2h-2zM1042 313h2v2h-2zM1042 312h2v2h-2zM1043 316h2v2h-2zM1042 322h2v2h-2zM1043 311h2v2h-2zM1043 313h2v2h-2zM1042 320h2v2h-2zM1042 308h2v2h-2zM1043 323h2v2h-2zM1043 315h2v2h-2zM1042 325h2v2h-2zM1043 320h2v2h-2zM1044 318h2v2h-2zM1043 329h2v2h-2zM1044 319h2v2h-2zM1044 309h2v2h-2zM1044 324h2v2h-2zM1043 318h2v2h-2zM1042 316h2v2h-2zM1044 317h2v2h-2zM1042 305h2v2h-2zM1042 329h2v2h-2zM1044 313h2v2h-2zM1044 320h2v2h-2zM1043 308h2v2h-2zM1045 310h2v2h-2zM1044 308h2v2h-2zM1045 313h2v2h-2zM1045 315h2v2h-2zM1044 322h2v2h-2zM1044 311h2v2h-2zM1044 316h2v2h-2zM1043 319h2v2h-2zM1043 317h2v2h-2zM1046 312h2v2h-2zM1046 318h2v2h-2zM1045 309h2v2h-2zM1045 304h2v2h-2zM1044 312h2v2h-2zM1045 311h2v2h-2zM1046 326h2v2h-2zM1044 315h2v2h-2zM1044 314h2v2h-2zM1046 308h2v2h-2zM1045 312h2v2h-2zM1046 316h2v2h-2zM1046 313h2v2h-2zM1046 317h2v2h-2zM1045 316h2v2h-2zM1045 318h2v2h-2zM1047 318h2v2h-2zM1045 320h2v2h-2zM1047 313h2v2h-2zM1047 326h2v2h-2zM1046 311h2v2h-2zM1048 311h2v2h-2zM1047 315h2v2h-2zM1047 311h2v2h-2zM1047 319h2v2h-2zM1047 323h2v2h-2zM1047 322h2v2h-2zM1047 316h2v2h-2zM1047 310h2v2h-2zM1047 314h2v2h-2zM1048 320h2v2h-2zM1046 327h2v2h-2zM1047 321h2v2h-2zM1047 312h2v2h-2zM1048 326h2v2h-2zM1048 317h2v2h-2zM1048 310h2v2h-2zM1047 324h2v2h-2zM1047 325h2v2h-2zM1048 316h2v2h-2zM1047 306h2v2h-2zM1048 313h2v2h-2zM1048 312h2v2h-2zM1049 313h2v2h-2zM1049 320h2v2h-2zM1050 305h2v2h-2zM1048 323h2v2h-2zM1049 322h2v2h-2zM1049 316h2v2h-2zM1049 312h2v2h-2zM1049 317h2v2h-2zM1048 315h2v2h-2zM1048 314h2v2h-2zM1048 307h2v2h-2zM1049 311h2v2h-2zM1049 315h2v2h-2zM1050 302h2v2h-2zM1050 307h2v2h-2zM1050 319h2v2h-2zM1050 325h2v2h-2zM1051 318h2v2h-2zM1050 315h2v2h-2zM1050 306h2v2h-2zM1049 307h2v2h-2zM1050 317h2v2h-2zM1051 313h2v2h-2zM1050 318h2v2h-2zM1049 310h2v2h-2zM1051 309h2v2h-2zM1049 318h2v2h-2zM1051 319h2v2h-2zM1051 316h2v2h-2zM1051 321h2v2h-2zM1051 317h2v2h-2zM1050 320h2v2h-2zM1052 310h2v2h-2zM1051 312h2v2h-2zM1051 322h2v2h-2zM1051 308h2v2h-2zM1050 316h2v2h-2zM1052 316h2v2h-2zM1052 318h2v2h-2zM1052 314h2v2h-2zM1052 322h2v2h-2zM1052 308h2v2h-2zM1052 315h2v2h-2zM1052 307h2v2h-2zM1053 318h2v2h-2zM1052 320h2v2h-2zM1051 307h2v2h-2zM1053 316h2v2h-2zM1053 320h2v2h-2zM1052 317h2v2h-2zM1052 313h2v2h-2zM1053 309h2v2h-2zM1053 314h2v2h-2zM1054 316h2v2h-2zM1053 319h2v2h-2zM1052 309h2v2h-2zM1053 324h2v2h-2zM1054 310h2v2h-2zM1053 304h2v2h-2zM1055 318h2v2h-2zM1055 310h2v2h-2zM1054 304h2v2h-2zM1054 317h2v2h-2zM1055 312h2v2h-2zM1055 315h2v2h-2zM1055 323h2v2h-2zM1054 312h2v2h-2zM1054 319h2v2h-2zM1054 309h2v2h-2zM1056 316h2v2h-2zM1055 331h2v2h-2zM1054 322h2v2h-2zM1054 324h2v2h-2zM1055 317h2v2h-2zM1055 313h2v2h-2zM1054 314h2v2h-2zM1056 321h2v2h-2zM1055 311h2v2h-2zM1055 316h2v2h-2zM1055 309h2v2h-2zM1057 314h2v2h-2zM1056 319h2v2h-2zM1057 323h2v2h-2zM1057 310h2v2h-2zM1057 321h2v2h-2zM1056 312h2v2h-2zM1056 315h2v2h-2zM1055 308h2v2h-2zM1056 309h2v2h-2zM1055 307h2v2h-2zM1056 314h2v2h-2zM1058 318h2v2h-2zM1057 311h2v2h-2zM1056 320h2v2h-2zM1057 317h2v2h-2zM1057 325h2v2h-2zM1056 313h2v2h-2zM1058 320h2v2h-2zM1058 308h2v2h-2zM1057 301h2v2h-2zM1056 317h2v2h-2zM1056 323h2v2h-2zM1057 319h2v2h-2zM1058 322h2v2h-2zM1058 310h2v2h-2zM1058 321h2v2h-2zM1059 314h2v2h-2zM1057 306h2v2h-2zM1059 320h2v2h-2zM1057 320h2v2h-2zM1058 316h2v2h-2zM1059 309h2v2h-2zM1058 315h2v2h-2zM1059 317h2v2h-2zM1059 312h2v2h-2zM1060 324h2v2h-2zM1060 311h2v2h-2zM1058 317h2v2h-2zM1059 324h2v2h-2zM1059 305h2v2h-2zM1059 328h2v2h-2zM1059 319h2v2h-2zM1060 313h2v2h-2zM1061 321h2v2h-2zM1059 318h2v2h-2zM1061 311h2v2h-2zM1060 326h2v2h-2zM1060 305h2v2h-2zM1060 319h2v2h-2zM1059 316h2v2h-2zM1060 306h2v2h-2zM1059 315h2v2h-2zM1059 311h2v2h-2zM1060 323h2v2h-2zM1061 320h2v2h-2zM1060 314h2v2h-2zM1060 316h2v2h-2zM1060 320h2v2h-2zM1061 316h2v2h-2zM1061 312h2v2h-2zM1060 307h2v2h-2zM1062 317h2v2h-2zM1062 319h2v2h-2zM1061 315h2v2h-2zM1060 317h2v2h-2zM1062 320h2v2h-2zM1061 323h2v2h-2zM1063 327h2v2h-2zM1062 306h2v2h-2zM1061 317h2v2h-2zM1063 314h2v2h-2zM1061 319h2v2h-2zM1062 311h2v2h-2zM1061 328h2v2h-2zM1062 322h2v2h-2zM1062 312h2v2h-2zM1063 312h2v2h-2zM1063 315h2v2h-2zM1062 316h2v2h-2zM1063 316h2v2h-2zM1063 311h2v2h-2zM1064 309h2v2h-2zM1062 315h2v2h-2zM1063 321h2v2h-2zM1065 323h2v2h-2zM1064 313h2v2h-2zM1064 315h2v2h-2zM1063 302h2v2h-2zM1063 318h2v2h-2zM1064 312h2v2h-2zM1063 309h2v2h-2zM1063 305h2v2h-2zM1064 316h2v2h-2zM1063 325h2v2h-2zM1064 317h2v2h-2zM1065 316h2v2h-2zM1065 313h2v2h-2zM1065 315h2v2h-2zM1065 308h2v2h-2zM1065 311h2v2h-2zM1065 317h2v2h-2zM1065 319h2v2h-2zM1064 324h2v2h-2zM1064 322h2v2h-2zM1066 310h2v2h-2zM1066 314h2v2h-2zM1066 306h2v2h-2zM1066 316h2v2h-2zM1067 315h2v2h-2zM1066 326h2v2h-2zM1066 312h2v2h-2zM1066 309h2v2h-2zM1066 305h2v2h-2zM1065 322h2v2h-2zM1066 315h2v2h-2zM1067 314h2v2h-2zM1067 310h2v2h-2zM1066 319h2v2h-2zM1068 314h2v2h-2zM1066 327h2v2h-2zM1066 321h2v2h-2zM1068 322h2v2h-2zM1066 311h2v2h-2zM1066 320h2v2h-2zM1067 306h2v2h-2zM1067 309h2v2h-2zM1066 322h2v2h-2zM1068 320h2v2h-2zM1068 329h2v2h-2zM1069 314h2v2h-2zM1069 315h2v2h-2zM1068 321h2v2h-2zM1068 319h2v2h-2zM1068 326h2v2h-2zM1068 313h2v2h-2zM1069 309h2v2h-2zM1069 316h2v2h-2zM1068 325h2v2h-2zM1068 309h2v2h-2zM1069 324h2v2h-2zM1068 318h2v2h-2zM1069 305h2v2h-2zM1069 318h2v2h-2zM1069 303h2v2h-2zM1070 323h2v2h-2zM1068 315h2v2h-2zM1069 317h2v2h-2zM1069 313h2v2h-2zM1068 324h2v2h-2zM1069 308h2v2h-2zM1070 320h2v2h-2zM1070 312h2v2h-2zM1070 304h2v2h-2zM1069 319h2v2h-2zM1071 319h2v2h-2zM1070 314h2v2h-2zM1070 313h2v2h-2zM1069 328h2v2h-2zM1070 315h2v2h-2zM1070 322h2v2h-2zM1071 309h2v2h-2zM1070 307h2v2h-2zM1072 313h2v2h-2zM1070 317h2v2h-2zM1071 307h2v2h-2zM1070 318h2v2h-2zM1072 312h2v2h-2zM1070 311h2v2h-2zM1072 316h2v2h-2zM1072 308h2v2h-2zM1071 313h2v2h-2zM1072 311h2v2h-2zM1072 324h2v2h-2zM1071 315h2v2h-2zM1073 312h2v2h-2zM1072 317h2v2h-2zM1072 314h2v2h-2zM1072 315h2v2h-2zM1073 322h2v2h-2zM1071 306h2v2h-2zM1072 303h2v2h-2zM1071 314h2v2h-2zM1073 323h2v2h-2zM1072 310h2v2h-2zM1073 317h2v2h-2zM1071 323h2v2h-2zM1073 313h2v2h-2zM1074 319h2v2h-2zM1073 329h2v2h-2zM1073 324h2v2h-2zM1073 307h2v2h-2zM1072 318h2v2h-2zM1073 328h2v2h-2zM1072 322h2v2h-2zM1073 316h2v2h-2zM1074 316h2v2h-2zM1074 317h2v2h-2zM1074 315h2v2h-2zM1074 313h2v2h-2zM1074 324h2v2h-2zM1073 320h2v2h-2zM1073 314h2v2h-2zM1075 315h2v2h-2zM1075 309h2v2h-2zM1074 329h2v2h-2zM1075 319h2v2h-2zM1075 318h2v2h-2zM1076 320h2v2h-2zM1076 318h2v2h-2zM1074 328h2v2h-2zM1074 310h2v2h-2zM1075 311h2v2h-2zM1076 311h2v2h-2zM1075 316h2v2h-2zM1076 313h2v2h-2zM1076 315h2v2h-2zM1077 316h2v2h-2zM1075 307h2v2h-2zM1076 314h2v2h-2zM1076 304h2v2h-2zM1076 324h2v2h-2zM1075 325h2v2h-2zM1077 319h2v2h-2zM1077 320h2v2h-2zM1076 317h2v2h-2zM1077 324h2v2h-2zM1076 316h2v2h-2zM1077 308h2v2h-2zM1077 312h2v2h-2zM1076 312h2v2h-2zM1078 309h2v2h-2zM1077 317h2v2h-2zM1077 325h2v2h-2zM1078 316h2v2h-2zM1078 314h2v2h-2zM1076 319h2v2h-2zM1078 311h2v2h-2zM1078 318h2v2h-2zM1078 310h2v2h-2zM1078 317h2v2h-2zM1079 318h2v2h-2zM1077 323h2v2h-2zM1077 330h2v2h-2zM1078 313h2v2h-2zM1078 304h2v2h-2zM1080 318h2v2h-2zM1078 319h2v2h-2zM1080 320h2v2h-2zM1079 326h2v2h-2zM1078 324h2v2h-2zM1079 321h2v2h-2zM1079 312h2v2h-2zM1079 306h2v2h-2zM1079 323h2v2h-2zM1079 319h2v2h-2zM1079 328h2v2h-2zM1080 316h2v2h-2zM1079 305h2v2h-2zM1078 312h2v2h-2zM1080 317h2v2h-2zM1079 310h2v2h-2zM1080 312h2v2h-2zM1080 315h2v2h-2zM1079 315h2v2h-2zM1081 317h2v2h-2zM1079 320h2v2h-2zM1080 307h2v2h-2zM1080 311h2v2h-2zM1079 316h2v2h-2zM1081 309h2v2h-2zM1081 319h2v2h-2zM1081 320h2v2h-2zM1080 319h2v2h-2zM1081 310h2v2h-2zM1081 314h2v2h-2zM1081 305h2v2h-2zM1080 313h2v2h-2zM1082 314h2v2h-2zM1081 325h2v2h-2zM1080 332h2v2h-2zM1080 321h2v2h-2zM1082 313h2v2h-2zM1081 313h2v2h-2zM1082 318h2v2h-2zM1081 311h2v2h-2zM1082 319h2v2h-2zM1082 306h2v2h-2zM1083 306h2v2h-2zM1082 325h2v2h-2zM1082 320h2v2h-2zM1082 312h2v2h-2zM1081 324h2v2h-2zM1082 324h2v2h-2zM1084 318h2v2h-2zM1083 300h2v2h-2zM1083 315h2v2h-2zM1083 323h2v2h-2zM1083 312h2v2h-2zM1083 303h2v2h-2zM1083 309h2v2h-2zM1083 308h2v2h-2zM1082 309h2v2h-2zM1082 317h2v2h-2zM1083 317h2v2h-2zM1082 328h2v2h-2zM1083 324h2v2h-2zM1085 323h2v2h-2zM1084 321h2v2h-2zM1084 311h2v2h-2zM1085 319h2v2h-2zM1084 309h2v2h-2zM1084 314h2v2h-2zM1085 327h2v2h-2zM1085 317h2v2h-2zM1084 308h2v2h-2zM1084 322h2v2h-2zM1084 303h2v2h-2zM1083 320h2v2h-2zM1083 316h2v2h-2zM1084 310h2v2h-2zM1084 319h2v2h-2zM1085 318h2v2h-2zM1086 318h2v2h-2zM1086 322h2v2h-2zM1085 310h2v2h-2zM1085 315h2v2h-2zM1084 325h2v2h-2zM1084 320h2v2h-2zM1085 314h2v2h-2zM1085 313h2v2h-2zM1087 316h2v2h-2zM1086 321h2v2h-2zM1086 315h2v2h-2zM1086 320h2v2h-2zM1085 312h2v2h-2zM1087 314h2v2h-2zM1086 312h2v2h-2zM1086 324h2v2h-2zM1086 311h2v2h-2zM1085 306h2v2h-2zM1087 318h2v2h-2zM1087 315h2v2h-2zM1087 326h2v2h-2zM1086 316h2v2h-2zM1088 318h2v2h-2zM1087 311h2v2h-2zM1086 314h2v2h-2zM1088 309h2v2h-2zM1088 312h2v2h-2zM1087 317h2v2h-2zM1088 308h2v2h-2zM1087 308h2v2h-2zM1088 307h2v2h-2zM1088 315h2v2h-2zM1088 317h2v2h-2zM1088 321h2v2h-2zM1088 311h2v2h-2zM1088 319h2v2h-2zM1087 322h2v2h-2zM1089 308h2v2h-2zM1089 315h2v2h-2zM1090 315h2v2h-2zM1090 318h2v2h-2zM1089 312h2v2h-2zM1090 312h2v2h-2zM1088 313h2v2h-2zM1089 310h2v2h-2zM1089 317h2v2h-2zM1088 320h2v2h-2zM1090 313h2v2h-2zM1090 310h2v2h-2zM1089 313h2v2h-2zM1089 316h2v2h-2zM1090 320h2v2h-2zM1091 318h2v2h-2zM1090 309h2v2h-2zM1090 311h2v2h-2zM1091 310h2v2h-2zM1090 316h2v2h-2zM1091 308h2v2h-2zM1091 314h2v2h-2zM1090 321h2v2h-2zM1091 304h2v2h-2zM1092 313h2v2h-2zM1091 311h2v2h-2zM1091 316h2v2h-2zM1090 317h2v2h-2zM1091 324h2v2h-2zM1092 316h2v2h-2zM1092 309h2v2h-2zM1093 315h2v2h-2zM1092 314h2v2h-2zM1092 305h2v2h-2zM1091 322h2v2h-2zM1092 323h2v2h-2zM1093 323h2v2h-2zM1091 309h2v2h-2zM1091 312h2v2h-2zM1092 321h2v2h-2zM1094 322h2v2h-2zM1092 310h2v2h-2zM1092 308h2v2h-2zM1093 320h2v2h-2zM1093 313h2v2h-2zM1093 319h2v2h-2zM1094 317h2v2h-2zM1092 318h2v2h-2zM1095 308h2v2h-2zM1094 312h2v2h-2zM1094 320h2v2h-2zM1093 314h2v2h-2zM1095 317h2v2h-2zM1094 315h2v2h-2zM1093 326h2v2h-2zM1094 318h2v2h-2zM1094 316h2v2h-2zM1094 319h2v2h-2zM1095 315h2v2h-2zM1094 314h2v2h-2zM1095 302h2v2h-2zM1095 316h2v2h-2zM1095 311h2v2h-2zM1095 314h2v2h-2zM1095 310h2v2h-2zM1094 321h2v2h-2zM1094 308h2v2h-2zM1096 312h2v2h-2zM1095 309h2v2h-2zM1096 322h2v2h-2zM1096 313h2v2h-2zM1096 318h2v2h-2zM1095 313h2v2h-2zM1096 323h2v2h-2zM1096 314h2v2h-2zM1097 313h2v2h-2zM1096 315h2v2h-2zM1095 307h2v2h-2zM1095 324h2v2h-2zM1096 316h2v2h-2zM1097 312h2v2h-2zM1096 310h2v2h-2zM1098 311h2v2h-2zM1096 327h2v2h-2zM1097 316h2v2h-2zM1096 309h2v2h-2zM1097 307h2v2h-2zM1098 317h2v2h-2zM1097 317h2v2h-2zM1096 317h2v2h-2zM1098 297h2v2h-2zM1097 306h2v2h-2zM1098 313h2v2h-2zM1099 307h2v2h-2zM1097 322h2v2h-2zM1097 319h2v2h-2zM1097 309h2v2h-2zM1098 318h2v2h-2zM1097 321h2v2h-2zM1098 320h2v2h-2zM1099 318h2v2h-2zM1098 319h2v2h-2zM1098 309h2v2h-2zM1099 317h2v2h-2zM1097 315h2v2h-2zM1100 316h2v2h-2zM1098 314h2v2h-2zM1100 320h2v2h-2zM1098 315h2v2h-2zM1099 315h2v2h-2zM1099 314h2v2h-2zM1099 306h2v2h-2zM1098 326h2v2h-2zM1099 321h2v2h-2zM1100 318h2v2h-2zM1099 312h2v2h-2zM1099 327h2v2h-2zM1099 322h2v2h-2zM1100 324h2v2h-2zM1101 317h2v2h-2zM1100 317h2v2h-2zM1100 329h2v2h-2zM1099 323h2v2h-2zM1100 313h2v2h-2zM1101 313h2v2h-2zM1100 304h2v2h-2zM1100 323h2v2h-2zM1100 321h2v2h-2zM1099 313h2v2h-2zM1100 326h2v2h-2zM1102 318h2v2h-2zM1101 306h2v2h-2zM1100 314h2v2h-2zM1102 316h2v2h-2zM1100 319h2v2h-2zM1100 315h2v2h-2zM1101 310h2v2h-2zM1100 310h2v2h-2zM1102 325h2v2h-2zM1101 320h2v2h-2zM1101 321h2v2h-2zM1103 321h2v2h-2zM1103 320h2v2h-2zM1102 320h2v2h-2zM1102 321h2v2h-2zM1101 311h2v2h-2zM1102 312h2v2h-2zM1101 316h2v2h-2zM1101 319h2v2h-2zM1101 314h2v2h-2zM1103 313h2v2h-2zM1103 319h2v2h-2zM1103 316h2v2h-2zM1104 317h2v2h-2zM1104 325h2v2h-2zM1103 317h2v2h-2zM1103 311h2v2h-2zM1102 322h2v2h-2zM1104 320h2v2h-2zM1104 316h2v2h-2zM1103 312h2v2h-2zM1103 307h2v2h-2zM1102 313h2v2h-2zM1103 318h2v2h-2zM1104 321h2v2h-2zM1103 322h2v2h-2zM1103 315h2v2h-2zM1105 321h2v2h-2zM1105 315h2v2h-2zM1104 309h2v2h-2zM1104 323h2v2h-2zM1105 319h2v2h-2zM1105 312h2v2h-2zM1104 327h2v2h-2zM1104 318h2v2h-2zM1105 317h2v2h-2zM1105 310h2v2h-2zM1106 312h2v2h-2zM1106 317h2v2h-2zM1105 314h2v2h-2zM1105 318h2v2h-2zM1105 313h2v2h-2zM1104 319h2v2h-2zM1105 309h2v2h-2zM1106 322h2v2h-2zM1104 303h2v2h-2zM1106 315h2v2h-2zM1106 319h2v2h-2zM1105 323h2v2h-2zM1106 324h2v2h-2zM1107 317h2v2h-2zM1106 311h2v2h-2zM1106 316h2v2h-2zM1106 318h2v2h-2zM1106 314h2v2h-2zM1107 318h2v2h-2zM1107 311h2v2h-2zM1107 313h2v2h-2zM1107 322h2v2h-2zM1107 314h2v2h-2zM1106 309h2v2h-2zM1107 316h2v2h-2zM1106 320h2v2h-2zM1107 315h2v2h-2zM1107 321h2v2h-2zM1108 309h2v2h-2zM1108 319h2v2h-2zM1108 311h2v2h-2zM1107 325h2v2h-2zM1108 313h2v2h-2zM1109 311h2v2h-2zM1107 320h2v2h-2zM1108 317h2v2h-2zM1108 305h2v2h-2zM1108 314h2v2h-2zM1108 316h2v2h-2zM1108 310h2v2h-2zM1110 320h2v2h-2zM1110 309h2v2h-2zM1110 323h2v2h-2zM1108 312h2v2h-2zM1108 323h2v2h-2zM1108 303h2v2h-2zM1109 322h2v2h-2zM1109 319h2v2h-2zM1109 313h2v2h-2zM1108 327h2v2h-2zM1111 317h2v2h-2zM1111 314h2v2h-2zM1110 324h2v2h-2zM1111 316h2v2h-2zM1110 310h2v2h-2zM1110 316h2v2h-2zM1110 319h2v2h-2zM1111 312h2v2h-2zM1111 302h2v2h-2zM1111 322h2v2h-2zM1110 311h2v2h-2zM1110 318h2v2h-2zM1112 314h2v2h-2zM1111 308h2v2h-2zM1112 308h2v2h-2zM1110 315h2v2h-2zM1111 305h2v2h-2zM1111 319h2v2h-2zM1111 321h2v2h-2zM1112 315h2v2h-2zM1111 311h2v2h-2zM1111 307h2v2h-2zM1112 303h2v2h-2zM1113 311h2v2h-2zM1112 316h2v2h-2zM1111 325h2v2h-2zM1111 310h2v2h-2zM1112 321h2v2h-2zM1113 319h2v2h-2zM1113 315h2v2h-2zM1112 332h2v2h-2zM1111 313h2v2h-2zM1112 324h2v2h-2z" fill="#a020f0" stroke="none"/>
<polyline points="1113.8,349.6 1636.8,349.6" fill="none" stroke="#a020f0" stroke-width="2.5" stroke-linejoin="miter"/>
<path d="M1005 397h2v2h-2zM1005 399h2v2h-2zM1005 396h2v2h-2zM1004 394h2v2h-2zM1005 393h2v2h-2zM1004 392h2v2h-2zM1006 391h2v2h-2zM1005 398h2v2h-2zM1006 398h2v2h-2zM1007 396h2v2h-2zM1005 400h2v2h-2zM1006 393h2v2h-2zM1006 392h2v2h-2zM1005 395h2v2h-2zM1007 401h2v2h-2zM1007 398h2v2h-2zM1006 395h2v2h-2zM1007 397h2v2h-2zM1007 394h2v2h-2zM1006 396h2v2h-2zM1007 395h2v2h-2zM1007 399h2v2h-2zM1008 392h2v2h-2zM1007 400h2v2h-2zM1008 393h2v2h-2zM1009 396h2v2h-2zM1008 398h2v2h-2zM1009 398h2v2h-2zM1008 397h2v2h-2zM1008 396h2v2h-2zM1009 395h2v2h-2zM1008 394h2v2h-2zM1008 395h2v2h-2zM1009 391h2v2h-2zM1010 395h2v2h-2zM1010 401h2v2h-2zM1010 397h2v2h-2zM1009 397h2v2h-2zM1011 393h2v2h-2zM1011 399h2v2h-2zM1010 396h2v2h-2zM1010 393h2v2h-2zM1011 398h2v2h-2zM1010 394h2v2h-2zM1012 398h2v2h-2zM1012 397h2v2h-2zM1013 399h2v2h-2zM1011 400h2v2h-2zM1012 396h2v2h-2zM1013 396h2v2h-2zM1013 398h2v2h-2zM1012 394h2v2h-2zM1013 403h2v2h-2zM1012 395h2v2h-2zM1012 399h2v2h-2zM1013 395h2v2h-2zM1014 394h2v2h-2zM1013 394h2v2h-2zM1014 400h2v2h-2zM1014 396h2v2h-2zM1013 397h2v2h-2zM1015 400h2v2h-2zM1015 398h2v2h-2zM1014 392h2v2h-2zM1015 397h2v2h-2zM1015 401h2v2h-2zM1015 395h2v2h-2zM1016 398h2v2h-2zM1014 398h2v2h-2zM1015 393h2v2h-2zM1016 395h2v2h-2zM1016 397h2v2h-2zM1016 399h2v2h-2zM1016 393h2v2h-2zM1016 396h2v2h-2zM1015 396h2v2h-2zM1017 398h2v2h-2zM1017 395h2v2h-2zM1017 397h2v2h-2zM1016 394h2v2h-2zM1016 401h2v2h-2zM1016 400h2v2h-2zM1018 396h2v2h-2zM1017 402h2v2h-2zM1018 399h2v2h-2zM1018 393h2v2h-2zM1019 398h2v2h-2zM1019 397h2v2h-2zM1018 397h2v2h-2zM1019 395h2v2h-2zM1019 391h2v2h-2zM1018 398h2v2h-2zM1018 395h2v2h-2zM1019 399h2v2h-2zM1019 393h2v2h-2zM1020 395h2v2h-2zM1020 398h2v2h-2zM1020 392h2v2h-2zM1020 396h2v2h-2zM1020 394h2v2h-2zM1020 397h2v2h-2zM1021 399h2v2h-2zM1022 393h2v2h-2zM1020 400h2v2h-2zM1021 393h2v2h-2zM1021 397h2v2h-2zM1021 398h2v2h-2zM1022 399h2v2h-2zM1022 398h2v2h-2zM1022 395h2v2h-2zM1024 397h2v2h-2zM1022 400h2v2h-2zM1023 393h2v2h-2zM1024 398h2v2h-2zM1023 400h2v2h-2zM1024 395h2v2h-2zM1023 397h2v2h-2zM1024 400h2v2h-2zM1023 398h2v2h-2zM1025 390h2v2h-2zM1025 399h2v2h-2zM1024 392h2v2h-2zM1025 395h2v2h-2zM1025 401h2v2h-2zM1025 397h2v2h-2zM1026 392h2v2h-2zM1025 396h2v2h-2zM1024 393h2v2h-2zM1025 405h2v2h-2zM1026 400h2v2h-2zM1026 395h2v2h-2zM1026 401h2v2h-2zM1025 393h2v2h-2zM1026 398h2v2h-2zM1027 394h2v2h-2zM1028 399h2v2h-2zM1027 404h2v2h-2zM1028 394h2v2h-2zM1027 395h2v2h-2zM1026 394h2v2h-2zM1027 397h2v2h-2zM1028 396h2v2h-2zM1029 401h2v2h-2zM1029 395h2v2h-2zM1027 401h2v2h-2zM1027 393h2v2h-2zM1027 398h2v2h-2zM1029 393h2v2h-2zM1030 394h2v2h-2zM1028 400h2v2h-2zM1029 399h2v2h-2zM1028 397h2v2h-2zM1029 396h2v2h-2zM1030 397h2v2h-2zM1028 393h2v2h-2zM1030 399h2v2h-2zM1030 396h2v2h-2zM1031 397h2v2h-2zM1031 393h2v2h-2zM1030 398h2v2h-2zM1029 398h2v2h-2zM1031 395h2v2h-2zM1030 395h2v2h-2zM1030 401h2v2h-2zM1031 396h2v2h-2zM1030 392h2v2h-2zM1030 400h2v2h-2zM1032 397h2v2h-2zM1033 394h2v2h-2zM1033 400h2v2h-2zM1032 399h2v2h-2zM1032 400h2v2h-2zM1032 398h2v2h-2zM1033 397h2v2h-2zM1034 398h2v2h-2zM1033 405h2v2h-2zM1033 395h2v2h-2zM1033 398h2v2h-2zM1033 396h2v2h-2zM1034 396h2v2h-2zM1034 397h2v2h-2zM1034 400h2v2h-2zM1033 393h2v2h-2zM1035 398h2v2h-2zM1035 396h2v2h-2zM1034 401h2v2h-2zM1035 395h2v2h-2zM1036 395h2v2h-2zM1035 400h2v2h-2zM1036 394h2v2h-2zM1037 396h2v2h-2zM1036 393h2v2h-2zM1036 399h2v2h-2zM1036 397h2v2h-2zM1036 403h2v2h-2zM1036 398h2v2h-2zM1037 399h2v2h-2zM1038 392h2v2h-2zM1037 394h2v2h-2zM1038 397h2v2h-2zM1036 396h2v2h-2zM1037 397h2v2h-2zM1037 398h2v2h-2zM1038 400h2v2h-2zM1038 399h2v2h-2zM1037 395h2v2h-2zM1039 397h2v2h-2zM1038 398h2v2h-2zM1038 391h2v2h-2zM1040 397h2v2h-2zM1040 396h2v2h-2zM1040 400h2v2h-2zM1039 394h2v2h-2zM1041 399h2v2h-2zM1040 401h2v2h-2zM1040 395h2v2h-2zM1041 398h2v2h-2zM1041 400h2v2h-2zM1040 390h2v2h-2zM1042 397h2v2h-2zM1041 396h2v2h-2zM1040 398h2v2h-2zM1043 395h2v2h-2zM1041 397h2v2h-2zM1041 401h2v2h-2zM1041 395h2v2h-2zM1043 396h2v2h-2zM1042 396h2v2h-2zM1043 399h2v2h-2zM1042 394h2v2h-2zM1042 400h2v2h-2zM1044 397h2v2h-2zM1044 395h2v2h-2zM1042 399h2v2h-2zM1043 400h2v2h-2zM1044 400h2v2h-2zM1045 395h2v2h-2zM1044 399h2v2h-2zM1044 401h2v2h-2zM1043 391h2v2h-2zM1044 398h2v2h-2zM1043 401h2v2h-2zM1045 393h2v2h-2zM1045 397h2v2h-2zM1045 391h2v2h-2zM1045 399h2v2h-2zM1045 396h2v2h-2zM1044 396h2v2h-2zM1045 394h2v2h-2zM1046 399h2v2h-2zM1046 390h2v2h-2zM1046 402h2v2h-2zM1046 395h2v2h-2zM1046 401h2v2h-2zM1046 396h2v2h-2zM1047 398h2v2h-2zM1046 400h2v2h-2zM1047 394h2v2h-2zM1046 398h2v2h-2zM1047 395h2v2h-2zM1048 397h2v2h-2zM1047 403h2v2h-2zM1046 397h2v2h-2zM1047 396h2v2h-2zM1048 400h2v2h-2zM1047 400h2v2h-2zM1047 397h2v2h-2zM1047 399h2v2h-2zM1048 398h2v2h-2zM1049 397h2v2h-2zM1050 401h2v2h-2zM1050 396h2v2h-2zM1049 399h2v2h-2zM1049 393h2v2h-2zM1050 400h2v2h-2zM1049 395h2v2h-2zM1049 389h2v2h-2zM1050 392h2v2h-2zM1051 396h2v2h-2zM1050 394h2v2h-2zM1050 397h2v2h-2zM1050 395h2v2h-2zM1051 398h2v2h-2zM1050 391h2v2h-2zM1051 395h2v2h-2zM1051 402h2v2h-2zM1052 398h2v2h-2zM1051 393h2v2h-2zM1053 399h2v2h-2zM1053 398h2v2h-2zM1052 403h2v2h-2zM1053 395h2v2h-2zM1052 396h2v2h-2zM1051 400h2v2h-2zM1052 397h2v2h-2zM1053 404h2v2h-2zM1054 397h2v2h-2zM1053 394h2v2h-2zM1054 395h2v2h-2zM1053 393h2v2h-2zM1052 401h2v2h-2zM1054 403h2v2h-2zM1055 403h2v2h-2zM1054 394h2v2h-2zM1053 396h2v2h-2zM1054 393h2v2h-2zM1055 400h2v2h-2zM1054 402h2v2h-2zM1054 398h2v2h-2zM1055 397h2v2h-2zM1055 398h2v2h-2zM1055 401h2v2h-2zM1057 394h2v2h-2zM1056 397h2v2h-2zM1056 395h2v2h-2zM1057 404h2v2h-2zM1058 396h2v2h-2zM1056 400h2v2h-2zM1058 401h2v2h-2zM1057 407h2v2h-2zM1057 400h2v2h-2zM1058 394h2v2h-2zM1057 397h2v2h-2zM1057 395h2v2h-2zM1057 399h2v2h-2zM1058 399h2v2h-2zM1058 395h2v2h-2zM1058 398h2v2h-2zM1059 399h2v2h-2zM1059 391h2v2h-2zM1059 395h2v2h-2zM1059 396h2v2h-2zM1059 401h2v2h-2zM1058 397h2v2h-2zM1060 394h2v2h-2zM1059 397h2v2h-2zM1060 398h2v2h-2zM1059 394h2v2h-2zM1061 399h2v2h-2zM1060 399h2v2h-2zM1061 397h2v2h-2zM1060 397h2v2h-2zM1061 398h2v2h-2zM1061 395h2v2h-2zM1062 400h2v2h-2zM1061 402h2v2h-2zM1062 393h2v2h-2zM1061 393h2v2h-2zM1062 399h2v2h-2zM1061 396h2v2h-2zM1061 394h2v2h-2zM1062 398h2v2h-2zM1062 394h2v2h-2zM1063 398h2v2h-2zM1063 401h2v2h-2zM1063 397h2v2h-2zM1064 397h2v2h-2zM1062 397h2v2h-2zM1064 401h2v2h-2zM1063 396h2v2h-2zM1064 396h2v2h-2zM1064 399h2v2h-2zM1063 399h2v2h-2zM1063 402h2v2h-2zM1064 395h2v2h-2zM1064 400h2v2h-2zM1063 395h2v2h-2zM1065 404h2v2h-2zM1065 394h2v2h-2zM1064 392h2v2h-2zM1065 402h2v2h-2zM1065 399h2v2h-2zM1065 400h2v2h-2zM1064 402h2v2h-2zM1066 397h2v2h-2zM1065 395h2v2h-2zM1067 392h2v2h-2zM1067 398h2v2h-2zM1067 397h2v2h-2zM1066 394h2v2h-2zM1066 400h2v2h-2zM1067 399h2v2h-2zM1067 396h2v2h-2zM1067 400h2v2h-2zM1068 398h2v2h-2zM1068 397h2v2h-2zM1068 395h2v2h-2zM1068 396h2v2h-2zM1069 397h2v2h-2zM1068 400h2v2h-2zM1068 399h2v2h-2zM1070 396h2v2h-2zM1070 394h2v2h-2zM1068 402h2v2h-2zM1069 400h2v2h-2zM1070 403h2v2h-2zM1069 395h2v2h-2zM1070 399h2v2h-2zM1069 398h2v2h-2zM1070 393h2v2h-2zM1070 400h2v2h-2zM1072 397h2v2h-2zM1071 397h2v2h-2zM1072 394h2v2h-2zM1071 401h2v2h-2zM1072 396h2v2h-2zM1071 394h2v2h-2zM1072 398h2v2h-2zM1071 395h2v2h-2zM1072 401h2v2h-2zM1071 391h2v2h-2zM1071 392h2v2h-2zM1072 400h2v2h-2zM1073 398h2v2h-2zM1073 396h2v2h-2zM1073 394h2v2h-2zM1073 395h2v2h-2zM1073 392h2v2h-2zM1072 392h2v2h-2zM1074 398h2v2h-2zM1074 395h2v2h-2zM1074 394h2v2h-2zM1074 399h2v2h-2zM1073 399h2v2h-2zM1074 397h2v2h-2zM1074 396h2v2h-2zM1075 395h2v2h-2zM1075 402h2v2h-2zM1076 398h2v2h-2zM1075 396h2v2h-2zM1075 399h2v2h-2zM1075 398h2v2h-2zM1076 399h2v2h-2zM1075 400h2v2h-2zM1076 396h2v2h-2zM1075 394h2v2h-2zM1077 396h2v2h-2zM1076 395h2v2h-2zM1077 394h2v2h-2zM1075 397h2v2h-2zM1077 395h2v2h-2zM1077 400h2v2h-2zM1077 398h2v2h-2zM1077 393h2v2h-2zM1078 401h2v2h-2zM1078 399h2v2h-2zM1077 401h2v2h-2zM1079 396h2v2h-2zM1077 397h2v2h-2zM1078 398h2v2h-2zM1079 397h2v2h-2zM1078 390h2v2h-2zM1078 395h2v2h-2zM1078 396h2v2h-2zM1078 400h2v2h-2zM1079 398h2v2h-2zM1081 394h2v2h-2zM1080 400h2v2h-2zM1081 402h2v2h-2zM1080 395h2v2h-2zM1081 395h2v2h-2zM1082 398h2v2h-2zM1081 401h2v2h-2zM1081 400h2v2h-2zM1081 391h2v2h-2zM1081 398h2v2h-2zM1080 394h2v2h-2zM1080 398h2v2h-2zM1082 394h2v2h-2zM1083 394h2v2h-2zM1082 397h2v2h-2zM1082 395h2v2h-2zM1083 399h2v2h-2zM1083 397h2v2h-2zM1083 396h2v2h-2zM1083 390h2v2h-2zM1084 394h2v2h-2zM1082 401h2v2h-2zM1083 404h2v2h-2zM1084 397h2v2h-2zM1084 392h2v2h-2zM1083 395h2v2h-2zM1084 395h2v2h-2zM1085 393h2v2h-2zM1083 402h2v2h-2zM1084 400h2v2h-2zM1084 396h2v2h-2zM1085 396h2v2h-2zM1086 400h2v2h-2zM1085 399h2v2h-2zM1085 400h2v2h-2zM1085 398h2v2h-2zM1086 399h2v2h-2zM1086 396h2v2h-2zM1085 397h2v2h-2zM1086 397h2v2h-2zM1087 397h2v2h-2zM1086 398h2v2h-2zM1088 398h2v2h-2zM1087 394h2v2h-2zM1088 397h2v2h-2zM1086 395h2v2h-2zM1087 398h2v2h-2zM1087 403h2v2h-2zM1089 394h2v2h-2zM1087 396h2v2h-2zM1087 393h2v2h-2zM1088 395h2v2h-2zM1088 396h2v2h-2zM1089 398h2v2h-2zM1089 400h2v2h-2zM1088 394h2v2h-2zM1089 393h2v2h-2zM1089 397h2v2h-2zM1091 396h2v2h-2zM1090 396h2v2h-2zM1089 396h2v2h-2zM1091 397h2v2h-2zM1090 400h2v2h-2zM1090 394h2v2h-2zM1090 397h2v2h-2zM1091 399h2v2h-2zM1092 398h2v2h-2zM1091 398h2v2h-2zM1090 395h2v2h-2zM1091 395h2v2h-2zM1091 392h2v2h-2zM1091 390h2v2h-2zM1092 395h2v2h-2zM1091 402h2v2h-2zM1092 396h2v2h-2zM1092 399h2v2h-2zM1093 398h2v2h-2zM1093 394h2v2h-2zM1093 401h2v2h-2zM1093 395h2v2h-2zM1094 397h2v2h-2zM1093 397h2v2h-2zM1092 393h2v2h-2zM1093 399h2v2h-2zM1094 398h2v2h-2zM1095 397h2v2h-2zM1095 395h2v2h-2zM1095 396h2v2h-2zM1095 394h2v2h-2zM1096 391h2v2h-2zM1096 401h2v2h-2zM1096 400h2v2h-2zM1094 394h2v2h-2zM1096 397h2v2h-2zM1097 401h2v2h-2zM1095 401h2v2h-2zM1097 395h2v2h-2zM1097 394h2v2h-2zM1095 400h2v2h-2zM1096 403h2v2h-2zM1098 394h2v2h-2zM1098 397h2v2h-2zM1098 395h2v2h-2zM1096 399h2v2h-2zM1097 404h2v2h-2zM1097 402h2v2h-2zM1097 400h2v2h-2zM1097 397h2v2h-2zM1097 398h2v2h-2zM1098 400h2v2h-2zM1098 398h2v2h-2zM1099 396h2v2h-2zM1098 393h2v2h-2zM1099 397h2v2h-2zM1099 404h2v2h-2zM1100 398h2v2h-2zM1098 392h2v2h-2zM1100 400h2v2h-2zM1100 390h2v2h-2zM1100 399h2v2h-2zM1100 394h2v2h-2zM1099 398h2v2h-2zM1101 399h2v2h-2zM1101 396h2v2h-2zM1102 396h2v2h-2zM1101 398h2v2h-2zM1102 400h2v2h-2zM1103 396h2v2h-2zM1101 397h2v2h-2zM1102 399h2v2h-2zM1101 401h2v2h-2zM1102 398h2v2h-2zM1103 398h2v2h-2zM1102 397h2v2h-2zM1103 394h2v2h-2zM1102 394h2v2h-2zM1104 394h2v2h-2zM1103 397h2v2h-2zM1103 403h2v2h-2zM1104 390h2v2h-2zM1103 399h2v2h-2zM1104 395h2v2h-2zM1104 396h2v2h-2zM1104 400h2v2h-2zM1105 401h2v2h-2zM1105 394h2v2h-2zM1105 395h2v2h-2zM1104 397h2v2h-2zM1105 402h2v2h-2zM1106 401h2v2h-2zM1105 397h2v2h-2zM1106 399h2v2h-2zM1105 398h2v2h-2zM1106 397h2v2h-2zM1105 393h2v2h-2zM1107 400h2v2h-2zM1107 393h2v2h-2zM1106 400h2v2h-2zM1107 398h2v2h-2zM1108 394h2v2h-2zM1108 399h2v2h-2zM1106 404h2v2h-2zM1107 394h2v2h-2zM1108 401h2v2h-2zM1108 396h2v2h-2zM1108 391h2v2h-2zM1107 396h2v2h-2zM1108 398h2v2h-2zM1109 393h2v2h-2zM1108 395h2v2h-2zM1109 397h2v2h-2zM1109 399h2v2h-2zM1108 397h2v2h-2zM1108 402h2v2h-2zM1111 391h2v2h-2zM1111 400h2v2h-2zM1109 396h2v2h-2zM1110 399h2v2h-2zM1110 398h2v2h-2zM1110 400h2v2h-2zM1110 396h2v2h-2zM1112 398h2v2h-2zM1111 396h2v2h-2zM1111 406h2v2h-2zM1111 395h2v2h-2zM1111 398h2v2h-2zM1111 401h2v2h-2zM1111 394h2v2h-2zM1113 395h2v2h-2zM1112 392h2v2h-2zM1111 397h2v2h-2zM1112 395h2v2h-2z" fill="#00b2ee" stroke="none"/>
<line x1="1003.5" y1="411" x2="1636.5" y2="411" stroke="#00b2ee" stroke-width="3"/>
<path d="M1004.8 490.4V414.5M1005.8 490.1V414.5M1006.8 490V414.5M1007.8 488.8V414.5M1008.8 488.6V414.5M1009.8 489.3V414.5M1010.8 489.7V414.5M1011.8 490.2V414.5M1012.8 491.5V414.5M1013.8 489.1V414.5M1014.8 490.9V414.5M1015.8 490.3V414.5M1016.8 482V414.5M1017.8 483.5V414.5M1018.8 490.4V414.5M1019.8 485V414.5M1020.8 489.9V414.5M1021.8 489.7V414.5M1022.8 488.6V414.5M1023.8 489.3V414.5M1024.8 488.6V414.5M1025.8 487.1V414.5M1026.8 490.2V414.5M1027.8 487.1V414.5M1028.8 490.9V414.5M1029.8 488.9V414.5M1030.8 489.8V414.5M1031.8 491.2V414.5M1032.8 488.9V414.5M1033.8 491.4V414.5M1034.8 490.6V414.5M1035.8 490.1V414.5M1036.8 490V414.5M1037.8 488.5V414.5M1038.8 490.8V414.5M1039.8 484.7V414.5M1040.8 490.1V414.5M1041.8 490.5V414.5M1042.8 484.9V414.5M1043.8 489.9V414.5M1044.8 490.1V414.5M1045.8 489.2V414.5M1046.8 491.2V414.5M1047.8 490.1V414.5M1048.8 489.7V414.5M1049.8 490.5V414.5M1050.8 489.6V414.5M1051.8 489.7V414.5M1052.8 490.6V414.5M1053.8 482.1V414.5M1054.8 489.3V414.5M1055.8 486.3V414.5M1056.8 491.2V414.5M1057.8 482V414.5M1058.8 490.1V414.5M1059.8 483.2V414.5M1060.8 490.2V414.5M1061.8 490.1V414.5M1062.8 489.6V414.5M1063.8 489.5V414.5M1064.8 490.9V414.5M1065.8 491.3V414.5M1066.8 489.4V414.5M1067.8 490.3V414.5M1068.8 488.7V414.5M1069.8 490.3V414.5M1070.8 490.4V414.5M1071.8 488.7V414.5M1072.8 488.5V414.5M1073.8 489.7V414.5M1074.8 488.6V414.5M1075.8 491.2V414.5M1076.8 489V414.5M1077.8 488V414.5M1078.8 488.9V414.5M1079.8 489.7V414.5M1080.8 488.8V414.5M1081.8 490.6V414.5M1082.8 491.3V414.5M1083.8 490.7V414.5M1084.8 490.8V414.5M1085.8 489.4V414.5M1086.8 483.9V414.5M1087.8 482.1V414.5M1088.8 489.4V414.5M1089.8 490.4V414.5M1090.8 490.1V414.5M1091.8 489.8V414.5M1092.8 490.6V414.5M1093.8 491.4V414.5M1094.8 489.4V414.5M1095.8 489.7V414.5M1096.8 483.3V414.5M1097.8 489.7V414.5M1098.8 489V414.5M1099.8 486.5V414.5M1100.8 489.5V414.5M1101.8 489.9V414.5M1102.8 490.8V414.5M1103.8 491V414.5M1104.8 488.8V414.5M1105.8 489.2V414.5M1106.8 488.5V414.5M1107.8 484.4V414.5M1108.8 489.6V414.5M1109.8 489.5V414.5M1110.8 488.8V414.5" fill="none" stroke="#008a42" stroke-width="1.2"/>
<line x1="1006.9" y1="416.5" x2="1006.9" y2="491.5" stroke="#fff" stroke-width="1" stroke-dasharray="2,2"/>
<polyline points="1111.7,491.5 1113.1,494.5 1113.8,499 1247.5,499 1248.2,489.5 1248.9,472 1396.6,472 1397.3,499 1636.5,499" fill="none" stroke="#008a42" stroke-width="1.3" stroke-linejoin="miter"/>
<rect x="1498.6" y="495.5" width="3" height="3" fill="#008a42" stroke="none" stroke-width="1"/>
<polygon points="1004,500.4 1007,500.4 1007,546.8 1006,546.8 1006,546.6 1004,546.6" fill="#ff6347" stroke="none"/>
<polygon points="1025,500.4 1035,500.4 1035,580.1 1034,580.1 1034,579.5 1033,579.5 1033,579.4 1032,579.4 1032,555.1 1030,555.1 1030,548.4 1029,548.4 1029,581.4 1028,581.4 1028,537.7 1027,537.7 1027,579.9 1026,579.9 1026,581 1025,581" fill="#ff6347" stroke="none"/>
<polygon points="1042,500.4 1055,500.4 1055,528.5 1053,528.5 1053,552.1 1051,552.1 1051,571.8 1050,571.8 1050,571.9 1049,571.9 1049,551.3 1047,551.3 1047,572.1 1046,572.1 1046,540.6 1045,540.6 1045,548.6 1043,548.6 1043,572 1042,572" fill="#ff6347" stroke="none"/>
<polygon points="1068,500.4 1076,500.4 1076,546.1 1075,546.1 1075,575.7 1074,575.7 1074,577 1073,577 1073,575.4 1072,575.4 1072,576.3 1071,576.3 1071,551.7 1070,551.7 1070,532.3 1068,532.3" fill="#ff6347" stroke="none"/>
<polygon points="1077,500.4 1088,500.4 1088,557.2 1086,557.2 1086,572.3 1085,572.3 1085,571.3 1084,571.3 1084,572.1 1083,572.1 1083,571.7 1082,571.7 1082,571.2 1081,571.2 1081,571.5 1080,571.5 1080,536.2 1079,536.2 1079,571.4 1078,571.4 1078,571.8 1077,571.8" fill="#ff6347" stroke="none"/>
<polygon points="1097,500.4 1103,500.4 1103,575.7 1102,575.7 1102,576.5 1101,576.5 1101,576.6 1100,576.6 1100,575.5 1098,575.5 1098,576.3 1097,576.3" fill="#ff6347" stroke="none"/>
<path d="M1004.5 500.4 1004.5 500.4 1005.5 500.4 1005.5 512.2 1006.5 512.2 1006.5 584.5 1007.5 584.5 1007.5 502.5 1008.5 502.5 1008.5 566.7 1009.5 566.7 1009.5 499.5 1010.5 499.5 1010.5 567.8 1011.5 567.8 1011.5 500.4 1012.5 500.4 1012.5 499.9 1013.5 499.9 1013.5 584.5 1014.5 584.5 1014.5 584.5 1015.5 584.5 1015.5 506.8 1016.5 506.8 1016.5 540.4 1017.5 540.4 1017.5 513.9 1018.5 513.9 1018.5 500.4 1019.5 500.4 1019.5 500.4 1020.5 500.4 1020.5 500.4 1021.5 500.4 1021.5 584.5 1022.5 584.5 1022.5 500.4 1023.5 500.4 1023.5 500.4 1024.5 500.4 1024.5 500.4 1025.5 500.4 1025.5 500.4 1026.5 500.4 1026.5 500.4 1027.5 500.4 1027.5 500.4 1028.5 500.4 1028.5 584.5 1029.5 584.5 1029.5 500.4 1030.5 500.4 1030.5 500.4 1031.5 500.4 1031.5 500.4 1032.5 500.4 1032.5 500.4 1033.5 500.4 1033.5 567.8 1034.5 567.8 1034.5 500.4 1035.5 500.4 1035.5 499.5 1036.5 499.5 1036.5 576 1037.5 576 1037.5 584.5 1038.5 584.5 1038.5 515.7 1039.5 515.7 1039.5 505.1 1040.5 505.1 1040.5 510.1 1041.5 510.1 1041.5 500.8 1042.5 500.8 1042.5 510.9 1043.5 510.9 1043.5 505.7 1044.5 505.7 1044.5 540.7 1045.5 540.7 1045.5 572.9 1046.5 572.9 1046.5 509.9 1047.5 509.9 1047.5 584.5 1048.5 584.5 1048.5 580.3 1049.5 580.3 1049.5 511.7 1050.5 511.7 1050.5 501 1051.5 501 1051.5 499.5 1052.5 499.5 1052.5 584.5 1053.5 584.5 1053.5 577.6 1054.5 577.6 1054.5 576.8 1055.5 576.8 1055.5 499.5 1056.5 499.5 1056.5 584.5 1057.5 584.5 1057.5 540.9 1058.5 540.9 1058.5 581.3 1059.5 581.3 1059.5 584.5 1060.5 584.5 1060.5 503.2 1061.5 503.2 1061.5 503.8 1062.5 503.8 1062.5 560.9 1063.5 560.9 1063.5 584.5 1064.5 584.5 1064.5 582.9 1065.5 582.9 1065.5 561.3 1066.5 561.3 1066.5 581.3 1067.5 581.3 1067.5 577.3 1068.5 577.3 1068.5 499.5 1069.5 499.5 1069.5 510.1 1070.5 510.1 1070.5 499.5 1071.5 499.5 1071.5 545.1 1072.5 545.1 1072.5 499.5 1073.5 499.5 1073.5 499.5 1074.5 499.5 1074.5 584.5 1075.5 584.5 1075.5 499.5 1076.5 499.5 1076.5 500.7 1077.5 500.7 1077.5 546.7 1078.5 546.7 1078.5 517.1 1079.5 517.1 1079.5 583.6 1080.5 583.6 1080.5 525.4 1081.5 525.4 1081.5 573.7 1082.5 573.7 1082.5 575.9 1083.5 575.9 1083.5 521 1084.5 521 1084.5 503.4 1085.5 503.4 1085.5 550.9 1086.5 550.9 1086.5 500.4 1087.5 500.4 1087.5 500.4 1088.5 500.4 1088.5 500.4 1089.5 500.4 1089.5 521.7 1090.5 521.7 1090.5 512.3 1091.5 512.3 1091.5 584.5 1092.5 584.5 1092.5 564.2 1093.5 564.2 1093.5 520.9 1094.5 520.9 1094.5 510 1095.5 510 1095.5 544.4 1096.5 544.4 1096.5 580.4 1097.5 580.4 1097.5 507.9 1098.5 507.9 1098.5 500.4 1099.5 500.4 1099.5 500.4 1100.5 500.4 1100.5 584.5 1101.5 584.5 1101.5 500.4 1102.5 500.4 1102.5 500.4 1103.5 500.4 1103.5 500.4 1104.5 500.4 1104.5 546.2 1105.5 546.2 1105.5 514.3 1106.5 514.3 1106.5 500.4 1107.5 500.4 1107.5 584.5 1108.5 584.5 1108.5 539.4 1109.5 539.4 1109.5 500.4 1110.5 500.4" fill="none" stroke="#ff6347" stroke-width="1"/>
<polyline points="1110.3,499.5 1111.7,499.5 1111.7,565.7 1126.5,565.7 1126.5,529.9" fill="none" stroke="#ff6347" stroke-width="1.1" stroke-linejoin="miter"/>
<polyline points="1110.3,669 1636.5,669" fill="none" stroke="#f0a800" stroke-width="1.5" stroke-linejoin="miter"/>
<polygon points="1004.8,697.9 1005.8,694.2 1006.8,691.1 1007.8,686.8 1008.8,684.7 1009.8,684.4 1010.8,683.9 1011.8,683.7 1012.8,682.6 1013.8,681.8 1014.8,681.3 1015.8,680.8 1016.8,679.2 1017.8,677.9 1018.8,676.3 1019.8,674.8 1020.8,673.1 1021.8,671.6 1022.8,670.9 1023.8,670.7 1024.8,670.7 1025.8,670.8 1026.8,670.4 1027.8,671 1028.8,670.8 1029.8,670.9 1030.8,671.2 1031.8,670.6 1032.8,670.7 1033.8,670.5 1034.8,670.7 1035.8,671.3 1036.8,671.3 1037.8,670.8 1038.8,670.9 1039.8,671.1 1040.8,670.9 1041.8,671 1042.8,670.6 1043.8,670.3 1044.8,670.4 1045.8,671.2 1046.8,670.3 1047.8,671.1 1048.8,670.4 1049.8,670.8 1050.8,671 1051.8,670.4 1052.8,670.4 1053.8,671.1 1054.8,671 1055.8,670.8 1056.8,670.4 1057.8,671.2 1058.8,670.8 1059.8,671 1060.8,671 1061.8,670.9 1062.8,670.5 1063.8,670.5 1064.8,671 1065.8,671.3 1066.8,670.4 1067.8,670.3 1068.8,670.8 1069.8,671.1 1070.8,670.4 1071.8,671.1 1072.8,670.7 1073.8,671 1074.8,670.7 1075.8,670.9 1076.8,670.8 1077.8,671.1 1078.8,670.7 1079.8,670.6 1080.8,670.9 1081.8,671.1 1082.8,670.9 1083.8,670.3 1084.8,670.4 1085.8,671.1 1086.8,670.9 1087.8,670.9 1088.8,670.5 1089.8,671.3 1090.8,672.3 1091.8,682.2 1092.8,692.7 1093.8,706.3 1094.8,700.4 1095.8,685.4 1096.8,678 1097.8,675.2 1098.8,672.9 1099.8,671.3 1100.8,670.4 1101.8,670.7 1102.8,671.2 1103.8,670.8 1104.8,670.8 1105.8,670.7 1106.8,671 1107.8,671.2 1108.8,670.4 1109.8,670.3 1110.8,677.9 1110.8,685.8 1109.8,680.2 1108.8,679.8 1107.8,679 1106.8,686.7 1105.8,678.4 1104.8,683.3 1103.8,680.3 1102.8,680 1101.8,680.7 1100.8,679.5 1099.8,687.4 1098.8,681.5 1097.8,682.9 1096.8,694 1095.8,694.1 1094.8,702.5 1093.8,710 1092.8,695.3 1091.8,688.6 1090.8,680.6 1089.8,678.1 1088.8,679.2 1087.8,681.9 1086.8,677.4 1085.8,679.3 1084.8,678.3 1083.8,678.8 1082.8,678.4 1081.8,677.9 1080.8,679.8 1079.8,680.1 1078.8,683.2 1077.8,680.8 1076.8,678.6 1075.8,679.3 1074.8,679 1073.8,679.5 1072.8,680 1071.8,678.5 1070.8,679.9 1069.8,679.8 1068.8,682.9 1067.8,678.5 1066.8,688.4 1065.8,680.8 1064.8,678.3 1063.8,678.5 1062.8,680.6 1061.8,679.3 1060.8,681.5 1059.8,678.4 1058.8,681.9 1057.8,678.3 1056.8,679.4 1055.8,678.4 1054.8,679.9 1053.8,680.6 1052.8,680.8 1051.8,688.5 1050.8,687.2 1049.8,680 1048.8,680.1 1047.8,688.4 1046.8,687.7 1045.8,680.8 1044.8,679.3 1043.8,681.5 1042.8,680.8 1041.8,680.8 1040.8,688.5 1039.8,679.2 1038.8,679.5 1037.8,690.8 1036.8,692.9 1035.8,682 1034.8,681.5 1033.8,679.6 1032.8,680.4 1031.8,680.5 1030.8,682.5 1029.8,679.6 1028.8,681.2 1027.8,679.3 1026.8,680.9 1025.8,680.8 1024.8,682.8 1023.8,682.3 1022.8,683 1021.8,680.2 1020.8,682.7 1019.8,685.1 1018.8,697.6 1017.8,691.8 1016.8,689.3 1015.8,689.6 1014.8,690.2 1013.8,692.2 1012.8,690.2 1011.8,693.9 1010.8,694.9 1009.8,702.5 1008.8,696.9 1007.8,697 1006.8,698.6 1005.8,703.5 1004.8,705.7" fill="#4a78ff" stroke="none"/>
<polyline points="1110.3,675 1111.7,700 1112.8,704.2 1113.1,754.5" fill="none" stroke="#4a78ff" stroke-width="1.3" stroke-linejoin="miter"/>
<polygon points="1004,792.9 1005,792.9 1005,795.1 1006,795.1 1006,792.9 1007,792.9 1007,789.7 1008,789.7 1008,791 1010,791 1010,789.9 1014,789.9 1014,790.2 1015,790.2 1015,789.1 1016,789.1 1016,789.7 1017,789.7 1017,785.9 1019,785.9 1019,779.5 1020,779.5 1020,779 1021,779 1021,779.8 1022,779.8 1022,779 1023,779 1023,779.9 1024,779.9 1024,778.9 1025,778.9 1025,778.2 1026,778.2 1026,778.5 1027,778.5 1027,779.8 1028,779.8 1028,779.7 1029,779.7 1029,780.5 1030,780.5 1030,778.2 1031,778.2 1031,778.7 1032,778.7 1032,779.9 1033,779.9 1033,780.3 1034,780.3 1034,778.7 1035,778.7 1035,780 1036,780 1036,780.3 1037,780.3 1037,778.7 1038,778.7 1038,779.4 1039,779.4 1039,778.8 1040,778.8 1040,778.9 1041,778.9 1041,779.7 1042,779.7 1042,778.5 1043,778.5 1043,779.4 1044,779.4 1044,778.2 1045,778.2 1045,780.2 1046,780.2 1046,780.5 1047,780.5 1047,779.5 1048,779.5 1048,779 1049,779 1049,778.3 1050,778.3 1050,778.6 1051,778.6 1051,779 1052,779 1052,778.3 1053,778.3 1053,779.3 1054,779.3 1054,779.8 1056,779.8 1056,779.7 1057,779.7 1057,779.6 1058,779.6 1058,778.3 1060,778.3 1060,778.8 1061,778.8 1061,780.4 1062,780.4 1062,778.3 1063,778.3 1063,780.3 1064,780.3 1064,779.2 1065,779.2 1065,778.6 1066,778.6 1066,778.2 1067,778.2 1067,780.5 1068,780.5 1068,780.2 1069,780.2 1069,779.2 1070,779.2 1070,779.7 1072,779.7 1072,778.3 1074,778.3 1074,778.8 1075,778.8 1075,778.5 1076,778.5 1076,779.6 1077,779.6 1077,779.9 1078,779.9 1078,779.1 1079,779.1 1079,778.9 1081,778.9 1081,779.5 1082,779.5 1082,780 1083,780 1083,779.1 1084,779.1 1084,780 1085,780 1085,779.7 1086,779.7 1086,778.4 1087,778.4 1087,780 1088,780 1088,778.8 1089,778.8 1089,778.5 1090,778.5 1090,779.3 1091,779.3 1091,776.9 1092,776.9 1092,794.3 1093,794.3 1093,802 1094,802 1094,808 1095,808 1095,813.3 1096,813.3 1096,795.1 1097,795.1 1097,786.7 1098,786.7 1098,779 1099,779 1099,774.9 1100,774.9 1100,776.3 1101,776.3 1101,776.7 1102,776.7 1102,775.8 1103,775.8 1103,776.5 1105,776.5 1105,775.6 1106,775.6 1106,776.1 1107,776.1 1107,777.1 1108,777.1 1108,775.8 1109,775.8 1109,776.8 1110,776.8 1110,776 1112,776 1112,818.2 1113,818.2 1113,821.9 1114,821.9 1114,833.6 1115,833.6 1115,834.8 1114,834.8 1114,827.8 1113,827.8 1113,826.3 1112,826.3 1112,798.7 1110,798.7 1110,800.6 1109,800.6 1109,801.1 1108,801.1 1108,801.2 1107,801.2 1107,801 1106,801 1106,801.5 1105,801.5 1105,801.1 1104,801.1 1104,800.9 1103,800.9 1103,801.5 1102,801.5 1102,801 1101,801 1101,800.6 1100,800.6 1100,802.1 1099,802.1 1099,801.4 1098,801.4 1098,804.3 1097,804.3 1097,806.7 1096,806.7 1096,814.8 1095,814.8 1095,813.3 1094,813.3 1094,811.9 1093,811.9 1093,810.6 1092,810.6 1092,802.8 1090,802.8 1090,800.8 1089,800.8 1089,801 1088,801 1088,801.8 1087,801.8 1087,802.3 1086,802.3 1086,801.8 1085,801.8 1085,802.6 1084,802.6 1084,802 1083,802 1083,801.1 1082,801.1 1082,800.9 1081,800.9 1081,802.6 1080,802.6 1080,800.6 1079,800.6 1079,801.4 1078,801.4 1078,800.8 1077,800.8 1077,800.6 1076,800.6 1076,801.9 1075,801.9 1075,802.2 1074,802.2 1074,801.2 1073,801.2 1073,802.5 1072,802.5 1072,801.5 1071,801.5 1071,802.2 1070,802.2 1070,802.5 1069,802.5 1069,802 1068,802 1068,800.9 1067,800.9 1067,800.7 1066,800.7 1066,801.7 1065,801.7 1065,800.8 1064,800.8 1064,801 1063,801 1063,801.1 1062,801.1 1062,800.9 1061,800.9 1061,801.9 1060,801.9 1060,793.7 1059,793.7 1059,800.7 1058,800.7 1058,801.5 1056,801.5 1056,794 1054,794 1054,801.2 1053,801.2 1053,796.9 1052,796.9 1052,802.1 1051,802.1 1051,801.4 1050,801.4 1050,800.9 1049,800.9 1049,800.8 1048,800.8 1048,801.8 1047,801.8 1047,800.7 1046,800.7 1046,801 1045,801 1045,801.4 1044,801.4 1044,800.7 1043,800.7 1043,802 1042,802 1042,795.9 1041,795.9 1041,800.8 1040,800.8 1040,801.6 1039,801.6 1039,801.9 1038,801.9 1038,802 1037,802 1037,802.3 1036,802.3 1036,801.4 1035,801.4 1035,794.2 1034,794.2 1034,800.9 1033,800.9 1033,802.5 1032,802.5 1032,801.3 1030,801.3 1030,801.7 1029,801.7 1029,801.5 1028,801.5 1028,801.8 1027,801.8 1027,802.1 1026,802.1 1026,801.7 1025,801.7 1025,801.6 1024,801.6 1024,802.5 1023,802.5 1023,800.6 1022,800.6 1022,801.1 1021,801.1 1021,802.4 1020,802.4 1020,802 1019,802 1019,799.3 1017,799.3 1017,806.9 1016,806.9 1016,807.1 1015,807.1 1015,807 1014,807 1014,802.3 1012,802.3 1012,802.8 1010,802.8 1010,807.8 1009,807.8 1009,806.3 1008,806.3 1008,800.5 1007,800.5 1007,813.6 1006,813.6 1006,814.1 1005,814.1 1005,813 1004,813" fill="#008a00" stroke="none"/>
<polygon points="1004,823.1 1005,823.1 1005,823.6 1006,823.6 1006,821.9 1007,821.9 1007,822.7 1008,822.7 1008,822.6 1009,822.6 1009,821.8 1010,821.8 1010,823.4 1011,823.4 1011,822.4 1012,822.4 1012,823.8 1013,823.8 1013,822.6 1014,822.6 1014,822 1015,822 1015,822.9 1016,822.9 1016,823.1 1018,823.1 1018,821.7 1019,821.7 1019,820.3 1020,820.3 1020,821.9 1021,821.9 1021,821.1 1023,821.1 1023,822 1024,822 1024,821 1025,821 1025,820.8 1026,820.8 1026,820.6 1027,820.6 1027,820.4 1028,820.4 1028,820.3 1029,820.3 1029,821.3 1031,821.3 1031,821 1032,821 1032,820.5 1033,820.5 1033,820.8 1034,820.8 1034,820.6 1035,820.6 1035,822 1037,822 1037,821.2 1038,821.2 1038,820.3 1039,820.3 1039,821.3 1040,821.3 1040,820.9 1042,820.9 1042,820.1 1043,820.1 1043,821.7 1046,821.7 1046,821.9 1047,821.9 1047,820.7 1048,820.7 1048,821.3 1049,821.3 1049,820.1 1051,820.1 1051,822.2 1052,822.2 1052,820.5 1055,820.5 1055,821.9 1056,821.9 1056,822.1 1057,822.1 1057,821.7 1058,821.7 1058,820.4 1059,820.4 1059,821.7 1060,821.7 1060,820.9 1061,820.9 1061,820.8 1062,820.8 1062,821.6 1063,821.6 1063,821.7 1064,821.7 1064,821 1065,821 1065,819.9 1066,819.9 1066,820.2 1067,820.2 1067,819.9 1068,819.9 1068,821.2 1069,821.2 1069,820.2 1070,820.2 1070,820.7 1071,820.7 1071,820.4 1072,820.4 1072,820.5 1073,820.5 1073,821.8 1074,821.8 1074,822 1075,822 1075,821.7 1076,821.7 1076,820.2 1077,820.2 1077,821.5 1078,821.5 1078,820.1 1079,820.1 1079,820.8 1080,820.8 1080,821.5 1081,821.5 1081,819.7 1082,819.7 1082,820.1 1083,820.1 1083,821.7 1084,821.7 1084,820.6 1085,820.6 1085,821.6 1086,821.6 1086,820.2 1089,820.2 1089,821.1 1090,821.1 1090,819.7 1092,819.7 1092,820.4 1093,820.4 1093,824.9 1094,824.9 1094,824.8 1095,824.8 1095,822.9 1096,822.9 1096,822.1 1097,822.1 1097,819.7 1098,819.7 1098,820.6 1099,820.6 1099,819.9 1100,819.9 1100,820.4 1101,820.4 1101,821.9 1102,821.9 1102,819.7 1103,819.7 1103,821 1104,821 1104,820.7 1105,820.7 1105,821.7 1106,821.7 1106,820.3 1107,820.3 1107,821.7 1108,821.7 1108,821.6 1110,821.6 1110,820.4 1111,820.4 1111,827.9 1112,827.9 1112,831.7 1113,831.7 1113,834.2 1114,834.2 1114,838.3 1115,838.3 1115,838.5 1114,838.5 1114,837 1113,837 1113,836.1 1112,836.1 1112,835.2 1111,835.2 1111,835 1110,835 1110,834.9 1109,834.9 1109,835.2 1108,835.2 1108,834.9 1107,834.9 1107,835 1106,835 1106,835.2 1105,835.2 1105,835.1 1104,835.1 1104,835.6 1103,835.6 1103,835.4 1102,835.4 1102,835.7 1101,835.7 1101,835.6 1100,835.6 1100,835.9 1099,835.9 1099,836.1 1097,836.1 1097,836 1096,836 1096,836.4 1095,836.4 1095,836.3 1094,836.3 1094,836.5 1093,836.5 1093,836.4 1092,836.4 1092,835.3 1091,835.3 1091,835.1 1090,835.1 1090,835.2 1089,835.2 1089,830.9 1087,830.9 1087,834.9 1086,834.9 1086,834.8 1085,834.8 1085,835.1 1083,835.1 1083,835 1082,835 1082,834.7 1081,834.7 1081,834.9 1078,834.9 1078,834.7 1077,834.7 1077,834.9 1076,834.9 1076,834.8 1075,834.8 1075,835.2 1074,835.2 1074,834.7 1073,834.7 1073,834.8 1072,834.8 1072,834.7 1071,834.7 1071,835.1 1070,835.1 1070,829.5 1069,829.5 1069,834.8 1068,834.8 1068,835 1067,835 1067,834.6 1066,834.6 1066,835 1065,835 1065,827.8 1064,827.8 1064,834.8 1062,834.8 1062,835.2 1061,835.2 1061,834.8 1060,834.8 1060,834.7 1059,834.7 1059,835.2 1058,835.2 1058,834.8 1057,834.8 1057,834.9 1056,834.9 1056,835.1 1055,835.1 1055,828.2 1052,828.2 1052,835.2 1051,835.2 1051,826.7 1049,826.7 1049,835.2 1048,835.2 1048,834.8 1047,834.8 1047,834.7 1046,834.7 1046,835 1045,835 1045,829.3 1043,829.3 1043,834.8 1042,834.8 1042,828.1 1040,828.1 1040,835.1 1037,835.1 1037,834.8 1036,834.8 1036,828.2 1035,828.2 1035,834.8 1034,834.8 1034,835.1 1032,835.1 1032,834.9 1031,834.9 1031,828.6 1029,828.6 1029,834.9 1028,834.9 1028,835 1027,835 1027,835.2 1026,835.2 1026,834.8 1025,834.8 1025,830.1 1024,830.1 1024,835.1 1023,835.1 1023,835.2 1022,835.2 1022,834.7 1021,834.7 1021,835.1 1019,835.1 1019,834.8 1018,834.8 1018,835.1 1017,835.1 1017,834.8 1015,834.8 1015,835.1 1012,835.1 1012,834.8 1011,834.8 1011,835.1 1009,835.1 1009,835 1008,835 1008,835.1 1007,835.1 1007,834.7 1006,834.7 1006,835 1005,835 1005,835.2 1004,835.2" fill="#00c800" stroke="none"/>
<polyline points="1114.5,838.6 1636.5,838.6" fill="none" stroke="#00aa00" stroke-width="2" stroke-linejoin="miter"/>
<polygon points="1004,893.3 1005,893.3 1005,893.7 1006,893.7 1006,893 1007,893 1007,890.7 1008,890.7 1008,890.3 1009,890.3 1009,889.3 1010,889.3 1010,890.1 1011,890.1 1011,889.8 1012,889.8 1012,888.4 1013,888.4 1013,888.7 1014,888.7 1014,889.2 1015,889.2 1015,889.7 1016,889.7 1016,888 1017,888 1017,888.2 1018,888.2 1018,889.7 1019,889.7 1019,879.6 1020,879.6 1020,879.3 1021,879.3 1021,878.6 1022,878.6 1022,880.2 1023,880.2 1023,879.9 1024,879.9 1024,879.3 1025,879.3 1025,878.8 1026,878.8 1026,879.5 1027,879.5 1027,880.1 1028,880.1 1028,880 1029,880 1029,880.2 1030,880.2 1030,879.5 1031,879.5 1031,878.9 1032,878.9 1032,880.1 1033,880.1 1033,880.3 1034,880.3 1034,879.6 1035,879.6 1035,880.2 1036,880.2 1036,879.2 1037,879.2 1037,880.3 1040,880.3 1040,879 1041,879 1041,880.5 1044,880.5 1044,879.3 1046,879.3 1046,879.9 1047,879.9 1047,881 1048,881 1048,880 1049,880 1049,879.2 1050,879.2 1050,879.8 1052,879.8 1052,880.1 1053,880.1 1053,880.6 1054,880.6 1054,880.9 1055,880.9 1055,880.4 1056,880.4 1056,880.7 1057,880.7 1057,880.6 1058,880.6 1058,880.3 1059,880.3 1059,880.1 1060,880.1 1060,880.3 1061,880.3 1061,880.6 1062,880.6 1062,880.9 1063,880.9 1063,881.4 1064,881.4 1064,880 1065,880 1065,879.8 1066,879.8 1066,880.2 1067,880.2 1067,880.7 1069,880.7 1069,880.3 1070,880.3 1070,881.1 1071,881.1 1071,880.5 1072,880.5 1072,879.9 1073,879.9 1073,880.7 1074,880.7 1074,881 1075,881 1075,880.3 1076,880.3 1076,881.7 1077,881.7 1077,881 1078,881 1078,881.1 1079,881.1 1079,880.7 1080,880.7 1080,880.1 1081,880.1 1081,881.4 1082,881.4 1082,881.1 1083,881.1 1083,880.6 1084,880.6 1084,880.2 1085,880.2 1085,880.4 1086,880.4 1086,880.1 1088,880.1 1088,880.7 1089,880.7 1089,881.6 1090,881.6 1090,880.2 1091,880.2 1091,881 1092,881 1092,886.6 1094,886.6 1094,911.1 1095,911.1 1095,913.7 1096,913.7 1096,893.5 1097,893.5 1097,881.5 1098,881.5 1098,881.8 1099,881.8 1099,881.4 1100,881.4 1100,882.1 1101,882.1 1101,881.9 1102,881.9 1102,880.6 1103,880.6 1103,881.3 1104,881.3 1104,882 1105,882 1105,882.1 1106,882.1 1106,882 1107,882 1107,881.2 1108,881.2 1108,882 1109,882 1109,880.6 1110,880.6 1110,881.6 1111,881.6 1111,908.7 1112,908.7 1112,911 1113,911 1113,914.4 1114,914.4 1114,918.5 1115,918.5 1115,919.9 1114,919.9 1114,916.2 1113,916.2 1113,913.5 1112,913.5 1112,910.5 1111,910.5 1111,906.9 1110,906.9 1110,906.2 1109,906.2 1109,906.8 1108,906.8 1108,906.7 1107,906.7 1107,906.2 1105,906.2 1105,907 1104,907 1104,906.4 1103,906.4 1103,906.9 1102,906.9 1102,906.4 1101,906.4 1101,906.3 1100,906.3 1100,906.4 1099,906.4 1099,906.5 1098,906.5 1098,906.8 1097,906.8 1097,909.7 1096,909.7 1096,915 1095,915 1095,915.2 1094,915.2 1094,905.5 1092,905.5 1092,908 1091,908 1091,907.8 1090,907.8 1090,907.9 1088,907.9 1088,907.6 1087,907.6 1087,907.5 1086,907.5 1086,907.4 1085,907.4 1085,908 1084,908 1084,904.7 1083,904.7 1083,907.7 1082,907.7 1082,908 1081,908 1081,907.5 1079,907.5 1079,907.8 1078,907.8 1078,907.9 1077,907.9 1077,907.7 1076,907.7 1076,907.4 1075,907.4 1075,907.9 1074,907.9 1074,907.7 1073,907.7 1073,907.9 1072,907.9 1072,907.5 1071,907.5 1071,907.8 1070,907.8 1070,908.1 1069,908.1 1069,903.5 1067,903.5 1067,907.5 1066,907.5 1066,907.8 1065,907.8 1065,908.1 1064,908.1 1064,907.6 1062,907.6 1062,908.1 1061,908.1 1061,908 1060,908 1060,908.1 1059,908.1 1059,907.5 1058,907.5 1058,907.4 1057,907.4 1057,908 1056,908 1056,907.4 1055,907.4 1055,907.6 1054,907.6 1054,907.4 1052,907.4 1052,907.3 1051,907.3 1051,907.4 1050,907.4 1050,901 1049,901 1049,907.6 1048,907.6 1048,900.3 1047,900.3 1047,907.9 1045,907.9 1045,907.7 1044,907.7 1044,901.7 1041,901.7 1041,907.7 1040,907.7 1040,903.9 1037,903.9 1037,908 1036,908 1036,907.5 1035,907.5 1035,907.4 1033,907.4 1033,907.5 1032,907.5 1032,908.1 1031,908.1 1031,908 1030,908 1030,907.8 1029,907.8 1029,908 1028,908 1028,907.4 1027,907.4 1027,907.8 1026,907.8 1026,908.1 1024,908.1 1024,907.9 1023,907.9 1023,907.7 1021,907.7 1021,908.1 1019,908.1 1019,909.6 1018,909.6 1018,909.7 1017,909.7 1017,909.9 1016,909.9 1016,909.8 1015,909.8 1015,910 1014,910 1014,910.2 1013,910.2 1013,909.7 1012,909.7 1012,909.8 1011,909.8 1011,910.3 1010,910.3 1010,909.7 1009,909.7 1009,910.1 1008,910.1 1008,910.3 1007,910.3 1007,913.5 1006,913.5 1006,913.2 1005,913.2 1005,913.5 1004,913.5" fill="#ee82ee" stroke="none"/>
<line x1="1094.9" y1="876.4" x2="1094.9" y2="911.6" stroke="#ee82ee" stroke-width="1"/>
<polyline points="1114.5,924.7 1636.5,924.7" fill="none" stroke="#ee82ee" stroke-width="2" stroke-linejoin="miter"/>
<line x1="1491.5" y1="925.3" x2="1491.5" y2="893" stroke="#ee82ee" stroke-width="1.2"/>
<line x1="1586.5" y1="925.3" x2="1586.5" y2="901.5" stroke="#ee82ee" stroke-width="1.2"/>
<line x1="1606.2" y1="925.3" x2="1606.2" y2="916.7" stroke="#ee82ee" stroke-width="1.2"/>
<line x1="1618.8" y1="925.3" x2="1618.8" y2="915" stroke="#ee82ee" stroke-width="1.2"/>
<line x1="1628" y1="925.3" x2="1628" y2="916.7" stroke="#ee82ee" stroke-width="1.2"/>
<line x1="1586.5" y1="924" x2="1620.2" y2="924" stroke="#000" stroke-width="1"/>
<path d="M1004.8 1010.5V945.8M1005.8 1010.5V945M1006.8 1010.5V947.4M1007.8 1010.5V947.2M1008.8 1010.5V947.3M1009.8 1010.5V948.7M1010.8 1010.5V944.4M1011.8 1010.5V941.6M1012.8 1010.5V943.6M1013.8 1010.5V947.9M1014.8 1010.5V942M1015.8 1010.5V947.5M1016.8 1010.5V945.3M1017.8 1010.5V931.5M1018.8 1010.5V930.8M1019.8 1010.5V948.1M1020.8 1010.5V934.7M1021.8 1010.5V944.7M1022.8 1010.5V948.8M1023.8 1010.5V946.9M1024.8 1010.5V945.9M1025.8 1010.5V931.9M1026.8 1010.5V942.5M1027.8 1010.5V933.8M1028.8 1010.5V940M1029.8 1010.5V941.5M1030.8 1010.5V940.7M1031.8 1010.5V948.6M1032.8 1010.5V938.5M1033.8 1010.5V940.7M1034.8 1010.5V946.9M1035.8 1010.5V944M1036.8 1010.5V945.8M1037.8 1010.5V942.4M1038.8 1010.5V945.1M1039.8 1010.5V933.1M1040.8 1010.5V943.5M1041.8 1010.5V934M1042.8 1010.5V949.3M1043.8 1010.5V941.7M1044.8 1010.5V941M1045.8 1010.5V942.3M1046.8 1010.5V946.4M1047.8 1010.5V945.1M1048.8 1010.5V942.2M1049.8 1010.5V940.7M1050.8 1010.5V945.7M1051.8 1010.5V944.6M1052.8 1010.5V943.9M1053.8 1010.5V945.9M1054.8 1010.5V943.8M1055.8 1010.5V945.7M1056.8 1010.5V942.2M1057.8 1010.5V938.8M1058.8 1010.5V946.6M1059.8 1010.5V937.3M1060.8 1010.5V946.6M1061.8 1010.5V947.1M1062.8 1010.5V949M1063.8 1010.5V945.1M1064.8 1010.5V944.7M1065.8 1010.5V948M1066.8 1010.5V947.8M1067.8 1010.5V947.5M1068.8 1010.5V944.3M1069.8 1010.5V941M1070.8 1010.5V949.4M1071.8 1010.5V943.3M1072.8 1010.5V942.6M1073.8 1010.5V945M1074.8 1010.5V949.4M1075.8 1010.5V946.7M1076.8 1010.5V944.2M1077.8 1010.5V947.9M1078.8 1010.5V941.7M1079.8 1010.5V940.9M1080.8 1010.5V941.7M1081.8 1010.5V938.5M1082.8 1010.5V940.2M1083.8 1010.5V949.1M1084.8 1010.5V947.9M1085.8 1010.5V940.9M1086.8 1010.5V941.7M1087.8 1010.5V942.5M1088.8 1010.5V938.6M1089.8 1010.5V945.3M1090.8 1010.5V936.6M1091.8 1010.5V942.3M1092.8 1010.5V946.6M1093.8 1010.5V947.7M1094.8 1010.5V941.6M1095.8 1010.5V944.6M1096.8 1010.5V944.9M1097.8 1010.5V947.7M1098.8 1010.5V939.6M1099.8 1010.5V942.1M1100.8 1010.5V945.8M1101.8 1010.5V939.4M1102.8 1010.5V948M1103.8 1010.5V937.6M1104.8 1010.5V937.5M1105.8 1010.5V943.4M1106.8 1010.5V946M1107.8 1010.5V942.1M1108.8 1010.5V947.5M1109.8 1010.5V944.9M1110.8 1010.5V939.9" fill="none" stroke="#0000ff" stroke-width="1.2"/>
<path d="M1004.8 1010.5V945.8M1005.8 1010.5V945M1006.8 1010.5V947.4M1007.8 1010.5V947.2M1008.8 1010.5V947.3M1009.8 1010.5V948.7M1010.8 1010.5V944.4M1011.8 1010.5V941.6M1012.8 1010.5V943.6M1013.8 1010.5V947.9M1014.8 1010.5V942M1015.8 1010.5V947.5M1016.8 1010.5V945.3M1017.8 1010.5V931.5M1018.8 1010.5V930.8M1019.8 1010.5V948.1M1020.8 1010.5V934.7M1021.8 1010.5V944.7M1022.8 1010.5V948.8M1023.8 1010.5V946.9M1024.8 1010.5V945.9M1025.8 1010.5V931.9M1026.8 1010.5V942.5M1027.8 1010.5V933.8M1028.8 1010.5V940M1029.8 1010.5V941.5M1030.8 1010.5V940.7M1031.8 1010.5V948.6M1032.8 1010.5V938.5M1033.8 1010.5V940.7M1034.8 1010.5V946.9M1035.8 1010.5V944M1036.8 1010.5V945.8M1037.8 1010.5V942.4M1038.8 1010.5V945.1M1039.8 1010.5V933.1M1040.8 1010.5V943.5M1041.8 1010.5V934M1042.8 1010.5V949.3M1043.8 1010.5V941.7M1044.8 1010.5V941M1045.8 1010.5V942.3M1046.8 1010.5V946.4M1047.8 1010.5V945.1M1048.8 1010.5V942.2M1049.8 1010.5V940.7M1050.8 1010.5V945.7M1051.8 1010.5V944.6M1052.8 1010.5V943.9M1053.8 1010.5V945.9M1054.8 1010.5V943.8M1055.8 1010.5V945.7M1056.8 1010.5V942.2M1057.8 1010.5V938.8M1058.8 1010.5V946.6M1059.8 1010.5V937.3M1060.8 1010.5V946.6M1061.8 1010.5V947.1M1062.8 1010.5V949M1063.8 1010.5V945.1M1064.8 1010.5V944.7M1065.8 1010.5V948M1066.8 1010.5V947.8M1067.8 1010.5V947.5M1068.8 1010.5V944.3M1069.8 1010.5V941M1070.8 1010.5V949.4M1071.8 1010.5V943.3M1072.8 1010.5V942.6M1073.8 1010.5V945M1074.8 1010.5V949.4M1075.8 1010.5V946.7M1076.8 1010.5V944.2M1077.8 1010.5V947.9M1078.8 1010.5V941.7M1079.8 1010.5V940.9M1080.8 1010.5V941.7M1081.8 1010.5V938.5M1082.8 1010.5V940.2M1083.8 1010.5V949.1M1084.8 1010.5V947.9M1085.8 1010.5V940.9M1086.8 1010.5V941.7M1087.8 1010.5V942.5M1088.8 1010.5V938.6M1089.8 1010.5V945.3M1090.8 1010.5V936.6M1091.8 1010.5V942.3M1092.8 1010.5V946.6M1093.8 1010.5V947.7M1094.8 1010.5V941.6M1095.8 1010.5V944.6M1096.8 1010.5V944.9M1097.8 1010.5V947.7M1098.8 1010.5V939.6M1099.8 1010.5V942.1M1100.8 1010.5V945.8M1101.8 1010.5V939.4M1102.8 1010.5V948M1103.8 1010.5V937.6M1104.8 1010.5V937.5M1105.8 1010.5V943.4M1106.8 1010.5V946M1107.8 1010.5V942.1M1108.8 1010.5V947.5M1109.8 1010.5V944.9M1110.8 1010.5V939.9M1111.7 1010.5V1001.3M1112.7 1010.5V1002.8M1113.7 1010.5V998.3M1114.7 1010.5V1005.7M1115.7 1010.5V997M1116.7 1010.5V1000.6M1117.7 1010.5V1006.8M1118.7 1010.5V1000.3M1119.7 1010.5V1006.4M1120.7 1010.5V1001.3M1121.7 1010.5V999.4M1122.7 1010.5V1004.1M1123.7 1010.5V1007.2M1124.7 1010.5V1005.1M1125.7 1010.5V1007.4M1126.7 1010.5V1003.7M1127.7 1010.5V1008.5M1128.7 1010.5V1004.2M1129.7 1010.5V1005M1130.7 1010.5V1002.3M1131.7 1010.5V1005.1M1132.7 1010.5V1004.8M1133.7 1010.5V1004.3M1134.7 1010.5V1003.7M1135.7 1010.5V1007.6M1136.7 1010.5V1007.7M1137.7 1010.5V1003.1M1138.7 1010.5V1005.2M1139.7 1010.5V1005.6M1140.7 1010.5V1003.7M1141.7 1010.5V999.6M1142.7 1010.5V1004M1143.7 1010.5V1007.1M1144.7 1010.5V1004.5M1145.7 1010.5V999.7M1146.7 1010.5V1006.2M1147.7 1010.5V1007.8M1148.7 1010.5V1005.7M1149.7 1010.5V1006.6M1150.7 1010.5V1003.6M1151.7 1010.5V1006.3M1152.7 1010.5V1003.5M1153.7 1010.5V1007.6M1154.7 1010.5V1006M1155.7 1010.5V1006.7M1156.7 1010.5V1005.7M1157.7 1010.5V1008.1M1158.7 1010.5V1004.4M1159.7 1010.5V1004.9M1160.7 1010.5V1006.1M1161.7 1010.5V1003.8M1162.7 1010.5V1003.5M1163.7 1010.5V1002.5M1164.7 1010.5V1007.2M1165.7 1010.5V1005.7M1166.7 1010.5V1004.3M1167.7 1010.5V1008.1M1168.7 1010.5V1007.2M1169.7 1010.5V1005M1170.7 1010.5V1006.3M1171.7 1010.5V1005.6M1172.7 1010.5V1003.3M1173.7 1010.5V1007.3M1174.7 1010.5V1004.1M1175.7 1010.5V1002.9M1176.7 1010.5V1006.7M1177.7 1010.5V1003.3M1178.7 1010.5V1008.6M1179.7 1010.5V1006.1M1180.7 1010.5V1006M1181.7 1010.5V1006.1M1182.7 1010.5V1004.6M1183.7 1010.5V1008.1M1184.7 1010.5V998.9M1185.7 1010.5V1006.2M1186.7 1010.5V1002.7M1187.7 1010.5V1008.9M1188.7 1010.5V1009.1M1189.7 1010.5V1007.9M1190.7 1010.5V1008.7M1191.7 1010.5V1008.8M1192.7 1010.5V1005M1193.7 1010.5V1009.3M1194.7 1010.5V1005M1195.7 1010.5V1004M1196.7 1010.5V1005.9M1197.7 1010.5V1004.5M1198.7 1010.5V1008M1199.7 1010.5V1004.3M1200.7 1010.5V1008.1M1201.7 1010.5V1006.4M1202.7 1010.5V1004.4M1203.7 1010.5V1008.6M1204.7 1010.5V1005.1M1205.7 1010.5V1005.2M1206.7 1010.5V1003.2M1207.7 1010.5V1005M1208.7 1010.5V1005.3M1209.7 1010.5V1000.5M1210.7 1010.5V1008.3M1211.7 1010.5V999.5M1212.7 1010.5V1004.3M1213.7 1010.5V1004.2M1214.7 1010.5V1006.2M1215.7 1010.5V1007.5M1216.7 1010.5V1006.8M1217.7 1010.5V1007.6M1218.7 1010.5V1005.6M1219.7 1010.5V1005M1220.7 1010.5V1005.4M1221.7 1010.5V1008.5M1222.7 1010.5V1003.5M1223.7 1010.5V1008.2M1224.7 1010.5V1005.7M1225.7 1010.5V1006.6M1226.7 1010.5V1004.9M1227.7 1010.5V1006.2M1228.7 1010.5V1004.1M1229.7 1010.5V1003.2M1230.7 1010.5V1003.4M1231.7 1010.5V1003.8M1232.7 1010.5V1005.5M1233.7 1010.5V1005.6M1234.7 1010.5V1005.1M1235.7 1010.5V1006M1236.7 1010.5V1003.7M1237.7 1010.5V1007.9M1238.7 1010.5V1004.2M1239.7 1010.5V1005.8M1240.7 1010.5V1008.1M1241.7 1010.5V1003.9M1242.7 1010.5V1004.1M1243.7 1010.5V1008.4M1244.7 1010.5V1007.1M1245.7 1010.5V1007.4M1246.7 1010.5V1005.4M1247.7 1010.5V1004M1248.7 1010.5V1008.4M1249.7 1010.5V1004.5M1250.7 1010.5V1004.9M1251.7 1010.5V1006.7M1252.7 1010.5V1005.1M1253.7 1010.5V1004.9M1254.7 1010.5V1008.3M1255.7 1010.5V1008.1M1256.7 1010.5V1003.5M1257.7 1010.5V1004.2M1258.7 1010.5V1003.4M1259.7 1010.5V1008.5M1260.7 1010.5V1003.3M1261.7 1010.5V1006.2M1262.7 1010.5V1007.8M1263.7 1010.5V1005.1M1264.7 1010.5V1006.7M1265.7 1010.5V1008.4M1266.7 1010.5V1007.2M1267.7 1010.5V1004.9M1268.7 1010.5V1006.3M1269.7 1010.5V1006M1270.7 1010.5V1004.8M1271.7 1010.5V1008.6M1272.7 1010.5V1003.6M1273.7 1010.5V1004.4M1274.7 1010.5V1008.4M1275.7 1010.5V1004.4M1276.7 1010.5V1003.2M1277.7 1010.5V1006.1M1278.7 1010.5V1007.4M1279.7 1010.5V1000.1M1280.7 1010.5V1002.3M1281.7 1010.5V1007.2M1282.7 1010.5V1008M1283.7 1010.5V1003.3M1284.7 1010.5V1007.9M1285.7 1010.5V1006.2M1286.7 1010.5V1006.9M1287.7 1010.5V1003.5M1288.7 1010.5V1004.4M1289.7 1010.5V1008.6M1290.7 1010.5V1003.5M1291.7 1010.5V1005.2M1292.7 1010.5V1006.5M1293.7 1010.5V999.8M1294.7 1010.5V1008.6M1295.7 1010.5V1006.9M1296.7 1010.5V1003.2M1297.7 1010.5V1004M1298.7 1010.5V1007.9M1299.7 1010.5V1003.7M1300.7 1010.5V1004.8M1301.7 1010.5V1005.8M1302.7 1010.5V1005.9M1303.7 1010.5V1004M1304.7 1010.5V1006.5M1305.7 1010.5V1004.8M1306.7 1010.5V1004.9M1307.7 1010.5V1006.7M1308.7 1010.5V1006.3M1309.7 1010.5V1006.8M1310.7 1010.5V1004M1311.7 1010.5V1005.6M1312.7 1010.5V1004.2M1313.7 1010.5V1008.2M1314.7 1010.5V1003.3M1315.7 1010.5V1008.1M1316.7 1010.5V1003.8M1317.7 1010.5V1005.8M1318.7 1010.5V1005M1319.7 1010.5V1006.7M1320.7 1010.5V1007.3M1321.7 1010.5V1003.2M1322.7 1010.5V1005.6M1323.7 1010.5V1004.5M1324.7 1010.5V1008.3M1325.7 1010.5V1004.9M1326.7 1010.5V1003.7M1327.7 1010.5V1005.9M1328.7 1010.5V1007.7M1329.7 1010.5V1006M1330.7 1010.5V1008.5M1331.7 1010.5V1004M1332.7 1010.5V1007.1M1333.7 1010.5V1005.8M1334.7 1010.5V1007.7M1335.7 1010.5V1008.2M1336.7 1010.5V1005.2M1337.7 1010.5V1007.8M1338.7 1010.5V1003.7M1339.7 1010.5V1008.4M1340.7 1010.5V1004.7M1341.7 1010.5V1006.5M1342.7 1010.5V1003.3M1343.7 1010.5V1004.4M1344.7 1010.5V1004.9M1345.7 1010.5V1005M1346.7 1010.5V1007.1M1347.7 1010.5V1005.6M1348.7 1010.5V1005.6M1349.7 1010.5V1008.5M1350.7 1010.5V1003.4M1351.7 1010.5V1007.7M1352.7 1010.5V1007.7M1353.7 1010.5V1006.2M1354.7 1010.5V1005.6M1355.7 1010.5V1006.9M1356.7 1010.5V1008.3M1357.7 1010.5V1006.7M1358.7 1010.5V1008.2M1359.7 1010.5V1007.6M1360.7 1010.5V1008.3M1361.7 1010.5V1008.5M1362.7 1010.5V1008.1M1363.7 1010.5V1004.3M1364.7 1010.5V1004.7M1365.7 1010.5V1003.7M1366.7 1010.5V1005.4M1367.7 1010.5V1004.1M1368.7 1010.5V1007.3M1369.7 1010.5V1007.3M1370.7 1010.5V1005.5M1371.7 1010.5V1004.4M1372.7 1010.5V1006.4M1373.7 1010.5V1008.6M1374.7 1010.5V1005.3M1375.7 1010.5V1004.3M1376.7 1010.5V1005.7M1377.7 1010.5V1008.7M1378.7 1010.5V1008.4M1379.7 1010.5V1004.1M1380.7 1010.5V1007M1381.7 1010.5V1008.6M1382.7 1010.5V1004.8M1383.7 1010.5V1007.1M1384.7 1010.5V1008.5M1385.7 1010.5V1007.9M1386.7 1010.5V1008.2M1387.7 1010.5V1008.7M1388.7 1010.5V1008.9M1389.7 1010.5V1008.4M1390.7 1010.5V1007.3M1391.7 1010.5V1005.8M1392.7 1010.5V1008.3M1393.7 1010.5V1007.6M1394.7 1010.5V1004.6M1395.7 1010.5V1004.8M1396.7 1010.5V1006.3M1397.7 1010.5V1004.8M1398.7 1010.5V1004.1M1399.7 1010.5V1004.3M1400.7 1010.5V1002.3M1401.7 1010.5V1008.4M1402.7 1010.5V1006M1403.7 1010.5V1003.1M1404.7 1010.5V1003.9M1405.7 1010.5V1004.6M1406.7 1010.5V1003.6M1407.7 1010.5V1004.6M1408.7 1010.5V1006.8M1409.7 1010.5V1003.5M1410.7 1010.5V1007.5M1411.7 1010.5V1006.5M1412.7 1010.5V1005.9M1413.7 1010.5V1008M1414.7 1010.5V1004.6M1415.7 1010.5V1004.4M1416.7 1010.5V1003.8M1417.7 1010.5V1002M1418.7 1010.5V1005.3M1419.7 1010.5V1006.5M1420.7 1010.5V1000.7M1421.7 1010.5V1005.3M1422.7 1010.5V1008M1423.7 1010.5V1005.5M1424.7 1010.5V1005.5M1425.7 1010.5V1001.2M1426.7 1010.5V1006.2M1427.7 1010.5V998.5M1428.7 1010.5V1004.7M1429.7 1010.5V1001.6M1430.7 1010.5V1006.7M1431.7 1010.5V1005.4M1432.7 1010.5V1007.9M1433.7 1010.5V1006.1M1434.7 1010.5V1006.3M1435.7 1010.5V1004.9M1436.7 1010.5V1007.5M1437.7 1010.5V1005M1438.7 1010.5V1005.5M1439.7 1010.5V1007.5M1440.7 1010.5V1004.9M1441.7 1010.5V1005M1442.7 1010.5V1005.9M1443.7 1010.5V1005.1M1444.7 1010.5V1008.3M1445.7 1010.5V1006.9M1446.7 1010.5V1008.1M1447.7 1010.5V1004.3M1448.7 1010.5V1008.1M1449.7 1010.5V1003.9M1450.7 1010.5V1004.3M1451.7 1010.5V1008M1452.7 1010.5V1008.3M1453.7 1010.5V1006.2M1454.7 1010.5V1006.3M1455.7 1010.5V1004.5M1456.7 1010.5V1004.1M1457.7 1010.5V1006.8M1458.7 1010.5V1003.4M1459.7 1010.5V1005.2M1460.7 1010.5V1007.1M1461.7 1010.5V1004.4M1462.7 1010.5V1006.9M1463.7 1010.5V1007.5M1464.7 1010.5V1006.5M1465.7 1010.5V1004M1466.7 1010.5V1002M1467.7 1010.5V1005.1M1468.7 1010.5V1004.3M1469.7 1010.5V1004.4M1470.7 1010.5V1005M1471.7 1010.5V1003.4M1472.7 1010.5V1003.6M1473.7 1010.5V1006.6M1474.7 1010.5V1006.6M1475.7 1010.5V1005.2M1476.7 1010.5V1007M1477.7 1010.5V1006.3M1478.7 1010.5V1005.6M1479.7 1010.5V1007.9M1480.7 1010.5V1005.7M1481.7 1010.5V1004.3M1482.7 1010.5V1004.9M1483.7 1010.5V1007.9M1484.7 1010.5V1004.6M1485.7 1010.5V1004.2M1486.7 1010.5V1005.8M1487.7 1010.5V1008.2M1488.7 1010.5V1003.1M1489.7 1010.5V1005.6M1490.7 1010.5V1004.7M1491.7 1010.5V1007.7M1492.7 1010.5V1007.9M1493.7 1010.5V1006.5M1494.7 1010.5V1006.5M1495.7 1010.5V1006.3M1496.7 1010.5V1007.8M1497.7 1010.5V1007.3M1498.7 1010.5V1006.8M1499.7 1010.5V1006.9M1500.7 1010.5V1008.5M1501.7 1010.5V1004.3M1502.7 1010.5V1006M1503.7 1010.5V1007M1504.7 1010.5V1008.2M1505.7 1010.5V1004.7M1506.7 1010.5V1004.4M1507.7 1010.5V1003.5M1508.7 1010.5V1004.9M1509.7 1010.5V1007.7M1510.7 1010.5V1006.2M1511.7 1010.5V1005.8M1512.7 1010.5V1005.3M1513.7 1010.5V1007.7M1514.7 1010.5V1003.3M1515.7 1010.5V1007M1516.7 1010.5V1004.8M1517.7 1010.5V1006.6M1518.7 1010.5V1004.4M1519.7 1010.5V1006.2M1520.7 1010.5V1006.4M1521.7 1010.5V1000.1M1522.7 1010.5V1008.1M1523.7 1010.5V1008.6M1524.7 1010.5V1006.6M1525.7 1010.5V1005.3M1526.7 1010.5V1007.9M1527.7 1010.5V1005.1M1528.7 1010.5V1008.3M1529.7 1010.5V1007.9M1530.7 1010.5V1004.3M1531.7 1010.5V1005.3M1532.7 1010.5V1003.3M1533.7 1010.5V1003.8M1534.7 1010.5V1005.2M1535.7 1010.5V1007.8M1536.7 1010.5V1003.7M1537.7 1010.5V997.7M1538.7 1010.5V1007.2M1539.7 1010.5V1007.9M1540.7 1010.5V1003.1M1541.7 1010.5V1005.7M1542.7 1010.5V1003.1M1543.7 1010.5V1006M1544.7 1010.5V1006.7M1545.7 1010.5V1004.1M1546.7 1010.5V1005.9M1547.7 1010.5V1004M1548.7 1010.5V1003.9M1549.7 1010.5V1005M1550.7 1010.5V1007.8M1551.7 1010.5V1001.9M1552.7 1010.5V1004.3M1553.7 1010.5V1006.2M1554.7 1010.5V1005M1555.7 1010.5V1007.7M1556.7 1010.5V1003.6M1557.7 1010.5V1004.6M1558.7 1010.5V1007.3M1559.7 1010.5V1002M1560.7 1010.5V1003.8M1561.7 1010.5V1008.2M1562.7 1010.5V1003.7M1563.7 1010.5V1003.2M1564.7 1010.5V1007.7M1565.7 1010.5V1005.2M1566.7 1010.5V1003.7M1567.7 1010.5V1006.1M1568.7 1010.5V1007.8M1569.7 1010.5V1006.7M1570.7 1010.5V1000.6M1571.7 1010.5V1004.8M1572.7 1010.5V1008.2M1573.7 1010.5V1007.8M1574.7 1010.5V1006.9M1575.7 1010.5V1006.3M1576.7 1010.5V1003.9M1577.7 1010.5V1006.6M1578.7 1010.5V1008.1M1579.7 1010.5V1002.2M1580.7 1010.5V1004M1581.7 1010.5V1007.8M1582.7 1010.5V1004M1583.7 1010.5V1006M1584.7 1010.5V1007.5M1585.7 1010.5V1003.1M1586.7 1010.5V1006.9M1587.7 1010.5V1003.3M1588.7 1010.5V1005.6M1589.7 1010.5V1005.4M1590.7 1010.5V1006.6M1591.7 1010.5V1004.8M1592.7 1010.5V1004.7M1593.7 1010.5V1007.2M1594.7 1010.5V1008.2M1595.7 1010.5V1007.9M1596.7 1010.5V1008.4M1597.7 1010.5V1003.7M1598.7 1010.5V1006.8M1599.7 1010.5V1003.4M1600.7 1010.5V1005.9M1601.7 1010.5V1004.3M1602.7 1010.5V1008.5M1603.7 1010.5V1004M1604.7 1010.5V1005.2M1605.7 1010.5V1003.7M1606.7 1010.5V1008.3M1607.7 1010.5V1008M1608.7 1010.5V1008.1M1609.7 1010.5V1007.7M1610.7 1010.5V1006.9M1611.7 1010.5V1005M1612.7 1010.5V1003.3M1613.7 1010.5V1005.5M1614.7 1010.5V1006.8M1615.7 1010.5V1005.6M1616.7 1010.5V1005.1M1617.7 1010.5V1006.5M1618.7 1010.5V1003.8M1619.7 1010.5V1004.8M1620.7 1010.5V1006.9M1621.7 1010.5V1006.6M1622.7 1010.5V1007.6M1623.7 1010.5V1004.6M1624.7 1010.5V1008.6M1625.7 1010.5V1003.7M1626.7 1010.5V1003.5M1627.7 1010.5V1006.4M1628.7 1010.5V1004.7M1629.7 1010.5V1007.5M1630.7 1010.5V1005.7M1631.7 1010.5V1006.5M1632.7 1010.5V1003.1M1633.7 1010.5V1002.7M1634.7 1010.5V1005.6M1635.7 1010.5V1001.6" fill="none" stroke="#0000ff" stroke-width="1.2"/>
<text x="956" y="81.4" font-family="Liberation Mono" font-size="11.6" text-anchor="middle" font-weight="normal" fill="#000" transform="rotate(-90 956 81.4)">Luminosity</text>
<text x="964" y="141.7" font-family="Liberation Mono" font-size="11.1" text-anchor="middle" font-weight="normal" fill="#000" transform="rotate(-90 964 141.7)">I[mA]</text>
<text x="963.8" y="201.9" font-family="Liberation Mono" font-size="12" text-anchor="middle" font-weight="normal" fill="#000" transform="rotate(-90 963.8 201.9)">Rep.</text>
<text x="979.5" y="201.9" font-family="Liberation Mono" font-size="11.3" text-anchor="middle" font-weight="normal" fill="#000" transform="rotate(-90 979.5 201.9)">Rate[Hz]</text>
<text x="972.1" y="260.9" font-family="Liberation Mono" font-size="11.6" text-anchor="middle" font-weight="normal" fill="#000" transform="rotate(-90 972.1 260.9)">Q[nC]</text>
<text x="971" y="320.5" font-family="Liberation Mono" font-size="10.9" text-anchor="middle" font-weight="normal" fill="#000" transform="rotate(-90 971 320.5)">[mA/s]</text>
<text x="971.3" y="379.6" font-family="Liberation Mono" font-size="12" text-anchor="middle" font-weight="normal" fill="#000" transform="rotate(-90 971.3 379.6)">[%]</text>
<text x="959" y="456.1" font-family="Liberation Mono" font-size="15.7" text-anchor="middle" font-weight="bold" fill="#000" transform="rotate(-90 959 456.1)">ECL_FW</text>
<text x="976.6" y="541.8" font-family="Liberation Mono" font-size="13.4" text-anchor="middle" font-weight="bold" fill="#000" transform="rotate(-90 976.6 541.8)">[ms]</text>
<text x="940" y="604" font-family="Liberation Mono" font-size="15" text-anchor="start" font-weight="normal" fill="#000" stroke="#000" stroke-width="0.2">x10<tspan dy="-8" font-size="11">5</tspan></text>
<text x="975.9" y="626.8" font-family="Liberation Mono" font-size="12" text-anchor="middle" font-weight="normal" fill="#000" transform="rotate(-90 975.9 626.8)">Photon</text>
<text x="991.2" y="626.5" font-family="Liberation Mono" font-size="12" text-anchor="middle" font-weight="normal" fill="#000" transform="rotate(-90 991.2 626.5)">Rate</text>
<text x="940" y="686" font-family="Liberation Mono" font-size="15" text-anchor="start" font-weight="normal" fill="#000" stroke="#000" stroke-width="0.2">x10<tspan dy="-8" font-size="11">6</tspan></text>
<text x="986.2" y="711.7" font-family="Liberation Mono" font-size="10.6" text-anchor="middle" font-weight="normal" fill="#000" transform="rotate(-90 986.2 711.7)">[Hz]</text>
<text x="968.4" y="796.6" font-family="Liberation Mono" font-size="14.9" text-anchor="middle" font-weight="bold" fill="#000" transform="rotate(-90 968.4 796.6)">[uA]</text>
<text x="977" y="882" font-family="Liberation Mono" font-size="14.1" text-anchor="middle" font-weight="bold" fill="#000" transform="rotate(-90 977 882)">[mRad/s]</text>
<text x="972.8" y="966.8" font-family="Liberation Mono" font-size="15.4" text-anchor="middle" font-weight="bold" fill="#000" transform="rotate(-90 972.8 966.8)">VXD</text>
<text x="985.5" y="1036.5" font-family="Liberation Mono" font-size="21.5" text-anchor="start" font-weight="normal" fill="#000" stroke="#000" stroke-width="0.2">7<tspan dy="-10" font-size="14">h</tspan><tspan dy="10">0</tspan><tspan dy="-10" font-size="14">m</tspan><tspan dy="10">0</tspan><tspan dy="-10" font-size="14">s</tspan></text>
<text x="1075.2" y="1036.5" font-family="Liberation Mono" font-size="21.5" text-anchor="middle" font-weight="normal" fill="#000" stroke="#000" stroke-width="0.2">8<tspan dy="-10" font-size="14">h</tspan></text>
<text x="1145.5" y="1036.5" font-family="Liberation Mono" font-size="21.5" text-anchor="middle" font-weight="normal" fill="#000" stroke="#000" stroke-width="0.2">9<tspan dy="-10" font-size="14">h</tspan></text>
<text x="1215.8" y="1036.5" font-family="Liberation Mono" font-size="21.5" text-anchor="middle" font-weight="normal" fill="#000" stroke="#000" stroke-width="0.2">10<tspan dy="-10" font-size="14">h</tspan></text>
<text x="1286.2" y="1036.5" font-family="Liberation Mono" font-size="21.5" text-anchor="middle" font-weight="normal" fill="#000" stroke="#000" stroke-width="0.2">11<tspan dy="-10" font-size="14">h</tspan></text>
<text x="1356.5" y="1036.5" font-family="Liberation Mono" font-size="21.5" text-anchor="middle" font-weight="normal" fill="#000" stroke="#000" stroke-width="0.2">12<tspan dy="-10" font-size="14">h</tspan></text>
<text x="1426.8" y="1036.5" font-family="Liberation Mono" font-size="21.5" text-anchor="middle" font-weight="normal" fill="#000" stroke="#000" stroke-width="0.2">13<tspan dy="-10" font-size="14">h</tspan></text>
<text x="1497.2" y="1036.5" font-family="Liberation Mono" font-size="21.5" text-anchor="middle" font-weight="normal" fill="#000" stroke="#000" stroke-width="0.2">14<tspan dy="-10" font-size="14">h</tspan></text>
<text x="1567.5" y="1036.5" font-family="Liberation Mono" font-size="21.5" text-anchor="middle" font-weight="normal" fill="#000" stroke="#000" stroke-width="0.2">15<tspan dy="-10" font-size="14">h</tspan></text>
<text x="949" y="1058.6" font-family="Liberation Mono" font-size="20" text-anchor="start" font-weight="normal" fill="#000" stroke="#000" stroke-width="0.2">4/15/2026</text>
<rect x="1697.1" y="128.2" width="86" height="46.6" fill="#fff" stroke="#000" stroke-width="1"/>
<line x1="1699.1" y1="175.3" x2="1784.1" y2="175.3" stroke="#000" stroke-width="1.5"/>
<line x1="1783.6" y1="130.2" x2="1783.6" y2="175.8" stroke="#000" stroke-width="1.5"/>
<line x1="1703.9" y1="141.5" x2="1743.7" y2="141.5" stroke="#ff0000" stroke-width="1"/>
<text x="1749.2" y="147.3" font-family="Liberation Mono" font-size="15" text-anchor="start" font-weight="normal" fill="#000" stroke="#000" stroke-width="0.2">LER</text>
<line x1="1703.9" y1="160.5" x2="1743.7" y2="160.5" stroke="#0000ff" stroke-width="1"/>
<text x="1749.2" y="165.1" font-family="Liberation Mono" font-size="15" text-anchor="start" font-weight="normal" fill="#000" stroke="#000" stroke-width="0.2">HER</text>
<rect x="1682.3" y="183.3" width="100.8" height="39.4" fill="#fff" stroke="#000" stroke-width="1"/>
<line x1="1684.3" y1="223.2" x2="1784.1" y2="223.2" stroke="#000" stroke-width="1.5"/>
<line x1="1783.6" y1="185.3" x2="1783.6" y2="223.7" stroke="#000" stroke-width="1.5"/>
<line x1="1689" y1="202.5" x2="1728.9" y2="202.5" stroke="#1e88ee" stroke-width="1"/>
<text x="1733.5" y="210.8" font-family="Liberation Sans" font-size="26.5" text-anchor="start" textLength="41.5" lengthAdjust="spacingAndGlyphs">HER</text>
<rect x="1644.2" y="246.9" width="138.9" height="47" fill="#fff" stroke="#000" stroke-width="1"/>
<line x1="1646.2" y1="294.4" x2="1784.1" y2="294.4" stroke="#000" stroke-width="1.5"/>
<line x1="1783.6" y1="248.9" x2="1783.6" y2="294.9" stroke="#000" stroke-width="1.5"/>
<circle cx="1651.8" cy="261.3" r="2.2" fill="#3a5fd0"/>
<text x="1677.2" y="265.9" font-family="Liberation Mono" font-size="15" text-anchor="start" font-weight="normal" fill="#000" stroke="#000" stroke-width="0.2">QMD8E_1(nC)</text>
<circle cx="1651.8" cy="279.5" r="2.2" fill="#00cc00"/>
<text x="1677.2" y="284.2" font-family="Liberation Mono" font-size="15" text-anchor="start" font-weight="normal" fill="#000" stroke="#000" stroke-width="0.2">QMD8E_2(nC)</text>
<rect x="1670.8" y="307" width="112.3" height="28.8" fill="#fff" stroke="#000" stroke-width="1"/>
<line x1="1672.8" y1="336.3" x2="1784.1" y2="336.3" stroke="#000" stroke-width="1.5"/>
<line x1="1783.6" y1="309" x2="1783.6" y2="336.8" stroke="#000" stroke-width="1.5"/>
<circle cx="1679.3" cy="321" r="2.2" fill="#a020f0"/>
<text x="1704.7" y="326.1" font-family="Liberation Mono" font-size="15" text-anchor="start" font-weight="normal" fill="#000" stroke="#000" stroke-width="0.2">Inj.Rate</text>
<rect x="1626.4" y="366.3" width="156.7" height="64.4" fill="#fff" stroke="#000" stroke-width="1"/>
<line x1="1628.4" y1="431.2" x2="1784.1" y2="431.2" stroke="#000" stroke-width="1.5"/>
<line x1="1783.6" y1="368.3" x2="1783.6" y2="431.7" stroke="#000" stroke-width="1.5"/>
<circle cx="1634.8" cy="379.9" r="2.2" fill="#000"/>
<text x="1659.4" y="384.6" font-family="Liberation Mono" font-size="15" text-anchor="start" font-weight="normal" fill="#000" stroke="#000" stroke-width="0.2">Inj.Eff(BCM1)</text>
<circle cx="1634.8" cy="398.6" r="2.2" fill="#999"/>
<text x="1659.4" y="403.2" font-family="Liberation Mono" font-size="15" text-anchor="start" font-weight="normal" fill="#000" stroke="#000" stroke-width="0.2">Inj.Eff(BCM2)</text>
<text x="1659.4" y="421.4" font-family="Liberation Mono" font-size="15" text-anchor="start" font-weight="normal" fill="#000" stroke="#000" stroke-width="0.2">Inj.Eff</text>
<line x1="1626.4" y1="414.5" x2="1636.5" y2="414.5" stroke="#000" stroke-width="1"/>
<line x1="1636.5" y1="414.5" x2="1636.5" y2="430.7" stroke="#000" stroke-width="1"/>
<rect x="1670" y="430.7" width="113.1" height="28" fill="#fff" stroke="#000" stroke-width="1"/>
<line x1="1672" y1="459.2" x2="1784.1" y2="459.2" stroke="#000" stroke-width="1.5"/>
<line x1="1783.6" y1="432.7" x2="1783.6" y2="459.7" stroke="#000" stroke-width="1.5"/>
<line x1="1676.4" y1="444.5" x2="1716.6" y2="444.5" stroke="#008a42" stroke-width="1"/>
<text x="1721.7" y="449.8" font-family="Liberation Mono" font-size="15" text-anchor="start" font-weight="normal" fill="#000" stroke="#000" stroke-width="0.2">ECL_FW</text>
<rect x="1652.2" y="506.2" width="130.9" height="46.6" fill="#fff" stroke="#000" stroke-width="1"/>
<line x1="1654.2" y1="553.3" x2="1784.1" y2="553.3" stroke="#000" stroke-width="1.5"/>
<line x1="1783.6" y1="508.2" x2="1783.6" y2="553.8" stroke="#000" stroke-width="1.5"/>
<line x1="1659.4" y1="529.5" x2="1698.8" y2="529.5" stroke="#ff6347" stroke-width="1"/>
<text x="1704.7" y="525.3" font-family="Liberation Mono" font-size="15" text-anchor="start" font-weight="normal" fill="#000" stroke="#000" stroke-width="0.2">ECL BG</text>
<text x="1704.7" y="542.2" font-family="Liberation Mono" font-size="15" text-anchor="start" font-weight="normal" fill="#000" stroke="#000" stroke-width="0.2">Duration</text>
<rect x="1679.3" y="600.3" width="103.8" height="46.6" fill="#fff" stroke="#000" stroke-width="1"/>
<line x1="1681.3" y1="647.4" x2="1784.1" y2="647.4" stroke="#000" stroke-width="1.5"/>
<line x1="1783.6" y1="602.3" x2="1783.6" y2="647.9" stroke="#000" stroke-width="1.5"/>
<line x1="1685.7" y1="614.5" x2="1725.9" y2="614.5" stroke="#f0a800" stroke-width="1"/>
<text x="1731" y="619.3" font-family="Liberation Mono" font-size="15" text-anchor="start" font-weight="normal" fill="#000" stroke="#000" stroke-width="0.2">SR_FW</text>
<line x1="1685.7" y1="632.5" x2="1725.9" y2="632.5" stroke="#ff0000" stroke-width="1"/>
<text x="1731" y="637.1" font-family="Liberation Mono" font-size="15" text-anchor="start" font-weight="normal" fill="#000" stroke="#000" stroke-width="0.2">SR_BW</text>
<rect x="1652.2" y="685.4" width="130.9" height="28.4" fill="#fff" stroke="#000" stroke-width="1"/>
<line x1="1654.2" y1="714.3" x2="1784.1" y2="714.3" stroke="#000" stroke-width="1.5"/>
<line x1="1783.6" y1="687.4" x2="1783.6" y2="714.8" stroke="#000" stroke-width="1.5"/>
<line x1="1659" y1="699.5" x2="1698.8" y2="699.5" stroke="#4a78ff" stroke-width="1"/>
<text x="1704.7" y="704.1" font-family="Liberation Mono" font-size="15" text-anchor="start" font-weight="normal" fill="#000" stroke="#000" stroke-width="0.2">TOP [Hz]</text>
<rect x="1670" y="770.2" width="113.1" height="46.6" fill="#fff" stroke="#000" stroke-width="1"/>
<line x1="1672" y1="817.3" x2="1784.1" y2="817.3" stroke="#000" stroke-width="1.5"/>
<line x1="1783.6" y1="772.2" x2="1783.6" y2="817.8" stroke="#000" stroke-width="1.5"/>
<line x1="1676.4" y1="783.5" x2="1716.6" y2="783.5" stroke="#00cc00" stroke-width="1"/>
<text x="1721.7" y="788.8" font-family="Liberation Mono" font-size="15" text-anchor="start" font-weight="normal" fill="#000" stroke="#000" stroke-width="0.2">CDC</text>
<line x1="1676.4" y1="802.5" x2="1716.6" y2="802.5" stroke="#008a00" stroke-width="1"/>
<text x="1721.7" y="807.5" font-family="Liberation Mono" font-size="15" text-anchor="start" font-weight="normal" fill="#000" stroke="#000" stroke-width="0.2">CDC_av</text>
<rect x="1661.1" y="855.8" width="122" height="29.2" fill="#fff" stroke="#000" stroke-width="1"/>
<line x1="1663.1" y1="885.5" x2="1784.1" y2="885.5" stroke="#000" stroke-width="1.5"/>
<line x1="1783.6" y1="857.8" x2="1783.6" y2="886" stroke="#000" stroke-width="1.5"/>
<line x1="1667.9" y1="870.5" x2="1707.7" y2="870.5" stroke="#ee82ee" stroke-width="1"/>
<text x="1713.2" y="875.3" font-family="Liberation Mono" font-size="15" text-anchor="start" font-weight="normal" fill="#000" stroke="#000" stroke-width="0.2">Diamond</text>
<rect x="1643.3" y="941.4" width="139.8" height="46.6" fill="#fff" stroke="#000" stroke-width="1"/>
<line x1="1645.3" y1="988.5" x2="1784.1" y2="988.5" stroke="#000" stroke-width="1.5"/>
<line x1="1783.6" y1="943.4" x2="1783.6" y2="989" stroke="#000" stroke-width="1.5"/>
<line x1="1650" y1="954.5" x2="1690" y2="954.5" stroke="#ff0000" stroke-width="1"/>
<text x="1695.4" y="960" font-family="Liberation Mono" font-size="15" text-anchor="start" font-weight="normal" fill="#000" stroke="#000" stroke-width="0.2">VXD_BW180</text>
<line x1="1650" y1="973.5" x2="1690" y2="973.5" stroke="#0000ff" stroke-width="1"/>
<text x="1695.4" y="978.2" font-family="Liberation Mono" font-size="15" text-anchor="start" font-weight="normal" fill="#000" stroke="#000" stroke-width="0.2">VXD_BW270</text>
</svg></body></html>
